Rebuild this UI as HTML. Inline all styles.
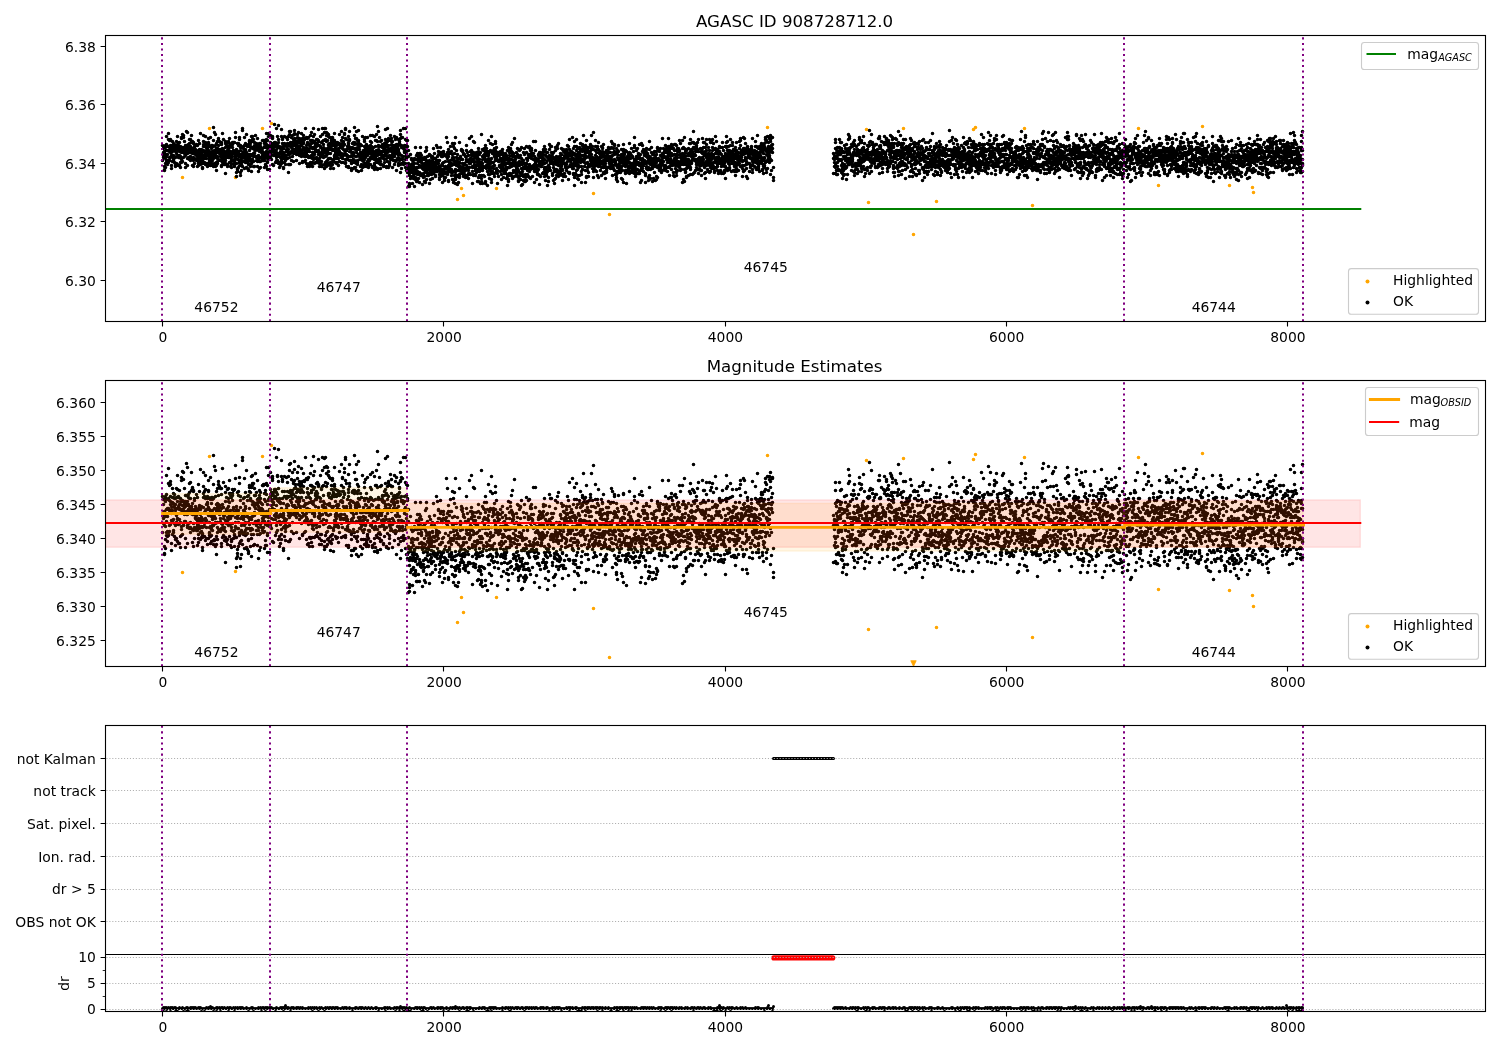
<!DOCTYPE html>
<html><head><meta charset="utf-8"><title>AGASC ID 908728712.0</title>
<style>html,body{margin:0;padding:0;background:#fff}svg{display:block;will-change:transform}text{font-family:"DejaVu Sans","Liberation Sans",sans-serif;font-size:13.89px;fill:#000}</style></head>
<body>
<svg width="1500" height="1050" viewBox="0 0 1500 1050">
<defs>
<clipPath id="c0"><rect x="105.5" y="35.5" width="1380.0" height="286.0"/></clipPath>
<clipPath id="c1"><rect x="105.5" y="380.5" width="1380.0" height="286.0"/></clipPath>
<clipPath id="c2"><rect x="105.5" y="725.5" width="1380.0" height="286.0"/></clipPath>
</defs>
<rect width="1500" height="1050" fill="#fff"/>
<g clip-path="url(#c0)">
<path d="M182.5 177.5h0M209.5 128.5h0M235.5 177.5h0M262.5 128.5h0M271.5 123.5h0M457.5 199.5h0M461.5 188.5h0M463.5 195.5h0M496.5 188.5h0M593.5 193.5h0M609.5 214.5h0M767.5 127.5h0M866.5 129.5h0M868.5 202.5h0M903.5 128.5h0M936.5 201.5h0M973.5 129.5h0M975.5 127.5h0M1024.5 128.5h0M1032.5 205.5h0M1138.5 128.5h0M1158.5 185.5h0M1202.5 126.5h0M1229.5 185.5h0M1252.5 187.5h0M1253.5 192.5h0M913.5 234.5h0" stroke="#ffa500" fill="none" stroke-linecap="round" stroke-width="3.6"/>
<path d="M162.5 145.5h0M162.5 160.5h0M163.5 148.5h0M163.5 146.5h0M163.5 157.5h0M163.5 154.5h0M163.5 153.5h0M163.5 152.5h0M163.5 155.5h0M164.5 153.5h0M164.5 170.5h0M164.5 169.5h0M164.5 151.5h0M164.5 157.5h0M164.5 153.5h0M164.5 166.5h0M165.5 158.5h0M165.5 163.5h0M165.5 167.5h0M165.5 154.5h0M165.5 146.5h0M165.5 145.5h0M165.5 147.5h0M166.5 160.5h0M166.5 144.5h0M166.5 136.5h0M166.5 162.5h0M166.5 156.5h0M166.5 150.5h0M166.5 146.5h0M167.5 154.5h0M167.5 162.5h0M167.5 164.5h0M167.5 162.5h0M167.5 150.5h0M167.5 161.5h0M167.5 160.5h0M168.5 146.5h0M168.5 139.5h0M168.5 162.5h0M168.5 133.5h0M168.5 160.5h0M168.5 150.5h0M168.5 161.5h0M169.5 160.5h0M169.5 140.5h0M169.5 147.5h0M169.5 140.5h0M169.5 151.5h0M169.5 157.5h0M169.5 160.5h0M170.5 157.5h0M170.5 139.5h0M170.5 152.5h0M170.5 148.5h0M170.5 145.5h0M170.5 140.5h0M170.5 147.5h0M171.5 165.5h0M171.5 151.5h0M171.5 148.5h0M171.5 155.5h0M171.5 168.5h0M171.5 152.5h0M171.5 149.5h0M172.5 145.5h0M172.5 151.5h0M172.5 161.5h0M172.5 141.5h0M172.5 145.5h0M172.5 156.5h0M172.5 147.5h0M173.5 148.5h0M173.5 160.5h0M173.5 143.5h0M173.5 145.5h0M173.5 149.5h0M173.5 155.5h0M173.5 159.5h0M174.5 162.5h0M174.5 149.5h0M174.5 150.5h0M174.5 156.5h0M174.5 146.5h0M174.5 144.5h0M175.5 157.5h0M175.5 150.5h0M175.5 146.5h0M175.5 166.5h0M175.5 148.5h0M175.5 151.5h0M175.5 164.5h0M176.5 163.5h0M176.5 156.5h0M176.5 145.5h0M176.5 153.5h0M176.5 141.5h0M176.5 156.5h0M176.5 145.5h0M177.5 142.5h0M177.5 147.5h0M177.5 155.5h0M177.5 136.5h0M177.5 150.5h0M177.5 164.5h0M177.5 155.5h0M178.5 149.5h0M178.5 157.5h0M178.5 145.5h0M178.5 157.5h0M178.5 157.5h0M178.5 165.5h0M178.5 145.5h0M179.5 142.5h0M179.5 151.5h0M179.5 148.5h0M179.5 165.5h0M179.5 155.5h0M179.5 150.5h0M179.5 157.5h0M180.5 156.5h0M180.5 148.5h0M180.5 147.5h0M180.5 146.5h0M180.5 162.5h0M180.5 167.5h0M180.5 156.5h0M181.5 137.5h0M181.5 162.5h0M181.5 138.5h0M181.5 158.5h0M181.5 159.5h0M181.5 152.5h0M181.5 150.5h0M182.5 161.5h0M182.5 150.5h0M182.5 147.5h0M182.5 134.5h0M182.5 147.5h0M182.5 151.5h0M182.5 149.5h0M183.5 157.5h0M183.5 152.5h0M183.5 135.5h0M183.5 157.5h0M183.5 151.5h0M183.5 151.5h0M183.5 137.5h0M184.5 149.5h0M184.5 156.5h0M184.5 147.5h0M184.5 141.5h0M184.5 153.5h0M184.5 148.5h0M184.5 150.5h0M185.5 148.5h0M185.5 145.5h0M185.5 155.5h0M185.5 147.5h0M185.5 167.5h0M185.5 149.5h0M185.5 163.5h0M186.5 149.5h0M186.5 151.5h0M186.5 145.5h0M186.5 148.5h0M186.5 131.5h0M186.5 153.5h0M186.5 152.5h0M187.5 153.5h0M187.5 165.5h0M187.5 132.5h0M187.5 152.5h0M187.5 158.5h0M187.5 158.5h0M187.5 147.5h0M188.5 157.5h0M188.5 150.5h0M188.5 152.5h0M188.5 149.5h0M188.5 150.5h0M188.5 145.5h0M188.5 144.5h0M189.5 158.5h0M189.5 139.5h0M189.5 149.5h0M189.5 146.5h0M189.5 152.5h0M189.5 159.5h0M189.5 143.5h0M190.5 156.5h0M190.5 146.5h0M190.5 152.5h0M190.5 150.5h0M190.5 139.5h0M190.5 160.5h0M190.5 158.5h0M191.5 151.5h0M191.5 150.5h0M191.5 152.5h0M191.5 135.5h0M191.5 149.5h0M191.5 142.5h0M192.5 141.5h0M192.5 159.5h0M192.5 142.5h0M192.5 165.5h0M192.5 153.5h0M192.5 148.5h0M192.5 153.5h0M193.5 143.5h0M193.5 157.5h0M193.5 160.5h0M193.5 153.5h0M193.5 142.5h0M193.5 166.5h0M193.5 151.5h0M194.5 163.5h0M194.5 158.5h0M194.5 151.5h0M194.5 146.5h0M194.5 147.5h0M194.5 151.5h0M194.5 152.5h0M195.5 152.5h0M195.5 154.5h0M195.5 149.5h0M195.5 149.5h0M195.5 152.5h0M195.5 154.5h0M195.5 159.5h0M196.5 155.5h0M196.5 153.5h0M196.5 144.5h0M196.5 158.5h0M196.5 152.5h0M196.5 150.5h0M196.5 160.5h0M197.5 157.5h0M197.5 158.5h0M197.5 160.5h0M197.5 145.5h0M197.5 156.5h0M197.5 151.5h0M197.5 166.5h0M198.5 163.5h0M198.5 140.5h0M198.5 157.5h0M198.5 154.5h0M198.5 165.5h0M198.5 161.5h0M198.5 152.5h0M199.5 155.5h0M199.5 143.5h0M199.5 150.5h0M199.5 159.5h0M199.5 149.5h0M199.5 152.5h0M199.5 149.5h0M200.5 133.5h0M200.5 156.5h0M200.5 160.5h0M200.5 150.5h0M200.5 164.5h0M200.5 156.5h0M200.5 153.5h0M201.5 154.5h0M201.5 149.5h0M201.5 155.5h0M201.5 152.5h0M201.5 162.5h0M201.5 160.5h0M201.5 158.5h0M202.5 158.5h0M202.5 167.5h0M202.5 162.5h0M202.5 168.5h0M202.5 155.5h0M202.5 161.5h0M202.5 163.5h0M203.5 144.5h0M203.5 141.5h0M203.5 150.5h0M203.5 146.5h0M203.5 155.5h0M203.5 135.5h0M203.5 158.5h0M204.5 155.5h0M204.5 156.5h0M204.5 158.5h0M204.5 152.5h0M204.5 145.5h0M204.5 143.5h0M204.5 162.5h0M205.5 155.5h0M205.5 142.5h0M205.5 154.5h0M205.5 164.5h0M205.5 151.5h0M205.5 136.5h0M205.5 146.5h0M206.5 151.5h0M206.5 158.5h0M206.5 155.5h0M206.5 148.5h0M206.5 163.5h0M206.5 145.5h0M206.5 145.5h0M207.5 146.5h0M207.5 166.5h0M207.5 147.5h0M207.5 148.5h0M207.5 145.5h0M207.5 151.5h0M208.5 153.5h0M208.5 142.5h0M208.5 150.5h0M208.5 145.5h0M208.5 138.5h0M208.5 163.5h0M208.5 143.5h0M209.5 156.5h0M209.5 151.5h0M209.5 162.5h0M209.5 153.5h0M209.5 161.5h0M209.5 160.5h0M209.5 158.5h0M210.5 146.5h0M210.5 152.5h0M210.5 158.5h0M210.5 162.5h0M210.5 152.5h0M210.5 165.5h0M210.5 137.5h0M211.5 148.5h0M211.5 154.5h0M211.5 162.5h0M211.5 145.5h0M211.5 158.5h0M211.5 164.5h0M211.5 159.5h0M212.5 160.5h0M212.5 145.5h0M212.5 155.5h0M212.5 157.5h0M212.5 151.5h0M212.5 154.5h0M212.5 146.5h0M213.5 166.5h0M213.5 127.5h0M213.5 153.5h0M213.5 140.5h0M213.5 158.5h0M213.5 146.5h0M213.5 164.5h0M214.5 132.5h0M214.5 153.5h0M214.5 150.5h0M214.5 163.5h0M214.5 155.5h0M214.5 154.5h0M214.5 164.5h0M215.5 156.5h0M215.5 166.5h0M215.5 154.5h0M215.5 134.5h0M215.5 157.5h0M215.5 154.5h0M215.5 145.5h0M216.5 152.5h0M216.5 151.5h0M216.5 162.5h0M216.5 165.5h0M216.5 170.5h0M216.5 143.5h0M216.5 148.5h0M217.5 161.5h0M217.5 158.5h0M217.5 150.5h0M217.5 148.5h0M217.5 163.5h0M217.5 141.5h0M217.5 156.5h0M218.5 140.5h0M218.5 150.5h0M218.5 159.5h0M218.5 138.5h0M218.5 145.5h0M218.5 151.5h0M218.5 149.5h0M219.5 141.5h0M219.5 152.5h0M219.5 149.5h0M219.5 153.5h0M219.5 149.5h0M219.5 149.5h0M219.5 152.5h0M220.5 142.5h0M220.5 156.5h0M220.5 149.5h0M220.5 152.5h0M220.5 160.5h0M220.5 154.5h0M220.5 151.5h0M221.5 159.5h0M221.5 144.5h0M221.5 142.5h0M221.5 156.5h0M221.5 166.5h0M221.5 150.5h0M221.5 165.5h0M222.5 159.5h0M222.5 159.5h0M222.5 158.5h0M222.5 162.5h0M222.5 148.5h0M222.5 157.5h0M222.5 133.5h0M223.5 152.5h0M223.5 139.5h0M223.5 162.5h0M223.5 150.5h0M223.5 155.5h0M223.5 153.5h0M224.5 152.5h0M224.5 160.5h0M224.5 152.5h0M224.5 164.5h0M224.5 158.5h0M224.5 164.5h0M224.5 153.5h0M225.5 147.5h0M225.5 143.5h0M225.5 160.5h0M225.5 141.5h0M225.5 163.5h0M225.5 155.5h0M225.5 173.5h0M226.5 151.5h0M226.5 152.5h0M226.5 152.5h0M226.5 157.5h0M226.5 145.5h0M226.5 151.5h0M226.5 164.5h0M227.5 142.5h0M227.5 154.5h0M227.5 166.5h0M227.5 164.5h0M227.5 150.5h0M227.5 154.5h0M227.5 156.5h0M228.5 146.5h0M228.5 152.5h0M228.5 141.5h0M228.5 149.5h0M228.5 155.5h0M228.5 157.5h0M228.5 147.5h0M229.5 157.5h0M229.5 143.5h0M229.5 162.5h0M229.5 147.5h0M229.5 157.5h0M229.5 153.5h0M229.5 138.5h0M230.5 166.5h0M230.5 154.5h0M230.5 144.5h0M230.5 145.5h0M230.5 154.5h0M230.5 151.5h0M230.5 157.5h0M231.5 145.5h0M231.5 153.5h0M231.5 167.5h0M231.5 164.5h0M231.5 160.5h0M231.5 158.5h0M231.5 163.5h0M232.5 144.5h0M232.5 147.5h0M232.5 142.5h0M232.5 153.5h0M232.5 144.5h0M232.5 156.5h0M232.5 144.5h0M233.5 152.5h0M233.5 160.5h0M233.5 152.5h0M233.5 163.5h0M233.5 151.5h0M233.5 150.5h0M233.5 142.5h0M234.5 152.5h0M234.5 152.5h0M234.5 161.5h0M234.5 159.5h0M234.5 162.5h0M234.5 142.5h0M234.5 166.5h0M235.5 163.5h0M235.5 158.5h0M235.5 158.5h0M235.5 156.5h0M235.5 154.5h0M235.5 132.5h0M235.5 137.5h0M236.5 150.5h0M236.5 151.5h0M236.5 151.5h0M236.5 172.5h0M236.5 176.5h0M236.5 149.5h0M236.5 163.5h0M237.5 171.5h0M237.5 159.5h0M237.5 168.5h0M237.5 154.5h0M237.5 169.5h0M237.5 154.5h0M237.5 143.5h0M238.5 153.5h0M238.5 159.5h0M238.5 151.5h0M238.5 145.5h0M238.5 167.5h0M238.5 143.5h0M238.5 156.5h0M239.5 162.5h0M239.5 137.5h0M239.5 165.5h0M239.5 160.5h0M239.5 161.5h0M239.5 139.5h0M240.5 147.5h0M240.5 172.5h0M240.5 175.5h0M240.5 164.5h0M240.5 145.5h0M240.5 154.5h0M240.5 150.5h0M241.5 170.5h0M241.5 154.5h0M241.5 159.5h0M241.5 160.5h0M241.5 157.5h0M241.5 164.5h0M241.5 161.5h0M242.5 166.5h0M242.5 157.5h0M242.5 153.5h0M242.5 161.5h0M242.5 130.5h0M242.5 157.5h0M242.5 128.5h0M243.5 153.5h0M243.5 148.5h0M243.5 151.5h0M243.5 154.5h0M243.5 155.5h0M243.5 146.5h0M243.5 161.5h0M244.5 145.5h0M244.5 151.5h0M244.5 152.5h0M244.5 157.5h0M244.5 137.5h0M244.5 168.5h0M244.5 160.5h0M245.5 157.5h0M245.5 162.5h0M245.5 156.5h0M245.5 150.5h0M245.5 143.5h0M245.5 149.5h0M245.5 159.5h0M246.5 161.5h0M246.5 134.5h0M246.5 161.5h0M246.5 159.5h0M246.5 152.5h0M246.5 167.5h0M246.5 154.5h0M247.5 161.5h0M247.5 146.5h0M247.5 154.5h0M247.5 159.5h0M247.5 168.5h0M247.5 145.5h0M247.5 161.5h0M248.5 154.5h0M248.5 164.5h0M248.5 169.5h0M248.5 170.5h0M248.5 144.5h0M248.5 163.5h0M248.5 156.5h0M249.5 159.5h0M249.5 155.5h0M249.5 143.5h0M249.5 140.5h0M249.5 150.5h0M249.5 141.5h0M249.5 157.5h0M250.5 147.5h0M250.5 143.5h0M250.5 146.5h0M250.5 160.5h0M250.5 166.5h0M250.5 154.5h0M250.5 146.5h0M251.5 155.5h0M251.5 163.5h0M251.5 141.5h0M251.5 159.5h0M251.5 171.5h0M251.5 136.5h0M251.5 161.5h0M252.5 136.5h0M252.5 159.5h0M252.5 147.5h0M252.5 140.5h0M252.5 154.5h0M252.5 139.5h0M252.5 148.5h0M253.5 156.5h0M253.5 153.5h0M253.5 139.5h0M253.5 147.5h0M253.5 148.5h0M253.5 166.5h0M253.5 161.5h0M254.5 153.5h0M254.5 149.5h0M254.5 142.5h0M254.5 152.5h0M254.5 149.5h0M254.5 145.5h0M254.5 166.5h0M255.5 144.5h0M255.5 148.5h0M255.5 135.5h0M255.5 148.5h0M255.5 150.5h0M255.5 156.5h0M255.5 144.5h0M256.5 160.5h0M256.5 157.5h0M256.5 148.5h0M256.5 143.5h0M256.5 157.5h0M256.5 156.5h0M257.5 166.5h0M257.5 146.5h0M257.5 138.5h0M257.5 148.5h0M257.5 147.5h0M257.5 156.5h0M257.5 161.5h0M258.5 155.5h0M258.5 149.5h0M258.5 150.5h0M258.5 146.5h0M258.5 158.5h0M258.5 171.5h0M258.5 160.5h0M259.5 143.5h0M259.5 168.5h0M259.5 147.5h0M259.5 161.5h0M259.5 146.5h0M259.5 151.5h0M259.5 144.5h0M260.5 146.5h0M260.5 161.5h0M260.5 148.5h0M260.5 143.5h0M260.5 167.5h0M260.5 150.5h0M260.5 157.5h0M261.5 152.5h0M261.5 158.5h0M261.5 152.5h0M261.5 152.5h0M261.5 148.5h0M261.5 150.5h0M261.5 148.5h0M262.5 156.5h0M262.5 151.5h0M262.5 160.5h0M262.5 154.5h0M262.5 148.5h0M262.5 156.5h0M262.5 140.5h0M263.5 160.5h0M263.5 140.5h0M263.5 158.5h0M263.5 152.5h0M263.5 140.5h0M263.5 154.5h0M263.5 154.5h0M264.5 167.5h0M264.5 140.5h0M264.5 153.5h0M264.5 146.5h0M264.5 160.5h0M264.5 143.5h0M264.5 156.5h0M265.5 157.5h0M265.5 153.5h0M265.5 142.5h0M265.5 147.5h0M265.5 144.5h0M265.5 164.5h0M265.5 166.5h0M266.5 133.5h0M266.5 151.5h0M266.5 166.5h0M266.5 144.5h0M266.5 139.5h0M266.5 154.5h0M266.5 153.5h0M267.5 140.5h0M267.5 161.5h0M267.5 158.5h0M267.5 169.5h0M267.5 162.5h0M267.5 148.5h0M267.5 157.5h0M268.5 136.5h0M268.5 154.5h0M268.5 146.5h0M268.5 147.5h0M268.5 156.5h0M268.5 133.5h0M268.5 153.5h0M269.5 151.5h0M269.5 156.5h0M269.5 158.5h0M269.5 151.5h0M269.5 152.5h0M269.5 169.5h0M269.5 145.5h0M270.5 142.5h0M270.5 152.5h0M270.5 158.5h0M270.5 135.5h0M270.5 157.5h0M270.5 145.5h0M270.5 146.5h0M271.5 154.5h0M271.5 143.5h0M271.5 159.5h0M271.5 149.5h0M271.5 146.5h0M271.5 147.5h0M271.5 144.5h0M272.5 136.5h0M272.5 137.5h0M272.5 150.5h0M272.5 164.5h0M272.5 138.5h0M272.5 147.5h0M273.5 165.5h0M273.5 148.5h0M273.5 155.5h0M273.5 147.5h0M273.5 151.5h0M273.5 144.5h0M273.5 143.5h0M274.5 142.5h0M274.5 153.5h0M274.5 124.5h0M274.5 143.5h0M274.5 151.5h0M274.5 151.5h0M274.5 146.5h0M275.5 155.5h0M275.5 142.5h0M275.5 145.5h0M275.5 153.5h0M275.5 153.5h0M275.5 142.5h0M275.5 162.5h0M276.5 160.5h0M276.5 149.5h0M276.5 128.5h0M276.5 152.5h0M276.5 146.5h0M276.5 143.5h0M276.5 157.5h0M277.5 136.5h0M277.5 144.5h0M277.5 153.5h0M277.5 147.5h0M277.5 156.5h0M277.5 160.5h0M277.5 136.5h0M278.5 147.5h0M278.5 139.5h0M278.5 125.5h0M278.5 147.5h0M278.5 142.5h0M278.5 154.5h0M278.5 163.5h0M279.5 147.5h0M279.5 153.5h0M279.5 146.5h0M279.5 167.5h0M279.5 162.5h0M279.5 146.5h0M279.5 156.5h0M280.5 151.5h0M280.5 153.5h0M280.5 157.5h0M280.5 165.5h0M280.5 153.5h0M280.5 148.5h0M280.5 148.5h0M281.5 159.5h0M281.5 129.5h0M281.5 163.5h0M281.5 161.5h0M281.5 136.5h0M281.5 153.5h0M281.5 150.5h0M282.5 138.5h0M282.5 156.5h0M282.5 139.5h0M282.5 146.5h0M282.5 146.5h0M282.5 153.5h0M282.5 143.5h0M283.5 148.5h0M283.5 168.5h0M283.5 154.5h0M283.5 167.5h0M283.5 153.5h0M283.5 158.5h0M283.5 152.5h0M284.5 162.5h0M284.5 154.5h0M284.5 145.5h0M284.5 158.5h0M284.5 155.5h0M284.5 136.5h0M284.5 143.5h0M285.5 160.5h0M285.5 159.5h0M285.5 157.5h0M285.5 155.5h0M285.5 164.5h0M285.5 155.5h0M285.5 160.5h0M286.5 145.5h0M286.5 137.5h0M286.5 155.5h0M286.5 151.5h0M286.5 149.5h0M286.5 150.5h0M286.5 146.5h0M287.5 143.5h0M287.5 148.5h0M287.5 158.5h0M287.5 139.5h0M287.5 145.5h0M287.5 149.5h0M287.5 145.5h0M288.5 136.5h0M288.5 153.5h0M288.5 164.5h0M288.5 172.5h0M288.5 149.5h0M288.5 152.5h0M289.5 154.5h0M289.5 145.5h0M289.5 134.5h0M289.5 143.5h0M289.5 164.5h0M289.5 131.5h0M289.5 157.5h0M290.5 131.5h0M290.5 146.5h0M290.5 153.5h0M290.5 164.5h0M290.5 142.5h0M290.5 152.5h0M290.5 152.5h0M291.5 137.5h0M291.5 144.5h0M291.5 147.5h0M291.5 143.5h0M291.5 160.5h0M291.5 144.5h0M291.5 151.5h0M292.5 143.5h0M292.5 149.5h0M292.5 149.5h0M292.5 142.5h0M292.5 135.5h0M292.5 156.5h0M292.5 146.5h0M293.5 153.5h0M293.5 161.5h0M293.5 152.5h0M293.5 144.5h0M293.5 149.5h0M293.5 139.5h0M293.5 139.5h0M294.5 138.5h0M294.5 141.5h0M294.5 134.5h0M294.5 133.5h0M294.5 152.5h0M294.5 149.5h0M294.5 130.5h0M295.5 153.5h0M295.5 145.5h0M295.5 150.5h0M295.5 152.5h0M295.5 141.5h0M295.5 140.5h0M295.5 151.5h0M296.5 143.5h0M296.5 147.5h0M296.5 143.5h0M296.5 160.5h0M296.5 150.5h0M296.5 154.5h0M296.5 150.5h0M297.5 152.5h0M297.5 146.5h0M297.5 134.5h0M297.5 137.5h0M297.5 142.5h0M297.5 151.5h0M297.5 143.5h0M298.5 142.5h0M298.5 142.5h0M298.5 140.5h0M298.5 132.5h0M298.5 147.5h0M298.5 148.5h0M298.5 146.5h0M299.5 146.5h0M299.5 138.5h0M299.5 163.5h0M299.5 147.5h0M299.5 153.5h0M299.5 155.5h0M299.5 149.5h0M300.5 149.5h0M300.5 140.5h0M300.5 142.5h0M300.5 139.5h0M300.5 141.5h0M300.5 143.5h0M300.5 150.5h0M301.5 142.5h0M301.5 145.5h0M301.5 156.5h0M301.5 154.5h0M301.5 133.5h0M301.5 140.5h0M301.5 139.5h0M302.5 143.5h0M302.5 138.5h0M302.5 152.5h0M302.5 162.5h0M302.5 161.5h0M302.5 154.5h0M302.5 143.5h0M303.5 153.5h0M303.5 149.5h0M303.5 141.5h0M303.5 147.5h0M303.5 153.5h0M303.5 135.5h0M303.5 143.5h0M304.5 138.5h0M304.5 156.5h0M304.5 149.5h0M304.5 161.5h0M304.5 149.5h0M304.5 139.5h0M305.5 156.5h0M305.5 148.5h0M305.5 160.5h0M305.5 128.5h0M305.5 155.5h0M305.5 148.5h0M305.5 152.5h0M306.5 163.5h0M306.5 151.5h0M306.5 155.5h0M306.5 154.5h0M306.5 152.5h0M306.5 137.5h0M306.5 145.5h0M307.5 143.5h0M307.5 148.5h0M307.5 150.5h0M307.5 142.5h0M307.5 138.5h0M307.5 166.5h0M307.5 155.5h0M308.5 157.5h0M308.5 157.5h0M308.5 144.5h0M308.5 156.5h0M308.5 165.5h0M308.5 137.5h0M308.5 143.5h0M309.5 163.5h0M309.5 151.5h0M309.5 145.5h0M309.5 166.5h0M309.5 151.5h0M309.5 156.5h0M309.5 148.5h0M310.5 146.5h0M310.5 157.5h0M310.5 135.5h0M310.5 163.5h0M310.5 162.5h0M310.5 140.5h0M310.5 156.5h0M311.5 155.5h0M311.5 147.5h0M311.5 165.5h0M311.5 142.5h0M311.5 132.5h0M311.5 140.5h0M311.5 143.5h0M312.5 158.5h0M312.5 166.5h0M312.5 152.5h0M312.5 140.5h0M312.5 162.5h0M312.5 148.5h0M312.5 157.5h0M313.5 157.5h0M313.5 159.5h0M313.5 148.5h0M313.5 128.5h0M313.5 136.5h0M313.5 147.5h0M313.5 142.5h0M314.5 152.5h0M314.5 153.5h0M314.5 141.5h0M314.5 141.5h0M314.5 134.5h0M314.5 163.5h0M314.5 154.5h0M315.5 149.5h0M315.5 149.5h0M315.5 146.5h0M315.5 145.5h0M315.5 144.5h0M315.5 151.5h0M315.5 162.5h0M316.5 146.5h0M316.5 146.5h0M316.5 139.5h0M316.5 143.5h0M316.5 162.5h0M316.5 158.5h0M316.5 157.5h0M317.5 145.5h0M317.5 160.5h0M317.5 162.5h0M317.5 139.5h0M317.5 144.5h0M317.5 151.5h0M317.5 145.5h0M318.5 129.5h0M318.5 140.5h0M318.5 141.5h0M318.5 154.5h0M318.5 154.5h0M318.5 150.5h0M318.5 140.5h0M319.5 154.5h0M319.5 145.5h0M319.5 152.5h0M319.5 166.5h0M319.5 163.5h0M319.5 154.5h0M319.5 158.5h0M320.5 136.5h0M320.5 147.5h0M320.5 153.5h0M320.5 156.5h0M320.5 146.5h0M320.5 161.5h0M321.5 142.5h0M321.5 156.5h0M321.5 142.5h0M321.5 164.5h0M321.5 165.5h0M321.5 161.5h0M321.5 166.5h0M322.5 134.5h0M322.5 151.5h0M322.5 141.5h0M322.5 153.5h0M322.5 149.5h0M322.5 128.5h0M322.5 149.5h0M323.5 155.5h0M323.5 157.5h0M323.5 144.5h0M323.5 157.5h0M323.5 149.5h0M323.5 147.5h0M323.5 140.5h0M324.5 167.5h0M324.5 128.5h0M324.5 132.5h0M324.5 148.5h0M324.5 164.5h0M324.5 150.5h0M324.5 168.5h0M325.5 150.5h0M325.5 150.5h0M325.5 152.5h0M325.5 156.5h0M325.5 128.5h0M325.5 162.5h0M325.5 139.5h0M326.5 132.5h0M326.5 141.5h0M326.5 135.5h0M326.5 153.5h0M326.5 155.5h0M326.5 161.5h0M326.5 166.5h0M327.5 164.5h0M327.5 140.5h0M327.5 133.5h0M327.5 148.5h0M327.5 151.5h0M327.5 160.5h0M327.5 165.5h0M328.5 144.5h0M328.5 153.5h0M328.5 145.5h0M328.5 163.5h0M328.5 136.5h0M328.5 134.5h0M328.5 158.5h0M329.5 158.5h0M329.5 164.5h0M329.5 145.5h0M329.5 137.5h0M329.5 148.5h0M329.5 149.5h0M329.5 143.5h0M330.5 164.5h0M330.5 153.5h0M330.5 158.5h0M330.5 165.5h0M330.5 168.5h0M330.5 137.5h0M330.5 162.5h0M331.5 142.5h0M331.5 165.5h0M331.5 145.5h0M331.5 149.5h0M331.5 162.5h0M331.5 140.5h0M331.5 146.5h0M332.5 164.5h0M332.5 145.5h0M332.5 142.5h0M332.5 138.5h0M332.5 137.5h0M332.5 150.5h0M332.5 161.5h0M333.5 160.5h0M333.5 149.5h0M333.5 168.5h0M333.5 159.5h0M333.5 144.5h0M333.5 143.5h0M333.5 149.5h0M334.5 156.5h0M334.5 145.5h0M334.5 140.5h0M334.5 155.5h0M334.5 133.5h0M334.5 158.5h0M334.5 140.5h0M335.5 153.5h0M335.5 156.5h0M335.5 151.5h0M335.5 142.5h0M335.5 147.5h0M335.5 162.5h0M335.5 153.5h0M336.5 145.5h0M336.5 163.5h0M336.5 144.5h0M336.5 155.5h0M336.5 158.5h0M336.5 149.5h0M336.5 152.5h0M337.5 150.5h0M337.5 157.5h0M337.5 149.5h0M337.5 150.5h0M337.5 162.5h0M337.5 142.5h0M338.5 148.5h0M338.5 158.5h0M338.5 149.5h0M338.5 165.5h0M338.5 153.5h0M338.5 158.5h0M338.5 144.5h0M339.5 154.5h0M339.5 161.5h0M339.5 143.5h0M339.5 144.5h0M339.5 134.5h0M339.5 153.5h0M339.5 151.5h0M340.5 144.5h0M340.5 153.5h0M340.5 147.5h0M340.5 155.5h0M340.5 154.5h0M340.5 154.5h0M340.5 153.5h0M341.5 157.5h0M341.5 131.5h0M341.5 153.5h0M341.5 140.5h0M341.5 147.5h0M341.5 162.5h0M341.5 162.5h0M342.5 155.5h0M342.5 137.5h0M342.5 147.5h0M342.5 158.5h0M342.5 148.5h0M342.5 143.5h0M342.5 137.5h0M343.5 149.5h0M343.5 143.5h0M343.5 143.5h0M343.5 162.5h0M343.5 141.5h0M343.5 155.5h0M343.5 145.5h0M344.5 134.5h0M344.5 154.5h0M344.5 153.5h0M344.5 144.5h0M344.5 133.5h0M344.5 144.5h0M344.5 150.5h0M345.5 129.5h0M345.5 163.5h0M345.5 162.5h0M345.5 159.5h0M345.5 128.5h0M345.5 151.5h0M345.5 138.5h0M346.5 155.5h0M346.5 139.5h0M346.5 149.5h0M346.5 155.5h0M346.5 154.5h0M346.5 150.5h0M346.5 166.5h0M347.5 159.5h0M347.5 146.5h0M347.5 158.5h0M347.5 155.5h0M347.5 159.5h0M347.5 146.5h0M347.5 155.5h0M348.5 167.5h0M348.5 143.5h0M348.5 136.5h0M348.5 166.5h0M348.5 156.5h0M348.5 142.5h0M348.5 145.5h0M349.5 160.5h0M349.5 140.5h0M349.5 131.5h0M349.5 160.5h0M349.5 148.5h0M349.5 151.5h0M349.5 139.5h0M350.5 160.5h0M350.5 149.5h0M350.5 147.5h0M350.5 150.5h0M350.5 149.5h0M350.5 156.5h0M350.5 150.5h0M351.5 155.5h0M351.5 168.5h0M351.5 156.5h0M351.5 163.5h0M351.5 161.5h0M351.5 152.5h0M351.5 170.5h0M352.5 156.5h0M352.5 155.5h0M352.5 143.5h0M352.5 152.5h0M352.5 160.5h0M352.5 147.5h0M352.5 143.5h0M353.5 152.5h0M353.5 159.5h0M353.5 148.5h0M353.5 142.5h0M353.5 154.5h0M353.5 168.5h0M354.5 160.5h0M354.5 144.5h0M354.5 162.5h0M354.5 167.5h0M354.5 127.5h0M354.5 142.5h0M354.5 135.5h0M355.5 138.5h0M355.5 167.5h0M355.5 148.5h0M355.5 156.5h0M355.5 149.5h0M355.5 149.5h0M355.5 143.5h0M356.5 150.5h0M356.5 156.5h0M356.5 131.5h0M356.5 152.5h0M356.5 138.5h0M356.5 163.5h0M356.5 170.5h0M357.5 144.5h0M357.5 149.5h0M357.5 147.5h0M357.5 140.5h0M357.5 160.5h0M357.5 162.5h0M357.5 164.5h0M358.5 148.5h0M358.5 171.5h0M358.5 142.5h0M358.5 140.5h0M358.5 154.5h0M358.5 130.5h0M358.5 146.5h0M359.5 155.5h0M359.5 154.5h0M359.5 156.5h0M359.5 146.5h0M359.5 149.5h0M359.5 155.5h0M359.5 159.5h0M360.5 156.5h0M360.5 166.5h0M360.5 152.5h0M360.5 144.5h0M360.5 159.5h0M360.5 152.5h0M360.5 154.5h0M361.5 164.5h0M361.5 158.5h0M361.5 156.5h0M361.5 170.5h0M361.5 152.5h0M361.5 157.5h0M361.5 145.5h0M362.5 136.5h0M362.5 160.5h0M362.5 152.5h0M362.5 155.5h0M362.5 152.5h0M362.5 156.5h0M362.5 167.5h0M363.5 157.5h0M363.5 153.5h0M363.5 164.5h0M363.5 155.5h0M363.5 150.5h0M363.5 155.5h0M363.5 161.5h0M364.5 166.5h0M364.5 139.5h0M364.5 146.5h0M364.5 159.5h0M364.5 155.5h0M364.5 146.5h0M364.5 141.5h0M365.5 157.5h0M365.5 137.5h0M365.5 148.5h0M365.5 157.5h0M365.5 154.5h0M365.5 152.5h0M365.5 163.5h0M366.5 165.5h0M366.5 152.5h0M366.5 149.5h0M366.5 146.5h0M366.5 166.5h0M366.5 144.5h0M366.5 165.5h0M367.5 161.5h0M367.5 152.5h0M367.5 163.5h0M367.5 155.5h0M367.5 162.5h0M367.5 137.5h0M367.5 151.5h0M368.5 147.5h0M368.5 163.5h0M368.5 150.5h0M368.5 167.5h0M368.5 159.5h0M368.5 146.5h0M368.5 166.5h0M369.5 153.5h0M369.5 160.5h0M369.5 150.5h0M369.5 160.5h0M369.5 151.5h0M369.5 152.5h0M370.5 157.5h0M370.5 164.5h0M370.5 151.5h0M370.5 145.5h0M370.5 141.5h0M370.5 135.5h0M370.5 146.5h0M371.5 154.5h0M371.5 146.5h0M371.5 157.5h0M371.5 152.5h0M371.5 158.5h0M371.5 148.5h0M371.5 142.5h0M372.5 149.5h0M372.5 166.5h0M372.5 152.5h0M372.5 151.5h0M372.5 167.5h0M372.5 158.5h0M372.5 135.5h0M373.5 152.5h0M373.5 151.5h0M373.5 156.5h0M373.5 147.5h0M373.5 153.5h0M373.5 153.5h0M373.5 152.5h0M374.5 136.5h0M374.5 165.5h0M374.5 169.5h0M374.5 159.5h0M374.5 159.5h0M374.5 153.5h0M374.5 163.5h0M375.5 167.5h0M375.5 156.5h0M375.5 158.5h0M375.5 158.5h0M375.5 140.5h0M375.5 146.5h0M375.5 153.5h0M376.5 153.5h0M376.5 151.5h0M376.5 152.5h0M376.5 140.5h0M376.5 134.5h0M376.5 150.5h0M376.5 161.5h0M377.5 169.5h0M377.5 162.5h0M377.5 155.5h0M377.5 159.5h0M377.5 168.5h0M377.5 141.5h0M377.5 126.5h0M378.5 150.5h0M378.5 154.5h0M378.5 145.5h0M378.5 149.5h0M378.5 146.5h0M378.5 161.5h0M378.5 131.5h0M379.5 163.5h0M379.5 158.5h0M379.5 160.5h0M379.5 152.5h0M379.5 153.5h0M379.5 137.5h0M379.5 153.5h0M380.5 161.5h0M380.5 158.5h0M380.5 151.5h0M380.5 141.5h0M380.5 164.5h0M380.5 146.5h0M380.5 168.5h0M381.5 153.5h0M381.5 164.5h0M381.5 140.5h0M381.5 152.5h0M381.5 155.5h0M381.5 153.5h0M381.5 146.5h0M382.5 145.5h0M382.5 157.5h0M382.5 144.5h0M382.5 151.5h0M382.5 146.5h0M382.5 147.5h0M382.5 156.5h0M383.5 157.5h0M383.5 158.5h0M383.5 166.5h0M383.5 165.5h0M383.5 155.5h0M383.5 155.5h0M383.5 148.5h0M384.5 143.5h0M384.5 159.5h0M384.5 155.5h0M384.5 147.5h0M384.5 145.5h0M384.5 151.5h0M384.5 162.5h0M385.5 139.5h0M385.5 129.5h0M385.5 142.5h0M385.5 153.5h0M385.5 149.5h0M385.5 149.5h0M386.5 144.5h0M386.5 166.5h0M386.5 167.5h0M386.5 155.5h0M386.5 158.5h0M386.5 155.5h0M386.5 150.5h0M387.5 146.5h0M387.5 161.5h0M387.5 145.5h0M387.5 151.5h0M387.5 141.5h0M387.5 128.5h0M387.5 152.5h0M388.5 156.5h0M388.5 138.5h0M388.5 148.5h0M388.5 139.5h0M388.5 151.5h0M388.5 145.5h0M388.5 167.5h0M389.5 155.5h0M389.5 155.5h0M389.5 162.5h0M389.5 165.5h0M389.5 157.5h0M389.5 163.5h0M389.5 150.5h0M390.5 140.5h0M390.5 156.5h0M390.5 158.5h0M390.5 135.5h0M390.5 149.5h0M390.5 159.5h0M390.5 149.5h0M391.5 141.5h0M391.5 138.5h0M391.5 144.5h0M391.5 151.5h0M391.5 138.5h0M391.5 159.5h0M391.5 147.5h0M392.5 157.5h0M392.5 146.5h0M392.5 147.5h0M392.5 141.5h0M392.5 167.5h0M392.5 154.5h0M392.5 155.5h0M393.5 145.5h0M393.5 151.5h0M393.5 150.5h0M393.5 160.5h0M393.5 147.5h0M393.5 148.5h0M393.5 155.5h0M394.5 148.5h0M394.5 145.5h0M394.5 156.5h0M394.5 147.5h0M394.5 149.5h0M394.5 164.5h0M394.5 136.5h0M395.5 161.5h0M395.5 153.5h0M395.5 146.5h0M395.5 138.5h0M395.5 151.5h0M395.5 139.5h0M395.5 160.5h0M396.5 144.5h0M396.5 150.5h0M396.5 137.5h0M396.5 153.5h0M396.5 145.5h0M396.5 160.5h0M396.5 170.5h0M397.5 145.5h0M397.5 151.5h0M397.5 144.5h0M397.5 147.5h0M397.5 158.5h0M397.5 153.5h0M397.5 148.5h0M398.5 149.5h0M398.5 151.5h0M398.5 165.5h0M398.5 139.5h0M398.5 155.5h0M398.5 163.5h0M398.5 144.5h0M399.5 160.5h0M399.5 158.5h0M399.5 141.5h0M399.5 141.5h0M399.5 153.5h0M399.5 159.5h0M399.5 143.5h0M400.5 138.5h0M400.5 164.5h0M400.5 134.5h0M400.5 172.5h0M400.5 145.5h0M400.5 130.5h0M400.5 138.5h0M401.5 137.5h0M401.5 155.5h0M401.5 168.5h0M401.5 163.5h0M401.5 147.5h0M401.5 147.5h0M401.5 145.5h0M402.5 137.5h0M402.5 158.5h0M402.5 156.5h0M402.5 159.5h0M402.5 147.5h0M402.5 158.5h0M403.5 162.5h0M403.5 148.5h0M403.5 148.5h0M403.5 128.5h0M403.5 156.5h0M403.5 164.5h0M403.5 156.5h0M404.5 147.5h0M404.5 152.5h0M404.5 163.5h0M404.5 152.5h0M404.5 145.5h0M404.5 150.5h0M404.5 151.5h0M405.5 167.5h0M405.5 139.5h0M405.5 151.5h0M405.5 150.5h0M405.5 159.5h0M405.5 128.5h0M405.5 163.5h0M406.5 156.5h0M406.5 145.5h0M406.5 170.5h0M406.5 140.5h0M406.5 155.5h0M406.5 158.5h0M406.5 153.5h0M407.5 140.5h0M407.5 146.5h0M407.5 156.5h0M407.5 172.5h0M407.5 146.5h0M407.5 170.5h0M407.5 156.5h0M408.5 163.5h0M408.5 150.5h0M408.5 156.5h0M408.5 166.5h0M408.5 169.5h0M408.5 167.5h0M408.5 186.5h0M409.5 183.5h0M409.5 186.5h0M409.5 184.5h0M409.5 172.5h0M409.5 173.5h0M409.5 172.5h0M409.5 175.5h0M410.5 168.5h0M410.5 171.5h0M410.5 171.5h0M410.5 178.5h0M410.5 154.5h0M410.5 169.5h0M410.5 172.5h0M411.5 158.5h0M411.5 164.5h0M411.5 159.5h0M411.5 176.5h0M411.5 165.5h0M411.5 167.5h0M411.5 177.5h0M412.5 165.5h0M412.5 163.5h0M412.5 183.5h0M412.5 160.5h0M412.5 176.5h0M412.5 172.5h0M412.5 170.5h0M413.5 160.5h0M413.5 172.5h0M413.5 171.5h0M413.5 166.5h0M413.5 178.5h0M413.5 169.5h0M413.5 175.5h0M414.5 170.5h0M414.5 170.5h0M414.5 168.5h0M414.5 163.5h0M414.5 168.5h0M414.5 186.5h0M414.5 158.5h0M415.5 179.5h0M415.5 159.5h0M415.5 171.5h0M415.5 177.5h0M415.5 147.5h0M415.5 178.5h0M415.5 173.5h0M416.5 167.5h0M416.5 170.5h0M416.5 155.5h0M416.5 172.5h0M416.5 159.5h0M416.5 181.5h0M416.5 167.5h0M417.5 171.5h0M417.5 153.5h0M417.5 159.5h0M417.5 174.5h0M417.5 163.5h0M417.5 181.5h0M417.5 163.5h0M418.5 161.5h0M418.5 156.5h0M418.5 178.5h0M418.5 157.5h0M418.5 167.5h0M418.5 159.5h0M419.5 153.5h0M419.5 165.5h0M419.5 157.5h0M419.5 182.5h0M419.5 173.5h0M419.5 154.5h0M419.5 172.5h0M420.5 157.5h0M420.5 147.5h0M420.5 174.5h0M420.5 175.5h0M420.5 173.5h0M420.5 153.5h0M420.5 159.5h0M421.5 160.5h0M421.5 162.5h0M421.5 175.5h0M421.5 155.5h0M421.5 167.5h0M421.5 165.5h0M421.5 161.5h0M422.5 184.5h0M422.5 168.5h0M422.5 158.5h0M422.5 167.5h0M422.5 159.5h0M422.5 174.5h0M422.5 166.5h0M423.5 173.5h0M423.5 177.5h0M423.5 177.5h0M423.5 165.5h0M423.5 169.5h0M423.5 174.5h0M423.5 174.5h0M424.5 176.5h0M424.5 163.5h0M424.5 167.5h0M424.5 159.5h0M424.5 157.5h0M424.5 181.5h0M424.5 158.5h0M425.5 182.5h0M425.5 166.5h0M425.5 151.5h0M425.5 169.5h0M425.5 159.5h0M425.5 171.5h0M425.5 157.5h0M426.5 172.5h0M426.5 162.5h0M426.5 179.5h0M426.5 147.5h0M426.5 167.5h0M426.5 160.5h0M426.5 150.5h0M427.5 156.5h0M427.5 164.5h0M427.5 175.5h0M427.5 161.5h0M427.5 156.5h0M427.5 169.5h0M427.5 170.5h0M428.5 168.5h0M428.5 167.5h0M428.5 163.5h0M428.5 165.5h0M428.5 173.5h0M428.5 175.5h0M428.5 173.5h0M429.5 164.5h0M429.5 154.5h0M429.5 161.5h0M429.5 162.5h0M429.5 183.5h0M429.5 166.5h0M429.5 160.5h0M430.5 170.5h0M430.5 167.5h0M430.5 179.5h0M430.5 163.5h0M430.5 172.5h0M430.5 172.5h0M430.5 155.5h0M431.5 173.5h0M431.5 168.5h0M431.5 174.5h0M431.5 163.5h0M431.5 171.5h0M431.5 165.5h0M431.5 157.5h0M432.5 161.5h0M432.5 164.5h0M432.5 156.5h0M432.5 173.5h0M432.5 178.5h0M432.5 167.5h0M432.5 160.5h0M433.5 169.5h0M433.5 169.5h0M433.5 162.5h0M433.5 173.5h0M433.5 148.5h0M433.5 168.5h0M433.5 170.5h0M434.5 164.5h0M434.5 163.5h0M434.5 166.5h0M434.5 171.5h0M434.5 158.5h0M434.5 153.5h0M435.5 162.5h0M435.5 162.5h0M435.5 169.5h0M435.5 171.5h0M435.5 175.5h0M435.5 176.5h0M435.5 158.5h0M436.5 162.5h0M436.5 160.5h0M436.5 145.5h0M436.5 160.5h0M436.5 171.5h0M436.5 164.5h0M436.5 161.5h0M437.5 156.5h0M437.5 162.5h0M437.5 147.5h0M437.5 167.5h0M437.5 170.5h0M437.5 161.5h0M437.5 171.5h0M438.5 151.5h0M438.5 160.5h0M438.5 163.5h0M438.5 169.5h0M438.5 168.5h0M438.5 154.5h0M438.5 151.5h0M439.5 179.5h0M439.5 160.5h0M439.5 174.5h0M439.5 177.5h0M439.5 169.5h0M439.5 154.5h0M439.5 166.5h0M440.5 147.5h0M440.5 173.5h0M440.5 152.5h0M440.5 166.5h0M440.5 171.5h0M440.5 171.5h0M440.5 176.5h0M441.5 165.5h0M441.5 155.5h0M441.5 170.5h0M441.5 171.5h0M441.5 169.5h0M441.5 152.5h0M441.5 156.5h0M442.5 163.5h0M442.5 175.5h0M442.5 165.5h0M442.5 173.5h0M442.5 156.5h0M442.5 182.5h0M442.5 169.5h0M443.5 151.5h0M443.5 169.5h0M443.5 162.5h0M443.5 169.5h0M443.5 154.5h0M443.5 153.5h0M443.5 173.5h0M444.5 180.5h0M444.5 178.5h0M444.5 168.5h0M444.5 171.5h0M444.5 173.5h0M444.5 177.5h0M444.5 155.5h0M445.5 161.5h0M445.5 173.5h0M445.5 177.5h0M445.5 173.5h0M445.5 166.5h0M445.5 172.5h0M445.5 155.5h0M446.5 156.5h0M446.5 172.5h0M446.5 154.5h0M446.5 173.5h0M446.5 156.5h0M446.5 156.5h0M446.5 137.5h0M447.5 142.5h0M447.5 173.5h0M447.5 174.5h0M447.5 168.5h0M447.5 158.5h0M447.5 152.5h0M447.5 169.5h0M448.5 149.5h0M448.5 152.5h0M448.5 180.5h0M448.5 181.5h0M448.5 156.5h0M448.5 161.5h0M448.5 165.5h0M449.5 168.5h0M449.5 168.5h0M449.5 171.5h0M449.5 167.5h0M449.5 153.5h0M449.5 170.5h0M449.5 164.5h0M450.5 164.5h0M450.5 163.5h0M450.5 146.5h0M450.5 160.5h0M450.5 152.5h0M450.5 164.5h0M451.5 169.5h0M451.5 151.5h0M451.5 172.5h0M451.5 175.5h0M451.5 163.5h0M451.5 165.5h0M451.5 170.5h0M452.5 172.5h0M452.5 158.5h0M452.5 157.5h0M452.5 143.5h0M452.5 179.5h0M452.5 154.5h0M452.5 171.5h0M453.5 157.5h0M453.5 159.5h0M453.5 146.5h0M453.5 160.5h0M453.5 163.5h0M453.5 164.5h0M453.5 182.5h0M454.5 143.5h0M454.5 153.5h0M454.5 162.5h0M454.5 179.5h0M454.5 148.5h0M454.5 175.5h0M454.5 171.5h0M455.5 169.5h0M455.5 137.5h0M455.5 177.5h0M455.5 172.5h0M455.5 179.5h0M455.5 183.5h0M455.5 176.5h0M456.5 163.5h0M456.5 160.5h0M456.5 175.5h0M456.5 150.5h0M456.5 170.5h0M456.5 157.5h0M456.5 165.5h0M457.5 161.5h0M457.5 161.5h0M457.5 175.5h0M457.5 163.5h0M457.5 154.5h0M457.5 176.5h0M457.5 184.5h0M458.5 158.5h0M458.5 163.5h0M458.5 182.5h0M458.5 170.5h0M458.5 166.5h0M458.5 158.5h0M458.5 176.5h0M459.5 174.5h0M459.5 177.5h0M459.5 142.5h0M459.5 162.5h0M459.5 176.5h0M459.5 168.5h0M459.5 163.5h0M460.5 156.5h0M460.5 170.5h0M460.5 166.5h0M460.5 159.5h0M460.5 168.5h0M460.5 173.5h0M460.5 157.5h0M461.5 168.5h0M461.5 170.5h0M461.5 173.5h0M461.5 167.5h0M461.5 150.5h0M461.5 149.5h0M461.5 172.5h0M462.5 173.5h0M462.5 150.5h0M462.5 171.5h0M462.5 163.5h0M462.5 151.5h0M462.5 159.5h0M462.5 166.5h0M463.5 176.5h0M463.5 169.5h0M463.5 154.5h0M463.5 153.5h0M463.5 165.5h0M463.5 165.5h0M463.5 173.5h0M464.5 174.5h0M464.5 168.5h0M464.5 163.5h0M464.5 171.5h0M464.5 163.5h0M464.5 169.5h0M464.5 154.5h0M465.5 170.5h0M465.5 177.5h0M465.5 168.5h0M465.5 156.5h0M465.5 170.5h0M465.5 175.5h0M465.5 176.5h0M466.5 161.5h0M466.5 156.5h0M466.5 145.5h0M466.5 160.5h0M466.5 150.5h0M466.5 159.5h0M466.5 165.5h0M467.5 169.5h0M467.5 161.5h0M467.5 175.5h0M467.5 161.5h0M467.5 152.5h0M467.5 161.5h0M468.5 178.5h0M468.5 174.5h0M468.5 167.5h0M468.5 173.5h0M468.5 155.5h0M468.5 170.5h0M468.5 155.5h0M469.5 163.5h0M469.5 159.5h0M469.5 167.5h0M469.5 163.5h0M469.5 161.5h0M469.5 173.5h0M469.5 138.5h0M470.5 163.5h0M470.5 158.5h0M470.5 151.5h0M470.5 162.5h0M470.5 162.5h0M470.5 159.5h0M470.5 174.5h0M471.5 154.5h0M471.5 136.5h0M471.5 158.5h0M471.5 155.5h0M471.5 159.5h0M471.5 150.5h0M471.5 151.5h0M472.5 160.5h0M472.5 171.5h0M472.5 183.5h0M472.5 166.5h0M472.5 153.5h0M472.5 167.5h0M472.5 166.5h0M473.5 160.5h0M473.5 155.5h0M473.5 152.5h0M473.5 174.5h0M473.5 141.5h0M473.5 175.5h0M473.5 161.5h0M474.5 157.5h0M474.5 161.5h0M474.5 174.5h0M474.5 164.5h0M474.5 154.5h0M474.5 166.5h0M474.5 142.5h0M475.5 166.5h0M475.5 155.5h0M475.5 170.5h0M475.5 174.5h0M475.5 168.5h0M475.5 167.5h0M475.5 175.5h0M476.5 158.5h0M476.5 161.5h0M476.5 157.5h0M476.5 152.5h0M476.5 169.5h0M476.5 172.5h0M476.5 164.5h0M477.5 165.5h0M477.5 157.5h0M477.5 164.5h0M477.5 181.5h0M477.5 157.5h0M477.5 161.5h0M477.5 171.5h0M478.5 154.5h0M478.5 181.5h0M478.5 165.5h0M478.5 177.5h0M478.5 151.5h0M478.5 169.5h0M478.5 148.5h0M479.5 175.5h0M479.5 154.5h0M479.5 167.5h0M479.5 159.5h0M479.5 175.5h0M479.5 162.5h0M479.5 171.5h0M480.5 169.5h0M480.5 183.5h0M480.5 177.5h0M480.5 177.5h0M480.5 163.5h0M480.5 165.5h0M480.5 152.5h0M481.5 178.5h0M481.5 182.5h0M481.5 165.5h0M481.5 162.5h0M481.5 175.5h0M481.5 134.5h0M481.5 181.5h0M482.5 163.5h0M482.5 159.5h0M482.5 156.5h0M482.5 183.5h0M482.5 170.5h0M482.5 149.5h0M482.5 168.5h0M483.5 166.5h0M483.5 155.5h0M483.5 167.5h0M483.5 155.5h0M483.5 150.5h0M483.5 175.5h0M484.5 148.5h0M484.5 157.5h0M484.5 158.5h0M484.5 154.5h0M484.5 176.5h0M484.5 150.5h0M484.5 154.5h0M485.5 152.5h0M485.5 161.5h0M485.5 183.5h0M485.5 145.5h0M485.5 181.5h0M485.5 159.5h0M485.5 159.5h0M486.5 168.5h0M486.5 165.5h0M486.5 161.5h0M486.5 148.5h0M486.5 166.5h0M486.5 161.5h0M486.5 155.5h0M487.5 151.5h0M487.5 154.5h0M487.5 162.5h0M487.5 166.5h0M487.5 161.5h0M487.5 185.5h0M487.5 171.5h0M488.5 174.5h0M488.5 153.5h0M488.5 155.5h0M488.5 171.5h0M488.5 159.5h0M488.5 158.5h0M488.5 140.5h0M489.5 166.5h0M489.5 174.5h0M489.5 164.5h0M489.5 151.5h0M489.5 170.5h0M489.5 178.5h0M489.5 168.5h0M490.5 161.5h0M490.5 170.5h0M490.5 151.5h0M490.5 163.5h0M490.5 150.5h0M490.5 143.5h0M490.5 161.5h0M491.5 173.5h0M491.5 136.5h0M491.5 179.5h0M491.5 167.5h0M491.5 158.5h0M491.5 182.5h0M491.5 162.5h0M492.5 153.5h0M492.5 167.5h0M492.5 171.5h0M492.5 166.5h0M492.5 144.5h0M492.5 171.5h0M492.5 162.5h0M493.5 152.5h0M493.5 173.5h0M493.5 152.5h0M493.5 150.5h0M493.5 162.5h0M493.5 151.5h0M493.5 168.5h0M494.5 173.5h0M494.5 153.5h0M494.5 155.5h0M494.5 148.5h0M494.5 156.5h0M494.5 165.5h0M494.5 176.5h0M495.5 158.5h0M495.5 160.5h0M495.5 143.5h0M495.5 141.5h0M495.5 156.5h0M495.5 150.5h0M495.5 159.5h0M496.5 168.5h0M496.5 158.5h0M496.5 169.5h0M496.5 171.5h0M496.5 156.5h0M496.5 169.5h0M496.5 147.5h0M497.5 160.5h0M497.5 170.5h0M497.5 152.5h0M497.5 183.5h0M497.5 173.5h0M497.5 154.5h0M497.5 153.5h0M498.5 155.5h0M498.5 155.5h0M498.5 152.5h0M498.5 176.5h0M498.5 153.5h0M498.5 161.5h0M498.5 160.5h0M499.5 161.5h0M499.5 161.5h0M499.5 165.5h0M499.5 155.5h0M499.5 160.5h0M499.5 166.5h0M500.5 171.5h0M500.5 158.5h0M500.5 167.5h0M500.5 158.5h0M500.5 151.5h0M500.5 153.5h0M500.5 159.5h0M501.5 166.5h0M501.5 174.5h0M501.5 170.5h0M501.5 170.5h0M501.5 164.5h0M501.5 179.5h0M501.5 164.5h0M502.5 158.5h0M502.5 154.5h0M502.5 149.5h0M502.5 158.5h0M502.5 163.5h0M502.5 161.5h0M502.5 152.5h0M503.5 168.5h0M503.5 162.5h0M503.5 161.5h0M503.5 177.5h0M503.5 156.5h0M503.5 165.5h0M503.5 171.5h0M504.5 170.5h0M504.5 162.5h0M504.5 156.5h0M504.5 173.5h0M504.5 169.5h0M504.5 158.5h0M504.5 159.5h0M505.5 172.5h0M505.5 159.5h0M505.5 153.5h0M505.5 157.5h0M505.5 164.5h0M505.5 170.5h0M505.5 156.5h0M506.5 157.5h0M506.5 169.5h0M506.5 167.5h0M506.5 169.5h0M506.5 155.5h0M506.5 178.5h0M506.5 167.5h0M507.5 159.5h0M507.5 176.5h0M507.5 150.5h0M507.5 174.5h0M507.5 185.5h0M507.5 158.5h0M507.5 162.5h0M508.5 147.5h0M508.5 158.5h0M508.5 167.5h0M508.5 179.5h0M508.5 181.5h0M508.5 162.5h0M508.5 163.5h0M509.5 152.5h0M509.5 162.5h0M509.5 158.5h0M509.5 159.5h0M509.5 167.5h0M509.5 155.5h0M509.5 173.5h0M510.5 175.5h0M510.5 148.5h0M510.5 164.5h0M510.5 166.5h0M510.5 164.5h0M510.5 173.5h0M510.5 149.5h0M511.5 163.5h0M511.5 166.5h0M511.5 175.5h0M511.5 151.5h0M511.5 144.5h0M511.5 151.5h0M511.5 159.5h0M512.5 155.5h0M512.5 156.5h0M512.5 153.5h0M512.5 178.5h0M512.5 156.5h0M512.5 142.5h0M512.5 152.5h0M513.5 155.5h0M513.5 172.5h0M513.5 170.5h0M513.5 165.5h0M513.5 153.5h0M513.5 154.5h0M513.5 161.5h0M514.5 163.5h0M514.5 138.5h0M514.5 156.5h0M514.5 159.5h0M514.5 165.5h0M514.5 176.5h0M514.5 171.5h0M515.5 164.5h0M515.5 171.5h0M515.5 171.5h0M515.5 162.5h0M515.5 159.5h0M515.5 159.5h0M516.5 172.5h0M516.5 156.5h0M516.5 169.5h0M516.5 175.5h0M516.5 174.5h0M516.5 167.5h0M516.5 152.5h0M517.5 165.5h0M517.5 154.5h0M517.5 168.5h0M517.5 175.5h0M517.5 164.5h0M517.5 148.5h0M517.5 176.5h0M518.5 181.5h0M518.5 162.5h0M518.5 170.5h0M518.5 180.5h0M518.5 149.5h0M518.5 157.5h0M518.5 177.5h0M519.5 165.5h0M519.5 161.5h0M519.5 150.5h0M519.5 157.5h0M519.5 157.5h0M519.5 176.5h0M519.5 172.5h0M520.5 175.5h0M520.5 149.5h0M520.5 149.5h0M520.5 179.5h0M520.5 155.5h0M520.5 173.5h0M520.5 162.5h0M521.5 185.5h0M521.5 173.5h0M521.5 168.5h0M521.5 161.5h0M521.5 158.5h0M521.5 147.5h0M521.5 162.5h0M522.5 164.5h0M522.5 163.5h0M522.5 174.5h0M522.5 163.5h0M522.5 168.5h0M522.5 184.5h0M522.5 171.5h0M523.5 175.5h0M523.5 152.5h0M523.5 176.5h0M523.5 180.5h0M523.5 167.5h0M523.5 160.5h0M523.5 163.5h0M524.5 168.5h0M524.5 148.5h0M524.5 163.5h0M524.5 168.5h0M524.5 180.5h0M524.5 181.5h0M524.5 154.5h0M525.5 179.5h0M525.5 181.5h0M525.5 176.5h0M525.5 166.5h0M525.5 167.5h0M525.5 174.5h0M525.5 163.5h0M526.5 152.5h0M526.5 180.5h0M526.5 158.5h0M526.5 166.5h0M526.5 146.5h0M526.5 167.5h0M526.5 163.5h0M527.5 176.5h0M527.5 169.5h0M527.5 170.5h0M527.5 174.5h0M527.5 159.5h0M527.5 158.5h0M527.5 160.5h0M528.5 155.5h0M528.5 154.5h0M528.5 154.5h0M528.5 169.5h0M528.5 176.5h0M528.5 147.5h0M528.5 170.5h0M529.5 164.5h0M529.5 169.5h0M529.5 171.5h0M529.5 154.5h0M529.5 177.5h0M529.5 166.5h0M529.5 146.5h0M530.5 166.5h0M530.5 169.5h0M530.5 178.5h0M530.5 157.5h0M530.5 150.5h0M530.5 149.5h0M530.5 150.5h0M531.5 154.5h0M531.5 166.5h0M531.5 150.5h0M531.5 153.5h0M531.5 158.5h0M531.5 168.5h0M531.5 148.5h0M532.5 168.5h0M532.5 166.5h0M532.5 155.5h0M532.5 176.5h0M532.5 155.5h0M532.5 168.5h0M533.5 168.5h0M533.5 153.5h0M533.5 168.5h0M533.5 165.5h0M533.5 141.5h0M533.5 166.5h0M533.5 159.5h0M534.5 156.5h0M534.5 164.5h0M534.5 182.5h0M534.5 169.5h0M534.5 171.5h0M534.5 165.5h0M534.5 166.5h0M535.5 161.5h0M535.5 171.5h0M535.5 158.5h0M535.5 150.5h0M535.5 163.5h0M535.5 168.5h0M535.5 141.5h0M536.5 171.5h0M536.5 160.5h0M536.5 179.5h0M536.5 168.5h0M536.5 158.5h0M536.5 171.5h0M536.5 169.5h0M537.5 160.5h0M537.5 171.5h0M537.5 174.5h0M537.5 165.5h0M537.5 159.5h0M537.5 159.5h0M537.5 166.5h0M538.5 160.5h0M538.5 169.5h0M538.5 155.5h0M538.5 174.5h0M538.5 161.5h0M538.5 154.5h0M538.5 169.5h0M539.5 184.5h0M539.5 157.5h0M539.5 175.5h0M539.5 153.5h0M539.5 163.5h0M539.5 152.5h0M539.5 162.5h0M540.5 176.5h0M540.5 161.5h0M540.5 163.5h0M540.5 166.5h0M540.5 152.5h0M540.5 163.5h0M540.5 154.5h0M541.5 165.5h0M541.5 165.5h0M541.5 157.5h0M541.5 162.5h0M541.5 163.5h0M541.5 166.5h0M541.5 157.5h0M542.5 153.5h0M542.5 164.5h0M542.5 173.5h0M542.5 154.5h0M542.5 160.5h0M542.5 157.5h0M542.5 153.5h0M543.5 172.5h0M543.5 158.5h0M543.5 149.5h0M543.5 151.5h0M543.5 149.5h0M543.5 161.5h0M543.5 154.5h0M544.5 176.5h0M544.5 173.5h0M544.5 163.5h0M544.5 159.5h0M544.5 146.5h0M544.5 167.5h0M544.5 169.5h0M545.5 155.5h0M545.5 175.5h0M545.5 149.5h0M545.5 170.5h0M545.5 180.5h0M545.5 170.5h0M545.5 175.5h0M546.5 152.5h0M546.5 175.5h0M546.5 162.5h0M546.5 156.5h0M546.5 173.5h0M546.5 167.5h0M546.5 171.5h0M547.5 171.5h0M547.5 168.5h0M547.5 168.5h0M547.5 152.5h0M547.5 160.5h0M547.5 185.5h0M547.5 157.5h0M548.5 158.5h0M548.5 181.5h0M548.5 177.5h0M548.5 168.5h0M548.5 157.5h0M548.5 165.5h0M549.5 144.5h0M549.5 149.5h0M549.5 155.5h0M549.5 155.5h0M549.5 159.5h0M549.5 169.5h0M549.5 167.5h0M550.5 162.5h0M550.5 158.5h0M550.5 146.5h0M550.5 163.5h0M550.5 170.5h0M550.5 156.5h0M550.5 156.5h0M551.5 152.5h0M551.5 157.5h0M551.5 157.5h0M551.5 158.5h0M551.5 146.5h0M551.5 161.5h0M551.5 155.5h0M552.5 154.5h0M552.5 163.5h0M552.5 158.5h0M552.5 173.5h0M552.5 161.5h0M552.5 175.5h0M552.5 162.5h0M553.5 180.5h0M553.5 167.5h0M553.5 164.5h0M553.5 163.5h0M553.5 162.5h0M553.5 152.5h0M553.5 157.5h0M554.5 183.5h0M554.5 171.5h0M554.5 171.5h0M554.5 170.5h0M554.5 162.5h0M554.5 179.5h0M554.5 169.5h0M555.5 178.5h0M555.5 160.5h0M555.5 171.5h0M555.5 159.5h0M555.5 161.5h0M555.5 147.5h0M555.5 150.5h0M556.5 164.5h0M556.5 161.5h0M556.5 163.5h0M556.5 156.5h0M556.5 175.5h0M556.5 162.5h0M556.5 169.5h0M557.5 170.5h0M557.5 162.5h0M557.5 172.5h0M557.5 148.5h0M557.5 172.5h0M557.5 161.5h0M557.5 145.5h0M558.5 143.5h0M558.5 158.5h0M558.5 176.5h0M558.5 165.5h0M558.5 164.5h0M558.5 159.5h0M558.5 164.5h0M559.5 157.5h0M559.5 171.5h0M559.5 173.5h0M559.5 156.5h0M559.5 160.5h0M559.5 175.5h0M559.5 161.5h0M560.5 153.5h0M560.5 168.5h0M560.5 157.5h0M560.5 172.5h0M560.5 159.5h0M560.5 153.5h0M560.5 171.5h0M561.5 162.5h0M561.5 174.5h0M561.5 166.5h0M561.5 148.5h0M561.5 164.5h0M561.5 161.5h0M561.5 154.5h0M562.5 175.5h0M562.5 169.5h0M562.5 158.5h0M562.5 170.5h0M562.5 149.5h0M562.5 180.5h0M562.5 162.5h0M563.5 159.5h0M563.5 151.5h0M563.5 160.5h0M563.5 176.5h0M563.5 174.5h0M563.5 163.5h0M563.5 149.5h0M564.5 157.5h0M564.5 158.5h0M564.5 155.5h0M564.5 155.5h0M564.5 152.5h0M564.5 173.5h0M565.5 167.5h0M565.5 156.5h0M565.5 163.5h0M565.5 154.5h0M565.5 176.5h0M565.5 154.5h0M565.5 165.5h0M566.5 151.5h0M566.5 153.5h0M566.5 170.5h0M566.5 149.5h0M566.5 154.5h0M566.5 163.5h0M566.5 164.5h0M567.5 145.5h0M567.5 153.5h0M567.5 167.5h0M567.5 152.5h0M567.5 158.5h0M567.5 161.5h0M567.5 156.5h0M568.5 158.5h0M568.5 179.5h0M568.5 160.5h0M568.5 159.5h0M568.5 172.5h0M568.5 146.5h0M568.5 159.5h0M569.5 166.5h0M569.5 154.5h0M569.5 160.5h0M569.5 173.5h0M569.5 172.5h0M569.5 149.5h0M569.5 139.5h0M570.5 152.5h0M570.5 160.5h0M570.5 159.5h0M570.5 161.5h0M570.5 155.5h0M570.5 164.5h0M570.5 154.5h0M571.5 159.5h0M571.5 151.5h0M571.5 156.5h0M571.5 166.5h0M571.5 163.5h0M571.5 159.5h0M571.5 156.5h0M572.5 137.5h0M572.5 158.5h0M572.5 167.5h0M572.5 153.5h0M572.5 152.5h0M572.5 159.5h0M572.5 168.5h0M573.5 173.5h0M573.5 165.5h0M573.5 148.5h0M573.5 158.5h0M573.5 168.5h0M573.5 154.5h0M573.5 174.5h0M574.5 153.5h0M574.5 163.5h0M574.5 141.5h0M574.5 177.5h0M574.5 185.5h0M574.5 146.5h0M574.5 161.5h0M575.5 174.5h0M575.5 155.5h0M575.5 165.5h0M575.5 154.5h0M575.5 173.5h0M575.5 154.5h0M575.5 158.5h0M576.5 161.5h0M576.5 150.5h0M576.5 170.5h0M576.5 139.5h0M576.5 146.5h0M576.5 159.5h0M576.5 154.5h0M577.5 169.5h0M577.5 148.5h0M577.5 178.5h0M577.5 175.5h0M577.5 157.5h0M577.5 164.5h0M577.5 166.5h0M578.5 152.5h0M578.5 161.5h0M578.5 167.5h0M578.5 179.5h0M578.5 153.5h0M578.5 165.5h0M578.5 152.5h0M579.5 147.5h0M579.5 155.5h0M579.5 175.5h0M579.5 153.5h0M579.5 157.5h0M579.5 148.5h0M579.5 158.5h0M580.5 155.5h0M580.5 162.5h0M580.5 143.5h0M580.5 157.5h0M580.5 150.5h0M580.5 160.5h0M581.5 149.5h0M581.5 155.5h0M581.5 182.5h0M581.5 174.5h0M581.5 171.5h0M581.5 159.5h0M581.5 166.5h0M582.5 144.5h0M582.5 148.5h0M582.5 151.5h0M582.5 149.5h0M582.5 161.5h0M582.5 145.5h0M582.5 169.5h0M583.5 159.5h0M583.5 158.5h0M583.5 148.5h0M583.5 161.5h0M583.5 135.5h0M583.5 159.5h0M583.5 155.5h0M584.5 148.5h0M584.5 158.5h0M584.5 162.5h0M584.5 146.5h0M584.5 159.5h0M584.5 166.5h0M584.5 155.5h0M585.5 153.5h0M585.5 145.5h0M585.5 151.5h0M585.5 170.5h0M585.5 163.5h0M585.5 182.5h0M585.5 163.5h0M586.5 148.5h0M586.5 157.5h0M586.5 177.5h0M586.5 140.5h0M586.5 156.5h0M586.5 152.5h0M586.5 176.5h0M587.5 167.5h0M587.5 147.5h0M587.5 149.5h0M587.5 147.5h0M587.5 162.5h0M587.5 167.5h0M587.5 170.5h0M588.5 152.5h0M588.5 151.5h0M588.5 152.5h0M588.5 176.5h0M588.5 165.5h0M588.5 151.5h0M588.5 172.5h0M589.5 147.5h0M589.5 157.5h0M589.5 164.5h0M589.5 164.5h0M589.5 166.5h0M589.5 156.5h0M589.5 154.5h0M590.5 159.5h0M590.5 159.5h0M590.5 145.5h0M590.5 151.5h0M590.5 144.5h0M590.5 160.5h0M590.5 159.5h0M591.5 157.5h0M591.5 162.5h0M591.5 159.5h0M591.5 135.5h0M591.5 163.5h0M591.5 149.5h0M591.5 154.5h0M592.5 168.5h0M592.5 165.5h0M592.5 168.5h0M592.5 157.5h0M592.5 146.5h0M592.5 161.5h0M592.5 163.5h0M593.5 166.5h0M593.5 162.5h0M593.5 132.5h0M593.5 149.5h0M593.5 171.5h0M593.5 158.5h0M593.5 177.5h0M594.5 165.5h0M594.5 160.5h0M594.5 169.5h0M594.5 166.5h0M594.5 162.5h0M594.5 158.5h0M594.5 165.5h0M595.5 140.5h0M595.5 164.5h0M595.5 146.5h0M595.5 150.5h0M595.5 170.5h0M595.5 155.5h0M595.5 140.5h0M596.5 156.5h0M596.5 165.5h0M596.5 163.5h0M596.5 152.5h0M596.5 171.5h0M596.5 156.5h0M596.5 161.5h0M597.5 146.5h0M597.5 148.5h0M597.5 159.5h0M597.5 165.5h0M597.5 175.5h0M597.5 159.5h0M598.5 149.5h0M598.5 161.5h0M598.5 152.5h0M598.5 177.5h0M598.5 142.5h0M598.5 162.5h0M598.5 166.5h0M599.5 162.5h0M599.5 161.5h0M599.5 164.5h0M599.5 159.5h0M599.5 153.5h0M599.5 158.5h0M599.5 157.5h0M600.5 153.5h0M600.5 151.5h0M600.5 170.5h0M600.5 152.5h0M600.5 151.5h0M600.5 155.5h0M600.5 166.5h0M601.5 161.5h0M601.5 153.5h0M601.5 167.5h0M601.5 175.5h0M601.5 157.5h0M601.5 153.5h0M601.5 146.5h0M602.5 151.5h0M602.5 155.5h0M602.5 162.5h0M602.5 147.5h0M602.5 163.5h0M602.5 153.5h0M602.5 148.5h0M603.5 162.5h0M603.5 166.5h0M603.5 173.5h0M603.5 160.5h0M603.5 167.5h0M603.5 172.5h0M603.5 144.5h0M604.5 161.5h0M604.5 165.5h0M604.5 173.5h0M604.5 155.5h0M604.5 152.5h0M604.5 166.5h0M604.5 157.5h0M605.5 163.5h0M605.5 171.5h0M605.5 158.5h0M605.5 160.5h0M605.5 166.5h0M605.5 167.5h0M605.5 178.5h0M606.5 170.5h0M606.5 150.5h0M606.5 157.5h0M606.5 157.5h0M606.5 158.5h0M606.5 156.5h0M606.5 172.5h0M607.5 152.5h0M607.5 167.5h0M607.5 154.5h0M607.5 152.5h0M607.5 153.5h0M607.5 152.5h0M607.5 160.5h0M608.5 152.5h0M608.5 160.5h0M608.5 167.5h0M608.5 167.5h0M608.5 147.5h0M608.5 149.5h0M608.5 167.5h0M609.5 156.5h0M609.5 159.5h0M609.5 166.5h0M609.5 163.5h0M609.5 161.5h0M609.5 167.5h0M609.5 157.5h0M610.5 160.5h0M610.5 152.5h0M610.5 158.5h0M610.5 148.5h0M610.5 168.5h0M610.5 156.5h0M610.5 158.5h0M611.5 156.5h0M611.5 147.5h0M611.5 165.5h0M611.5 163.5h0M611.5 141.5h0M611.5 157.5h0M611.5 163.5h0M612.5 168.5h0M612.5 161.5h0M612.5 160.5h0M612.5 175.5h0M612.5 165.5h0M612.5 143.5h0M612.5 155.5h0M613.5 161.5h0M613.5 152.5h0M613.5 148.5h0M613.5 168.5h0M613.5 160.5h0M613.5 165.5h0M614.5 151.5h0M614.5 154.5h0M614.5 170.5h0M614.5 144.5h0M614.5 145.5h0M614.5 159.5h0M614.5 154.5h0M615.5 160.5h0M615.5 153.5h0M615.5 174.5h0M615.5 162.5h0M615.5 153.5h0M615.5 152.5h0M615.5 164.5h0M616.5 174.5h0M616.5 165.5h0M616.5 153.5h0M616.5 179.5h0M616.5 148.5h0M616.5 177.5h0M616.5 171.5h0M617.5 154.5h0M617.5 167.5h0M617.5 157.5h0M617.5 157.5h0M617.5 157.5h0M617.5 181.5h0M617.5 150.5h0M618.5 145.5h0M618.5 158.5h0M618.5 172.5h0M618.5 151.5h0M618.5 159.5h0M618.5 164.5h0M618.5 171.5h0M619.5 164.5h0M619.5 164.5h0M619.5 161.5h0M619.5 160.5h0M619.5 158.5h0M619.5 169.5h0M619.5 168.5h0M620.5 155.5h0M620.5 158.5h0M620.5 166.5h0M620.5 172.5h0M620.5 162.5h0M620.5 172.5h0M620.5 155.5h0M621.5 149.5h0M621.5 154.5h0M621.5 156.5h0M621.5 160.5h0M621.5 167.5h0M621.5 166.5h0M621.5 178.5h0M622.5 165.5h0M622.5 161.5h0M622.5 158.5h0M622.5 162.5h0M622.5 154.5h0M622.5 179.5h0M622.5 170.5h0M623.5 154.5h0M623.5 144.5h0M623.5 149.5h0M623.5 149.5h0M623.5 144.5h0M623.5 151.5h0M623.5 182.5h0M624.5 154.5h0M624.5 160.5h0M624.5 152.5h0M624.5 164.5h0M624.5 163.5h0M624.5 154.5h0M624.5 157.5h0M625.5 172.5h0M625.5 170.5h0M625.5 150.5h0M625.5 158.5h0M625.5 166.5h0M625.5 173.5h0M625.5 165.5h0M626.5 151.5h0M626.5 162.5h0M626.5 183.5h0M626.5 171.5h0M626.5 170.5h0M626.5 162.5h0M626.5 151.5h0M627.5 158.5h0M627.5 160.5h0M627.5 162.5h0M627.5 165.5h0M627.5 156.5h0M627.5 172.5h0M627.5 171.5h0M628.5 155.5h0M628.5 166.5h0M628.5 153.5h0M628.5 159.5h0M628.5 168.5h0M628.5 159.5h0M628.5 170.5h0M629.5 143.5h0M629.5 167.5h0M629.5 152.5h0M629.5 165.5h0M629.5 162.5h0M629.5 173.5h0M630.5 156.5h0M630.5 153.5h0M630.5 167.5h0M630.5 155.5h0M630.5 154.5h0M630.5 171.5h0M630.5 158.5h0M631.5 168.5h0M631.5 163.5h0M631.5 155.5h0M631.5 166.5h0M631.5 165.5h0M631.5 148.5h0M631.5 164.5h0M632.5 156.5h0M632.5 164.5h0M632.5 157.5h0M632.5 156.5h0M632.5 163.5h0M632.5 171.5h0M632.5 172.5h0M633.5 172.5h0M633.5 151.5h0M633.5 164.5h0M633.5 164.5h0M633.5 151.5h0M633.5 169.5h0M633.5 163.5h0M634.5 161.5h0M634.5 137.5h0M634.5 173.5h0M634.5 159.5h0M634.5 167.5h0M634.5 147.5h0M634.5 145.5h0M635.5 161.5h0M635.5 163.5h0M635.5 159.5h0M635.5 168.5h0M635.5 176.5h0M635.5 171.5h0M635.5 165.5h0M636.5 159.5h0M636.5 157.5h0M636.5 150.5h0M636.5 164.5h0M636.5 156.5h0M636.5 158.5h0M636.5 173.5h0M637.5 162.5h0M637.5 158.5h0M637.5 158.5h0M637.5 169.5h0M637.5 173.5h0M637.5 148.5h0M637.5 163.5h0M638.5 162.5h0M638.5 163.5h0M638.5 153.5h0M638.5 153.5h0M638.5 173.5h0M638.5 162.5h0M638.5 155.5h0M639.5 165.5h0M639.5 163.5h0M639.5 144.5h0M639.5 171.5h0M639.5 157.5h0M639.5 157.5h0M639.5 173.5h0M640.5 164.5h0M640.5 182.5h0M640.5 159.5h0M640.5 163.5h0M640.5 165.5h0M640.5 170.5h0M640.5 154.5h0M641.5 180.5h0M641.5 143.5h0M641.5 166.5h0M641.5 163.5h0M641.5 168.5h0M641.5 159.5h0M641.5 169.5h0M642.5 168.5h0M642.5 158.5h0M642.5 145.5h0M642.5 164.5h0M642.5 151.5h0M642.5 164.5h0M642.5 161.5h0M643.5 152.5h0M643.5 149.5h0M643.5 151.5h0M643.5 171.5h0M643.5 160.5h0M643.5 165.5h0M643.5 171.5h0M644.5 163.5h0M644.5 160.5h0M644.5 152.5h0M644.5 155.5h0M644.5 151.5h0M644.5 151.5h0M644.5 154.5h0M645.5 173.5h0M645.5 162.5h0M645.5 175.5h0M645.5 175.5h0M645.5 154.5h0M645.5 182.5h0M646.5 156.5h0M646.5 168.5h0M646.5 166.5h0M646.5 149.5h0M646.5 163.5h0M646.5 148.5h0M646.5 152.5h0M647.5 154.5h0M647.5 157.5h0M647.5 161.5h0M647.5 154.5h0M647.5 169.5h0M647.5 161.5h0M647.5 153.5h0M648.5 167.5h0M648.5 177.5h0M648.5 156.5h0M648.5 167.5h0M648.5 169.5h0M648.5 180.5h0M648.5 159.5h0M649.5 149.5h0M649.5 157.5h0M649.5 141.5h0M649.5 175.5h0M649.5 156.5h0M649.5 179.5h0M649.5 163.5h0M650.5 163.5h0M650.5 164.5h0M650.5 157.5h0M650.5 178.5h0M650.5 169.5h0M650.5 160.5h0M650.5 158.5h0M651.5 159.5h0M651.5 161.5h0M651.5 168.5h0M651.5 158.5h0M651.5 152.5h0M651.5 163.5h0M651.5 147.5h0M652.5 166.5h0M652.5 154.5h0M652.5 166.5h0M652.5 164.5h0M652.5 181.5h0M652.5 168.5h0M652.5 164.5h0M653.5 159.5h0M653.5 160.5h0M653.5 153.5h0M653.5 165.5h0M653.5 162.5h0M653.5 178.5h0M653.5 166.5h0M654.5 151.5h0M654.5 154.5h0M654.5 162.5h0M654.5 164.5h0M654.5 164.5h0M654.5 157.5h0M654.5 172.5h0M655.5 158.5h0M655.5 180.5h0M655.5 157.5h0M655.5 155.5h0M655.5 166.5h0M655.5 158.5h0M655.5 164.5h0M656.5 154.5h0M656.5 151.5h0M656.5 176.5h0M656.5 179.5h0M656.5 162.5h0M656.5 166.5h0M656.5 160.5h0M657.5 177.5h0M657.5 177.5h0M657.5 147.5h0M657.5 167.5h0M657.5 147.5h0M657.5 160.5h0M657.5 148.5h0M658.5 159.5h0M658.5 149.5h0M658.5 165.5h0M658.5 158.5h0M658.5 159.5h0M658.5 149.5h0M658.5 167.5h0M659.5 160.5h0M659.5 169.5h0M659.5 170.5h0M659.5 149.5h0M659.5 149.5h0M659.5 150.5h0M659.5 151.5h0M660.5 163.5h0M660.5 148.5h0M660.5 165.5h0M660.5 165.5h0M660.5 168.5h0M660.5 167.5h0M660.5 155.5h0M661.5 159.5h0M661.5 162.5h0M661.5 162.5h0M661.5 156.5h0M661.5 172.5h0M661.5 162.5h0M662.5 157.5h0M662.5 138.5h0M662.5 158.5h0M662.5 153.5h0M662.5 170.5h0M662.5 162.5h0M662.5 164.5h0M663.5 165.5h0M663.5 155.5h0M663.5 157.5h0M663.5 161.5h0M663.5 148.5h0M663.5 155.5h0M663.5 157.5h0M664.5 152.5h0M664.5 156.5h0M664.5 165.5h0M664.5 169.5h0M664.5 169.5h0M664.5 151.5h0M664.5 167.5h0M665.5 150.5h0M665.5 150.5h0M665.5 150.5h0M665.5 170.5h0M665.5 165.5h0M665.5 157.5h0M665.5 145.5h0M666.5 167.5h0M666.5 148.5h0M666.5 152.5h0M666.5 150.5h0M666.5 150.5h0M666.5 159.5h0M666.5 158.5h0M667.5 159.5h0M667.5 158.5h0M667.5 171.5h0M667.5 162.5h0M667.5 156.5h0M667.5 157.5h0M667.5 167.5h0M668.5 158.5h0M668.5 154.5h0M668.5 158.5h0M668.5 146.5h0M668.5 138.5h0M668.5 150.5h0M668.5 160.5h0M669.5 149.5h0M669.5 175.5h0M669.5 167.5h0M669.5 151.5h0M669.5 160.5h0M669.5 166.5h0M669.5 162.5h0M670.5 153.5h0M670.5 160.5h0M670.5 163.5h0M670.5 158.5h0M670.5 161.5h0M670.5 146.5h0M670.5 155.5h0M671.5 144.5h0M671.5 164.5h0M671.5 169.5h0M671.5 153.5h0M671.5 145.5h0M671.5 164.5h0M671.5 161.5h0M672.5 165.5h0M672.5 161.5h0M672.5 147.5h0M672.5 148.5h0M672.5 155.5h0M672.5 164.5h0M672.5 161.5h0M673.5 148.5h0M673.5 172.5h0M673.5 164.5h0M673.5 175.5h0M673.5 160.5h0M673.5 163.5h0M673.5 172.5h0M674.5 150.5h0M674.5 176.5h0M674.5 154.5h0M674.5 159.5h0M674.5 144.5h0M674.5 158.5h0M674.5 150.5h0M675.5 158.5h0M675.5 158.5h0M675.5 155.5h0M675.5 165.5h0M675.5 168.5h0M675.5 163.5h0M675.5 144.5h0M676.5 160.5h0M676.5 145.5h0M676.5 161.5h0M676.5 171.5h0M676.5 154.5h0M676.5 172.5h0M676.5 175.5h0M677.5 170.5h0M677.5 149.5h0M677.5 161.5h0M677.5 157.5h0M677.5 148.5h0M677.5 151.5h0M677.5 154.5h0M678.5 166.5h0M678.5 161.5h0M678.5 148.5h0M678.5 150.5h0M678.5 162.5h0M678.5 164.5h0M679.5 167.5h0M679.5 140.5h0M679.5 151.5h0M679.5 165.5h0M679.5 165.5h0M679.5 150.5h0M679.5 154.5h0M680.5 155.5h0M680.5 157.5h0M680.5 157.5h0M680.5 164.5h0M680.5 162.5h0M680.5 143.5h0M680.5 170.5h0M681.5 154.5h0M681.5 169.5h0M681.5 161.5h0M681.5 157.5h0M681.5 155.5h0M681.5 159.5h0M681.5 164.5h0M682.5 157.5h0M682.5 140.5h0M682.5 156.5h0M682.5 153.5h0M682.5 148.5h0M682.5 182.5h0M682.5 158.5h0M683.5 179.5h0M683.5 158.5h0M683.5 147.5h0M683.5 160.5h0M683.5 156.5h0M683.5 164.5h0M683.5 162.5h0M684.5 154.5h0M684.5 157.5h0M684.5 162.5h0M684.5 137.5h0M684.5 169.5h0M684.5 148.5h0M684.5 181.5h0M685.5 156.5h0M685.5 172.5h0M685.5 152.5h0M685.5 150.5h0M685.5 171.5h0M685.5 164.5h0M685.5 149.5h0M686.5 177.5h0M686.5 176.5h0M686.5 160.5h0M686.5 149.5h0M686.5 168.5h0M686.5 150.5h0M686.5 159.5h0M687.5 165.5h0M687.5 159.5h0M687.5 166.5h0M687.5 159.5h0M687.5 162.5h0M687.5 155.5h0M687.5 161.5h0M688.5 163.5h0M688.5 155.5h0M688.5 148.5h0M688.5 159.5h0M688.5 153.5h0M688.5 159.5h0M688.5 175.5h0M689.5 155.5h0M689.5 163.5h0M689.5 167.5h0M689.5 143.5h0M689.5 165.5h0M689.5 162.5h0M689.5 154.5h0M690.5 167.5h0M690.5 161.5h0M690.5 139.5h0M690.5 143.5h0M690.5 151.5h0M690.5 169.5h0M690.5 174.5h0M691.5 163.5h0M691.5 152.5h0M691.5 162.5h0M691.5 149.5h0M691.5 151.5h0M691.5 154.5h0M691.5 156.5h0M692.5 151.5h0M692.5 158.5h0M692.5 174.5h0M692.5 142.5h0M692.5 153.5h0M692.5 157.5h0M692.5 159.5h0M693.5 154.5h0M693.5 156.5h0M693.5 173.5h0M693.5 131.5h0M693.5 147.5h0M693.5 142.5h0M693.5 159.5h0M694.5 159.5h0M694.5 154.5h0M694.5 172.5h0M694.5 148.5h0M694.5 143.5h0M694.5 160.5h0M695.5 147.5h0M695.5 155.5h0M695.5 151.5h0M695.5 159.5h0M695.5 160.5h0M695.5 160.5h0M695.5 170.5h0M696.5 164.5h0M696.5 167.5h0M696.5 161.5h0M696.5 145.5h0M696.5 147.5h0M696.5 151.5h0M696.5 162.5h0M697.5 159.5h0M697.5 149.5h0M697.5 169.5h0M697.5 159.5h0M697.5 142.5h0M697.5 163.5h0M697.5 149.5h0M698.5 159.5h0M698.5 151.5h0M698.5 158.5h0M698.5 139.5h0M698.5 161.5h0M698.5 169.5h0M698.5 173.5h0M699.5 163.5h0M699.5 157.5h0M699.5 157.5h0M699.5 165.5h0M699.5 168.5h0M699.5 162.5h0M699.5 158.5h0M700.5 170.5h0M700.5 158.5h0M700.5 151.5h0M700.5 160.5h0M700.5 158.5h0M700.5 151.5h0M700.5 148.5h0M701.5 152.5h0M701.5 170.5h0M701.5 175.5h0M701.5 159.5h0M701.5 151.5h0M701.5 165.5h0M701.5 162.5h0M702.5 153.5h0M702.5 157.5h0M702.5 138.5h0M702.5 161.5h0M702.5 152.5h0M702.5 151.5h0M702.5 148.5h0M703.5 162.5h0M703.5 142.5h0M703.5 147.5h0M703.5 147.5h0M703.5 163.5h0M703.5 159.5h0M703.5 162.5h0M704.5 155.5h0M704.5 167.5h0M704.5 173.5h0M704.5 142.5h0M704.5 165.5h0M704.5 163.5h0M704.5 153.5h0M705.5 172.5h0M705.5 147.5h0M705.5 151.5h0M705.5 154.5h0M705.5 178.5h0M705.5 152.5h0M705.5 164.5h0M706.5 139.5h0M706.5 161.5h0M706.5 164.5h0M706.5 157.5h0M706.5 165.5h0M706.5 144.5h0M706.5 150.5h0M707.5 162.5h0M707.5 169.5h0M707.5 159.5h0M707.5 160.5h0M707.5 158.5h0M707.5 157.5h0M707.5 157.5h0M708.5 171.5h0M708.5 160.5h0M708.5 163.5h0M708.5 153.5h0M708.5 155.5h0M708.5 147.5h0M708.5 161.5h0M709.5 165.5h0M709.5 159.5h0M709.5 172.5h0M709.5 150.5h0M709.5 157.5h0M709.5 139.5h0M709.5 162.5h0M710.5 160.5h0M710.5 161.5h0M710.5 163.5h0M710.5 142.5h0M710.5 167.5h0M710.5 171.5h0M711.5 159.5h0M711.5 156.5h0M711.5 141.5h0M711.5 155.5h0M711.5 168.5h0M711.5 153.5h0M711.5 168.5h0M712.5 164.5h0M712.5 139.5h0M712.5 166.5h0M712.5 157.5h0M712.5 150.5h0M712.5 158.5h0M712.5 147.5h0M713.5 156.5h0M713.5 166.5h0M713.5 143.5h0M713.5 168.5h0M713.5 154.5h0M713.5 168.5h0M713.5 162.5h0M714.5 172.5h0M714.5 167.5h0M714.5 149.5h0M714.5 167.5h0M714.5 149.5h0M714.5 162.5h0M714.5 170.5h0M715.5 153.5h0M715.5 160.5h0M715.5 158.5h0M715.5 162.5h0M715.5 136.5h0M715.5 148.5h0M715.5 160.5h0M716.5 167.5h0M716.5 161.5h0M716.5 157.5h0M716.5 153.5h0M716.5 141.5h0M716.5 150.5h0M716.5 152.5h0M717.5 166.5h0M717.5 160.5h0M717.5 170.5h0M717.5 163.5h0M717.5 159.5h0M717.5 164.5h0M717.5 149.5h0M718.5 163.5h0M718.5 152.5h0M718.5 173.5h0M718.5 153.5h0M718.5 156.5h0M718.5 160.5h0M718.5 159.5h0M719.5 172.5h0M719.5 162.5h0M719.5 151.5h0M719.5 158.5h0M719.5 147.5h0M719.5 146.5h0M719.5 146.5h0M720.5 163.5h0M720.5 163.5h0M720.5 147.5h0M720.5 162.5h0M720.5 160.5h0M720.5 170.5h0M720.5 153.5h0M721.5 154.5h0M721.5 172.5h0M721.5 160.5h0M721.5 166.5h0M721.5 160.5h0M721.5 173.5h0M721.5 159.5h0M722.5 162.5h0M722.5 147.5h0M722.5 165.5h0M722.5 142.5h0M722.5 157.5h0M722.5 156.5h0M722.5 161.5h0M723.5 158.5h0M723.5 164.5h0M723.5 161.5h0M723.5 150.5h0M723.5 157.5h0M723.5 173.5h0M723.5 165.5h0M724.5 156.5h0M724.5 166.5h0M724.5 163.5h0M724.5 170.5h0M724.5 166.5h0M724.5 172.5h0M724.5 161.5h0M725.5 178.5h0M725.5 157.5h0M725.5 155.5h0M725.5 153.5h0M725.5 155.5h0M725.5 146.5h0M725.5 166.5h0M726.5 168.5h0M726.5 142.5h0M726.5 159.5h0M726.5 146.5h0M726.5 136.5h0M726.5 147.5h0M727.5 169.5h0M727.5 155.5h0M727.5 170.5h0M727.5 150.5h0M727.5 160.5h0M727.5 141.5h0M727.5 161.5h0M728.5 168.5h0M728.5 152.5h0M728.5 146.5h0M728.5 150.5h0M728.5 163.5h0M728.5 158.5h0M728.5 158.5h0M729.5 164.5h0M729.5 167.5h0M729.5 163.5h0M729.5 150.5h0M729.5 169.5h0M729.5 156.5h0M729.5 168.5h0M730.5 154.5h0M730.5 152.5h0M730.5 145.5h0M730.5 139.5h0M730.5 159.5h0M730.5 160.5h0M730.5 158.5h0M731.5 151.5h0M731.5 155.5h0M731.5 158.5h0M731.5 171.5h0M731.5 156.5h0M731.5 156.5h0M731.5 154.5h0M732.5 153.5h0M732.5 161.5h0M732.5 152.5h0M732.5 157.5h0M732.5 163.5h0M732.5 145.5h0M732.5 142.5h0M733.5 161.5h0M733.5 170.5h0M733.5 149.5h0M733.5 159.5h0M733.5 154.5h0M733.5 159.5h0M733.5 151.5h0M734.5 171.5h0M734.5 164.5h0M734.5 158.5h0M734.5 154.5h0M734.5 166.5h0M734.5 163.5h0M734.5 170.5h0M735.5 162.5h0M735.5 150.5h0M735.5 147.5h0M735.5 164.5h0M735.5 156.5h0M735.5 150.5h0M735.5 175.5h0M736.5 153.5h0M736.5 171.5h0M736.5 142.5h0M736.5 150.5h0M736.5 168.5h0M736.5 153.5h0M736.5 165.5h0M737.5 157.5h0M737.5 163.5h0M737.5 159.5h0M737.5 154.5h0M737.5 162.5h0M737.5 154.5h0M737.5 164.5h0M738.5 170.5h0M738.5 155.5h0M738.5 157.5h0M738.5 164.5h0M738.5 160.5h0M738.5 164.5h0M738.5 152.5h0M739.5 141.5h0M739.5 159.5h0M739.5 148.5h0M739.5 159.5h0M739.5 163.5h0M739.5 160.5h0M739.5 160.5h0M740.5 157.5h0M740.5 156.5h0M740.5 166.5h0M740.5 138.5h0M740.5 157.5h0M740.5 145.5h0M740.5 140.5h0M741.5 153.5h0M741.5 152.5h0M741.5 154.5h0M741.5 155.5h0M741.5 150.5h0M741.5 153.5h0M741.5 157.5h0M742.5 168.5h0M742.5 161.5h0M742.5 154.5h0M742.5 176.5h0M742.5 160.5h0M742.5 160.5h0M742.5 165.5h0M743.5 148.5h0M743.5 170.5h0M743.5 171.5h0M743.5 151.5h0M743.5 154.5h0M743.5 137.5h0M744.5 165.5h0M744.5 150.5h0M744.5 138.5h0M744.5 153.5h0M744.5 170.5h0M744.5 150.5h0M744.5 148.5h0M745.5 160.5h0M745.5 157.5h0M745.5 153.5h0M745.5 143.5h0M745.5 159.5h0M745.5 152.5h0M745.5 157.5h0M746.5 164.5h0M746.5 161.5h0M746.5 158.5h0M746.5 168.5h0M746.5 151.5h0M746.5 176.5h0M746.5 162.5h0M747.5 146.5h0M747.5 163.5h0M747.5 147.5h0M747.5 163.5h0M747.5 149.5h0M747.5 151.5h0M747.5 178.5h0M748.5 157.5h0M748.5 163.5h0M748.5 163.5h0M748.5 149.5h0M748.5 153.5h0M748.5 157.5h0M748.5 155.5h0M749.5 150.5h0M749.5 156.5h0M749.5 171.5h0M749.5 153.5h0M749.5 151.5h0M749.5 163.5h0M749.5 156.5h0M750.5 153.5h0M750.5 157.5h0M750.5 151.5h0M750.5 151.5h0M750.5 165.5h0M750.5 167.5h0M750.5 158.5h0M751.5 150.5h0M751.5 153.5h0M751.5 146.5h0M751.5 158.5h0M751.5 151.5h0M751.5 165.5h0M751.5 148.5h0M752.5 154.5h0M752.5 161.5h0M752.5 138.5h0M752.5 169.5h0M752.5 172.5h0M752.5 164.5h0M752.5 160.5h0M753.5 157.5h0M753.5 157.5h0M753.5 156.5h0M753.5 161.5h0M753.5 156.5h0M753.5 158.5h0M753.5 153.5h0M754.5 155.5h0M754.5 156.5h0M754.5 150.5h0M754.5 166.5h0M754.5 159.5h0M754.5 153.5h0M754.5 154.5h0M755.5 153.5h0M755.5 141.5h0M755.5 146.5h0M755.5 157.5h0M755.5 160.5h0M755.5 162.5h0M755.5 167.5h0M756.5 151.5h0M756.5 146.5h0M756.5 169.5h0M756.5 161.5h0M756.5 159.5h0M756.5 156.5h0M756.5 154.5h0M757.5 163.5h0M757.5 160.5h0M757.5 147.5h0M757.5 158.5h0M757.5 135.5h0M757.5 154.5h0M757.5 163.5h0M758.5 163.5h0M758.5 165.5h0M758.5 166.5h0M758.5 156.5h0M758.5 148.5h0M758.5 168.5h0M758.5 169.5h0M759.5 162.5h0M759.5 146.5h0M759.5 154.5h0M759.5 147.5h0M759.5 152.5h0M759.5 171.5h0M760.5 161.5h0M760.5 157.5h0M760.5 155.5h0M760.5 149.5h0M760.5 146.5h0M760.5 146.5h0M760.5 160.5h0M761.5 144.5h0M761.5 163.5h0M761.5 150.5h0M761.5 143.5h0M761.5 157.5h0M761.5 146.5h0M761.5 146.5h0M762.5 170.5h0M762.5 152.5h0M762.5 150.5h0M762.5 169.5h0M762.5 144.5h0M762.5 149.5h0M762.5 160.5h0M763.5 173.5h0M763.5 149.5h0M763.5 148.5h0M763.5 147.5h0M763.5 166.5h0M763.5 153.5h0M763.5 164.5h0M764.5 158.5h0M764.5 146.5h0M764.5 167.5h0M764.5 165.5h0M764.5 146.5h0M764.5 157.5h0M764.5 143.5h0M765.5 142.5h0M765.5 148.5h0M765.5 162.5h0M765.5 161.5h0M765.5 137.5h0M765.5 139.5h0M765.5 150.5h0M766.5 151.5h0M766.5 154.5h0M766.5 161.5h0M766.5 172.5h0M766.5 140.5h0M766.5 169.5h0M766.5 154.5h0M767.5 151.5h0M767.5 155.5h0M767.5 160.5h0M767.5 136.5h0M767.5 154.5h0M767.5 151.5h0M767.5 168.5h0M768.5 157.5h0M768.5 146.5h0M768.5 158.5h0M768.5 142.5h0M768.5 148.5h0M768.5 150.5h0M768.5 152.5h0M769.5 136.5h0M769.5 148.5h0M769.5 157.5h0M769.5 138.5h0M769.5 162.5h0M769.5 152.5h0M769.5 155.5h0M770.5 135.5h0M770.5 174.5h0M770.5 148.5h0M770.5 159.5h0M770.5 138.5h0M770.5 141.5h0M770.5 139.5h0M771.5 149.5h0M771.5 150.5h0M771.5 145.5h0M771.5 146.5h0M771.5 150.5h0M771.5 170.5h0M771.5 160.5h0M772.5 137.5h0M772.5 148.5h0M772.5 144.5h0M772.5 152.5h0M772.5 137.5h0M772.5 148.5h0M772.5 137.5h0M773.5 180.5h0M773.5 167.5h0M773.5 177.5h0M833.5 153.5h0M833.5 173.5h0M833.5 158.5h0M834.5 159.5h0M834.5 162.5h0M834.5 157.5h0M834.5 155.5h0M834.5 166.5h0M834.5 158.5h0M834.5 155.5h0M835.5 167.5h0M835.5 165.5h0M835.5 139.5h0M835.5 163.5h0M835.5 148.5h0M835.5 173.5h0M835.5 142.5h0M836.5 157.5h0M836.5 152.5h0M836.5 174.5h0M836.5 149.5h0M836.5 170.5h0M836.5 148.5h0M836.5 156.5h0M837.5 153.5h0M837.5 162.5h0M837.5 147.5h0M837.5 155.5h0M837.5 158.5h0M837.5 174.5h0M837.5 166.5h0M838.5 151.5h0M838.5 154.5h0M838.5 169.5h0M838.5 160.5h0M838.5 170.5h0M838.5 160.5h0M838.5 160.5h0M839.5 150.5h0M839.5 151.5h0M839.5 160.5h0M839.5 154.5h0M839.5 159.5h0M839.5 147.5h0M839.5 139.5h0M840.5 170.5h0M840.5 154.5h0M840.5 142.5h0M840.5 153.5h0M840.5 148.5h0M840.5 151.5h0M841.5 142.5h0M841.5 165.5h0M841.5 150.5h0M841.5 148.5h0M841.5 159.5h0M841.5 172.5h0M841.5 160.5h0M842.5 163.5h0M842.5 167.5h0M842.5 173.5h0M842.5 168.5h0M842.5 178.5h0M842.5 152.5h0M842.5 163.5h0M843.5 151.5h0M843.5 167.5h0M843.5 151.5h0M843.5 170.5h0M843.5 175.5h0M843.5 165.5h0M843.5 156.5h0M844.5 164.5h0M844.5 156.5h0M844.5 145.5h0M844.5 158.5h0M844.5 174.5h0M844.5 152.5h0M844.5 158.5h0M845.5 159.5h0M845.5 160.5h0M845.5 168.5h0M845.5 159.5h0M845.5 156.5h0M845.5 158.5h0M845.5 148.5h0M846.5 151.5h0M846.5 179.5h0M846.5 151.5h0M846.5 144.5h0M846.5 167.5h0M846.5 166.5h0M846.5 158.5h0M847.5 152.5h0M847.5 162.5h0M847.5 174.5h0M847.5 149.5h0M847.5 151.5h0M847.5 151.5h0M847.5 154.5h0M848.5 134.5h0M848.5 149.5h0M848.5 158.5h0M848.5 160.5h0M848.5 164.5h0M848.5 148.5h0M848.5 139.5h0M849.5 164.5h0M849.5 138.5h0M849.5 152.5h0M849.5 158.5h0M849.5 149.5h0M849.5 136.5h0M849.5 158.5h0M850.5 163.5h0M850.5 154.5h0M850.5 162.5h0M850.5 154.5h0M850.5 163.5h0M850.5 161.5h0M850.5 147.5h0M851.5 158.5h0M851.5 170.5h0M851.5 156.5h0M851.5 144.5h0M851.5 157.5h0M851.5 162.5h0M851.5 158.5h0M852.5 161.5h0M852.5 156.5h0M852.5 164.5h0M852.5 166.5h0M852.5 157.5h0M852.5 159.5h0M852.5 146.5h0M853.5 155.5h0M853.5 171.5h0M853.5 145.5h0M853.5 145.5h0M853.5 154.5h0M853.5 152.5h0M853.5 142.5h0M854.5 165.5h0M854.5 149.5h0M854.5 175.5h0M854.5 172.5h0M854.5 152.5h0M854.5 140.5h0M854.5 144.5h0M855.5 164.5h0M855.5 169.5h0M855.5 154.5h0M855.5 163.5h0M855.5 164.5h0M855.5 166.5h0M855.5 165.5h0M856.5 163.5h0M856.5 164.5h0M856.5 155.5h0M856.5 146.5h0M856.5 166.5h0M856.5 164.5h0M857.5 152.5h0M857.5 151.5h0M857.5 173.5h0M857.5 163.5h0M857.5 149.5h0M857.5 149.5h0M857.5 169.5h0M858.5 171.5h0M858.5 150.5h0M858.5 155.5h0M858.5 144.5h0M858.5 165.5h0M858.5 160.5h0M858.5 154.5h0M859.5 162.5h0M859.5 137.5h0M859.5 156.5h0M859.5 153.5h0M859.5 139.5h0M859.5 152.5h0M859.5 165.5h0M860.5 142.5h0M860.5 165.5h0M860.5 164.5h0M860.5 158.5h0M860.5 151.5h0M860.5 161.5h0M860.5 150.5h0M861.5 150.5h0M861.5 142.5h0M861.5 140.5h0M861.5 162.5h0M861.5 153.5h0M861.5 171.5h0M861.5 168.5h0M862.5 157.5h0M862.5 154.5h0M862.5 151.5h0M862.5 148.5h0M862.5 160.5h0M862.5 149.5h0M862.5 150.5h0M863.5 166.5h0M863.5 161.5h0M863.5 149.5h0M863.5 158.5h0M863.5 157.5h0M863.5 147.5h0M863.5 136.5h0M864.5 156.5h0M864.5 169.5h0M864.5 159.5h0M864.5 155.5h0M864.5 143.5h0M864.5 160.5h0M864.5 176.5h0M865.5 150.5h0M865.5 173.5h0M865.5 152.5h0M865.5 156.5h0M865.5 155.5h0M865.5 159.5h0M865.5 155.5h0M866.5 153.5h0M866.5 156.5h0M866.5 154.5h0M866.5 154.5h0M866.5 157.5h0M866.5 168.5h0M866.5 150.5h0M867.5 155.5h0M867.5 156.5h0M867.5 145.5h0M867.5 149.5h0M867.5 170.5h0M867.5 167.5h0M867.5 145.5h0M868.5 157.5h0M868.5 157.5h0M868.5 159.5h0M868.5 158.5h0M868.5 146.5h0M868.5 145.5h0M868.5 152.5h0M869.5 142.5h0M869.5 154.5h0M869.5 173.5h0M869.5 145.5h0M869.5 142.5h0M869.5 145.5h0M869.5 130.5h0M870.5 141.5h0M870.5 159.5h0M870.5 152.5h0M870.5 158.5h0M870.5 166.5h0M870.5 161.5h0M870.5 167.5h0M871.5 165.5h0M871.5 171.5h0M871.5 155.5h0M871.5 158.5h0M871.5 134.5h0M871.5 155.5h0M871.5 162.5h0M872.5 144.5h0M872.5 142.5h0M872.5 161.5h0M872.5 142.5h0M872.5 153.5h0M872.5 151.5h0M872.5 153.5h0M873.5 149.5h0M873.5 160.5h0M873.5 147.5h0M873.5 154.5h0M873.5 151.5h0M873.5 149.5h0M874.5 158.5h0M874.5 162.5h0M874.5 152.5h0M874.5 145.5h0M874.5 163.5h0M874.5 150.5h0M874.5 159.5h0M875.5 151.5h0M875.5 156.5h0M875.5 144.5h0M875.5 160.5h0M875.5 156.5h0M875.5 167.5h0M875.5 166.5h0M876.5 157.5h0M876.5 159.5h0M876.5 153.5h0M876.5 158.5h0M876.5 153.5h0M876.5 150.5h0M876.5 144.5h0M877.5 160.5h0M877.5 149.5h0M877.5 152.5h0M877.5 155.5h0M877.5 167.5h0M877.5 154.5h0M877.5 149.5h0M878.5 164.5h0M878.5 153.5h0M878.5 166.5h0M878.5 138.5h0M878.5 160.5h0M878.5 160.5h0M878.5 153.5h0M879.5 155.5h0M879.5 173.5h0M879.5 146.5h0M879.5 136.5h0M879.5 138.5h0M879.5 157.5h0M879.5 152.5h0M880.5 158.5h0M880.5 163.5h0M880.5 146.5h0M880.5 162.5h0M880.5 165.5h0M880.5 145.5h0M880.5 148.5h0M881.5 163.5h0M881.5 163.5h0M881.5 154.5h0M881.5 156.5h0M881.5 141.5h0M881.5 154.5h0M881.5 158.5h0M882.5 160.5h0M882.5 164.5h0M882.5 172.5h0M882.5 168.5h0M882.5 152.5h0M882.5 162.5h0M882.5 150.5h0M883.5 157.5h0M883.5 161.5h0M883.5 153.5h0M883.5 160.5h0M883.5 152.5h0M883.5 142.5h0M883.5 151.5h0M884.5 152.5h0M884.5 136.5h0M884.5 142.5h0M884.5 153.5h0M884.5 152.5h0M884.5 158.5h0M884.5 144.5h0M885.5 162.5h0M885.5 164.5h0M885.5 156.5h0M885.5 153.5h0M885.5 152.5h0M885.5 142.5h0M885.5 154.5h0M886.5 144.5h0M886.5 161.5h0M886.5 139.5h0M886.5 138.5h0M886.5 163.5h0M886.5 158.5h0M886.5 157.5h0M887.5 168.5h0M887.5 141.5h0M887.5 171.5h0M887.5 162.5h0M887.5 160.5h0M887.5 150.5h0M887.5 144.5h0M888.5 167.5h0M888.5 162.5h0M888.5 149.5h0M888.5 140.5h0M888.5 142.5h0M888.5 165.5h0M888.5 146.5h0M889.5 154.5h0M889.5 149.5h0M889.5 145.5h0M889.5 161.5h0M889.5 151.5h0M889.5 166.5h0M890.5 157.5h0M890.5 160.5h0M890.5 149.5h0M890.5 135.5h0M890.5 149.5h0M890.5 155.5h0M890.5 163.5h0M891.5 136.5h0M891.5 150.5h0M891.5 152.5h0M891.5 136.5h0M891.5 145.5h0M891.5 143.5h0M891.5 147.5h0M892.5 157.5h0M892.5 145.5h0M892.5 143.5h0M892.5 137.5h0M892.5 139.5h0M892.5 161.5h0M892.5 152.5h0M893.5 158.5h0M893.5 168.5h0M893.5 146.5h0M893.5 147.5h0M893.5 165.5h0M893.5 167.5h0M893.5 172.5h0M894.5 176.5h0M894.5 151.5h0M894.5 143.5h0M894.5 158.5h0M894.5 153.5h0M894.5 172.5h0M894.5 155.5h0M895.5 155.5h0M895.5 138.5h0M895.5 154.5h0M895.5 156.5h0M895.5 162.5h0M895.5 152.5h0M895.5 156.5h0M896.5 167.5h0M896.5 156.5h0M896.5 155.5h0M896.5 139.5h0M896.5 153.5h0M896.5 153.5h0M896.5 150.5h0M897.5 159.5h0M897.5 143.5h0M897.5 165.5h0M897.5 152.5h0M897.5 150.5h0M897.5 145.5h0M897.5 168.5h0M898.5 142.5h0M898.5 154.5h0M898.5 175.5h0M898.5 171.5h0M898.5 142.5h0M898.5 142.5h0M898.5 131.5h0M899.5 151.5h0M899.5 163.5h0M899.5 166.5h0M899.5 163.5h0M899.5 155.5h0M899.5 171.5h0M899.5 150.5h0M900.5 157.5h0M900.5 165.5h0M900.5 155.5h0M900.5 158.5h0M900.5 162.5h0M900.5 144.5h0M900.5 135.5h0M901.5 143.5h0M901.5 154.5h0M901.5 152.5h0M901.5 174.5h0M901.5 147.5h0M901.5 161.5h0M901.5 165.5h0M902.5 155.5h0M902.5 149.5h0M902.5 145.5h0M902.5 156.5h0M902.5 161.5h0M902.5 153.5h0M902.5 170.5h0M903.5 155.5h0M903.5 150.5h0M903.5 148.5h0M903.5 143.5h0M903.5 163.5h0M903.5 139.5h0M903.5 157.5h0M904.5 158.5h0M904.5 164.5h0M904.5 165.5h0M904.5 153.5h0M904.5 155.5h0M904.5 163.5h0M904.5 165.5h0M905.5 178.5h0M905.5 169.5h0M905.5 164.5h0M905.5 147.5h0M905.5 149.5h0M905.5 139.5h0M906.5 153.5h0M906.5 148.5h0M906.5 165.5h0M906.5 159.5h0M906.5 165.5h0M906.5 146.5h0M906.5 147.5h0M907.5 157.5h0M907.5 148.5h0M907.5 151.5h0M907.5 153.5h0M907.5 167.5h0M907.5 147.5h0M907.5 159.5h0M908.5 156.5h0M908.5 147.5h0M908.5 162.5h0M908.5 155.5h0M908.5 155.5h0M908.5 150.5h0M908.5 151.5h0M909.5 145.5h0M909.5 176.5h0M909.5 147.5h0M909.5 162.5h0M909.5 145.5h0M909.5 151.5h0M909.5 151.5h0M910.5 138.5h0M910.5 171.5h0M910.5 154.5h0M910.5 152.5h0M910.5 156.5h0M910.5 144.5h0M910.5 150.5h0M911.5 164.5h0M911.5 170.5h0M911.5 166.5h0M911.5 166.5h0M911.5 157.5h0M911.5 140.5h0M911.5 160.5h0M912.5 155.5h0M912.5 176.5h0M912.5 157.5h0M912.5 158.5h0M912.5 148.5h0M912.5 169.5h0M912.5 150.5h0M913.5 172.5h0M913.5 143.5h0M913.5 154.5h0M913.5 172.5h0M913.5 159.5h0M913.5 155.5h0M913.5 157.5h0M914.5 163.5h0M914.5 153.5h0M914.5 146.5h0M914.5 142.5h0M914.5 164.5h0M914.5 151.5h0M914.5 164.5h0M915.5 161.5h0M915.5 164.5h0M915.5 143.5h0M915.5 146.5h0M915.5 174.5h0M915.5 168.5h0M915.5 159.5h0M916.5 160.5h0M916.5 175.5h0M916.5 174.5h0M916.5 175.5h0M916.5 162.5h0M916.5 156.5h0M916.5 163.5h0M917.5 156.5h0M917.5 147.5h0M917.5 161.5h0M917.5 153.5h0M917.5 155.5h0M917.5 149.5h0M917.5 143.5h0M918.5 152.5h0M918.5 156.5h0M918.5 162.5h0M918.5 155.5h0M918.5 170.5h0M918.5 147.5h0M918.5 144.5h0M919.5 156.5h0M919.5 141.5h0M919.5 173.5h0M919.5 158.5h0M919.5 157.5h0M919.5 170.5h0M919.5 155.5h0M920.5 159.5h0M920.5 152.5h0M920.5 154.5h0M920.5 149.5h0M920.5 160.5h0M920.5 164.5h0M920.5 158.5h0M921.5 154.5h0M921.5 146.5h0M921.5 159.5h0M921.5 154.5h0M921.5 159.5h0M921.5 158.5h0M922.5 180.5h0M922.5 148.5h0M922.5 168.5h0M922.5 159.5h0M922.5 140.5h0M922.5 154.5h0M922.5 167.5h0M923.5 152.5h0M923.5 167.5h0M923.5 157.5h0M923.5 169.5h0M923.5 151.5h0M923.5 155.5h0M923.5 139.5h0M924.5 155.5h0M924.5 171.5h0M924.5 172.5h0M924.5 177.5h0M924.5 161.5h0M924.5 158.5h0M924.5 151.5h0M925.5 166.5h0M925.5 156.5h0M925.5 161.5h0M925.5 142.5h0M925.5 161.5h0M925.5 150.5h0M925.5 165.5h0M926.5 149.5h0M926.5 162.5h0M926.5 149.5h0M926.5 147.5h0M926.5 171.5h0M926.5 156.5h0M926.5 167.5h0M927.5 174.5h0M927.5 162.5h0M927.5 158.5h0M927.5 157.5h0M927.5 149.5h0M927.5 165.5h0M927.5 163.5h0M928.5 164.5h0M928.5 162.5h0M928.5 153.5h0M928.5 142.5h0M928.5 165.5h0M928.5 167.5h0M928.5 171.5h0M929.5 154.5h0M929.5 149.5h0M929.5 166.5h0M929.5 165.5h0M929.5 155.5h0M929.5 154.5h0M929.5 153.5h0M930.5 140.5h0M930.5 146.5h0M930.5 159.5h0M930.5 161.5h0M930.5 159.5h0M930.5 162.5h0M930.5 161.5h0M931.5 156.5h0M931.5 166.5h0M931.5 160.5h0M931.5 161.5h0M931.5 165.5h0M931.5 169.5h0M931.5 159.5h0M932.5 133.5h0M932.5 164.5h0M932.5 150.5h0M932.5 152.5h0M932.5 155.5h0M932.5 152.5h0M932.5 161.5h0M933.5 158.5h0M933.5 164.5h0M933.5 166.5h0M933.5 164.5h0M933.5 151.5h0M933.5 153.5h0M933.5 174.5h0M934.5 175.5h0M934.5 154.5h0M934.5 146.5h0M934.5 161.5h0M934.5 164.5h0M934.5 147.5h0M934.5 149.5h0M935.5 157.5h0M935.5 162.5h0M935.5 162.5h0M935.5 167.5h0M935.5 159.5h0M935.5 171.5h0M935.5 160.5h0M936.5 147.5h0M936.5 143.5h0M936.5 165.5h0M936.5 156.5h0M936.5 146.5h0M936.5 154.5h0M936.5 153.5h0M937.5 165.5h0M937.5 152.5h0M937.5 174.5h0M937.5 156.5h0M937.5 172.5h0M937.5 153.5h0M938.5 157.5h0M938.5 150.5h0M938.5 167.5h0M938.5 160.5h0M938.5 162.5h0M938.5 155.5h0M938.5 161.5h0M939.5 155.5h0M939.5 166.5h0M939.5 153.5h0M939.5 145.5h0M939.5 141.5h0M939.5 147.5h0M939.5 158.5h0M940.5 144.5h0M940.5 150.5h0M940.5 150.5h0M940.5 162.5h0M940.5 164.5h0M940.5 169.5h0M940.5 175.5h0M941.5 160.5h0M941.5 162.5h0M941.5 152.5h0M941.5 172.5h0M941.5 165.5h0M941.5 164.5h0M941.5 171.5h0M942.5 162.5h0M942.5 159.5h0M942.5 152.5h0M942.5 152.5h0M942.5 161.5h0M942.5 147.5h0M942.5 155.5h0M943.5 149.5h0M943.5 166.5h0M943.5 161.5h0M943.5 154.5h0M943.5 161.5h0M943.5 148.5h0M943.5 153.5h0M944.5 154.5h0M944.5 150.5h0M944.5 154.5h0M944.5 151.5h0M944.5 161.5h0M944.5 164.5h0M944.5 167.5h0M945.5 153.5h0M945.5 156.5h0M945.5 163.5h0M945.5 148.5h0M945.5 149.5h0M945.5 170.5h0M945.5 166.5h0M946.5 153.5h0M946.5 162.5h0M946.5 166.5h0M946.5 162.5h0M946.5 170.5h0M946.5 163.5h0M946.5 145.5h0M947.5 166.5h0M947.5 172.5h0M947.5 164.5h0M947.5 155.5h0M947.5 160.5h0M947.5 165.5h0M947.5 168.5h0M948.5 162.5h0M948.5 159.5h0M948.5 149.5h0M948.5 166.5h0M948.5 169.5h0M948.5 162.5h0M948.5 150.5h0M949.5 163.5h0M949.5 162.5h0M949.5 161.5h0M949.5 168.5h0M949.5 130.5h0M949.5 155.5h0M949.5 141.5h0M950.5 163.5h0M950.5 160.5h0M950.5 173.5h0M950.5 149.5h0M950.5 163.5h0M950.5 160.5h0M950.5 164.5h0M951.5 177.5h0M951.5 155.5h0M951.5 155.5h0M951.5 151.5h0M951.5 154.5h0M951.5 159.5h0M951.5 140.5h0M952.5 159.5h0M952.5 153.5h0M952.5 156.5h0M952.5 150.5h0M952.5 137.5h0M952.5 155.5h0M952.5 157.5h0M953.5 158.5h0M953.5 149.5h0M953.5 164.5h0M953.5 165.5h0M953.5 152.5h0M953.5 158.5h0M953.5 143.5h0M954.5 150.5h0M954.5 148.5h0M954.5 156.5h0M954.5 174.5h0M954.5 155.5h0M954.5 147.5h0M955.5 153.5h0M955.5 169.5h0M955.5 164.5h0M955.5 156.5h0M955.5 167.5h0M955.5 150.5h0M955.5 139.5h0M956.5 160.5h0M956.5 150.5h0M956.5 154.5h0M956.5 153.5h0M956.5 140.5h0M956.5 148.5h0M956.5 171.5h0M957.5 154.5h0M957.5 174.5h0M957.5 161.5h0M957.5 151.5h0M957.5 144.5h0M957.5 157.5h0M957.5 153.5h0M958.5 168.5h0M958.5 157.5h0M958.5 163.5h0M958.5 150.5h0M958.5 147.5h0M958.5 154.5h0M958.5 177.5h0M959.5 164.5h0M959.5 154.5h0M959.5 166.5h0M959.5 148.5h0M959.5 158.5h0M959.5 148.5h0M959.5 158.5h0M960.5 161.5h0M960.5 155.5h0M960.5 152.5h0M960.5 162.5h0M960.5 164.5h0M960.5 152.5h0M960.5 157.5h0M961.5 159.5h0M961.5 161.5h0M961.5 156.5h0M961.5 160.5h0M961.5 145.5h0M961.5 154.5h0M961.5 167.5h0M962.5 160.5h0M962.5 151.5h0M962.5 156.5h0M962.5 157.5h0M962.5 166.5h0M962.5 164.5h0M962.5 171.5h0M963.5 160.5h0M963.5 137.5h0M963.5 177.5h0M963.5 147.5h0M963.5 154.5h0M963.5 151.5h0M963.5 166.5h0M964.5 151.5h0M964.5 154.5h0M964.5 150.5h0M964.5 157.5h0M964.5 165.5h0M964.5 149.5h0M964.5 143.5h0M965.5 157.5h0M965.5 164.5h0M965.5 168.5h0M965.5 156.5h0M965.5 165.5h0M965.5 154.5h0M965.5 142.5h0M966.5 156.5h0M966.5 143.5h0M966.5 159.5h0M966.5 144.5h0M966.5 163.5h0M966.5 162.5h0M966.5 172.5h0M967.5 169.5h0M967.5 141.5h0M967.5 153.5h0M967.5 162.5h0M967.5 156.5h0M967.5 143.5h0M967.5 169.5h0M968.5 158.5h0M968.5 147.5h0M968.5 161.5h0M968.5 152.5h0M968.5 154.5h0M968.5 158.5h0M968.5 153.5h0M969.5 172.5h0M969.5 159.5h0M969.5 164.5h0M969.5 171.5h0M969.5 167.5h0M969.5 151.5h0M969.5 138.5h0M970.5 171.5h0M970.5 169.5h0M970.5 163.5h0M970.5 156.5h0M970.5 140.5h0M970.5 160.5h0M971.5 166.5h0M971.5 147.5h0M971.5 165.5h0M971.5 144.5h0M971.5 154.5h0M971.5 169.5h0M971.5 170.5h0M972.5 158.5h0M972.5 163.5h0M972.5 152.5h0M972.5 165.5h0M972.5 177.5h0M972.5 156.5h0M972.5 164.5h0M973.5 147.5h0M973.5 147.5h0M973.5 142.5h0M973.5 157.5h0M973.5 161.5h0M973.5 162.5h0M973.5 141.5h0M974.5 149.5h0M974.5 158.5h0M974.5 145.5h0M974.5 165.5h0M974.5 157.5h0M974.5 150.5h0M974.5 147.5h0M975.5 160.5h0M975.5 150.5h0M975.5 154.5h0M975.5 144.5h0M975.5 148.5h0M975.5 171.5h0M975.5 154.5h0M976.5 167.5h0M976.5 149.5h0M976.5 156.5h0M976.5 146.5h0M976.5 155.5h0M976.5 156.5h0M976.5 163.5h0M977.5 166.5h0M977.5 162.5h0M977.5 149.5h0M977.5 170.5h0M977.5 145.5h0M977.5 163.5h0M977.5 163.5h0M978.5 157.5h0M978.5 154.5h0M978.5 168.5h0M978.5 154.5h0M978.5 173.5h0M978.5 164.5h0M978.5 167.5h0M979.5 160.5h0M979.5 155.5h0M979.5 164.5h0M979.5 163.5h0M979.5 163.5h0M979.5 145.5h0M979.5 143.5h0M980.5 164.5h0M980.5 170.5h0M980.5 167.5h0M980.5 163.5h0M980.5 152.5h0M980.5 152.5h0M980.5 148.5h0M981.5 134.5h0M981.5 154.5h0M981.5 150.5h0M981.5 153.5h0M981.5 153.5h0M981.5 164.5h0M981.5 151.5h0M982.5 144.5h0M982.5 151.5h0M982.5 156.5h0M982.5 147.5h0M982.5 170.5h0M982.5 161.5h0M982.5 164.5h0M983.5 158.5h0M983.5 152.5h0M983.5 137.5h0M983.5 148.5h0M983.5 158.5h0M983.5 145.5h0M983.5 153.5h0M984.5 157.5h0M984.5 144.5h0M984.5 148.5h0M984.5 151.5h0M984.5 167.5h0M984.5 164.5h0M984.5 149.5h0M985.5 162.5h0M985.5 155.5h0M985.5 159.5h0M985.5 150.5h0M985.5 149.5h0M985.5 170.5h0M985.5 171.5h0M986.5 151.5h0M986.5 150.5h0M986.5 161.5h0M986.5 165.5h0M986.5 167.5h0M986.5 159.5h0M987.5 173.5h0M987.5 164.5h0M987.5 163.5h0M987.5 149.5h0M987.5 162.5h0M987.5 163.5h0M987.5 143.5h0M988.5 168.5h0M988.5 150.5h0M988.5 132.5h0M988.5 163.5h0M988.5 165.5h0M988.5 158.5h0M988.5 144.5h0M989.5 144.5h0M989.5 148.5h0M989.5 155.5h0M989.5 162.5h0M989.5 148.5h0M989.5 140.5h0M989.5 154.5h0M990.5 159.5h0M990.5 144.5h0M990.5 156.5h0M990.5 153.5h0M990.5 135.5h0M990.5 151.5h0M990.5 147.5h0M991.5 173.5h0M991.5 157.5h0M991.5 144.5h0M991.5 153.5h0M991.5 155.5h0M991.5 165.5h0M991.5 165.5h0M992.5 147.5h0M992.5 162.5h0M992.5 165.5h0M992.5 155.5h0M992.5 161.5h0M992.5 150.5h0M992.5 162.5h0M993.5 154.5h0M993.5 163.5h0M993.5 152.5h0M993.5 152.5h0M993.5 167.5h0M993.5 154.5h0M993.5 143.5h0M994.5 140.5h0M994.5 138.5h0M994.5 140.5h0M994.5 155.5h0M994.5 165.5h0M994.5 157.5h0M994.5 153.5h0M995.5 157.5h0M995.5 170.5h0M995.5 148.5h0M995.5 159.5h0M995.5 174.5h0M995.5 149.5h0M995.5 162.5h0M996.5 135.5h0M996.5 150.5h0M996.5 160.5h0M996.5 139.5h0M996.5 165.5h0M996.5 165.5h0M996.5 166.5h0M997.5 159.5h0M997.5 162.5h0M997.5 144.5h0M997.5 165.5h0M997.5 159.5h0M997.5 145.5h0M997.5 161.5h0M998.5 147.5h0M998.5 152.5h0M998.5 147.5h0M998.5 163.5h0M998.5 149.5h0M998.5 166.5h0M998.5 160.5h0M999.5 162.5h0M999.5 150.5h0M999.5 154.5h0M999.5 144.5h0M999.5 158.5h0M999.5 151.5h0M999.5 149.5h0M1000.5 170.5h0M1000.5 153.5h0M1000.5 157.5h0M1000.5 172.5h0M1000.5 169.5h0M1000.5 167.5h0M1000.5 169.5h0M1001.5 161.5h0M1001.5 154.5h0M1001.5 170.5h0M1001.5 155.5h0M1001.5 169.5h0M1001.5 144.5h0M1001.5 168.5h0M1002.5 150.5h0M1002.5 161.5h0M1002.5 136.5h0M1002.5 156.5h0M1002.5 148.5h0M1002.5 166.5h0M1003.5 167.5h0M1003.5 148.5h0M1003.5 161.5h0M1003.5 149.5h0M1003.5 154.5h0M1003.5 156.5h0M1003.5 135.5h0M1004.5 166.5h0M1004.5 166.5h0M1004.5 148.5h0M1004.5 142.5h0M1004.5 164.5h0M1004.5 163.5h0M1004.5 143.5h0M1005.5 150.5h0M1005.5 164.5h0M1005.5 146.5h0M1005.5 154.5h0M1005.5 159.5h0M1005.5 158.5h0M1005.5 165.5h0M1006.5 158.5h0M1006.5 154.5h0M1006.5 144.5h0M1006.5 169.5h0M1006.5 169.5h0M1006.5 168.5h0M1006.5 142.5h0M1007.5 147.5h0M1007.5 161.5h0M1007.5 164.5h0M1007.5 174.5h0M1007.5 160.5h0M1007.5 161.5h0M1007.5 162.5h0M1008.5 160.5h0M1008.5 158.5h0M1008.5 145.5h0M1008.5 148.5h0M1008.5 169.5h0M1008.5 166.5h0M1008.5 146.5h0M1009.5 155.5h0M1009.5 146.5h0M1009.5 143.5h0M1009.5 149.5h0M1009.5 139.5h0M1009.5 171.5h0M1009.5 165.5h0M1010.5 163.5h0M1010.5 170.5h0M1010.5 152.5h0M1010.5 151.5h0M1010.5 144.5h0M1010.5 157.5h0M1010.5 164.5h0M1011.5 169.5h0M1011.5 140.5h0M1011.5 148.5h0M1011.5 151.5h0M1011.5 164.5h0M1011.5 169.5h0M1011.5 143.5h0M1012.5 140.5h0M1012.5 162.5h0M1012.5 158.5h0M1012.5 161.5h0M1012.5 168.5h0M1012.5 156.5h0M1012.5 160.5h0M1013.5 153.5h0M1013.5 171.5h0M1013.5 152.5h0M1013.5 170.5h0M1013.5 160.5h0M1013.5 152.5h0M1013.5 161.5h0M1014.5 165.5h0M1014.5 157.5h0M1014.5 155.5h0M1014.5 152.5h0M1014.5 154.5h0M1014.5 158.5h0M1014.5 152.5h0M1015.5 154.5h0M1015.5 153.5h0M1015.5 161.5h0M1015.5 151.5h0M1015.5 158.5h0M1015.5 169.5h0M1015.5 147.5h0M1016.5 148.5h0M1016.5 155.5h0M1016.5 164.5h0M1016.5 155.5h0M1016.5 146.5h0M1016.5 158.5h0M1016.5 167.5h0M1017.5 162.5h0M1017.5 161.5h0M1017.5 177.5h0M1017.5 149.5h0M1017.5 156.5h0M1017.5 149.5h0M1017.5 156.5h0M1018.5 163.5h0M1018.5 149.5h0M1018.5 150.5h0M1018.5 147.5h0M1018.5 177.5h0M1018.5 156.5h0M1018.5 157.5h0M1019.5 174.5h0M1019.5 165.5h0M1019.5 158.5h0M1019.5 156.5h0M1019.5 158.5h0M1019.5 154.5h0M1020.5 157.5h0M1020.5 155.5h0M1020.5 168.5h0M1020.5 159.5h0M1020.5 139.5h0M1020.5 162.5h0M1020.5 160.5h0M1021.5 149.5h0M1021.5 147.5h0M1021.5 166.5h0M1021.5 131.5h0M1021.5 163.5h0M1021.5 160.5h0M1021.5 164.5h0M1022.5 146.5h0M1022.5 160.5h0M1022.5 160.5h0M1022.5 171.5h0M1022.5 153.5h0M1022.5 166.5h0M1022.5 158.5h0M1023.5 167.5h0M1023.5 161.5h0M1023.5 151.5h0M1023.5 148.5h0M1023.5 164.5h0M1023.5 157.5h0M1023.5 152.5h0M1024.5 169.5h0M1024.5 167.5h0M1024.5 162.5h0M1024.5 141.5h0M1024.5 163.5h0M1024.5 175.5h0M1024.5 151.5h0M1025.5 163.5h0M1025.5 161.5h0M1025.5 160.5h0M1025.5 135.5h0M1025.5 170.5h0M1025.5 159.5h0M1025.5 137.5h0M1026.5 175.5h0M1026.5 164.5h0M1026.5 166.5h0M1026.5 145.5h0M1026.5 169.5h0M1026.5 161.5h0M1026.5 151.5h0M1027.5 148.5h0M1027.5 164.5h0M1027.5 157.5h0M1027.5 164.5h0M1027.5 154.5h0M1027.5 151.5h0M1027.5 177.5h0M1028.5 148.5h0M1028.5 161.5h0M1028.5 153.5h0M1028.5 167.5h0M1028.5 144.5h0M1028.5 161.5h0M1028.5 153.5h0M1029.5 148.5h0M1029.5 160.5h0M1029.5 163.5h0M1029.5 155.5h0M1029.5 158.5h0M1029.5 160.5h0M1029.5 165.5h0M1030.5 144.5h0M1030.5 156.5h0M1030.5 158.5h0M1030.5 162.5h0M1030.5 150.5h0M1030.5 163.5h0M1030.5 147.5h0M1031.5 146.5h0M1031.5 164.5h0M1031.5 160.5h0M1031.5 164.5h0M1031.5 168.5h0M1031.5 159.5h0M1031.5 160.5h0M1032.5 167.5h0M1032.5 166.5h0M1032.5 161.5h0M1032.5 163.5h0M1032.5 163.5h0M1032.5 147.5h0M1032.5 170.5h0M1033.5 152.5h0M1033.5 141.5h0M1033.5 148.5h0M1033.5 153.5h0M1033.5 161.5h0M1033.5 143.5h0M1033.5 160.5h0M1034.5 169.5h0M1034.5 163.5h0M1034.5 157.5h0M1034.5 169.5h0M1034.5 144.5h0M1034.5 159.5h0M1034.5 160.5h0M1035.5 166.5h0M1035.5 153.5h0M1035.5 167.5h0M1035.5 163.5h0M1035.5 169.5h0M1035.5 152.5h0M1036.5 154.5h0M1036.5 168.5h0M1036.5 157.5h0M1036.5 149.5h0M1036.5 158.5h0M1036.5 170.5h0M1036.5 157.5h0M1037.5 154.5h0M1037.5 154.5h0M1037.5 170.5h0M1037.5 179.5h0M1037.5 167.5h0M1037.5 141.5h0M1037.5 166.5h0M1038.5 166.5h0M1038.5 149.5h0M1038.5 170.5h0M1038.5 147.5h0M1038.5 164.5h0M1038.5 167.5h0M1038.5 151.5h0M1039.5 155.5h0M1039.5 165.5h0M1039.5 158.5h0M1039.5 147.5h0M1039.5 170.5h0M1039.5 147.5h0M1039.5 154.5h0M1040.5 154.5h0M1040.5 144.5h0M1040.5 172.5h0M1040.5 170.5h0M1040.5 156.5h0M1040.5 149.5h0M1040.5 145.5h0M1041.5 153.5h0M1041.5 145.5h0M1041.5 144.5h0M1041.5 145.5h0M1041.5 166.5h0M1041.5 165.5h0M1041.5 164.5h0M1042.5 156.5h0M1042.5 150.5h0M1042.5 139.5h0M1042.5 150.5h0M1042.5 165.5h0M1042.5 144.5h0M1042.5 133.5h0M1043.5 162.5h0M1043.5 131.5h0M1043.5 157.5h0M1043.5 165.5h0M1043.5 163.5h0M1043.5 168.5h0M1043.5 162.5h0M1044.5 164.5h0M1044.5 147.5h0M1044.5 162.5h0M1044.5 169.5h0M1044.5 146.5h0M1044.5 156.5h0M1044.5 173.5h0M1045.5 158.5h0M1045.5 154.5h0M1045.5 163.5h0M1045.5 162.5h0M1045.5 164.5h0M1045.5 164.5h0M1045.5 138.5h0M1046.5 151.5h0M1046.5 162.5h0M1046.5 162.5h0M1046.5 164.5h0M1046.5 162.5h0M1046.5 173.5h0M1046.5 151.5h0M1047.5 141.5h0M1047.5 162.5h0M1047.5 165.5h0M1047.5 154.5h0M1047.5 160.5h0M1047.5 149.5h0M1047.5 169.5h0M1048.5 152.5h0M1048.5 158.5h0M1048.5 154.5h0M1048.5 155.5h0M1048.5 132.5h0M1048.5 153.5h0M1048.5 153.5h0M1049.5 149.5h0M1049.5 167.5h0M1049.5 155.5h0M1049.5 159.5h0M1049.5 149.5h0M1049.5 170.5h0M1049.5 172.5h0M1050.5 149.5h0M1050.5 140.5h0M1050.5 163.5h0M1050.5 155.5h0M1050.5 156.5h0M1050.5 161.5h0M1050.5 149.5h0M1051.5 155.5h0M1051.5 169.5h0M1051.5 168.5h0M1051.5 150.5h0M1051.5 156.5h0M1051.5 166.5h0M1052.5 150.5h0M1052.5 162.5h0M1052.5 164.5h0M1052.5 135.5h0M1052.5 156.5h0M1052.5 165.5h0M1052.5 158.5h0M1053.5 141.5h0M1053.5 162.5h0M1053.5 152.5h0M1053.5 145.5h0M1053.5 160.5h0M1053.5 157.5h0M1053.5 134.5h0M1054.5 157.5h0M1054.5 158.5h0M1054.5 154.5h0M1054.5 168.5h0M1054.5 163.5h0M1054.5 173.5h0M1054.5 148.5h0M1055.5 159.5h0M1055.5 132.5h0M1055.5 170.5h0M1055.5 161.5h0M1055.5 171.5h0M1055.5 164.5h0M1055.5 158.5h0M1056.5 146.5h0M1056.5 154.5h0M1056.5 166.5h0M1056.5 158.5h0M1056.5 140.5h0M1056.5 151.5h0M1056.5 152.5h0M1057.5 142.5h0M1057.5 165.5h0M1057.5 152.5h0M1057.5 157.5h0M1057.5 170.5h0M1057.5 162.5h0M1057.5 164.5h0M1058.5 156.5h0M1058.5 159.5h0M1058.5 149.5h0M1058.5 148.5h0M1058.5 160.5h0M1058.5 168.5h0M1058.5 147.5h0M1059.5 169.5h0M1059.5 159.5h0M1059.5 177.5h0M1059.5 159.5h0M1059.5 150.5h0M1059.5 155.5h0M1059.5 156.5h0M1060.5 163.5h0M1060.5 144.5h0M1060.5 152.5h0M1060.5 150.5h0M1060.5 161.5h0M1060.5 155.5h0M1060.5 154.5h0M1061.5 159.5h0M1061.5 146.5h0M1061.5 157.5h0M1061.5 165.5h0M1061.5 146.5h0M1061.5 157.5h0M1061.5 155.5h0M1062.5 165.5h0M1062.5 151.5h0M1062.5 167.5h0M1062.5 159.5h0M1062.5 152.5h0M1062.5 151.5h0M1062.5 157.5h0M1063.5 165.5h0M1063.5 145.5h0M1063.5 157.5h0M1063.5 155.5h0M1063.5 158.5h0M1063.5 152.5h0M1063.5 166.5h0M1064.5 163.5h0M1064.5 162.5h0M1064.5 157.5h0M1064.5 152.5h0M1064.5 157.5h0M1064.5 147.5h0M1064.5 168.5h0M1065.5 158.5h0M1065.5 163.5h0M1065.5 149.5h0M1065.5 137.5h0M1065.5 168.5h0M1065.5 159.5h0M1065.5 167.5h0M1066.5 168.5h0M1066.5 155.5h0M1066.5 166.5h0M1066.5 166.5h0M1066.5 169.5h0M1066.5 146.5h0M1066.5 159.5h0M1067.5 132.5h0M1067.5 159.5h0M1067.5 139.5h0M1067.5 136.5h0M1067.5 150.5h0M1067.5 158.5h0M1068.5 158.5h0M1068.5 170.5h0M1068.5 161.5h0M1068.5 136.5h0M1068.5 136.5h0M1068.5 139.5h0M1068.5 154.5h0M1069.5 154.5h0M1069.5 148.5h0M1069.5 149.5h0M1069.5 154.5h0M1069.5 164.5h0M1069.5 167.5h0M1069.5 145.5h0M1070.5 153.5h0M1070.5 159.5h0M1070.5 161.5h0M1070.5 152.5h0M1070.5 170.5h0M1070.5 149.5h0M1070.5 154.5h0M1071.5 150.5h0M1071.5 165.5h0M1071.5 158.5h0M1071.5 175.5h0M1071.5 155.5h0M1071.5 162.5h0M1071.5 164.5h0M1072.5 154.5h0M1072.5 149.5h0M1072.5 154.5h0M1072.5 165.5h0M1072.5 149.5h0M1072.5 154.5h0M1072.5 154.5h0M1073.5 143.5h0M1073.5 146.5h0M1073.5 154.5h0M1073.5 148.5h0M1073.5 151.5h0M1073.5 158.5h0M1073.5 154.5h0M1074.5 154.5h0M1074.5 154.5h0M1074.5 147.5h0M1074.5 150.5h0M1074.5 169.5h0M1074.5 159.5h0M1074.5 145.5h0M1075.5 146.5h0M1075.5 161.5h0M1075.5 161.5h0M1075.5 168.5h0M1075.5 157.5h0M1075.5 145.5h0M1075.5 162.5h0M1076.5 134.5h0M1076.5 151.5h0M1076.5 156.5h0M1076.5 149.5h0M1076.5 156.5h0M1076.5 152.5h0M1076.5 135.5h0M1077.5 165.5h0M1077.5 164.5h0M1077.5 156.5h0M1077.5 158.5h0M1077.5 166.5h0M1077.5 146.5h0M1077.5 171.5h0M1078.5 145.5h0M1078.5 153.5h0M1078.5 149.5h0M1078.5 145.5h0M1078.5 172.5h0M1078.5 163.5h0M1078.5 158.5h0M1079.5 149.5h0M1079.5 147.5h0M1079.5 138.5h0M1079.5 167.5h0M1079.5 149.5h0M1079.5 155.5h0M1079.5 151.5h0M1080.5 153.5h0M1080.5 158.5h0M1080.5 178.5h0M1080.5 162.5h0M1080.5 172.5h0M1080.5 164.5h0M1080.5 140.5h0M1081.5 135.5h0M1081.5 154.5h0M1081.5 152.5h0M1081.5 156.5h0M1081.5 158.5h0M1081.5 169.5h0M1081.5 154.5h0M1082.5 167.5h0M1082.5 147.5h0M1082.5 155.5h0M1082.5 175.5h0M1082.5 156.5h0M1082.5 172.5h0M1082.5 139.5h0M1083.5 152.5h0M1083.5 158.5h0M1083.5 141.5h0M1083.5 166.5h0M1083.5 173.5h0M1083.5 167.5h0M1083.5 172.5h0M1084.5 153.5h0M1084.5 145.5h0M1084.5 165.5h0M1084.5 154.5h0M1084.5 161.5h0M1084.5 162.5h0M1085.5 145.5h0M1085.5 134.5h0M1085.5 144.5h0M1085.5 156.5h0M1085.5 168.5h0M1085.5 146.5h0M1085.5 155.5h0M1086.5 169.5h0M1086.5 155.5h0M1086.5 148.5h0M1086.5 152.5h0M1086.5 164.5h0M1086.5 168.5h0M1086.5 155.5h0M1087.5 178.5h0M1087.5 154.5h0M1087.5 147.5h0M1087.5 147.5h0M1087.5 146.5h0M1087.5 163.5h0M1087.5 156.5h0M1088.5 170.5h0M1088.5 162.5h0M1088.5 175.5h0M1088.5 170.5h0M1088.5 163.5h0M1088.5 157.5h0M1088.5 150.5h0M1089.5 156.5h0M1089.5 155.5h0M1089.5 173.5h0M1089.5 155.5h0M1089.5 145.5h0M1089.5 152.5h0M1089.5 165.5h0M1090.5 153.5h0M1090.5 140.5h0M1090.5 156.5h0M1090.5 167.5h0M1090.5 140.5h0M1090.5 170.5h0M1090.5 157.5h0M1091.5 165.5h0M1091.5 142.5h0M1091.5 167.5h0M1091.5 152.5h0M1091.5 162.5h0M1091.5 171.5h0M1091.5 156.5h0M1092.5 148.5h0M1092.5 172.5h0M1092.5 165.5h0M1092.5 164.5h0M1092.5 162.5h0M1092.5 155.5h0M1092.5 162.5h0M1093.5 162.5h0M1093.5 144.5h0M1093.5 163.5h0M1093.5 147.5h0M1093.5 159.5h0M1093.5 163.5h0M1093.5 150.5h0M1094.5 157.5h0M1094.5 156.5h0M1094.5 162.5h0M1094.5 159.5h0M1094.5 159.5h0M1094.5 152.5h0M1094.5 134.5h0M1095.5 155.5h0M1095.5 158.5h0M1095.5 148.5h0M1095.5 152.5h0M1095.5 177.5h0M1095.5 175.5h0M1095.5 159.5h0M1096.5 149.5h0M1096.5 160.5h0M1096.5 162.5h0M1096.5 164.5h0M1096.5 145.5h0M1096.5 171.5h0M1096.5 169.5h0M1097.5 150.5h0M1097.5 168.5h0M1097.5 170.5h0M1097.5 158.5h0M1097.5 161.5h0M1097.5 148.5h0M1097.5 161.5h0M1098.5 144.5h0M1098.5 170.5h0M1098.5 157.5h0M1098.5 146.5h0M1098.5 158.5h0M1098.5 159.5h0M1098.5 153.5h0M1099.5 161.5h0M1099.5 167.5h0M1099.5 164.5h0M1099.5 150.5h0M1099.5 147.5h0M1099.5 154.5h0M1099.5 153.5h0M1100.5 146.5h0M1100.5 150.5h0M1100.5 161.5h0M1100.5 152.5h0M1100.5 155.5h0M1100.5 142.5h0M1101.5 156.5h0M1101.5 169.5h0M1101.5 145.5h0M1101.5 133.5h0M1101.5 143.5h0M1101.5 156.5h0M1101.5 169.5h0M1102.5 180.5h0M1102.5 157.5h0M1102.5 151.5h0M1102.5 155.5h0M1102.5 164.5h0M1102.5 142.5h0M1102.5 154.5h0M1103.5 144.5h0M1103.5 162.5h0M1103.5 159.5h0M1103.5 156.5h0M1103.5 153.5h0M1103.5 149.5h0M1103.5 153.5h0M1104.5 151.5h0M1104.5 148.5h0M1104.5 162.5h0M1104.5 177.5h0M1104.5 166.5h0M1104.5 157.5h0M1104.5 164.5h0M1105.5 145.5h0M1105.5 152.5h0M1105.5 141.5h0M1105.5 161.5h0M1105.5 157.5h0M1105.5 157.5h0M1105.5 146.5h0M1106.5 160.5h0M1106.5 157.5h0M1106.5 153.5h0M1106.5 168.5h0M1106.5 153.5h0M1106.5 175.5h0M1106.5 137.5h0M1107.5 139.5h0M1107.5 147.5h0M1107.5 152.5h0M1107.5 167.5h0M1107.5 158.5h0M1107.5 156.5h0M1107.5 156.5h0M1108.5 168.5h0M1108.5 166.5h0M1108.5 142.5h0M1108.5 149.5h0M1108.5 139.5h0M1108.5 163.5h0M1108.5 165.5h0M1109.5 158.5h0M1109.5 153.5h0M1109.5 171.5h0M1109.5 158.5h0M1109.5 142.5h0M1109.5 166.5h0M1109.5 155.5h0M1110.5 163.5h0M1110.5 159.5h0M1110.5 175.5h0M1110.5 161.5h0M1110.5 154.5h0M1110.5 164.5h0M1110.5 149.5h0M1111.5 163.5h0M1111.5 153.5h0M1111.5 171.5h0M1111.5 168.5h0M1111.5 169.5h0M1111.5 142.5h0M1111.5 138.5h0M1112.5 149.5h0M1112.5 153.5h0M1112.5 160.5h0M1112.5 168.5h0M1112.5 149.5h0M1112.5 151.5h0M1112.5 163.5h0M1113.5 162.5h0M1113.5 158.5h0M1113.5 171.5h0M1113.5 155.5h0M1113.5 143.5h0M1113.5 172.5h0M1113.5 177.5h0M1114.5 166.5h0M1114.5 159.5h0M1114.5 150.5h0M1114.5 159.5h0M1114.5 141.5h0M1114.5 162.5h0M1114.5 158.5h0M1115.5 149.5h0M1115.5 167.5h0M1115.5 173.5h0M1115.5 162.5h0M1115.5 158.5h0M1115.5 160.5h0M1115.5 137.5h0M1116.5 156.5h0M1116.5 161.5h0M1116.5 165.5h0M1116.5 140.5h0M1116.5 167.5h0M1116.5 150.5h0M1117.5 146.5h0M1117.5 174.5h0M1117.5 168.5h0M1117.5 163.5h0M1117.5 160.5h0M1117.5 169.5h0M1117.5 147.5h0M1118.5 152.5h0M1118.5 156.5h0M1118.5 147.5h0M1118.5 158.5h0M1118.5 152.5h0M1118.5 155.5h0M1118.5 168.5h0M1119.5 154.5h0M1119.5 157.5h0M1119.5 133.5h0M1119.5 174.5h0M1119.5 148.5h0M1119.5 169.5h0M1119.5 144.5h0M1120.5 164.5h0M1120.5 151.5h0M1120.5 151.5h0M1120.5 156.5h0M1120.5 167.5h0M1120.5 162.5h0M1120.5 172.5h0M1121.5 165.5h0M1121.5 156.5h0M1121.5 165.5h0M1121.5 166.5h0M1121.5 165.5h0M1121.5 154.5h0M1121.5 173.5h0M1122.5 175.5h0M1122.5 158.5h0M1122.5 178.5h0M1122.5 151.5h0M1122.5 163.5h0M1122.5 150.5h0M1122.5 143.5h0M1123.5 163.5h0M1123.5 173.5h0M1123.5 159.5h0M1123.5 173.5h0M1123.5 153.5h0M1123.5 169.5h0M1123.5 152.5h0M1124.5 155.5h0M1124.5 144.5h0M1124.5 152.5h0M1124.5 153.5h0M1124.5 162.5h0M1124.5 148.5h0M1124.5 164.5h0M1125.5 139.5h0M1125.5 156.5h0M1125.5 156.5h0M1125.5 148.5h0M1125.5 150.5h0M1125.5 146.5h0M1125.5 165.5h0M1126.5 153.5h0M1126.5 154.5h0M1126.5 148.5h0M1126.5 166.5h0M1126.5 162.5h0M1126.5 152.5h0M1126.5 170.5h0M1127.5 149.5h0M1127.5 177.5h0M1127.5 159.5h0M1127.5 160.5h0M1127.5 152.5h0M1127.5 149.5h0M1127.5 154.5h0M1128.5 146.5h0M1128.5 159.5h0M1128.5 167.5h0M1128.5 159.5h0M1128.5 156.5h0M1128.5 151.5h0M1128.5 174.5h0M1129.5 158.5h0M1129.5 157.5h0M1129.5 168.5h0M1129.5 150.5h0M1129.5 156.5h0M1129.5 156.5h0M1129.5 166.5h0M1130.5 156.5h0M1130.5 147.5h0M1130.5 181.5h0M1130.5 160.5h0M1130.5 169.5h0M1130.5 144.5h0M1130.5 163.5h0M1131.5 156.5h0M1131.5 157.5h0M1131.5 157.5h0M1131.5 180.5h0M1131.5 149.5h0M1131.5 160.5h0M1131.5 159.5h0M1132.5 154.5h0M1132.5 152.5h0M1132.5 149.5h0M1132.5 159.5h0M1132.5 163.5h0M1132.5 151.5h0M1133.5 146.5h0M1133.5 168.5h0M1133.5 151.5h0M1133.5 149.5h0M1133.5 148.5h0M1133.5 147.5h0M1133.5 163.5h0M1134.5 153.5h0M1134.5 143.5h0M1134.5 147.5h0M1134.5 170.5h0M1134.5 142.5h0M1134.5 167.5h0M1134.5 168.5h0M1135.5 138.5h0M1135.5 157.5h0M1135.5 177.5h0M1135.5 143.5h0M1135.5 154.5h0M1135.5 147.5h0M1135.5 156.5h0M1136.5 154.5h0M1136.5 153.5h0M1136.5 173.5h0M1136.5 162.5h0M1136.5 154.5h0M1136.5 153.5h0M1136.5 159.5h0M1137.5 148.5h0M1137.5 135.5h0M1137.5 158.5h0M1137.5 148.5h0M1137.5 164.5h0M1137.5 162.5h0M1137.5 153.5h0M1138.5 146.5h0M1138.5 156.5h0M1138.5 161.5h0M1138.5 163.5h0M1138.5 162.5h0M1138.5 154.5h0M1138.5 150.5h0M1139.5 151.5h0M1139.5 161.5h0M1139.5 157.5h0M1139.5 146.5h0M1139.5 168.5h0M1139.5 172.5h0M1139.5 160.5h0M1140.5 168.5h0M1140.5 158.5h0M1140.5 169.5h0M1140.5 166.5h0M1140.5 152.5h0M1140.5 155.5h0M1140.5 161.5h0M1141.5 175.5h0M1141.5 156.5h0M1141.5 157.5h0M1141.5 162.5h0M1141.5 155.5h0M1141.5 160.5h0M1141.5 165.5h0M1142.5 162.5h0M1142.5 172.5h0M1142.5 162.5h0M1142.5 150.5h0M1142.5 154.5h0M1142.5 165.5h0M1142.5 154.5h0M1143.5 156.5h0M1143.5 165.5h0M1143.5 164.5h0M1143.5 150.5h0M1143.5 142.5h0M1143.5 156.5h0M1143.5 164.5h0M1144.5 160.5h0M1144.5 135.5h0M1144.5 164.5h0M1144.5 155.5h0M1144.5 148.5h0M1144.5 149.5h0M1144.5 161.5h0M1145.5 160.5h0M1145.5 148.5h0M1145.5 131.5h0M1145.5 166.5h0M1145.5 158.5h0M1145.5 162.5h0M1145.5 152.5h0M1146.5 151.5h0M1146.5 161.5h0M1146.5 158.5h0M1146.5 161.5h0M1146.5 161.5h0M1146.5 166.5h0M1146.5 140.5h0M1147.5 149.5h0M1147.5 148.5h0M1147.5 151.5h0M1147.5 160.5h0M1147.5 156.5h0M1147.5 166.5h0M1147.5 152.5h0M1148.5 138.5h0M1148.5 137.5h0M1148.5 173.5h0M1148.5 153.5h0M1148.5 163.5h0M1148.5 164.5h0M1148.5 159.5h0M1149.5 146.5h0M1149.5 146.5h0M1149.5 152.5h0M1149.5 156.5h0M1149.5 147.5h0M1149.5 153.5h0M1150.5 159.5h0M1150.5 170.5h0M1150.5 158.5h0M1150.5 164.5h0M1150.5 175.5h0M1150.5 152.5h0M1150.5 166.5h0M1151.5 160.5h0M1151.5 168.5h0M1151.5 156.5h0M1151.5 161.5h0M1151.5 163.5h0M1151.5 150.5h0M1151.5 140.5h0M1152.5 149.5h0M1152.5 165.5h0M1152.5 155.5h0M1152.5 156.5h0M1152.5 156.5h0M1152.5 157.5h0M1152.5 151.5h0M1153.5 145.5h0M1153.5 156.5h0M1153.5 152.5h0M1153.5 152.5h0M1153.5 154.5h0M1153.5 162.5h0M1153.5 144.5h0M1154.5 163.5h0M1154.5 174.5h0M1154.5 172.5h0M1154.5 149.5h0M1154.5 163.5h0M1154.5 152.5h0M1154.5 147.5h0M1155.5 155.5h0M1155.5 160.5h0M1155.5 159.5h0M1155.5 150.5h0M1155.5 174.5h0M1155.5 150.5h0M1155.5 151.5h0M1156.5 147.5h0M1156.5 167.5h0M1156.5 155.5h0M1156.5 166.5h0M1156.5 152.5h0M1156.5 155.5h0M1156.5 147.5h0M1157.5 151.5h0M1157.5 161.5h0M1157.5 145.5h0M1157.5 174.5h0M1157.5 172.5h0M1157.5 154.5h0M1157.5 159.5h0M1158.5 160.5h0M1158.5 159.5h0M1158.5 154.5h0M1158.5 171.5h0M1158.5 150.5h0M1158.5 152.5h0M1158.5 145.5h0M1159.5 154.5h0M1159.5 175.5h0M1159.5 156.5h0M1159.5 138.5h0M1159.5 158.5h0M1159.5 143.5h0M1159.5 160.5h0M1160.5 145.5h0M1160.5 161.5h0M1160.5 150.5h0M1160.5 156.5h0M1160.5 161.5h0M1160.5 153.5h0M1160.5 152.5h0M1161.5 154.5h0M1161.5 164.5h0M1161.5 152.5h0M1161.5 150.5h0M1161.5 143.5h0M1161.5 160.5h0M1161.5 153.5h0M1162.5 166.5h0M1162.5 159.5h0M1162.5 156.5h0M1162.5 157.5h0M1162.5 162.5h0M1162.5 151.5h0M1162.5 151.5h0M1163.5 169.5h0M1163.5 157.5h0M1163.5 165.5h0M1163.5 150.5h0M1163.5 147.5h0M1163.5 149.5h0M1163.5 162.5h0M1164.5 169.5h0M1164.5 154.5h0M1164.5 173.5h0M1164.5 160.5h0M1164.5 171.5h0M1164.5 149.5h0M1164.5 161.5h0M1165.5 148.5h0M1165.5 155.5h0M1165.5 159.5h0M1165.5 159.5h0M1165.5 152.5h0M1165.5 157.5h0M1166.5 139.5h0M1166.5 139.5h0M1166.5 162.5h0M1166.5 150.5h0M1166.5 149.5h0M1166.5 136.5h0M1166.5 158.5h0M1167.5 143.5h0M1167.5 155.5h0M1167.5 165.5h0M1167.5 174.5h0M1167.5 148.5h0M1167.5 175.5h0M1167.5 156.5h0M1168.5 137.5h0M1168.5 157.5h0M1168.5 160.5h0M1168.5 152.5h0M1168.5 155.5h0M1168.5 150.5h0M1168.5 159.5h0M1169.5 158.5h0M1169.5 150.5h0M1169.5 139.5h0M1169.5 152.5h0M1169.5 148.5h0M1169.5 172.5h0M1169.5 170.5h0M1170.5 155.5h0M1170.5 150.5h0M1170.5 151.5h0M1170.5 157.5h0M1170.5 147.5h0M1170.5 169.5h0M1170.5 164.5h0M1171.5 169.5h0M1171.5 146.5h0M1171.5 147.5h0M1171.5 166.5h0M1171.5 153.5h0M1171.5 164.5h0M1171.5 160.5h0M1172.5 154.5h0M1172.5 158.5h0M1172.5 142.5h0M1172.5 138.5h0M1172.5 156.5h0M1172.5 161.5h0M1172.5 143.5h0M1173.5 151.5h0M1173.5 149.5h0M1173.5 157.5h0M1173.5 156.5h0M1173.5 156.5h0M1173.5 160.5h0M1173.5 148.5h0M1174.5 153.5h0M1174.5 150.5h0M1174.5 162.5h0M1174.5 164.5h0M1174.5 153.5h0M1174.5 155.5h0M1174.5 168.5h0M1175.5 162.5h0M1175.5 151.5h0M1175.5 157.5h0M1175.5 134.5h0M1175.5 155.5h0M1175.5 164.5h0M1175.5 169.5h0M1176.5 165.5h0M1176.5 171.5h0M1176.5 139.5h0M1176.5 151.5h0M1176.5 167.5h0M1176.5 164.5h0M1176.5 159.5h0M1177.5 153.5h0M1177.5 160.5h0M1177.5 148.5h0M1177.5 164.5h0M1177.5 150.5h0M1177.5 154.5h0M1177.5 159.5h0M1178.5 176.5h0M1178.5 147.5h0M1178.5 146.5h0M1178.5 171.5h0M1178.5 146.5h0M1178.5 169.5h0M1178.5 155.5h0M1179.5 149.5h0M1179.5 158.5h0M1179.5 158.5h0M1179.5 166.5h0M1179.5 159.5h0M1179.5 156.5h0M1179.5 156.5h0M1180.5 158.5h0M1180.5 146.5h0M1180.5 141.5h0M1180.5 152.5h0M1180.5 143.5h0M1180.5 158.5h0M1180.5 156.5h0M1181.5 168.5h0M1181.5 166.5h0M1181.5 137.5h0M1181.5 169.5h0M1181.5 155.5h0M1181.5 171.5h0M1182.5 142.5h0M1182.5 149.5h0M1182.5 156.5h0M1182.5 165.5h0M1182.5 158.5h0M1182.5 147.5h0M1182.5 153.5h0M1183.5 173.5h0M1183.5 162.5h0M1183.5 147.5h0M1183.5 133.5h0M1183.5 164.5h0M1183.5 167.5h0M1183.5 142.5h0M1184.5 155.5h0M1184.5 170.5h0M1184.5 146.5h0M1184.5 152.5h0M1184.5 152.5h0M1184.5 162.5h0M1184.5 133.5h0M1185.5 155.5h0M1185.5 148.5h0M1185.5 169.5h0M1185.5 172.5h0M1185.5 168.5h0M1185.5 168.5h0M1185.5 155.5h0M1186.5 158.5h0M1186.5 155.5h0M1186.5 163.5h0M1186.5 165.5h0M1186.5 159.5h0M1186.5 152.5h0M1186.5 166.5h0M1187.5 160.5h0M1187.5 170.5h0M1187.5 174.5h0M1187.5 176.5h0M1187.5 153.5h0M1187.5 153.5h0M1187.5 139.5h0M1188.5 169.5h0M1188.5 142.5h0M1188.5 154.5h0M1188.5 151.5h0M1188.5 160.5h0M1188.5 145.5h0M1188.5 160.5h0M1189.5 148.5h0M1189.5 142.5h0M1189.5 149.5h0M1189.5 142.5h0M1189.5 161.5h0M1189.5 148.5h0M1189.5 148.5h0M1190.5 159.5h0M1190.5 171.5h0M1190.5 151.5h0M1190.5 161.5h0M1190.5 165.5h0M1190.5 152.5h0M1190.5 162.5h0M1191.5 142.5h0M1191.5 147.5h0M1191.5 153.5h0M1191.5 146.5h0M1191.5 169.5h0M1191.5 170.5h0M1191.5 149.5h0M1192.5 158.5h0M1192.5 154.5h0M1192.5 157.5h0M1192.5 150.5h0M1192.5 159.5h0M1192.5 156.5h0M1192.5 165.5h0M1193.5 163.5h0M1193.5 157.5h0M1193.5 137.5h0M1193.5 158.5h0M1193.5 165.5h0M1193.5 159.5h0M1193.5 156.5h0M1194.5 157.5h0M1194.5 166.5h0M1194.5 172.5h0M1194.5 149.5h0M1194.5 170.5h0M1194.5 160.5h0M1194.5 149.5h0M1195.5 165.5h0M1195.5 155.5h0M1195.5 165.5h0M1195.5 169.5h0M1195.5 136.5h0M1195.5 157.5h0M1195.5 141.5h0M1196.5 152.5h0M1196.5 160.5h0M1196.5 147.5h0M1196.5 173.5h0M1196.5 133.5h0M1196.5 166.5h0M1196.5 164.5h0M1197.5 143.5h0M1197.5 173.5h0M1197.5 150.5h0M1197.5 162.5h0M1197.5 161.5h0M1197.5 161.5h0M1198.5 152.5h0M1198.5 147.5h0M1198.5 163.5h0M1198.5 173.5h0M1198.5 158.5h0M1198.5 172.5h0M1198.5 174.5h0M1199.5 168.5h0M1199.5 150.5h0M1199.5 161.5h0M1199.5 169.5h0M1199.5 148.5h0M1199.5 169.5h0M1199.5 157.5h0M1200.5 163.5h0M1200.5 164.5h0M1200.5 144.5h0M1200.5 172.5h0M1200.5 153.5h0M1200.5 162.5h0M1200.5 151.5h0M1201.5 165.5h0M1201.5 149.5h0M1201.5 158.5h0M1201.5 145.5h0M1201.5 158.5h0M1201.5 143.5h0M1201.5 171.5h0M1202.5 145.5h0M1202.5 152.5h0M1202.5 160.5h0M1202.5 142.5h0M1202.5 155.5h0M1202.5 162.5h0M1202.5 160.5h0M1203.5 151.5h0M1203.5 157.5h0M1203.5 153.5h0M1203.5 149.5h0M1203.5 150.5h0M1203.5 137.5h0M1203.5 149.5h0M1204.5 157.5h0M1204.5 153.5h0M1204.5 161.5h0M1204.5 154.5h0M1204.5 160.5h0M1204.5 153.5h0M1204.5 148.5h0M1205.5 154.5h0M1205.5 156.5h0M1205.5 152.5h0M1205.5 154.5h0M1205.5 164.5h0M1205.5 173.5h0M1205.5 152.5h0M1206.5 153.5h0M1206.5 176.5h0M1206.5 160.5h0M1206.5 148.5h0M1206.5 141.5h0M1206.5 150.5h0M1206.5 175.5h0M1207.5 167.5h0M1207.5 157.5h0M1207.5 152.5h0M1207.5 162.5h0M1207.5 170.5h0M1207.5 172.5h0M1207.5 156.5h0M1208.5 159.5h0M1208.5 157.5h0M1208.5 177.5h0M1208.5 145.5h0M1208.5 146.5h0M1208.5 157.5h0M1208.5 160.5h0M1209.5 164.5h0M1209.5 162.5h0M1209.5 164.5h0M1209.5 163.5h0M1209.5 162.5h0M1209.5 168.5h0M1209.5 163.5h0M1210.5 154.5h0M1210.5 157.5h0M1210.5 156.5h0M1210.5 164.5h0M1210.5 160.5h0M1210.5 177.5h0M1210.5 157.5h0M1211.5 155.5h0M1211.5 169.5h0M1211.5 153.5h0M1211.5 173.5h0M1211.5 150.5h0M1211.5 164.5h0M1211.5 158.5h0M1212.5 148.5h0M1212.5 164.5h0M1212.5 143.5h0M1212.5 158.5h0M1212.5 155.5h0M1212.5 161.5h0M1212.5 136.5h0M1213.5 150.5h0M1213.5 168.5h0M1213.5 157.5h0M1213.5 166.5h0M1213.5 181.5h0M1213.5 146.5h0M1214.5 153.5h0M1214.5 156.5h0M1214.5 169.5h0M1214.5 172.5h0M1214.5 146.5h0M1214.5 156.5h0M1214.5 146.5h0M1215.5 154.5h0M1215.5 161.5h0M1215.5 145.5h0M1215.5 173.5h0M1215.5 164.5h0M1215.5 159.5h0M1215.5 153.5h0M1216.5 164.5h0M1216.5 154.5h0M1216.5 158.5h0M1216.5 149.5h0M1216.5 145.5h0M1216.5 154.5h0M1216.5 159.5h0M1217.5 155.5h0M1217.5 147.5h0M1217.5 168.5h0M1217.5 160.5h0M1217.5 168.5h0M1217.5 161.5h0M1217.5 171.5h0M1218.5 148.5h0M1218.5 158.5h0M1218.5 166.5h0M1218.5 140.5h0M1218.5 151.5h0M1218.5 153.5h0M1218.5 156.5h0M1219.5 177.5h0M1219.5 159.5h0M1219.5 151.5h0M1219.5 161.5h0M1219.5 140.5h0M1219.5 157.5h0M1219.5 152.5h0M1220.5 167.5h0M1220.5 172.5h0M1220.5 136.5h0M1220.5 140.5h0M1220.5 169.5h0M1220.5 155.5h0M1220.5 150.5h0M1221.5 161.5h0M1221.5 161.5h0M1221.5 138.5h0M1221.5 171.5h0M1221.5 173.5h0M1221.5 155.5h0M1221.5 141.5h0M1222.5 145.5h0M1222.5 148.5h0M1222.5 166.5h0M1222.5 161.5h0M1222.5 141.5h0M1222.5 163.5h0M1222.5 164.5h0M1223.5 157.5h0M1223.5 147.5h0M1223.5 150.5h0M1223.5 166.5h0M1223.5 141.5h0M1223.5 158.5h0M1223.5 153.5h0M1224.5 162.5h0M1224.5 157.5h0M1224.5 175.5h0M1224.5 166.5h0M1224.5 161.5h0M1224.5 161.5h0M1224.5 157.5h0M1225.5 162.5h0M1225.5 169.5h0M1225.5 164.5h0M1225.5 148.5h0M1225.5 177.5h0M1225.5 175.5h0M1225.5 176.5h0M1226.5 151.5h0M1226.5 167.5h0M1226.5 146.5h0M1226.5 168.5h0M1226.5 158.5h0M1226.5 156.5h0M1226.5 163.5h0M1227.5 162.5h0M1227.5 149.5h0M1227.5 157.5h0M1227.5 160.5h0M1227.5 149.5h0M1227.5 173.5h0M1227.5 166.5h0M1228.5 162.5h0M1228.5 155.5h0M1228.5 141.5h0M1228.5 162.5h0M1228.5 156.5h0M1228.5 154.5h0M1228.5 160.5h0M1229.5 171.5h0M1229.5 157.5h0M1229.5 174.5h0M1229.5 168.5h0M1229.5 164.5h0M1229.5 167.5h0M1229.5 156.5h0M1230.5 166.5h0M1230.5 177.5h0M1230.5 160.5h0M1230.5 165.5h0M1230.5 155.5h0M1230.5 164.5h0M1231.5 156.5h0M1231.5 171.5h0M1231.5 151.5h0M1231.5 140.5h0M1231.5 168.5h0M1231.5 166.5h0M1231.5 154.5h0M1232.5 168.5h0M1232.5 172.5h0M1232.5 170.5h0M1232.5 162.5h0M1232.5 155.5h0M1232.5 148.5h0M1232.5 155.5h0M1233.5 162.5h0M1233.5 156.5h0M1233.5 159.5h0M1233.5 167.5h0M1233.5 158.5h0M1233.5 157.5h0M1233.5 174.5h0M1234.5 176.5h0M1234.5 154.5h0M1234.5 173.5h0M1234.5 159.5h0M1234.5 151.5h0M1234.5 172.5h0M1234.5 176.5h0M1235.5 157.5h0M1235.5 174.5h0M1235.5 168.5h0M1235.5 147.5h0M1235.5 156.5h0M1235.5 156.5h0M1235.5 168.5h0M1236.5 179.5h0M1236.5 156.5h0M1236.5 168.5h0M1236.5 163.5h0M1236.5 161.5h0M1236.5 172.5h0M1236.5 144.5h0M1237.5 170.5h0M1237.5 154.5h0M1237.5 151.5h0M1237.5 155.5h0M1237.5 161.5h0M1237.5 157.5h0M1237.5 168.5h0M1238.5 180.5h0M1238.5 162.5h0M1238.5 174.5h0M1238.5 160.5h0M1238.5 154.5h0M1238.5 138.5h0M1238.5 170.5h0M1239.5 163.5h0M1239.5 145.5h0M1239.5 165.5h0M1239.5 150.5h0M1239.5 165.5h0M1239.5 150.5h0M1239.5 150.5h0M1240.5 160.5h0M1240.5 172.5h0M1240.5 156.5h0M1240.5 158.5h0M1240.5 173.5h0M1240.5 142.5h0M1240.5 159.5h0M1241.5 162.5h0M1241.5 156.5h0M1241.5 145.5h0M1241.5 148.5h0M1241.5 163.5h0M1241.5 176.5h0M1241.5 172.5h0M1242.5 164.5h0M1242.5 156.5h0M1242.5 161.5h0M1242.5 166.5h0M1242.5 156.5h0M1242.5 165.5h0M1242.5 151.5h0M1243.5 166.5h0M1243.5 163.5h0M1243.5 161.5h0M1243.5 153.5h0M1243.5 145.5h0M1243.5 160.5h0M1243.5 157.5h0M1244.5 159.5h0M1244.5 162.5h0M1244.5 150.5h0M1244.5 165.5h0M1244.5 157.5h0M1244.5 157.5h0M1244.5 165.5h0M1245.5 160.5h0M1245.5 154.5h0M1245.5 158.5h0M1245.5 174.5h0M1245.5 158.5h0M1245.5 154.5h0M1245.5 155.5h0M1246.5 149.5h0M1246.5 172.5h0M1246.5 144.5h0M1246.5 159.5h0M1246.5 155.5h0M1246.5 155.5h0M1247.5 154.5h0M1247.5 170.5h0M1247.5 147.5h0M1247.5 151.5h0M1247.5 178.5h0M1247.5 164.5h0M1247.5 168.5h0M1248.5 143.5h0M1248.5 161.5h0M1248.5 157.5h0M1248.5 161.5h0M1248.5 151.5h0M1248.5 156.5h0M1248.5 159.5h0M1249.5 162.5h0M1249.5 138.5h0M1249.5 161.5h0M1249.5 167.5h0M1249.5 164.5h0M1249.5 177.5h0M1249.5 158.5h0M1250.5 148.5h0M1250.5 170.5h0M1250.5 152.5h0M1250.5 165.5h0M1250.5 154.5h0M1250.5 163.5h0M1250.5 156.5h0M1251.5 144.5h0M1251.5 152.5h0M1251.5 159.5h0M1251.5 144.5h0M1251.5 162.5h0M1251.5 159.5h0M1251.5 151.5h0M1252.5 150.5h0M1252.5 171.5h0M1252.5 169.5h0M1252.5 156.5h0M1252.5 172.5h0M1252.5 160.5h0M1252.5 145.5h0M1253.5 144.5h0M1253.5 154.5h0M1253.5 159.5h0M1253.5 161.5h0M1253.5 160.5h0M1253.5 168.5h0M1253.5 160.5h0M1254.5 151.5h0M1254.5 161.5h0M1254.5 154.5h0M1254.5 141.5h0M1254.5 171.5h0M1254.5 157.5h0M1254.5 163.5h0M1255.5 153.5h0M1255.5 149.5h0M1255.5 156.5h0M1255.5 154.5h0M1255.5 170.5h0M1255.5 144.5h0M1255.5 152.5h0M1256.5 156.5h0M1256.5 151.5h0M1256.5 158.5h0M1256.5 165.5h0M1256.5 160.5h0M1256.5 160.5h0M1256.5 144.5h0M1257.5 135.5h0M1257.5 161.5h0M1257.5 160.5h0M1257.5 153.5h0M1257.5 139.5h0M1257.5 149.5h0M1257.5 144.5h0M1258.5 149.5h0M1258.5 158.5h0M1258.5 160.5h0M1258.5 173.5h0M1258.5 153.5h0M1258.5 172.5h0M1258.5 146.5h0M1259.5 150.5h0M1259.5 149.5h0M1259.5 167.5h0M1259.5 149.5h0M1259.5 145.5h0M1259.5 167.5h0M1259.5 159.5h0M1260.5 168.5h0M1260.5 151.5h0M1260.5 157.5h0M1260.5 139.5h0M1260.5 153.5h0M1260.5 163.5h0M1260.5 173.5h0M1261.5 158.5h0M1261.5 158.5h0M1261.5 156.5h0M1261.5 167.5h0M1261.5 147.5h0M1261.5 159.5h0M1261.5 163.5h0M1262.5 174.5h0M1262.5 150.5h0M1262.5 150.5h0M1262.5 158.5h0M1262.5 167.5h0M1262.5 170.5h0M1263.5 144.5h0M1263.5 167.5h0M1263.5 160.5h0M1263.5 151.5h0M1263.5 167.5h0M1263.5 153.5h0M1263.5 153.5h0M1264.5 156.5h0M1264.5 154.5h0M1264.5 162.5h0M1264.5 156.5h0M1264.5 142.5h0M1264.5 161.5h0M1264.5 167.5h0M1265.5 157.5h0M1265.5 151.5h0M1265.5 164.5h0M1265.5 168.5h0M1265.5 161.5h0M1265.5 147.5h0M1265.5 162.5h0M1266.5 147.5h0M1266.5 148.5h0M1266.5 158.5h0M1266.5 147.5h0M1266.5 171.5h0M1266.5 157.5h0M1266.5 174.5h0M1267.5 169.5h0M1267.5 157.5h0M1267.5 146.5h0M1267.5 140.5h0M1267.5 151.5h0M1267.5 176.5h0M1267.5 162.5h0M1268.5 155.5h0M1268.5 141.5h0M1268.5 155.5h0M1268.5 164.5h0M1268.5 173.5h0M1268.5 149.5h0M1268.5 177.5h0M1269.5 153.5h0M1269.5 141.5h0M1269.5 162.5h0M1269.5 138.5h0M1269.5 156.5h0M1269.5 148.5h0M1269.5 151.5h0M1270.5 143.5h0M1270.5 152.5h0M1270.5 162.5h0M1270.5 145.5h0M1270.5 138.5h0M1270.5 160.5h0M1270.5 172.5h0M1271.5 151.5h0M1271.5 164.5h0M1271.5 165.5h0M1271.5 147.5h0M1271.5 156.5h0M1271.5 157.5h0M1271.5 161.5h0M1272.5 159.5h0M1272.5 145.5h0M1272.5 148.5h0M1272.5 163.5h0M1272.5 162.5h0M1272.5 141.5h0M1272.5 160.5h0M1273.5 151.5h0M1273.5 160.5h0M1273.5 153.5h0M1273.5 138.5h0M1273.5 161.5h0M1273.5 172.5h0M1273.5 143.5h0M1274.5 142.5h0M1274.5 156.5h0M1274.5 158.5h0M1274.5 165.5h0M1274.5 143.5h0M1274.5 155.5h0M1274.5 156.5h0M1275.5 167.5h0M1275.5 162.5h0M1275.5 158.5h0M1275.5 153.5h0M1275.5 166.5h0M1275.5 166.5h0M1275.5 136.5h0M1276.5 149.5h0M1276.5 147.5h0M1276.5 150.5h0M1276.5 144.5h0M1276.5 141.5h0M1276.5 151.5h0M1276.5 156.5h0M1277.5 150.5h0M1277.5 161.5h0M1277.5 154.5h0M1277.5 153.5h0M1277.5 167.5h0M1277.5 152.5h0M1277.5 147.5h0M1278.5 164.5h0M1278.5 161.5h0M1278.5 154.5h0M1278.5 163.5h0M1278.5 162.5h0M1278.5 164.5h0M1279.5 157.5h0M1279.5 149.5h0M1279.5 140.5h0M1279.5 160.5h0M1279.5 161.5h0M1279.5 151.5h0M1279.5 166.5h0M1280.5 166.5h0M1280.5 140.5h0M1280.5 150.5h0M1280.5 148.5h0M1280.5 149.5h0M1280.5 156.5h0M1280.5 143.5h0M1281.5 160.5h0M1281.5 152.5h0M1281.5 162.5h0M1281.5 157.5h0M1281.5 156.5h0M1281.5 151.5h0M1281.5 166.5h0M1282.5 165.5h0M1282.5 169.5h0M1282.5 146.5h0M1282.5 170.5h0M1282.5 158.5h0M1282.5 158.5h0M1282.5 151.5h0M1283.5 163.5h0M1283.5 140.5h0M1283.5 153.5h0M1283.5 163.5h0M1283.5 152.5h0M1283.5 144.5h0M1283.5 156.5h0M1284.5 168.5h0M1284.5 153.5h0M1284.5 145.5h0M1284.5 160.5h0M1284.5 151.5h0M1284.5 149.5h0M1284.5 160.5h0M1285.5 158.5h0M1285.5 155.5h0M1285.5 152.5h0M1285.5 162.5h0M1285.5 144.5h0M1285.5 147.5h0M1285.5 151.5h0M1286.5 161.5h0M1286.5 153.5h0M1286.5 159.5h0M1286.5 158.5h0M1286.5 167.5h0M1286.5 170.5h0M1286.5 150.5h0M1287.5 142.5h0M1287.5 161.5h0M1287.5 145.5h0M1287.5 169.5h0M1287.5 150.5h0M1287.5 163.5h0M1287.5 153.5h0M1288.5 152.5h0M1288.5 148.5h0M1288.5 156.5h0M1288.5 162.5h0M1288.5 152.5h0M1288.5 143.5h0M1288.5 166.5h0M1289.5 174.5h0M1289.5 168.5h0M1289.5 147.5h0M1289.5 146.5h0M1289.5 163.5h0M1289.5 160.5h0M1289.5 166.5h0M1290.5 160.5h0M1290.5 168.5h0M1290.5 153.5h0M1290.5 150.5h0M1290.5 133.5h0M1290.5 149.5h0M1290.5 154.5h0M1291.5 143.5h0M1291.5 156.5h0M1291.5 151.5h0M1291.5 157.5h0M1291.5 147.5h0M1291.5 155.5h0M1291.5 156.5h0M1292.5 162.5h0M1292.5 174.5h0M1292.5 145.5h0M1292.5 153.5h0M1292.5 159.5h0M1292.5 160.5h0M1292.5 154.5h0M1293.5 151.5h0M1293.5 147.5h0M1293.5 143.5h0M1293.5 161.5h0M1293.5 132.5h0M1293.5 167.5h0M1293.5 144.5h0M1294.5 154.5h0M1294.5 164.5h0M1294.5 135.5h0M1294.5 151.5h0M1294.5 165.5h0M1294.5 140.5h0M1294.5 161.5h0M1295.5 163.5h0M1295.5 151.5h0M1295.5 142.5h0M1295.5 142.5h0M1295.5 158.5h0M1295.5 153.5h0M1296.5 160.5h0M1296.5 172.5h0M1296.5 168.5h0M1296.5 148.5h0M1296.5 159.5h0M1296.5 151.5h0M1296.5 144.5h0M1297.5 170.5h0M1297.5 160.5h0M1297.5 161.5h0M1297.5 156.5h0M1297.5 154.5h0M1297.5 150.5h0M1297.5 151.5h0M1298.5 152.5h0M1298.5 164.5h0M1298.5 156.5h0M1298.5 147.5h0M1298.5 154.5h0M1298.5 147.5h0M1298.5 157.5h0M1299.5 167.5h0M1299.5 162.5h0M1299.5 159.5h0M1299.5 163.5h0M1299.5 155.5h0M1299.5 160.5h0M1299.5 147.5h0M1300.5 172.5h0M1300.5 167.5h0M1300.5 171.5h0M1300.5 155.5h0M1300.5 158.5h0M1300.5 162.5h0M1300.5 170.5h0M1301.5 147.5h0M1301.5 150.5h0M1301.5 135.5h0M1301.5 167.5h0M1301.5 148.5h0M1301.5 172.5h0M1301.5 141.5h0M1302.5 150.5h0M1302.5 171.5h0M1302.5 164.5h0M1302.5 159.5h0M1302.5 131.5h0M1302.5 163.5h0M1302.5 165.5h0" stroke="#000" fill="none" stroke-linecap="round" stroke-width="3.6"/>
<path d="M162 321.28V35.5M270 321.28V35.5M407 321.28V35.5M1124 321.28V35.5M1303 321.28V35.5" fill="none" stroke="#800080" stroke-width="2" stroke-dasharray="2.08 3.446"/>
<path d="M105.5 209H1360.3" stroke="#008000" stroke-width="2" stroke-linecap="square" fill="none"/>
</g>
<rect x="105.5" y="35.5" width="1380.0" height="286.0" fill="none" stroke="#000" stroke-width="1.11"/>
<path d="M162.5 321.5v4.9M443.5 321.5v4.9M725.5 321.5v4.9M1006.5 321.5v4.9M1287.5 321.5v4.9" stroke="#000" stroke-width="1.11" fill="none"/><text x="163" y="341.6" text-anchor="middle">0</text><text x="444.2" y="341.6" text-anchor="middle">2000</text><text x="725.4" y="341.6" text-anchor="middle">4000</text><text x="1006.7" y="341.6" text-anchor="middle">6000</text><text x="1287.9" y="341.6" text-anchor="middle">8000</text>
<path d="M105.5 280.5h-4.9M105.5 221.5h-4.9M105.5 163.5h-4.9M105.5 104.5h-4.9M105.5 46.5h-4.9" stroke="#000" stroke-width="1.11" fill="none"/><text x="95.8" y="286" text-anchor="end">6.30</text><text x="95.8" y="227" text-anchor="end">6.32</text><text x="95.8" y="169" text-anchor="end">6.34</text><text x="95.8" y="110" text-anchor="end">6.36</text><text x="95.8" y="52" text-anchor="end">6.38</text>
<text x="216.4" y="312.1" text-anchor="middle">46752</text><text x="338.7" y="292.1" text-anchor="middle">46747</text><text x="765.8" y="272.1" text-anchor="middle">46745</text><text x="1213.7" y="312.1" text-anchor="middle">46744</text>
<text x="794.6" y="26.6" text-anchor="middle" style="font-size:16.67px">AGASC ID 908728712.0</text>
<rect x="1361.5" y="42.5" width="117" height="27" rx="2.8" fill="#fff" fill-opacity="0.8" stroke="#ccc" stroke-width="1.11"/>
<path d="M1367.5 54H1395" stroke="#008000" stroke-width="2" stroke-linecap="square"/>
<text x="1407.3" y="58.6">mag<tspan style="font-size:9.72px" font-style="italic" dy="2.4">AGASC</tspan></text>
<rect x="1348.5" y="268.6" width="130" height="45.6" rx="2.8" fill="#fff" fill-opacity="0.8" stroke="#ccc" stroke-width="1.11"/><circle cx="1367.5" cy="281.4" r="2" fill="#ffa500"/><circle cx="1367.5" cy="302.4" r="2" fill="#000"/><text x="1393" y="284.8">Highlighted</text><text x="1393" y="306">OK</text>
<g clip-path="url(#c1)">
<path d="M182.5 572.5h0M209.5 456.5h0M235.5 571.5h0M262.5 456.5h0M271.5 445.5h0M457.5 622.5h0M461.5 597.5h0M463.5 612.5h0M496.5 597.5h0M593.5 608.5h0M609.5 657.5h0M767.5 455.5h0M866.5 460.5h0M868.5 629.5h0M903.5 458.5h0M936.5 627.5h0M973.5 459.5h0M975.5 454.5h0M1024.5 457.5h0M1032.5 637.5h0M1138.5 457.5h0M1158.5 589.5h0M1202.5 453.5h0M1229.5 590.5h0M1252.5 595.5h0M1253.5 606.5h0" stroke="#ffa500" fill="none" stroke-linecap="round" stroke-width="3.6"/>
<path d="M913.5 666.4l-2.7 -5.7h5.4z" fill="#ffa500" stroke="#ffa500" stroke-width="0.8"/>
<path d="M162.5 496.5h0M162.5 532.5h0M163.5 504.5h0M163.5 499.5h0M163.5 523.5h0M163.5 517.5h0M163.5 515.5h0M163.5 512.5h0M163.5 518.5h0M164.5 516.5h0M164.5 554.5h0M164.5 553.5h0M164.5 511.5h0M164.5 525.5h0M164.5 514.5h0M164.5 546.5h0M165.5 526.5h0M165.5 539.5h0M165.5 548.5h0M165.5 516.5h0M165.5 498.5h0M165.5 496.5h0M165.5 501.5h0M166.5 532.5h0M166.5 494.5h0M166.5 475.5h0M166.5 535.5h0M166.5 521.5h0M166.5 509.5h0M166.5 499.5h0M167.5 516.5h0M167.5 536.5h0M167.5 541.5h0M167.5 535.5h0M167.5 508.5h0M167.5 533.5h0M167.5 531.5h0M168.5 498.5h0M168.5 483.5h0M168.5 535.5h0M168.5 468.5h0M168.5 532.5h0M168.5 508.5h0M168.5 534.5h0M169.5 531.5h0M169.5 485.5h0M169.5 500.5h0M169.5 484.5h0M169.5 510.5h0M169.5 525.5h0M169.5 531.5h0M170.5 524.5h0M170.5 481.5h0M170.5 512.5h0M170.5 504.5h0M170.5 496.5h0M170.5 484.5h0M170.5 501.5h0M171.5 543.5h0M171.5 509.5h0M171.5 503.5h0M171.5 520.5h0M171.5 550.5h0M171.5 513.5h0M171.5 506.5h0M172.5 497.5h0M172.5 510.5h0M172.5 534.5h0M172.5 488.5h0M172.5 497.5h0M172.5 521.5h0M172.5 502.5h0M173.5 503.5h0M173.5 532.5h0M173.5 493.5h0M173.5 497.5h0M173.5 506.5h0M173.5 519.5h0M173.5 530.5h0M174.5 536.5h0M174.5 505.5h0M174.5 507.5h0M174.5 523.5h0M174.5 498.5h0M174.5 494.5h0M175.5 525.5h0M175.5 508.5h0M175.5 498.5h0M175.5 545.5h0M175.5 504.5h0M175.5 510.5h0M175.5 539.5h0M176.5 538.5h0M176.5 522.5h0M176.5 497.5h0M176.5 515.5h0M176.5 488.5h0M176.5 522.5h0M176.5 497.5h0M177.5 489.5h0M177.5 501.5h0M177.5 519.5h0M177.5 475.5h0M177.5 508.5h0M177.5 541.5h0M177.5 518.5h0M178.5 506.5h0M178.5 523.5h0M178.5 497.5h0M178.5 524.5h0M178.5 524.5h0M178.5 543.5h0M178.5 496.5h0M179.5 490.5h0M179.5 509.5h0M179.5 504.5h0M179.5 543.5h0M179.5 519.5h0M179.5 508.5h0M179.5 523.5h0M180.5 522.5h0M180.5 504.5h0M180.5 501.5h0M180.5 498.5h0M180.5 536.5h0M180.5 547.5h0M180.5 522.5h0M181.5 477.5h0M181.5 535.5h0M181.5 480.5h0M181.5 526.5h0M181.5 529.5h0M181.5 512.5h0M181.5 509.5h0M182.5 534.5h0M182.5 509.5h0M182.5 500.5h0M182.5 471.5h0M182.5 501.5h0M182.5 510.5h0M182.5 505.5h0M183.5 523.5h0M183.5 512.5h0M183.5 472.5h0M183.5 525.5h0M183.5 511.5h0M183.5 510.5h0M183.5 479.5h0M184.5 504.5h0M184.5 521.5h0M184.5 501.5h0M184.5 488.5h0M184.5 514.5h0M184.5 502.5h0M184.5 507.5h0M185.5 504.5h0M185.5 495.5h0M185.5 521.5h0M185.5 501.5h0M185.5 547.5h0M185.5 506.5h0M185.5 538.5h0M186.5 505.5h0M186.5 511.5h0M186.5 495.5h0M186.5 504.5h0M186.5 463.5h0M186.5 514.5h0M186.5 514.5h0M187.5 514.5h0M187.5 543.5h0M187.5 467.5h0M187.5 513.5h0M187.5 525.5h0M187.5 527.5h0M187.5 501.5h0M188.5 523.5h0M188.5 509.5h0M188.5 511.5h0M188.5 504.5h0M188.5 509.5h0M188.5 497.5h0M188.5 494.5h0M189.5 527.5h0M189.5 483.5h0M189.5 506.5h0M189.5 498.5h0M189.5 512.5h0M189.5 528.5h0M189.5 492.5h0M190.5 522.5h0M190.5 498.5h0M190.5 513.5h0M190.5 509.5h0M190.5 482.5h0M190.5 532.5h0M190.5 527.5h0M191.5 510.5h0M191.5 508.5h0M191.5 512.5h0M191.5 472.5h0M191.5 506.5h0M191.5 490.5h0M192.5 487.5h0M192.5 529.5h0M192.5 488.5h0M192.5 542.5h0M192.5 514.5h0M192.5 503.5h0M192.5 514.5h0M193.5 491.5h0M193.5 523.5h0M193.5 530.5h0M193.5 514.5h0M193.5 490.5h0M193.5 546.5h0M193.5 510.5h0M194.5 538.5h0M194.5 527.5h0M194.5 509.5h0M194.5 498.5h0M194.5 500.5h0M194.5 509.5h0M194.5 512.5h0M195.5 513.5h0M195.5 518.5h0M195.5 506.5h0M195.5 506.5h0M195.5 513.5h0M195.5 517.5h0M195.5 528.5h0M196.5 519.5h0M196.5 515.5h0M196.5 494.5h0M196.5 528.5h0M196.5 512.5h0M196.5 508.5h0M196.5 530.5h0M197.5 524.5h0M197.5 526.5h0M197.5 530.5h0M197.5 497.5h0M197.5 522.5h0M197.5 510.5h0M197.5 545.5h0M198.5 538.5h0M198.5 484.5h0M198.5 525.5h0M198.5 518.5h0M198.5 542.5h0M198.5 534.5h0M198.5 513.5h0M199.5 520.5h0M199.5 491.5h0M199.5 508.5h0M199.5 528.5h0M199.5 505.5h0M199.5 513.5h0M199.5 506.5h0M200.5 469.5h0M200.5 522.5h0M200.5 532.5h0M200.5 509.5h0M200.5 539.5h0M200.5 521.5h0M200.5 514.5h0M201.5 517.5h0M201.5 506.5h0M201.5 519.5h0M201.5 513.5h0M201.5 537.5h0M201.5 531.5h0M201.5 526.5h0M202.5 527.5h0M202.5 547.5h0M202.5 535.5h0M202.5 550.5h0M202.5 520.5h0M202.5 533.5h0M202.5 537.5h0M203.5 493.5h0M203.5 486.5h0M203.5 507.5h0M203.5 497.5h0M203.5 519.5h0M203.5 472.5h0M203.5 526.5h0M204.5 519.5h0M204.5 523.5h0M204.5 526.5h0M204.5 512.5h0M204.5 496.5h0M204.5 491.5h0M204.5 536.5h0M205.5 520.5h0M205.5 489.5h0M205.5 518.5h0M205.5 540.5h0M205.5 510.5h0M205.5 475.5h0M205.5 498.5h0M206.5 509.5h0M206.5 527.5h0M206.5 520.5h0M206.5 504.5h0M206.5 538.5h0M206.5 497.5h0M206.5 497.5h0M207.5 498.5h0M207.5 544.5h0M207.5 502.5h0M207.5 504.5h0M207.5 496.5h0M207.5 509.5h0M208.5 515.5h0M208.5 490.5h0M208.5 507.5h0M208.5 497.5h0M208.5 480.5h0M208.5 538.5h0M208.5 491.5h0M209.5 522.5h0M209.5 509.5h0M209.5 535.5h0M209.5 515.5h0M209.5 533.5h0M209.5 532.5h0M209.5 527.5h0M210.5 499.5h0M210.5 514.5h0M210.5 526.5h0M210.5 536.5h0M210.5 511.5h0M210.5 543.5h0M210.5 477.5h0M211.5 503.5h0M211.5 516.5h0M211.5 535.5h0M211.5 497.5h0M211.5 527.5h0M211.5 541.5h0M211.5 529.5h0M212.5 530.5h0M212.5 497.5h0M212.5 519.5h0M212.5 525.5h0M212.5 510.5h0M212.5 517.5h0M212.5 499.5h0M213.5 544.5h0M213.5 455.5h0M213.5 514.5h0M213.5 484.5h0M213.5 525.5h0M213.5 498.5h0M213.5 540.5h0M214.5 466.5h0M214.5 516.5h0M214.5 508.5h0M214.5 539.5h0M214.5 518.5h0M214.5 517.5h0M214.5 540.5h0M215.5 522.5h0M215.5 546.5h0M215.5 518.5h0M215.5 470.5h0M215.5 523.5h0M215.5 518.5h0M215.5 496.5h0M216.5 512.5h0M216.5 510.5h0M216.5 536.5h0M216.5 544.5h0M216.5 554.5h0M216.5 491.5h0M216.5 504.5h0M217.5 532.5h0M217.5 527.5h0M217.5 507.5h0M217.5 503.5h0M217.5 539.5h0M217.5 488.5h0M217.5 522.5h0M218.5 484.5h0M218.5 508.5h0M218.5 529.5h0M218.5 481.5h0M218.5 495.5h0M218.5 510.5h0M218.5 504.5h0M219.5 486.5h0M219.5 513.5h0M219.5 506.5h0M219.5 514.5h0M219.5 505.5h0M219.5 506.5h0M219.5 512.5h0M220.5 488.5h0M220.5 521.5h0M220.5 505.5h0M220.5 512.5h0M220.5 531.5h0M220.5 518.5h0M220.5 511.5h0M221.5 528.5h0M221.5 494.5h0M221.5 488.5h0M221.5 523.5h0M221.5 546.5h0M221.5 508.5h0M221.5 543.5h0M222.5 529.5h0M222.5 529.5h0M222.5 527.5h0M222.5 537.5h0M222.5 504.5h0M222.5 524.5h0M222.5 468.5h0M223.5 513.5h0M223.5 482.5h0M223.5 535.5h0M223.5 507.5h0M223.5 518.5h0M223.5 515.5h0M224.5 513.5h0M224.5 530.5h0M224.5 512.5h0M224.5 540.5h0M224.5 527.5h0M224.5 540.5h0M224.5 515.5h0M225.5 501.5h0M225.5 492.5h0M225.5 531.5h0M225.5 486.5h0M225.5 537.5h0M225.5 520.5h0M225.5 562.5h0M226.5 511.5h0M226.5 512.5h0M226.5 512.5h0M226.5 523.5h0M226.5 497.5h0M226.5 509.5h0M226.5 541.5h0M227.5 489.5h0M227.5 517.5h0M227.5 544.5h0M227.5 539.5h0M227.5 508.5h0M227.5 517.5h0M227.5 522.5h0M228.5 498.5h0M228.5 511.5h0M228.5 488.5h0M228.5 506.5h0M228.5 519.5h0M228.5 525.5h0M228.5 501.5h0M229.5 523.5h0M229.5 493.5h0M229.5 536.5h0M229.5 502.5h0M229.5 524.5h0M229.5 515.5h0M229.5 480.5h0M230.5 545.5h0M230.5 517.5h0M230.5 493.5h0M230.5 495.5h0M230.5 518.5h0M230.5 510.5h0M230.5 524.5h0M231.5 497.5h0M231.5 515.5h0M231.5 547.5h0M231.5 541.5h0M231.5 530.5h0M231.5 527.5h0M231.5 539.5h0M232.5 493.5h0M232.5 500.5h0M232.5 489.5h0M232.5 515.5h0M232.5 495.5h0M232.5 523.5h0M232.5 493.5h0M233.5 512.5h0M233.5 531.5h0M233.5 513.5h0M233.5 538.5h0M233.5 509.5h0M233.5 507.5h0M233.5 490.5h0M234.5 513.5h0M234.5 512.5h0M234.5 534.5h0M234.5 530.5h0M234.5 535.5h0M234.5 489.5h0M234.5 546.5h0M235.5 537.5h0M235.5 526.5h0M235.5 527.5h0M235.5 522.5h0M235.5 517.5h0M235.5 465.5h0M235.5 478.5h0M236.5 509.5h0M236.5 511.5h0M236.5 509.5h0M236.5 558.5h0M236.5 567.5h0M236.5 506.5h0M236.5 537.5h0M237.5 556.5h0M237.5 528.5h0M237.5 549.5h0M237.5 518.5h0M237.5 553.5h0M237.5 516.5h0M237.5 492.5h0M238.5 514.5h0M238.5 528.5h0M238.5 510.5h0M238.5 495.5h0M238.5 546.5h0M238.5 491.5h0M238.5 522.5h0M239.5 535.5h0M239.5 477.5h0M239.5 543.5h0M239.5 532.5h0M239.5 533.5h0M239.5 483.5h0M240.5 500.5h0M240.5 558.5h0M240.5 566.5h0M240.5 541.5h0M240.5 496.5h0M240.5 518.5h0M240.5 507.5h0M241.5 554.5h0M241.5 517.5h0M241.5 530.5h0M241.5 531.5h0M241.5 525.5h0M241.5 540.5h0M241.5 532.5h0M242.5 544.5h0M242.5 524.5h0M242.5 515.5h0M242.5 533.5h0M242.5 460.5h0M242.5 524.5h0M242.5 457.5h0M243.5 515.5h0M243.5 503.5h0M243.5 510.5h0M243.5 517.5h0M243.5 519.5h0M243.5 498.5h0M243.5 534.5h0M244.5 497.5h0M244.5 511.5h0M244.5 512.5h0M244.5 525.5h0M244.5 478.5h0M244.5 548.5h0M244.5 532.5h0M245.5 523.5h0M245.5 535.5h0M245.5 522.5h0M245.5 508.5h0M245.5 492.5h0M245.5 506.5h0M245.5 530.5h0M246.5 534.5h0M246.5 470.5h0M246.5 534.5h0M246.5 528.5h0M246.5 513.5h0M246.5 547.5h0M246.5 516.5h0M247.5 533.5h0M247.5 500.5h0M247.5 516.5h0M247.5 528.5h0M247.5 549.5h0M247.5 496.5h0M247.5 533.5h0M248.5 517.5h0M248.5 540.5h0M248.5 551.5h0M248.5 553.5h0M248.5 495.5h0M248.5 539.5h0M248.5 522.5h0M249.5 528.5h0M249.5 519.5h0M249.5 491.5h0M249.5 485.5h0M249.5 508.5h0M249.5 487.5h0M249.5 524.5h0M250.5 500.5h0M250.5 492.5h0M250.5 498.5h0M250.5 530.5h0M250.5 546.5h0M250.5 517.5h0M250.5 499.5h0M251.5 519.5h0M251.5 538.5h0M251.5 487.5h0M251.5 528.5h0M251.5 556.5h0M251.5 476.5h0M251.5 534.5h0M252.5 475.5h0M252.5 529.5h0M252.5 501.5h0M252.5 485.5h0M252.5 516.5h0M252.5 483.5h0M252.5 504.5h0M253.5 523.5h0M253.5 515.5h0M253.5 483.5h0M253.5 502.5h0M253.5 502.5h0M253.5 545.5h0M253.5 534.5h0M254.5 515.5h0M254.5 506.5h0M254.5 488.5h0M254.5 512.5h0M254.5 506.5h0M254.5 495.5h0M254.5 544.5h0M255.5 495.5h0M255.5 503.5h0M255.5 473.5h0M255.5 503.5h0M255.5 508.5h0M255.5 521.5h0M255.5 495.5h0M256.5 530.5h0M256.5 525.5h0M256.5 504.5h0M256.5 492.5h0M256.5 523.5h0M256.5 521.5h0M257.5 545.5h0M257.5 499.5h0M257.5 480.5h0M257.5 504.5h0M257.5 502.5h0M257.5 523.5h0M257.5 534.5h0M258.5 520.5h0M258.5 506.5h0M258.5 509.5h0M258.5 498.5h0M258.5 527.5h0M258.5 558.5h0M258.5 530.5h0M259.5 490.5h0M259.5 550.5h0M259.5 501.5h0M259.5 534.5h0M259.5 500.5h0M259.5 510.5h0M259.5 495.5h0M260.5 498.5h0M260.5 533.5h0M260.5 502.5h0M260.5 492.5h0M260.5 547.5h0M260.5 508.5h0M260.5 524.5h0M261.5 514.5h0M261.5 527.5h0M261.5 512.5h0M261.5 512.5h0M261.5 503.5h0M261.5 508.5h0M261.5 503.5h0M262.5 522.5h0M262.5 509.5h0M262.5 530.5h0M262.5 518.5h0M262.5 504.5h0M262.5 521.5h0M262.5 485.5h0M263.5 532.5h0M263.5 485.5h0M263.5 527.5h0M263.5 511.5h0M263.5 484.5h0M263.5 517.5h0M263.5 518.5h0M264.5 548.5h0M264.5 484.5h0M264.5 515.5h0M264.5 499.5h0M264.5 531.5h0M264.5 493.5h0M264.5 521.5h0M265.5 524.5h0M265.5 515.5h0M265.5 490.5h0M265.5 501.5h0M265.5 493.5h0M265.5 540.5h0M265.5 545.5h0M266.5 467.5h0M266.5 511.5h0M266.5 545.5h0M266.5 494.5h0M266.5 483.5h0M266.5 516.5h0M266.5 514.5h0M267.5 485.5h0M267.5 533.5h0M267.5 525.5h0M267.5 552.5h0M267.5 535.5h0M267.5 504.5h0M267.5 523.5h0M268.5 475.5h0M268.5 517.5h0M268.5 499.5h0M268.5 500.5h0M268.5 521.5h0M268.5 467.5h0M268.5 516.5h0M269.5 511.5h0M269.5 523.5h0M269.5 526.5h0M269.5 509.5h0M269.5 512.5h0M269.5 552.5h0M269.5 497.5h0M270.5 489.5h0M270.5 513.5h0M270.5 526.5h0M270.5 472.5h0M270.5 524.5h0M270.5 496.5h0M270.5 497.5h0M271.5 518.5h0M271.5 492.5h0M271.5 528.5h0M271.5 505.5h0M271.5 499.5h0M271.5 500.5h0M271.5 493.5h0M272.5 476.5h0M272.5 478.5h0M272.5 508.5h0M272.5 541.5h0M272.5 480.5h0M272.5 501.5h0M273.5 542.5h0M273.5 504.5h0M273.5 519.5h0M273.5 502.5h0M273.5 509.5h0M273.5 495.5h0M273.5 492.5h0M274.5 489.5h0M274.5 515.5h0M274.5 448.5h0M274.5 491.5h0M274.5 509.5h0M274.5 510.5h0M274.5 498.5h0M275.5 519.5h0M275.5 490.5h0M275.5 496.5h0M275.5 516.5h0M275.5 514.5h0M275.5 489.5h0M275.5 535.5h0M276.5 532.5h0M276.5 505.5h0M276.5 457.5h0M276.5 513.5h0M276.5 498.5h0M276.5 492.5h0M276.5 525.5h0M277.5 475.5h0M277.5 494.5h0M277.5 516.5h0M277.5 500.5h0M277.5 522.5h0M277.5 530.5h0M277.5 476.5h0M278.5 501.5h0M278.5 481.5h0M278.5 449.5h0M278.5 500.5h0M278.5 488.5h0M278.5 517.5h0M278.5 539.5h0M279.5 502.5h0M279.5 515.5h0M279.5 499.5h0M279.5 546.5h0M279.5 536.5h0M279.5 498.5h0M279.5 521.5h0M280.5 510.5h0M280.5 514.5h0M280.5 524.5h0M280.5 543.5h0M280.5 514.5h0M280.5 503.5h0M280.5 502.5h0M281.5 529.5h0M281.5 460.5h0M281.5 539.5h0M281.5 534.5h0M281.5 476.5h0M281.5 516.5h0M281.5 508.5h0M282.5 479.5h0M282.5 522.5h0M282.5 481.5h0M282.5 498.5h0M282.5 498.5h0M282.5 516.5h0M282.5 491.5h0M283.5 503.5h0M283.5 550.5h0M283.5 517.5h0M283.5 548.5h0M283.5 515.5h0M283.5 527.5h0M283.5 513.5h0M284.5 536.5h0M284.5 518.5h0M284.5 496.5h0M284.5 526.5h0M284.5 520.5h0M284.5 476.5h0M284.5 491.5h0M285.5 531.5h0M285.5 528.5h0M285.5 525.5h0M285.5 519.5h0M285.5 540.5h0M285.5 521.5h0M285.5 531.5h0M286.5 496.5h0M286.5 477.5h0M286.5 519.5h0M286.5 510.5h0M286.5 505.5h0M286.5 508.5h0M286.5 498.5h0M287.5 491.5h0M287.5 504.5h0M287.5 526.5h0M287.5 482.5h0M287.5 497.5h0M287.5 505.5h0M287.5 496.5h0M288.5 476.5h0M288.5 515.5h0M288.5 541.5h0M288.5 558.5h0M288.5 505.5h0M288.5 512.5h0M289.5 517.5h0M289.5 496.5h0M289.5 470.5h0M289.5 492.5h0M289.5 541.5h0M289.5 464.5h0M289.5 525.5h0M290.5 463.5h0M290.5 500.5h0M290.5 515.5h0M290.5 539.5h0M290.5 490.5h0M290.5 513.5h0M290.5 511.5h0M291.5 479.5h0M291.5 493.5h0M291.5 502.5h0M291.5 492.5h0M291.5 531.5h0M291.5 495.5h0M291.5 510.5h0M292.5 493.5h0M292.5 505.5h0M292.5 505.5h0M292.5 490.5h0M292.5 472.5h0M292.5 522.5h0M292.5 498.5h0M293.5 514.5h0M293.5 533.5h0M293.5 513.5h0M293.5 494.5h0M293.5 506.5h0M293.5 483.5h0M293.5 481.5h0M294.5 480.5h0M294.5 488.5h0M294.5 469.5h0M294.5 469.5h0M294.5 511.5h0M294.5 505.5h0M294.5 461.5h0M295.5 515.5h0M295.5 496.5h0M295.5 507.5h0M295.5 512.5h0M295.5 487.5h0M295.5 484.5h0M295.5 509.5h0M296.5 492.5h0M296.5 501.5h0M296.5 492.5h0M296.5 532.5h0M296.5 507.5h0M296.5 517.5h0M296.5 507.5h0M297.5 513.5h0M297.5 498.5h0M297.5 472.5h0M297.5 478.5h0M297.5 489.5h0M297.5 510.5h0M297.5 491.5h0M298.5 489.5h0M298.5 490.5h0M298.5 484.5h0M298.5 466.5h0M298.5 502.5h0M298.5 504.5h0M298.5 497.5h0M299.5 499.5h0M299.5 481.5h0M299.5 538.5h0M299.5 501.5h0M299.5 515.5h0M299.5 519.5h0M299.5 506.5h0M300.5 506.5h0M300.5 484.5h0M300.5 490.5h0M300.5 483.5h0M300.5 486.5h0M300.5 492.5h0M300.5 509.5h0M301.5 489.5h0M301.5 497.5h0M301.5 523.5h0M301.5 517.5h0M301.5 468.5h0M301.5 484.5h0M301.5 482.5h0M302.5 491.5h0M302.5 481.5h0M302.5 512.5h0M302.5 535.5h0M302.5 534.5h0M302.5 516.5h0M302.5 491.5h0M303.5 514.5h0M303.5 506.5h0M303.5 486.5h0M303.5 500.5h0M303.5 515.5h0M303.5 473.5h0M303.5 492.5h0M304.5 480.5h0M304.5 521.5h0M304.5 506.5h0M304.5 532.5h0M304.5 505.5h0M304.5 481.5h0M305.5 522.5h0M305.5 504.5h0M305.5 531.5h0M305.5 457.5h0M305.5 520.5h0M305.5 503.5h0M305.5 514.5h0M306.5 539.5h0M306.5 509.5h0M306.5 519.5h0M306.5 517.5h0M306.5 513.5h0M306.5 478.5h0M306.5 497.5h0M307.5 492.5h0M307.5 503.5h0M307.5 508.5h0M307.5 488.5h0M307.5 479.5h0M307.5 544.5h0M307.5 519.5h0M308.5 524.5h0M308.5 524.5h0M308.5 494.5h0M308.5 522.5h0M308.5 543.5h0M308.5 477.5h0M308.5 493.5h0M309.5 537.5h0M309.5 511.5h0M309.5 497.5h0M309.5 546.5h0M309.5 509.5h0M309.5 523.5h0M309.5 502.5h0M310.5 498.5h0M310.5 523.5h0M310.5 473.5h0M310.5 538.5h0M310.5 537.5h0M310.5 485.5h0M310.5 521.5h0M311.5 520.5h0M311.5 501.5h0M311.5 542.5h0M311.5 490.5h0M311.5 465.5h0M311.5 485.5h0M311.5 492.5h0M312.5 528.5h0M312.5 546.5h0M312.5 513.5h0M312.5 486.5h0M312.5 537.5h0M312.5 503.5h0M312.5 525.5h0M313.5 525.5h0M313.5 529.5h0M313.5 504.5h0M313.5 456.5h0M313.5 475.5h0M313.5 501.5h0M313.5 489.5h0M314.5 513.5h0M314.5 514.5h0M314.5 487.5h0M314.5 487.5h0M314.5 471.5h0M314.5 537.5h0M314.5 516.5h0M315.5 506.5h0M315.5 506.5h0M315.5 499.5h0M315.5 495.5h0M315.5 493.5h0M315.5 510.5h0M315.5 536.5h0M316.5 497.5h0M316.5 499.5h0M316.5 483.5h0M316.5 491.5h0M316.5 535.5h0M316.5 527.5h0M316.5 524.5h0M317.5 496.5h0M317.5 532.5h0M317.5 536.5h0M317.5 482.5h0M317.5 493.5h0M317.5 510.5h0M317.5 496.5h0M318.5 459.5h0M318.5 485.5h0M318.5 486.5h0M318.5 517.5h0M318.5 516.5h0M318.5 507.5h0M318.5 484.5h0M319.5 517.5h0M319.5 497.5h0M319.5 513.5h0M319.5 544.5h0M319.5 538.5h0M319.5 518.5h0M319.5 526.5h0M320.5 475.5h0M320.5 501.5h0M320.5 515.5h0M320.5 522.5h0M320.5 498.5h0M320.5 534.5h0M321.5 488.5h0M321.5 521.5h0M321.5 489.5h0M321.5 540.5h0M321.5 544.5h0M321.5 534.5h0M321.5 544.5h0M322.5 470.5h0M322.5 510.5h0M322.5 486.5h0M322.5 514.5h0M322.5 506.5h0M322.5 457.5h0M322.5 505.5h0M323.5 519.5h0M323.5 524.5h0M323.5 495.5h0M323.5 524.5h0M323.5 505.5h0M323.5 501.5h0M323.5 485.5h0M324.5 546.5h0M324.5 458.5h0M324.5 467.5h0M324.5 503.5h0M324.5 541.5h0M324.5 508.5h0M324.5 549.5h0M325.5 507.5h0M325.5 508.5h0M325.5 512.5h0M325.5 523.5h0M325.5 457.5h0M325.5 535.5h0M325.5 482.5h0M326.5 466.5h0M326.5 486.5h0M326.5 473.5h0M326.5 514.5h0M326.5 520.5h0M326.5 532.5h0M326.5 546.5h0M327.5 539.5h0M327.5 483.5h0M327.5 467.5h0M327.5 504.5h0M327.5 510.5h0M327.5 531.5h0M327.5 544.5h0M328.5 493.5h0M328.5 515.5h0M328.5 495.5h0M328.5 538.5h0M328.5 475.5h0M328.5 471.5h0M328.5 527.5h0M329.5 526.5h0M329.5 541.5h0M329.5 497.5h0M329.5 477.5h0M329.5 503.5h0M329.5 505.5h0M329.5 493.5h0M330.5 541.5h0M330.5 514.5h0M330.5 527.5h0M330.5 542.5h0M330.5 550.5h0M330.5 478.5h0M330.5 536.5h0M331.5 489.5h0M331.5 543.5h0M331.5 497.5h0M331.5 506.5h0M331.5 535.5h0M331.5 485.5h0M331.5 498.5h0M332.5 539.5h0M332.5 495.5h0M332.5 489.5h0M332.5 480.5h0M332.5 478.5h0M332.5 508.5h0M332.5 534.5h0M333.5 530.5h0M333.5 506.5h0M333.5 551.5h0M333.5 528.5h0M333.5 493.5h0M333.5 492.5h0M333.5 506.5h0M334.5 523.5h0M334.5 496.5h0M334.5 484.5h0M334.5 520.5h0M334.5 467.5h0M334.5 526.5h0M334.5 486.5h0M335.5 514.5h0M335.5 521.5h0M335.5 510.5h0M335.5 489.5h0M335.5 501.5h0M335.5 536.5h0M335.5 516.5h0M336.5 496.5h0M336.5 538.5h0M336.5 494.5h0M336.5 518.5h0M336.5 526.5h0M336.5 505.5h0M336.5 513.5h0M337.5 508.5h0M337.5 524.5h0M337.5 504.5h0M337.5 509.5h0M337.5 537.5h0M337.5 490.5h0M338.5 504.5h0M338.5 527.5h0M338.5 505.5h0M338.5 542.5h0M338.5 515.5h0M338.5 526.5h0M338.5 493.5h0M339.5 516.5h0M339.5 532.5h0M339.5 491.5h0M339.5 495.5h0M339.5 471.5h0M339.5 516.5h0M339.5 509.5h0M340.5 494.5h0M340.5 514.5h0M340.5 501.5h0M340.5 519.5h0M340.5 517.5h0M340.5 518.5h0M340.5 514.5h0M341.5 523.5h0M341.5 464.5h0M341.5 514.5h0M341.5 485.5h0M341.5 500.5h0M341.5 537.5h0M341.5 537.5h0M342.5 518.5h0M342.5 478.5h0M342.5 501.5h0M342.5 527.5h0M342.5 502.5h0M342.5 491.5h0M342.5 477.5h0M343.5 506.5h0M343.5 491.5h0M343.5 491.5h0M343.5 536.5h0M343.5 487.5h0M343.5 519.5h0M343.5 497.5h0M344.5 472.5h0M344.5 518.5h0M344.5 514.5h0M344.5 493.5h0M344.5 468.5h0M344.5 494.5h0M344.5 508.5h0M345.5 459.5h0M345.5 537.5h0M345.5 535.5h0M345.5 529.5h0M345.5 457.5h0M345.5 509.5h0M345.5 480.5h0M346.5 518.5h0M346.5 483.5h0M346.5 506.5h0M346.5 520.5h0M346.5 516.5h0M346.5 508.5h0M346.5 545.5h0M347.5 528.5h0M347.5 499.5h0M347.5 526.5h0M347.5 521.5h0M347.5 530.5h0M347.5 499.5h0M347.5 519.5h0M348.5 547.5h0M348.5 492.5h0M348.5 474.5h0M348.5 545.5h0M348.5 523.5h0M348.5 489.5h0M348.5 496.5h0M349.5 530.5h0M349.5 486.5h0M349.5 464.5h0M349.5 531.5h0M349.5 503.5h0M349.5 510.5h0M349.5 483.5h0M350.5 531.5h0M350.5 505.5h0M350.5 500.5h0M350.5 508.5h0M350.5 506.5h0M350.5 522.5h0M350.5 508.5h0M351.5 519.5h0M351.5 550.5h0M351.5 521.5h0M351.5 539.5h0M351.5 534.5h0M351.5 512.5h0M351.5 555.5h0M352.5 521.5h0M352.5 518.5h0M352.5 491.5h0M352.5 512.5h0M352.5 532.5h0M352.5 501.5h0M352.5 492.5h0M353.5 514.5h0M353.5 529.5h0M353.5 502.5h0M353.5 490.5h0M353.5 517.5h0M353.5 550.5h0M354.5 532.5h0M354.5 493.5h0M354.5 536.5h0M354.5 548.5h0M354.5 455.5h0M354.5 490.5h0M354.5 472.5h0M355.5 479.5h0M355.5 548.5h0M355.5 503.5h0M355.5 522.5h0M355.5 507.5h0M355.5 505.5h0M355.5 491.5h0M356.5 508.5h0M356.5 521.5h0M356.5 464.5h0M356.5 513.5h0M356.5 479.5h0M356.5 538.5h0M356.5 554.5h0M357.5 493.5h0M357.5 506.5h0M357.5 502.5h0M357.5 484.5h0M357.5 531.5h0M357.5 536.5h0M357.5 541.5h0M358.5 504.5h0M358.5 556.5h0M358.5 490.5h0M358.5 486.5h0M358.5 517.5h0M358.5 461.5h0M358.5 498.5h0M359.5 520.5h0M359.5 517.5h0M359.5 521.5h0M359.5 499.5h0M359.5 506.5h0M359.5 519.5h0M359.5 528.5h0M360.5 523.5h0M360.5 546.5h0M360.5 512.5h0M360.5 493.5h0M360.5 528.5h0M360.5 512.5h0M360.5 517.5h0M361.5 539.5h0M361.5 526.5h0M361.5 523.5h0M361.5 554.5h0M361.5 512.5h0M361.5 524.5h0M361.5 497.5h0M362.5 475.5h0M362.5 530.5h0M362.5 512.5h0M362.5 520.5h0M362.5 512.5h0M362.5 521.5h0M362.5 548.5h0M363.5 524.5h0M363.5 516.5h0M363.5 539.5h0M363.5 520.5h0M363.5 507.5h0M363.5 519.5h0M363.5 532.5h0M364.5 544.5h0M364.5 482.5h0M364.5 500.5h0M364.5 529.5h0M364.5 519.5h0M364.5 498.5h0M364.5 487.5h0M365.5 524.5h0M365.5 479.5h0M365.5 504.5h0M365.5 525.5h0M365.5 517.5h0M365.5 512.5h0M365.5 539.5h0M366.5 542.5h0M366.5 512.5h0M366.5 505.5h0M366.5 498.5h0M366.5 546.5h0M366.5 493.5h0M366.5 543.5h0M367.5 534.5h0M367.5 512.5h0M367.5 539.5h0M367.5 520.5h0M367.5 536.5h0M367.5 477.5h0M367.5 509.5h0M368.5 501.5h0M368.5 538.5h0M368.5 508.5h0M368.5 546.5h0M368.5 530.5h0M368.5 499.5h0M368.5 545.5h0M369.5 515.5h0M369.5 531.5h0M369.5 507.5h0M369.5 530.5h0M369.5 510.5h0M369.5 512.5h0M370.5 525.5h0M370.5 541.5h0M370.5 510.5h0M370.5 497.5h0M370.5 487.5h0M370.5 474.5h0M370.5 499.5h0M371.5 517.5h0M371.5 498.5h0M371.5 523.5h0M371.5 513.5h0M371.5 525.5h0M371.5 504.5h0M371.5 489.5h0M372.5 505.5h0M372.5 545.5h0M372.5 512.5h0M372.5 511.5h0M372.5 547.5h0M372.5 527.5h0M372.5 472.5h0M373.5 513.5h0M373.5 510.5h0M373.5 521.5h0M373.5 500.5h0M373.5 514.5h0M373.5 515.5h0M373.5 513.5h0M374.5 476.5h0M374.5 543.5h0M374.5 551.5h0M374.5 528.5h0M374.5 529.5h0M374.5 514.5h0M374.5 538.5h0M375.5 547.5h0M375.5 522.5h0M375.5 527.5h0M375.5 526.5h0M375.5 485.5h0M375.5 499.5h0M375.5 514.5h0M376.5 516.5h0M376.5 511.5h0M376.5 511.5h0M376.5 485.5h0M376.5 470.5h0M376.5 507.5h0M376.5 535.5h0M377.5 552.5h0M377.5 537.5h0M377.5 519.5h0M377.5 529.5h0M377.5 550.5h0M377.5 487.5h0M377.5 451.5h0M378.5 508.5h0M378.5 518.5h0M378.5 497.5h0M378.5 505.5h0M378.5 499.5h0M378.5 533.5h0M378.5 464.5h0M379.5 538.5h0M379.5 526.5h0M379.5 532.5h0M379.5 513.5h0M379.5 515.5h0M379.5 477.5h0M379.5 514.5h0M380.5 534.5h0M380.5 526.5h0M380.5 510.5h0M380.5 486.5h0M380.5 541.5h0M380.5 499.5h0M380.5 549.5h0M381.5 514.5h0M381.5 540.5h0M381.5 485.5h0M381.5 513.5h0M381.5 520.5h0M381.5 515.5h0M381.5 499.5h0M382.5 496.5h0M382.5 524.5h0M382.5 495.5h0M382.5 511.5h0M382.5 499.5h0M382.5 501.5h0M382.5 523.5h0M383.5 525.5h0M383.5 526.5h0M383.5 544.5h0M383.5 543.5h0M383.5 520.5h0M383.5 519.5h0M383.5 502.5h0M384.5 491.5h0M384.5 529.5h0M384.5 520.5h0M384.5 501.5h0M384.5 495.5h0M384.5 509.5h0M384.5 536.5h0M385.5 483.5h0M385.5 458.5h0M385.5 489.5h0M385.5 516.5h0M385.5 504.5h0M385.5 506.5h0M386.5 493.5h0M386.5 546.5h0M386.5 547.5h0M386.5 519.5h0M386.5 527.5h0M386.5 519.5h0M386.5 508.5h0M387.5 499.5h0M387.5 533.5h0M387.5 495.5h0M387.5 510.5h0M387.5 486.5h0M387.5 456.5h0M387.5 513.5h0M388.5 522.5h0M388.5 481.5h0M388.5 504.5h0M388.5 483.5h0M388.5 509.5h0M388.5 496.5h0M388.5 548.5h0M389.5 519.5h0M389.5 519.5h0M389.5 535.5h0M389.5 543.5h0M389.5 525.5h0M389.5 538.5h0M389.5 508.5h0M390.5 485.5h0M390.5 522.5h0M390.5 527.5h0M390.5 474.5h0M390.5 505.5h0M390.5 530.5h0M390.5 505.5h0M391.5 486.5h0M391.5 479.5h0M391.5 493.5h0M391.5 511.5h0M391.5 479.5h0M391.5 529.5h0M391.5 501.5h0M392.5 524.5h0M392.5 499.5h0M392.5 500.5h0M392.5 486.5h0M392.5 547.5h0M392.5 518.5h0M392.5 518.5h0M393.5 496.5h0M393.5 510.5h0M393.5 508.5h0M393.5 531.5h0M393.5 500.5h0M393.5 503.5h0M393.5 520.5h0M394.5 503.5h0M394.5 495.5h0M394.5 522.5h0M394.5 502.5h0M394.5 505.5h0M394.5 540.5h0M394.5 475.5h0M395.5 533.5h0M395.5 515.5h0M395.5 498.5h0M395.5 481.5h0M395.5 509.5h0M395.5 481.5h0M395.5 530.5h0M396.5 495.5h0M396.5 508.5h0M396.5 477.5h0M396.5 516.5h0M396.5 497.5h0M396.5 531.5h0M396.5 554.5h0M397.5 497.5h0M397.5 511.5h0M397.5 494.5h0M397.5 501.5h0M397.5 526.5h0M397.5 514.5h0M397.5 502.5h0M398.5 506.5h0M398.5 510.5h0M398.5 544.5h0M398.5 483.5h0M398.5 520.5h0M398.5 538.5h0M398.5 494.5h0M399.5 530.5h0M399.5 526.5h0M399.5 488.5h0M399.5 487.5h0M399.5 516.5h0M399.5 528.5h0M399.5 492.5h0M400.5 480.5h0M400.5 541.5h0M400.5 472.5h0M400.5 558.5h0M400.5 497.5h0M400.5 462.5h0M400.5 481.5h0M401.5 477.5h0M401.5 520.5h0M401.5 550.5h0M401.5 537.5h0M401.5 501.5h0M401.5 500.5h0M401.5 496.5h0M402.5 478.5h0M402.5 526.5h0M402.5 521.5h0M402.5 530.5h0M402.5 500.5h0M402.5 527.5h0M403.5 535.5h0M403.5 502.5h0M403.5 503.5h0M403.5 457.5h0M403.5 521.5h0M403.5 540.5h0M403.5 521.5h0M404.5 501.5h0M404.5 513.5h0M404.5 538.5h0M404.5 513.5h0M404.5 496.5h0M404.5 509.5h0M404.5 509.5h0M405.5 548.5h0M405.5 482.5h0M405.5 509.5h0M405.5 507.5h0M405.5 529.5h0M405.5 457.5h0M405.5 538.5h0M406.5 523.5h0M406.5 495.5h0M406.5 554.5h0M406.5 484.5h0M406.5 518.5h0M406.5 526.5h0M406.5 514.5h0M407.5 485.5h0M407.5 498.5h0M407.5 521.5h0M407.5 558.5h0M407.5 500.5h0M407.5 554.5h0M407.5 522.5h0M408.5 537.5h0M408.5 509.5h0M408.5 521.5h0M408.5 546.5h0M408.5 552.5h0M408.5 548.5h0M408.5 592.5h0M409.5 584.5h0M409.5 591.5h0M409.5 587.5h0M409.5 559.5h0M409.5 560.5h0M409.5 559.5h0M409.5 565.5h0M410.5 550.5h0M410.5 558.5h0M410.5 557.5h0M410.5 572.5h0M410.5 516.5h0M410.5 551.5h0M410.5 559.5h0M411.5 527.5h0M411.5 539.5h0M411.5 529.5h0M411.5 569.5h0M411.5 542.5h0M411.5 547.5h0M411.5 570.5h0M412.5 542.5h0M412.5 538.5h0M412.5 585.5h0M412.5 531.5h0M412.5 569.5h0M412.5 560.5h0M412.5 554.5h0M413.5 530.5h0M413.5 559.5h0M413.5 557.5h0M413.5 545.5h0M413.5 574.5h0M413.5 552.5h0M413.5 567.5h0M414.5 554.5h0M414.5 553.5h0M414.5 550.5h0M414.5 539.5h0M414.5 549.5h0M414.5 592.5h0M414.5 526.5h0M415.5 575.5h0M415.5 528.5h0M415.5 558.5h0M415.5 570.5h0M415.5 502.5h0M415.5 572.5h0M415.5 561.5h0M416.5 547.5h0M416.5 554.5h0M416.5 520.5h0M416.5 558.5h0M416.5 529.5h0M416.5 581.5h0M416.5 547.5h0M417.5 556.5h0M417.5 514.5h0M417.5 529.5h0M417.5 564.5h0M417.5 538.5h0M417.5 581.5h0M417.5 539.5h0M418.5 533.5h0M418.5 521.5h0M418.5 574.5h0M418.5 524.5h0M418.5 547.5h0M418.5 528.5h0M419.5 514.5h0M419.5 543.5h0M419.5 524.5h0M419.5 581.5h0M419.5 562.5h0M419.5 518.5h0M419.5 559.5h0M420.5 523.5h0M420.5 502.5h0M420.5 564.5h0M420.5 566.5h0M420.5 562.5h0M420.5 516.5h0M420.5 529.5h0M421.5 532.5h0M421.5 535.5h0M421.5 567.5h0M421.5 519.5h0M421.5 547.5h0M421.5 542.5h0M421.5 534.5h0M422.5 586.5h0M422.5 549.5h0M422.5 526.5h0M422.5 547.5h0M422.5 528.5h0M422.5 564.5h0M422.5 544.5h0M423.5 560.5h0M423.5 570.5h0M423.5 571.5h0M423.5 543.5h0M423.5 552.5h0M423.5 564.5h0M423.5 564.5h0M424.5 567.5h0M424.5 538.5h0M424.5 547.5h0M424.5 528.5h0M424.5 524.5h0M424.5 580.5h0M424.5 526.5h0M425.5 582.5h0M425.5 544.5h0M425.5 510.5h0M425.5 551.5h0M425.5 530.5h0M425.5 558.5h0M425.5 523.5h0M426.5 559.5h0M426.5 535.5h0M426.5 574.5h0M426.5 502.5h0M426.5 548.5h0M426.5 532.5h0M426.5 508.5h0M427.5 521.5h0M427.5 541.5h0M427.5 566.5h0M427.5 533.5h0M427.5 521.5h0M427.5 552.5h0M427.5 555.5h0M428.5 549.5h0M428.5 547.5h0M428.5 538.5h0M428.5 542.5h0M428.5 561.5h0M428.5 566.5h0M428.5 561.5h0M429.5 541.5h0M429.5 516.5h0M429.5 534.5h0M429.5 535.5h0M429.5 583.5h0M429.5 545.5h0M429.5 532.5h0M430.5 554.5h0M430.5 546.5h0M430.5 574.5h0M430.5 537.5h0M430.5 559.5h0M430.5 559.5h0M430.5 519.5h0M431.5 561.5h0M431.5 550.5h0M431.5 563.5h0M431.5 539.5h0M431.5 557.5h0M431.5 543.5h0M431.5 525.5h0M432.5 532.5h0M432.5 541.5h0M432.5 522.5h0M432.5 561.5h0M432.5 572.5h0M432.5 546.5h0M432.5 531.5h0M433.5 552.5h0M433.5 552.5h0M433.5 536.5h0M433.5 561.5h0M433.5 503.5h0M433.5 551.5h0M433.5 554.5h0M434.5 541.5h0M434.5 537.5h0M434.5 546.5h0M434.5 555.5h0M434.5 525.5h0M434.5 515.5h0M435.5 536.5h0M435.5 536.5h0M435.5 553.5h0M435.5 556.5h0M435.5 565.5h0M435.5 569.5h0M435.5 527.5h0M436.5 535.5h0M436.5 530.5h0M436.5 496.5h0M436.5 532.5h0M436.5 556.5h0M436.5 540.5h0M436.5 534.5h0M437.5 522.5h0M437.5 535.5h0M437.5 501.5h0M437.5 548.5h0M437.5 554.5h0M437.5 534.5h0M437.5 558.5h0M438.5 510.5h0M438.5 531.5h0M438.5 538.5h0M438.5 552.5h0M438.5 551.5h0M438.5 518.5h0M438.5 509.5h0M439.5 576.5h0M439.5 532.5h0M439.5 564.5h0M439.5 572.5h0M439.5 551.5h0M439.5 518.5h0M439.5 544.5h0M440.5 500.5h0M440.5 561.5h0M440.5 513.5h0M440.5 544.5h0M440.5 556.5h0M440.5 558.5h0M440.5 569.5h0M441.5 542.5h0M441.5 519.5h0M441.5 554.5h0M441.5 556.5h0M441.5 552.5h0M441.5 511.5h0M441.5 521.5h0M442.5 538.5h0M442.5 567.5h0M442.5 542.5h0M442.5 562.5h0M442.5 522.5h0M442.5 582.5h0M442.5 552.5h0M443.5 511.5h0M443.5 551.5h0M443.5 537.5h0M443.5 552.5h0M443.5 518.5h0M443.5 514.5h0M443.5 561.5h0M444.5 578.5h0M444.5 572.5h0M444.5 549.5h0M444.5 557.5h0M444.5 561.5h0M444.5 572.5h0M444.5 519.5h0M445.5 533.5h0M445.5 562.5h0M445.5 570.5h0M445.5 560.5h0M445.5 546.5h0M445.5 558.5h0M445.5 519.5h0M446.5 523.5h0M446.5 560.5h0M446.5 517.5h0M446.5 561.5h0M446.5 523.5h0M446.5 521.5h0M446.5 478.5h0M447.5 488.5h0M447.5 560.5h0M447.5 563.5h0M447.5 550.5h0M447.5 525.5h0M447.5 513.5h0M447.5 551.5h0M448.5 505.5h0M448.5 511.5h0M448.5 577.5h0M448.5 579.5h0M448.5 521.5h0M448.5 535.5h0M448.5 542.5h0M449.5 549.5h0M449.5 549.5h0M449.5 556.5h0M449.5 547.5h0M449.5 515.5h0M449.5 554.5h0M449.5 541.5h0M450.5 540.5h0M450.5 538.5h0M450.5 499.5h0M450.5 532.5h0M450.5 511.5h0M450.5 541.5h0M451.5 552.5h0M451.5 511.5h0M451.5 559.5h0M451.5 566.5h0M451.5 538.5h0M451.5 544.5h0M451.5 554.5h0M452.5 559.5h0M452.5 527.5h0M452.5 524.5h0M452.5 491.5h0M452.5 574.5h0M452.5 517.5h0M452.5 557.5h0M453.5 524.5h0M453.5 528.5h0M453.5 498.5h0M453.5 531.5h0M453.5 538.5h0M453.5 540.5h0M453.5 582.5h0M454.5 492.5h0M454.5 516.5h0M454.5 535.5h0M454.5 576.5h0M454.5 503.5h0M454.5 567.5h0M454.5 556.5h0M455.5 551.5h0M455.5 478.5h0M455.5 570.5h0M455.5 560.5h0M455.5 575.5h0M455.5 585.5h0M455.5 568.5h0M456.5 538.5h0M456.5 530.5h0M456.5 566.5h0M456.5 507.5h0M456.5 555.5h0M456.5 523.5h0M456.5 542.5h0M457.5 534.5h0M457.5 533.5h0M457.5 565.5h0M457.5 538.5h0M457.5 517.5h0M457.5 567.5h0M457.5 586.5h0M458.5 527.5h0M458.5 537.5h0M458.5 582.5h0M458.5 554.5h0M458.5 544.5h0M458.5 527.5h0M458.5 568.5h0M459.5 565.5h0M459.5 571.5h0M459.5 488.5h0M459.5 536.5h0M459.5 569.5h0M459.5 551.5h0M459.5 538.5h0M460.5 521.5h0M460.5 555.5h0M460.5 546.5h0M460.5 530.5h0M460.5 549.5h0M460.5 562.5h0M460.5 524.5h0M461.5 549.5h0M461.5 554.5h0M461.5 562.5h0M461.5 546.5h0M461.5 509.5h0M461.5 506.5h0M461.5 559.5h0M462.5 561.5h0M462.5 508.5h0M462.5 556.5h0M462.5 538.5h0M462.5 511.5h0M462.5 529.5h0M462.5 545.5h0M463.5 568.5h0M463.5 553.5h0M463.5 516.5h0M463.5 514.5h0M463.5 542.5h0M463.5 544.5h0M463.5 562.5h0M464.5 565.5h0M464.5 549.5h0M464.5 538.5h0M464.5 556.5h0M464.5 537.5h0M464.5 553.5h0M464.5 517.5h0M465.5 554.5h0M465.5 570.5h0M465.5 550.5h0M465.5 521.5h0M465.5 554.5h0M465.5 565.5h0M465.5 567.5h0M466.5 533.5h0M466.5 522.5h0M466.5 496.5h0M466.5 530.5h0M466.5 508.5h0M466.5 529.5h0M466.5 542.5h0M467.5 551.5h0M467.5 533.5h0M467.5 565.5h0M467.5 534.5h0M467.5 513.5h0M467.5 533.5h0M468.5 572.5h0M468.5 563.5h0M468.5 547.5h0M468.5 562.5h0M468.5 519.5h0M468.5 554.5h0M468.5 520.5h0M469.5 538.5h0M469.5 529.5h0M469.5 548.5h0M469.5 539.5h0M469.5 533.5h0M469.5 562.5h0M469.5 480.5h0M470.5 537.5h0M470.5 525.5h0M470.5 511.5h0M470.5 535.5h0M470.5 536.5h0M470.5 530.5h0M470.5 563.5h0M471.5 517.5h0M471.5 475.5h0M471.5 526.5h0M471.5 518.5h0M471.5 529.5h0M471.5 507.5h0M471.5 511.5h0M472.5 530.5h0M472.5 556.5h0M472.5 584.5h0M472.5 546.5h0M472.5 514.5h0M472.5 547.5h0M472.5 544.5h0M473.5 531.5h0M473.5 520.5h0M473.5 512.5h0M473.5 563.5h0M473.5 487.5h0M473.5 566.5h0M473.5 534.5h0M474.5 523.5h0M474.5 533.5h0M474.5 564.5h0M474.5 541.5h0M474.5 516.5h0M474.5 545.5h0M474.5 488.5h0M475.5 545.5h0M475.5 520.5h0M475.5 554.5h0M475.5 564.5h0M475.5 549.5h0M475.5 546.5h0M475.5 567.5h0M476.5 526.5h0M476.5 533.5h0M476.5 525.5h0M476.5 512.5h0M476.5 552.5h0M476.5 558.5h0M476.5 541.5h0M477.5 543.5h0M477.5 525.5h0M477.5 540.5h0M477.5 580.5h0M477.5 524.5h0M477.5 532.5h0M477.5 556.5h0M478.5 517.5h0M478.5 579.5h0M478.5 542.5h0M478.5 570.5h0M478.5 511.5h0M478.5 553.5h0M478.5 504.5h0M479.5 566.5h0M479.5 517.5h0M479.5 548.5h0M479.5 530.5h0M479.5 567.5h0M479.5 536.5h0M479.5 556.5h0M480.5 552.5h0M480.5 584.5h0M480.5 571.5h0M480.5 570.5h0M480.5 538.5h0M480.5 542.5h0M480.5 513.5h0M481.5 574.5h0M481.5 582.5h0M481.5 542.5h0M481.5 536.5h0M481.5 566.5h0M481.5 470.5h0M481.5 580.5h0M482.5 538.5h0M482.5 528.5h0M482.5 522.5h0M482.5 586.5h0M482.5 555.5h0M482.5 506.5h0M482.5 551.5h0M483.5 545.5h0M483.5 519.5h0M483.5 548.5h0M483.5 519.5h0M483.5 508.5h0M483.5 567.5h0M484.5 502.5h0M484.5 524.5h0M484.5 526.5h0M484.5 517.5h0M484.5 568.5h0M484.5 509.5h0M484.5 517.5h0M485.5 512.5h0M485.5 533.5h0M485.5 585.5h0M485.5 496.5h0M485.5 580.5h0M485.5 528.5h0M485.5 528.5h0M486.5 550.5h0M486.5 542.5h0M486.5 533.5h0M486.5 502.5h0M486.5 546.5h0M486.5 533.5h0M486.5 519.5h0M487.5 509.5h0M487.5 518.5h0M487.5 535.5h0M487.5 544.5h0M487.5 534.5h0M487.5 590.5h0M487.5 556.5h0M488.5 564.5h0M488.5 515.5h0M488.5 520.5h0M488.5 556.5h0M488.5 528.5h0M488.5 526.5h0M488.5 484.5h0M489.5 545.5h0M489.5 564.5h0M489.5 540.5h0M489.5 511.5h0M489.5 555.5h0M489.5 573.5h0M489.5 549.5h0M490.5 532.5h0M490.5 554.5h0M490.5 509.5h0M490.5 537.5h0M490.5 508.5h0M490.5 491.5h0M490.5 533.5h0M491.5 560.5h0M491.5 476.5h0M491.5 575.5h0M491.5 548.5h0M491.5 527.5h0M491.5 583.5h0M491.5 536.5h0M492.5 516.5h0M492.5 546.5h0M492.5 556.5h0M492.5 545.5h0M492.5 493.5h0M492.5 557.5h0M492.5 536.5h0M493.5 512.5h0M493.5 562.5h0M493.5 513.5h0M493.5 508.5h0M493.5 535.5h0M493.5 510.5h0M493.5 549.5h0M494.5 561.5h0M494.5 514.5h0M494.5 520.5h0M494.5 503.5h0M494.5 522.5h0M494.5 543.5h0M494.5 567.5h0M495.5 525.5h0M495.5 532.5h0M495.5 492.5h0M495.5 486.5h0M495.5 522.5h0M495.5 509.5h0M495.5 529.5h0M496.5 549.5h0M496.5 527.5h0M496.5 553.5h0M496.5 556.5h0M496.5 522.5h0M496.5 552.5h0M496.5 500.5h0M497.5 532.5h0M497.5 554.5h0M497.5 512.5h0M497.5 585.5h0M497.5 562.5h0M497.5 517.5h0M497.5 514.5h0M498.5 519.5h0M498.5 520.5h0M498.5 513.5h0M498.5 568.5h0M498.5 514.5h0M498.5 534.5h0M498.5 530.5h0M499.5 533.5h0M499.5 533.5h0M499.5 543.5h0M499.5 519.5h0M499.5 532.5h0M499.5 544.5h0M500.5 556.5h0M500.5 527.5h0M500.5 548.5h0M500.5 526.5h0M500.5 509.5h0M500.5 514.5h0M500.5 530.5h0M501.5 545.5h0M501.5 563.5h0M501.5 554.5h0M501.5 555.5h0M501.5 541.5h0M501.5 576.5h0M501.5 541.5h0M502.5 526.5h0M502.5 517.5h0M502.5 506.5h0M502.5 526.5h0M502.5 537.5h0M502.5 534.5h0M502.5 512.5h0M503.5 549.5h0M503.5 535.5h0M503.5 534.5h0M503.5 571.5h0M503.5 522.5h0M503.5 543.5h0M503.5 557.5h0M504.5 554.5h0M504.5 536.5h0M504.5 521.5h0M504.5 562.5h0M504.5 552.5h0M504.5 526.5h0M504.5 528.5h0M505.5 558.5h0M505.5 530.5h0M505.5 515.5h0M505.5 523.5h0M505.5 541.5h0M505.5 555.5h0M505.5 523.5h0M506.5 525.5h0M506.5 551.5h0M506.5 547.5h0M506.5 552.5h0M506.5 518.5h0M506.5 573.5h0M506.5 548.5h0M507.5 529.5h0M507.5 569.5h0M507.5 508.5h0M507.5 563.5h0M507.5 589.5h0M507.5 526.5h0M507.5 537.5h0M508.5 501.5h0M508.5 527.5h0M508.5 547.5h0M508.5 574.5h0M508.5 580.5h0M508.5 536.5h0M508.5 538.5h0M509.5 512.5h0M509.5 536.5h0M509.5 527.5h0M509.5 529.5h0M509.5 547.5h0M509.5 518.5h0M509.5 562.5h0M510.5 567.5h0M510.5 502.5h0M510.5 541.5h0M510.5 544.5h0M510.5 539.5h0M510.5 561.5h0M510.5 506.5h0M511.5 538.5h0M511.5 545.5h0M511.5 566.5h0M511.5 510.5h0M511.5 495.5h0M511.5 510.5h0M511.5 528.5h0M512.5 519.5h0M512.5 522.5h0M512.5 514.5h0M512.5 573.5h0M512.5 521.5h0M512.5 490.5h0M512.5 512.5h0M513.5 519.5h0M513.5 558.5h0M513.5 554.5h0M513.5 542.5h0M513.5 514.5h0M513.5 516.5h0M513.5 533.5h0M514.5 538.5h0M514.5 479.5h0M514.5 523.5h0M514.5 528.5h0M514.5 543.5h0M514.5 569.5h0M514.5 556.5h0M515.5 539.5h0M515.5 556.5h0M515.5 557.5h0M515.5 535.5h0M515.5 530.5h0M515.5 528.5h0M516.5 560.5h0M516.5 522.5h0M516.5 552.5h0M516.5 567.5h0M516.5 564.5h0M516.5 547.5h0M516.5 513.5h0M517.5 544.5h0M517.5 517.5h0M517.5 551.5h0M517.5 565.5h0M517.5 540.5h0M517.5 504.5h0M517.5 568.5h0M518.5 580.5h0M518.5 536.5h0M518.5 555.5h0M518.5 577.5h0M518.5 505.5h0M518.5 524.5h0M518.5 570.5h0M519.5 544.5h0M519.5 532.5h0M519.5 509.5h0M519.5 524.5h0M519.5 523.5h0M519.5 568.5h0M519.5 558.5h0M520.5 566.5h0M520.5 506.5h0M520.5 507.5h0M520.5 575.5h0M520.5 518.5h0M520.5 561.5h0M520.5 537.5h0M521.5 589.5h0M521.5 561.5h0M521.5 550.5h0M521.5 533.5h0M521.5 526.5h0M521.5 500.5h0M521.5 535.5h0M522.5 540.5h0M522.5 537.5h0M522.5 564.5h0M522.5 538.5h0M522.5 550.5h0M522.5 588.5h0M522.5 558.5h0M523.5 566.5h0M523.5 512.5h0M523.5 569.5h0M523.5 577.5h0M523.5 548.5h0M523.5 530.5h0M523.5 538.5h0M524.5 549.5h0M524.5 504.5h0M524.5 539.5h0M524.5 550.5h0M524.5 578.5h0M524.5 581.5h0M524.5 517.5h0M525.5 575.5h0M525.5 579.5h0M525.5 569.5h0M525.5 544.5h0M525.5 548.5h0M525.5 563.5h0M525.5 538.5h0M526.5 513.5h0M526.5 577.5h0M526.5 526.5h0M526.5 545.5h0M526.5 497.5h0M526.5 548.5h0M526.5 538.5h0M527.5 569.5h0M527.5 552.5h0M527.5 553.5h0M527.5 563.5h0M527.5 528.5h0M527.5 527.5h0M527.5 530.5h0M528.5 519.5h0M528.5 518.5h0M528.5 516.5h0M528.5 552.5h0M528.5 568.5h0M528.5 500.5h0M528.5 555.5h0M529.5 541.5h0M529.5 551.5h0M529.5 557.5h0M529.5 517.5h0M529.5 570.5h0M529.5 545.5h0M529.5 499.5h0M530.5 544.5h0M530.5 551.5h0M530.5 574.5h0M530.5 523.5h0M530.5 508.5h0M530.5 506.5h0M530.5 508.5h0M531.5 518.5h0M531.5 545.5h0M531.5 508.5h0M531.5 514.5h0M531.5 526.5h0M531.5 549.5h0M531.5 504.5h0M532.5 549.5h0M532.5 545.5h0M532.5 519.5h0M532.5 567.5h0M532.5 520.5h0M532.5 549.5h0M533.5 551.5h0M533.5 514.5h0M533.5 550.5h0M533.5 542.5h0M533.5 487.5h0M533.5 546.5h0M533.5 528.5h0M534.5 523.5h0M534.5 539.5h0M534.5 582.5h0M534.5 552.5h0M534.5 556.5h0M534.5 543.5h0M534.5 544.5h0M535.5 532.5h0M535.5 558.5h0M535.5 527.5h0M535.5 507.5h0M535.5 538.5h0M535.5 550.5h0M535.5 487.5h0M536.5 557.5h0M536.5 531.5h0M536.5 575.5h0M536.5 549.5h0M536.5 526.5h0M536.5 556.5h0M536.5 551.5h0M537.5 532.5h0M537.5 557.5h0M537.5 563.5h0M537.5 542.5h0M537.5 530.5h0M537.5 530.5h0M537.5 544.5h0M538.5 532.5h0M538.5 553.5h0M538.5 519.5h0M538.5 563.5h0M538.5 533.5h0M538.5 517.5h0M538.5 553.5h0M539.5 587.5h0M539.5 525.5h0M539.5 565.5h0M539.5 515.5h0M539.5 538.5h0M539.5 511.5h0M539.5 535.5h0M540.5 569.5h0M540.5 533.5h0M540.5 538.5h0M540.5 545.5h0M540.5 512.5h0M540.5 538.5h0M540.5 518.5h0M541.5 542.5h0M541.5 543.5h0M541.5 524.5h0M541.5 536.5h0M541.5 539.5h0M541.5 545.5h0M541.5 523.5h0M542.5 515.5h0M542.5 539.5h0M542.5 562.5h0M542.5 517.5h0M542.5 532.5h0M542.5 525.5h0M542.5 514.5h0M543.5 559.5h0M543.5 525.5h0M543.5 504.5h0M543.5 511.5h0M543.5 506.5h0M543.5 534.5h0M543.5 516.5h0M544.5 568.5h0M544.5 562.5h0M544.5 537.5h0M544.5 528.5h0M544.5 498.5h0M544.5 546.5h0M544.5 552.5h0M545.5 519.5h0M545.5 567.5h0M545.5 505.5h0M545.5 555.5h0M545.5 578.5h0M545.5 554.5h0M545.5 565.5h0M546.5 514.5h0M546.5 567.5h0M546.5 535.5h0M546.5 521.5h0M546.5 562.5h0M546.5 548.5h0M546.5 556.5h0M547.5 557.5h0M547.5 551.5h0M547.5 549.5h0M547.5 513.5h0M547.5 532.5h0M547.5 589.5h0M547.5 524.5h0M548.5 527.5h0M548.5 580.5h0M548.5 571.5h0M548.5 549.5h0M548.5 523.5h0M548.5 544.5h0M549.5 494.5h0M549.5 506.5h0M549.5 520.5h0M549.5 519.5h0M549.5 528.5h0M549.5 552.5h0M549.5 546.5h0M550.5 536.5h0M550.5 527.5h0M550.5 498.5h0M550.5 539.5h0M550.5 555.5h0M550.5 522.5h0M550.5 522.5h0M551.5 513.5h0M551.5 525.5h0M551.5 523.5h0M551.5 526.5h0M551.5 498.5h0M551.5 534.5h0M551.5 518.5h0M552.5 517.5h0M552.5 539.5h0M552.5 527.5h0M552.5 562.5h0M552.5 534.5h0M552.5 565.5h0M552.5 537.5h0M553.5 577.5h0M553.5 548.5h0M553.5 541.5h0M553.5 538.5h0M553.5 536.5h0M553.5 513.5h0M553.5 524.5h0M554.5 585.5h0M554.5 556.5h0M554.5 558.5h0M554.5 553.5h0M554.5 535.5h0M554.5 576.5h0M554.5 553.5h0M555.5 574.5h0M555.5 531.5h0M555.5 558.5h0M555.5 528.5h0M555.5 533.5h0M555.5 500.5h0M555.5 508.5h0M556.5 541.5h0M556.5 532.5h0M556.5 539.5h0M556.5 522.5h0M556.5 566.5h0M556.5 536.5h0M556.5 551.5h0M557.5 554.5h0M557.5 536.5h0M557.5 559.5h0M557.5 502.5h0M557.5 560.5h0M557.5 534.5h0M557.5 496.5h0M558.5 492.5h0M558.5 526.5h0M558.5 569.5h0M558.5 543.5h0M558.5 541.5h0M558.5 528.5h0M558.5 540.5h0M559.5 524.5h0M559.5 556.5h0M559.5 561.5h0M559.5 522.5h0M559.5 532.5h0M559.5 566.5h0M559.5 533.5h0M560.5 514.5h0M560.5 549.5h0M560.5 524.5h0M560.5 559.5h0M560.5 530.5h0M560.5 515.5h0M560.5 558.5h0M561.5 535.5h0M561.5 565.5h0M561.5 546.5h0M561.5 503.5h0M561.5 540.5h0M561.5 534.5h0M561.5 518.5h0M562.5 565.5h0M562.5 552.5h0M562.5 527.5h0M562.5 553.5h0M562.5 506.5h0M562.5 578.5h0M562.5 537.5h0M563.5 528.5h0M563.5 511.5h0M563.5 531.5h0M563.5 568.5h0M563.5 565.5h0M563.5 537.5h0M563.5 505.5h0M564.5 524.5h0M564.5 525.5h0M564.5 518.5h0M564.5 520.5h0M564.5 512.5h0M564.5 560.5h0M565.5 547.5h0M565.5 522.5h0M565.5 538.5h0M565.5 517.5h0M565.5 568.5h0M565.5 517.5h0M565.5 543.5h0M566.5 509.5h0M566.5 514.5h0M566.5 555.5h0M566.5 506.5h0M566.5 518.5h0M566.5 539.5h0M566.5 541.5h0M567.5 496.5h0M567.5 514.5h0M567.5 546.5h0M567.5 513.5h0M567.5 526.5h0M567.5 534.5h0M567.5 521.5h0M568.5 527.5h0M568.5 575.5h0M568.5 531.5h0M568.5 529.5h0M568.5 559.5h0M568.5 500.5h0M568.5 529.5h0M569.5 545.5h0M569.5 517.5h0M569.5 531.5h0M569.5 560.5h0M569.5 559.5h0M569.5 506.5h0M569.5 482.5h0M570.5 512.5h0M570.5 532.5h0M570.5 530.5h0M570.5 533.5h0M570.5 520.5h0M570.5 540.5h0M570.5 517.5h0M571.5 528.5h0M571.5 509.5h0M571.5 521.5h0M571.5 545.5h0M571.5 538.5h0M571.5 529.5h0M571.5 521.5h0M572.5 478.5h0M572.5 526.5h0M572.5 548.5h0M572.5 516.5h0M572.5 512.5h0M572.5 530.5h0M572.5 549.5h0M573.5 560.5h0M573.5 542.5h0M573.5 504.5h0M573.5 527.5h0M573.5 550.5h0M573.5 517.5h0M573.5 563.5h0M574.5 515.5h0M574.5 538.5h0M574.5 487.5h0M574.5 571.5h0M574.5 589.5h0M574.5 499.5h0M574.5 534.5h0M575.5 564.5h0M575.5 520.5h0M575.5 542.5h0M575.5 517.5h0M575.5 560.5h0M575.5 518.5h0M575.5 526.5h0M576.5 534.5h0M576.5 507.5h0M576.5 555.5h0M576.5 483.5h0M576.5 499.5h0M576.5 529.5h0M576.5 517.5h0M577.5 552.5h0M577.5 504.5h0M577.5 573.5h0M577.5 567.5h0M577.5 524.5h0M577.5 540.5h0M577.5 545.5h0M578.5 513.5h0M578.5 533.5h0M578.5 548.5h0M578.5 575.5h0M578.5 514.5h0M578.5 542.5h0M578.5 513.5h0M579.5 500.5h0M579.5 520.5h0M579.5 567.5h0M579.5 515.5h0M579.5 524.5h0M579.5 503.5h0M579.5 525.5h0M580.5 519.5h0M580.5 535.5h0M580.5 491.5h0M580.5 525.5h0M580.5 507.5h0M580.5 531.5h0M581.5 506.5h0M581.5 520.5h0M581.5 582.5h0M581.5 562.5h0M581.5 556.5h0M581.5 530.5h0M581.5 545.5h0M582.5 495.5h0M582.5 503.5h0M582.5 511.5h0M582.5 505.5h0M582.5 534.5h0M582.5 497.5h0M582.5 551.5h0M583.5 528.5h0M583.5 527.5h0M583.5 502.5h0M583.5 532.5h0M583.5 473.5h0M583.5 530.5h0M583.5 520.5h0M584.5 502.5h0M584.5 527.5h0M584.5 536.5h0M584.5 499.5h0M584.5 528.5h0M584.5 544.5h0M584.5 520.5h0M585.5 515.5h0M585.5 497.5h0M585.5 510.5h0M585.5 554.5h0M585.5 538.5h0M585.5 582.5h0M585.5 539.5h0M586.5 503.5h0M586.5 523.5h0M586.5 570.5h0M586.5 485.5h0M586.5 521.5h0M586.5 511.5h0M586.5 569.5h0M587.5 547.5h0M587.5 502.5h0M587.5 507.5h0M587.5 501.5h0M587.5 535.5h0M587.5 548.5h0M587.5 554.5h0M588.5 512.5h0M588.5 510.5h0M588.5 511.5h0M588.5 569.5h0M588.5 544.5h0M588.5 510.5h0M588.5 559.5h0M589.5 500.5h0M589.5 525.5h0M589.5 541.5h0M589.5 540.5h0M589.5 546.5h0M589.5 521.5h0M589.5 516.5h0M590.5 529.5h0M590.5 529.5h0M590.5 497.5h0M590.5 511.5h0M590.5 494.5h0M590.5 530.5h0M590.5 529.5h0M591.5 525.5h0M591.5 535.5h0M591.5 528.5h0M591.5 473.5h0M591.5 538.5h0M591.5 506.5h0M591.5 516.5h0M592.5 549.5h0M592.5 544.5h0M592.5 549.5h0M592.5 525.5h0M592.5 500.5h0M592.5 533.5h0M592.5 538.5h0M593.5 546.5h0M593.5 536.5h0M593.5 465.5h0M593.5 506.5h0M593.5 557.5h0M593.5 526.5h0M593.5 571.5h0M594.5 542.5h0M594.5 532.5h0M594.5 552.5h0M594.5 545.5h0M594.5 536.5h0M594.5 525.5h0M594.5 542.5h0M595.5 484.5h0M595.5 540.5h0M595.5 499.5h0M595.5 507.5h0M595.5 555.5h0M595.5 520.5h0M595.5 484.5h0M596.5 521.5h0M596.5 543.5h0M596.5 537.5h0M596.5 512.5h0M596.5 556.5h0M596.5 522.5h0M596.5 533.5h0M597.5 499.5h0M597.5 503.5h0M597.5 528.5h0M597.5 543.5h0M597.5 565.5h0M597.5 528.5h0M598.5 505.5h0M598.5 533.5h0M598.5 512.5h0M598.5 572.5h0M598.5 489.5h0M598.5 536.5h0M598.5 545.5h0M599.5 537.5h0M599.5 534.5h0M599.5 541.5h0M599.5 529.5h0M599.5 514.5h0M599.5 528.5h0M599.5 524.5h0M600.5 514.5h0M600.5 510.5h0M600.5 554.5h0M600.5 513.5h0M600.5 509.5h0M600.5 518.5h0M600.5 544.5h0M601.5 533.5h0M601.5 516.5h0M601.5 548.5h0M601.5 565.5h0M601.5 524.5h0M601.5 514.5h0M601.5 499.5h0M602.5 509.5h0M602.5 519.5h0M602.5 535.5h0M602.5 502.5h0M602.5 537.5h0M602.5 514.5h0M602.5 503.5h0M603.5 536.5h0M603.5 545.5h0M603.5 561.5h0M603.5 531.5h0M603.5 547.5h0M603.5 559.5h0M603.5 494.5h0M604.5 534.5h0M604.5 542.5h0M604.5 561.5h0M604.5 519.5h0M604.5 513.5h0M604.5 544.5h0M604.5 524.5h0M605.5 539.5h0M605.5 556.5h0M605.5 526.5h0M605.5 531.5h0M605.5 544.5h0M605.5 546.5h0M605.5 574.5h0M606.5 554.5h0M606.5 507.5h0M606.5 525.5h0M606.5 525.5h0M606.5 526.5h0M606.5 521.5h0M606.5 559.5h0M607.5 514.5h0M607.5 548.5h0M607.5 518.5h0M607.5 513.5h0M607.5 515.5h0M607.5 512.5h0M607.5 532.5h0M608.5 512.5h0M608.5 531.5h0M608.5 547.5h0M608.5 548.5h0M608.5 501.5h0M608.5 507.5h0M608.5 548.5h0M609.5 522.5h0M609.5 528.5h0M609.5 546.5h0M609.5 539.5h0M609.5 534.5h0M609.5 547.5h0M609.5 525.5h0M610.5 530.5h0M610.5 512.5h0M610.5 526.5h0M610.5 503.5h0M610.5 549.5h0M610.5 522.5h0M610.5 527.5h0M611.5 522.5h0M611.5 502.5h0M611.5 542.5h0M611.5 538.5h0M611.5 488.5h0M611.5 524.5h0M611.5 538.5h0M612.5 550.5h0M612.5 534.5h0M612.5 531.5h0M612.5 567.5h0M612.5 543.5h0M612.5 491.5h0M612.5 520.5h0M613.5 534.5h0M613.5 513.5h0M613.5 502.5h0M613.5 549.5h0M613.5 531.5h0M613.5 543.5h0M614.5 511.5h0M614.5 517.5h0M614.5 555.5h0M614.5 494.5h0M614.5 496.5h0M614.5 529.5h0M614.5 517.5h0M615.5 531.5h0M615.5 514.5h0M615.5 563.5h0M615.5 536.5h0M615.5 515.5h0M615.5 512.5h0M615.5 539.5h0M616.5 564.5h0M616.5 544.5h0M616.5 515.5h0M616.5 574.5h0M616.5 503.5h0M616.5 572.5h0M616.5 558.5h0M617.5 517.5h0M617.5 547.5h0M617.5 525.5h0M617.5 524.5h0M617.5 525.5h0M617.5 579.5h0M617.5 508.5h0M618.5 495.5h0M618.5 527.5h0M618.5 560.5h0M618.5 511.5h0M618.5 529.5h0M618.5 541.5h0M618.5 556.5h0M619.5 541.5h0M619.5 539.5h0M619.5 534.5h0M619.5 530.5h0M619.5 526.5h0M619.5 552.5h0M619.5 549.5h0M620.5 519.5h0M620.5 526.5h0M620.5 545.5h0M620.5 560.5h0M620.5 535.5h0M620.5 560.5h0M620.5 521.5h0M621.5 506.5h0M621.5 518.5h0M621.5 521.5h0M621.5 531.5h0M621.5 548.5h0M621.5 544.5h0M621.5 573.5h0M622.5 542.5h0M622.5 534.5h0M622.5 525.5h0M622.5 535.5h0M622.5 517.5h0M622.5 576.5h0M622.5 555.5h0M623.5 517.5h0M623.5 493.5h0M623.5 506.5h0M623.5 506.5h0M623.5 494.5h0M623.5 510.5h0M623.5 582.5h0M624.5 518.5h0M624.5 530.5h0M624.5 513.5h0M624.5 540.5h0M624.5 538.5h0M624.5 518.5h0M624.5 525.5h0M625.5 559.5h0M625.5 555.5h0M625.5 507.5h0M625.5 525.5h0M625.5 545.5h0M625.5 561.5h0M625.5 543.5h0M626.5 509.5h0M626.5 536.5h0M626.5 585.5h0M626.5 556.5h0M626.5 554.5h0M626.5 537.5h0M626.5 509.5h0M627.5 527.5h0M627.5 530.5h0M627.5 537.5h0M627.5 543.5h0M627.5 522.5h0M627.5 559.5h0M627.5 555.5h0M628.5 520.5h0M628.5 546.5h0M628.5 514.5h0M628.5 529.5h0M628.5 549.5h0M628.5 528.5h0M628.5 553.5h0M629.5 491.5h0M629.5 548.5h0M629.5 512.5h0M629.5 543.5h0M629.5 537.5h0M629.5 562.5h0M630.5 523.5h0M630.5 516.5h0M630.5 548.5h0M630.5 520.5h0M630.5 517.5h0M630.5 556.5h0M630.5 525.5h0M631.5 549.5h0M631.5 539.5h0M631.5 519.5h0M631.5 545.5h0M631.5 543.5h0M631.5 503.5h0M631.5 541.5h0M632.5 521.5h0M632.5 541.5h0M632.5 524.5h0M632.5 523.5h0M632.5 539.5h0M632.5 557.5h0M632.5 558.5h0M633.5 558.5h0M633.5 511.5h0M633.5 540.5h0M633.5 540.5h0M633.5 511.5h0M633.5 552.5h0M633.5 538.5h0M634.5 534.5h0M634.5 478.5h0M634.5 562.5h0M634.5 528.5h0M634.5 547.5h0M634.5 500.5h0M634.5 496.5h0M635.5 533.5h0M635.5 537.5h0M635.5 529.5h0M635.5 549.5h0M635.5 567.5h0M635.5 556.5h0M635.5 543.5h0M636.5 529.5h0M636.5 525.5h0M636.5 508.5h0M636.5 540.5h0M636.5 521.5h0M636.5 526.5h0M636.5 561.5h0M637.5 537.5h0M637.5 526.5h0M637.5 527.5h0M637.5 551.5h0M637.5 561.5h0M637.5 502.5h0M637.5 538.5h0M638.5 536.5h0M638.5 538.5h0M638.5 515.5h0M638.5 514.5h0M638.5 562.5h0M638.5 536.5h0M638.5 520.5h0M639.5 542.5h0M639.5 539.5h0M639.5 494.5h0M639.5 557.5h0M639.5 525.5h0M639.5 525.5h0M639.5 561.5h0M640.5 541.5h0M640.5 582.5h0M640.5 529.5h0M640.5 539.5h0M640.5 543.5h0M640.5 555.5h0M640.5 516.5h0M641.5 577.5h0M641.5 491.5h0M641.5 546.5h0M641.5 538.5h0M641.5 549.5h0M641.5 530.5h0M641.5 552.5h0M642.5 549.5h0M642.5 526.5h0M642.5 495.5h0M642.5 541.5h0M642.5 510.5h0M642.5 539.5h0M642.5 534.5h0M643.5 513.5h0M643.5 506.5h0M643.5 511.5h0M643.5 557.5h0M643.5 532.5h0M643.5 543.5h0M643.5 556.5h0M644.5 538.5h0M644.5 530.5h0M644.5 512.5h0M644.5 519.5h0M644.5 510.5h0M644.5 510.5h0M644.5 518.5h0M645.5 560.5h0M645.5 535.5h0M645.5 566.5h0M645.5 565.5h0M645.5 518.5h0M645.5 583.5h0M646.5 522.5h0M646.5 549.5h0M646.5 544.5h0M646.5 505.5h0M646.5 539.5h0M646.5 503.5h0M646.5 513.5h0M647.5 517.5h0M647.5 524.5h0M647.5 534.5h0M647.5 518.5h0M647.5 552.5h0M647.5 534.5h0M647.5 514.5h0M648.5 547.5h0M648.5 571.5h0M648.5 523.5h0M648.5 547.5h0M648.5 552.5h0M648.5 578.5h0M648.5 528.5h0M649.5 506.5h0M649.5 524.5h0M649.5 487.5h0M649.5 566.5h0M649.5 522.5h0M649.5 576.5h0M649.5 537.5h0M650.5 538.5h0M650.5 540.5h0M650.5 523.5h0M650.5 572.5h0M650.5 552.5h0M650.5 532.5h0M650.5 526.5h0M651.5 528.5h0M651.5 533.5h0M651.5 549.5h0M651.5 527.5h0M651.5 513.5h0M651.5 539.5h0M651.5 500.5h0M652.5 545.5h0M652.5 518.5h0M652.5 544.5h0M652.5 540.5h0M652.5 579.5h0M652.5 550.5h0M652.5 541.5h0M653.5 529.5h0M653.5 532.5h0M653.5 514.5h0M653.5 544.5h0M653.5 537.5h0M653.5 572.5h0M653.5 544.5h0M654.5 511.5h0M654.5 517.5h0M654.5 536.5h0M654.5 539.5h0M654.5 541.5h0M654.5 525.5h0M654.5 558.5h0M655.5 527.5h0M655.5 578.5h0M655.5 525.5h0M655.5 520.5h0M655.5 545.5h0M655.5 526.5h0M655.5 541.5h0M656.5 517.5h0M656.5 510.5h0M656.5 568.5h0M656.5 574.5h0M656.5 537.5h0M656.5 545.5h0M656.5 532.5h0M657.5 570.5h0M657.5 571.5h0M657.5 501.5h0M657.5 548.5h0M657.5 501.5h0M657.5 532.5h0M657.5 503.5h0M658.5 529.5h0M658.5 505.5h0M658.5 543.5h0M658.5 526.5h0M658.5 529.5h0M658.5 506.5h0M658.5 548.5h0M659.5 531.5h0M659.5 553.5h0M659.5 555.5h0M659.5 505.5h0M659.5 506.5h0M659.5 508.5h0M659.5 510.5h0M660.5 537.5h0M660.5 503.5h0M660.5 542.5h0M660.5 542.5h0M660.5 549.5h0M660.5 547.5h0M660.5 520.5h0M661.5 530.5h0M661.5 535.5h0M661.5 535.5h0M661.5 522.5h0M661.5 560.5h0M661.5 537.5h0M662.5 525.5h0M662.5 480.5h0M662.5 526.5h0M662.5 514.5h0M662.5 555.5h0M662.5 537.5h0M662.5 540.5h0M663.5 543.5h0M663.5 518.5h0M663.5 524.5h0M663.5 534.5h0M663.5 504.5h0M663.5 520.5h0M663.5 524.5h0M664.5 513.5h0M664.5 522.5h0M664.5 542.5h0M664.5 551.5h0M664.5 552.5h0M664.5 511.5h0M664.5 548.5h0M665.5 508.5h0M665.5 507.5h0M665.5 508.5h0M665.5 555.5h0M665.5 544.5h0M665.5 523.5h0M665.5 496.5h0M666.5 547.5h0M666.5 504.5h0M666.5 513.5h0M666.5 507.5h0M666.5 507.5h0M666.5 529.5h0M666.5 526.5h0M667.5 528.5h0M667.5 527.5h0M667.5 556.5h0M667.5 535.5h0M667.5 521.5h0M667.5 524.5h0M667.5 547.5h0M668.5 527.5h0M668.5 518.5h0M668.5 526.5h0M668.5 498.5h0M668.5 480.5h0M668.5 509.5h0M668.5 531.5h0M669.5 506.5h0M669.5 566.5h0M669.5 546.5h0M669.5 510.5h0M669.5 532.5h0M669.5 544.5h0M669.5 536.5h0M670.5 515.5h0M670.5 532.5h0M670.5 537.5h0M670.5 527.5h0M670.5 534.5h0M670.5 497.5h0M670.5 520.5h0M671.5 493.5h0M671.5 540.5h0M671.5 552.5h0M671.5 514.5h0M671.5 497.5h0M671.5 541.5h0M671.5 534.5h0M672.5 543.5h0M672.5 534.5h0M672.5 500.5h0M672.5 504.5h0M672.5 520.5h0M672.5 539.5h0M672.5 534.5h0M673.5 504.5h0M673.5 559.5h0M673.5 541.5h0M673.5 566.5h0M673.5 532.5h0M673.5 537.5h0M673.5 559.5h0M674.5 508.5h0M674.5 567.5h0M674.5 517.5h0M674.5 528.5h0M674.5 495.5h0M674.5 526.5h0M674.5 507.5h0M675.5 527.5h0M675.5 527.5h0M675.5 520.5h0M675.5 542.5h0M675.5 549.5h0M675.5 539.5h0M675.5 494.5h0M676.5 531.5h0M676.5 497.5h0M676.5 534.5h0M676.5 557.5h0M676.5 518.5h0M676.5 558.5h0M676.5 566.5h0M677.5 555.5h0M677.5 505.5h0M677.5 533.5h0M677.5 524.5h0M677.5 503.5h0M677.5 510.5h0M677.5 517.5h0M678.5 545.5h0M678.5 533.5h0M678.5 502.5h0M678.5 508.5h0M678.5 536.5h0M678.5 541.5h0M679.5 546.5h0M679.5 485.5h0M679.5 511.5h0M679.5 542.5h0M679.5 542.5h0M679.5 507.5h0M679.5 518.5h0M680.5 519.5h0M680.5 525.5h0M680.5 525.5h0M680.5 540.5h0M680.5 535.5h0M680.5 491.5h0M680.5 554.5h0M681.5 517.5h0M681.5 552.5h0M681.5 533.5h0M681.5 525.5h0M681.5 519.5h0M681.5 530.5h0M681.5 540.5h0M682.5 525.5h0M682.5 485.5h0M682.5 521.5h0M682.5 514.5h0M682.5 504.5h0M682.5 583.5h0M682.5 526.5h0M683.5 575.5h0M683.5 526.5h0M683.5 501.5h0M683.5 531.5h0M683.5 523.5h0M683.5 541.5h0M683.5 536.5h0M684.5 517.5h0M684.5 524.5h0M684.5 536.5h0M684.5 478.5h0M684.5 551.5h0M684.5 504.5h0M684.5 581.5h0M685.5 523.5h0M685.5 558.5h0M685.5 513.5h0M685.5 508.5h0M685.5 557.5h0M685.5 540.5h0M685.5 505.5h0M686.5 571.5h0M686.5 568.5h0M686.5 530.5h0M686.5 506.5h0M686.5 549.5h0M686.5 507.5h0M686.5 528.5h0M687.5 542.5h0M687.5 530.5h0M687.5 546.5h0M687.5 530.5h0M687.5 537.5h0M687.5 521.5h0M687.5 534.5h0M688.5 538.5h0M688.5 519.5h0M688.5 503.5h0M688.5 529.5h0M688.5 515.5h0M688.5 528.5h0M688.5 566.5h0M689.5 520.5h0M689.5 538.5h0M689.5 548.5h0M689.5 491.5h0M689.5 543.5h0M689.5 537.5h0M689.5 517.5h0M690.5 548.5h0M690.5 533.5h0M690.5 483.5h0M690.5 493.5h0M690.5 511.5h0M690.5 553.5h0M690.5 564.5h0M691.5 539.5h0M691.5 512.5h0M691.5 535.5h0M691.5 505.5h0M691.5 510.5h0M691.5 517.5h0M691.5 522.5h0M692.5 511.5h0M692.5 527.5h0M692.5 565.5h0M692.5 489.5h0M692.5 516.5h0M692.5 524.5h0M692.5 528.5h0M693.5 518.5h0M693.5 521.5h0M693.5 560.5h0M693.5 464.5h0M693.5 501.5h0M693.5 490.5h0M693.5 528.5h0M694.5 530.5h0M694.5 517.5h0M694.5 560.5h0M694.5 503.5h0M694.5 492.5h0M694.5 531.5h0M695.5 500.5h0M695.5 518.5h0M695.5 511.5h0M695.5 529.5h0M695.5 532.5h0M695.5 532.5h0M695.5 554.5h0M696.5 541.5h0M696.5 547.5h0M696.5 533.5h0M696.5 496.5h0M696.5 500.5h0M696.5 510.5h0M696.5 536.5h0M697.5 530.5h0M697.5 506.5h0M697.5 551.5h0M697.5 529.5h0M697.5 488.5h0M697.5 538.5h0M697.5 506.5h0M698.5 530.5h0M698.5 509.5h0M698.5 527.5h0M698.5 482.5h0M698.5 533.5h0M698.5 553.5h0M698.5 560.5h0M699.5 538.5h0M699.5 523.5h0M699.5 524.5h0M699.5 543.5h0M699.5 549.5h0M699.5 535.5h0M699.5 527.5h0M700.5 555.5h0M700.5 526.5h0M700.5 510.5h0M700.5 531.5h0M700.5 526.5h0M700.5 511.5h0M700.5 503.5h0M701.5 513.5h0M701.5 554.5h0M701.5 566.5h0M701.5 529.5h0M701.5 511.5h0M701.5 543.5h0M701.5 536.5h0M702.5 514.5h0M702.5 524.5h0M702.5 480.5h0M702.5 533.5h0M702.5 512.5h0M702.5 510.5h0M702.5 502.5h0M703.5 536.5h0M703.5 490.5h0M703.5 500.5h0M703.5 500.5h0M703.5 539.5h0M703.5 529.5h0M703.5 536.5h0M704.5 518.5h0M704.5 547.5h0M704.5 562.5h0M704.5 490.5h0M704.5 544.5h0M704.5 538.5h0M704.5 515.5h0M705.5 560.5h0M705.5 502.5h0M705.5 511.5h0M705.5 517.5h0M705.5 574.5h0M705.5 513.5h0M705.5 541.5h0M706.5 482.5h0M706.5 534.5h0M706.5 539.5h0M706.5 525.5h0M706.5 542.5h0M706.5 494.5h0M706.5 509.5h0M707.5 535.5h0M707.5 553.5h0M707.5 529.5h0M707.5 530.5h0M707.5 526.5h0M707.5 524.5h0M707.5 523.5h0M708.5 556.5h0M708.5 530.5h0M708.5 538.5h0M708.5 515.5h0M708.5 520.5h0M708.5 500.5h0M708.5 533.5h0M709.5 543.5h0M709.5 529.5h0M709.5 560.5h0M709.5 509.5h0M709.5 525.5h0M709.5 482.5h0M709.5 536.5h0M710.5 531.5h0M710.5 532.5h0M710.5 538.5h0M710.5 490.5h0M710.5 547.5h0M710.5 557.5h0M711.5 528.5h0M711.5 522.5h0M711.5 487.5h0M711.5 519.5h0M711.5 549.5h0M711.5 516.5h0M711.5 550.5h0M712.5 540.5h0M712.5 483.5h0M712.5 545.5h0M712.5 525.5h0M712.5 507.5h0M712.5 527.5h0M712.5 501.5h0M713.5 523.5h0M713.5 544.5h0M713.5 492.5h0M713.5 550.5h0M713.5 518.5h0M713.5 550.5h0M713.5 535.5h0M714.5 559.5h0M714.5 546.5h0M714.5 506.5h0M714.5 548.5h0M714.5 506.5h0M714.5 535.5h0M714.5 554.5h0M715.5 515.5h0M715.5 532.5h0M715.5 526.5h0M715.5 535.5h0M715.5 476.5h0M715.5 504.5h0M715.5 531.5h0M716.5 548.5h0M716.5 532.5h0M716.5 524.5h0M716.5 514.5h0M716.5 488.5h0M716.5 507.5h0M716.5 511.5h0M717.5 545.5h0M717.5 530.5h0M717.5 554.5h0M717.5 537.5h0M717.5 528.5h0M717.5 541.5h0M717.5 505.5h0M718.5 539.5h0M718.5 513.5h0M718.5 561.5h0M718.5 515.5h0M718.5 523.5h0M718.5 531.5h0M718.5 529.5h0M719.5 560.5h0M719.5 536.5h0M719.5 511.5h0M719.5 526.5h0M719.5 500.5h0M719.5 499.5h0M719.5 498.5h0M720.5 539.5h0M720.5 538.5h0M720.5 502.5h0M720.5 535.5h0M720.5 530.5h0M720.5 555.5h0M720.5 515.5h0M721.5 517.5h0M721.5 559.5h0M721.5 531.5h0M721.5 544.5h0M721.5 532.5h0M721.5 561.5h0M721.5 528.5h0M722.5 535.5h0M722.5 500.5h0M722.5 544.5h0M722.5 490.5h0M722.5 524.5h0M722.5 523.5h0M722.5 533.5h0M723.5 526.5h0M723.5 540.5h0M723.5 532.5h0M723.5 509.5h0M723.5 524.5h0M723.5 562.5h0M723.5 542.5h0M724.5 522.5h0M724.5 544.5h0M724.5 537.5h0M724.5 554.5h0M724.5 546.5h0M724.5 559.5h0M724.5 533.5h0M725.5 574.5h0M725.5 525.5h0M725.5 520.5h0M725.5 515.5h0M725.5 519.5h0M725.5 499.5h0M725.5 546.5h0M726.5 550.5h0M726.5 488.5h0M726.5 529.5h0M726.5 498.5h0M726.5 475.5h0M726.5 501.5h0M727.5 551.5h0M727.5 519.5h0M727.5 553.5h0M727.5 508.5h0M727.5 532.5h0M727.5 486.5h0M727.5 533.5h0M728.5 551.5h0M728.5 513.5h0M728.5 498.5h0M728.5 508.5h0M728.5 539.5h0M728.5 526.5h0M728.5 526.5h0M729.5 541.5h0M729.5 548.5h0M729.5 538.5h0M729.5 509.5h0M729.5 552.5h0M729.5 523.5h0M729.5 549.5h0M730.5 517.5h0M730.5 511.5h0M730.5 497.5h0M730.5 483.5h0M730.5 530.5h0M730.5 532.5h0M730.5 526.5h0M731.5 511.5h0M731.5 519.5h0M731.5 525.5h0M731.5 556.5h0M731.5 521.5h0M731.5 523.5h0M731.5 517.5h0M732.5 516.5h0M732.5 533.5h0M732.5 512.5h0M732.5 524.5h0M732.5 539.5h0M732.5 496.5h0M732.5 489.5h0M733.5 533.5h0M733.5 555.5h0M733.5 506.5h0M733.5 529.5h0M733.5 517.5h0M733.5 528.5h0M733.5 510.5h0M734.5 557.5h0M734.5 541.5h0M734.5 526.5h0M734.5 517.5h0M734.5 545.5h0M734.5 539.5h0M734.5 555.5h0M735.5 535.5h0M735.5 507.5h0M735.5 502.5h0M735.5 540.5h0M735.5 521.5h0M735.5 508.5h0M735.5 565.5h0M736.5 515.5h0M736.5 557.5h0M736.5 489.5h0M736.5 507.5h0M736.5 549.5h0M736.5 514.5h0M736.5 543.5h0M737.5 525.5h0M737.5 538.5h0M737.5 530.5h0M737.5 517.5h0M737.5 535.5h0M737.5 518.5h0M737.5 540.5h0M738.5 554.5h0M738.5 519.5h0M738.5 525.5h0M738.5 540.5h0M738.5 531.5h0M738.5 539.5h0M738.5 513.5h0M739.5 488.5h0M739.5 528.5h0M739.5 502.5h0M739.5 529.5h0M739.5 538.5h0M739.5 530.5h0M739.5 532.5h0M740.5 524.5h0M740.5 521.5h0M740.5 546.5h0M740.5 480.5h0M740.5 524.5h0M740.5 495.5h0M740.5 484.5h0M741.5 515.5h0M741.5 513.5h0M741.5 517.5h0M741.5 519.5h0M741.5 508.5h0M741.5 515.5h0M741.5 525.5h0M742.5 549.5h0M742.5 533.5h0M742.5 518.5h0M742.5 569.5h0M742.5 532.5h0M742.5 532.5h0M742.5 542.5h0M743.5 504.5h0M743.5 554.5h0M743.5 556.5h0M743.5 509.5h0M743.5 516.5h0M743.5 478.5h0M744.5 543.5h0M744.5 508.5h0M744.5 480.5h0M744.5 515.5h0M744.5 554.5h0M744.5 507.5h0M744.5 503.5h0M745.5 530.5h0M745.5 524.5h0M745.5 515.5h0M745.5 492.5h0M745.5 529.5h0M745.5 513.5h0M745.5 525.5h0M746.5 541.5h0M746.5 534.5h0M746.5 527.5h0M746.5 549.5h0M746.5 511.5h0M746.5 569.5h0M746.5 536.5h0M747.5 497.5h0M747.5 537.5h0M747.5 500.5h0M747.5 539.5h0M747.5 506.5h0M747.5 510.5h0M747.5 573.5h0M748.5 525.5h0M748.5 539.5h0M748.5 538.5h0M748.5 506.5h0M748.5 515.5h0M748.5 525.5h0M748.5 519.5h0M749.5 508.5h0M749.5 521.5h0M749.5 557.5h0M749.5 516.5h0M749.5 511.5h0M749.5 537.5h0M749.5 521.5h0M750.5 515.5h0M750.5 525.5h0M750.5 510.5h0M750.5 510.5h0M750.5 543.5h0M750.5 547.5h0M750.5 526.5h0M751.5 507.5h0M751.5 514.5h0M751.5 499.5h0M751.5 526.5h0M751.5 510.5h0M751.5 543.5h0M751.5 503.5h0M752.5 516.5h0M752.5 532.5h0M752.5 481.5h0M752.5 552.5h0M752.5 558.5h0M752.5 540.5h0M752.5 531.5h0M753.5 525.5h0M753.5 524.5h0M753.5 521.5h0M753.5 534.5h0M753.5 522.5h0M753.5 527.5h0M753.5 515.5h0M754.5 519.5h0M754.5 522.5h0M754.5 508.5h0M754.5 545.5h0M754.5 530.5h0M754.5 514.5h0M754.5 517.5h0M755.5 515.5h0M755.5 486.5h0M755.5 498.5h0M755.5 524.5h0M755.5 532.5h0M755.5 537.5h0M755.5 546.5h0M756.5 509.5h0M756.5 499.5h0M756.5 552.5h0M756.5 532.5h0M756.5 529.5h0M756.5 521.5h0M756.5 517.5h0M757.5 538.5h0M757.5 532.5h0M757.5 502.5h0M757.5 526.5h0M757.5 473.5h0M757.5 517.5h0M757.5 538.5h0M758.5 538.5h0M758.5 543.5h0M758.5 545.5h0M758.5 522.5h0M758.5 503.5h0M758.5 549.5h0M758.5 552.5h0M759.5 536.5h0M759.5 499.5h0M759.5 518.5h0M759.5 501.5h0M759.5 514.5h0M759.5 557.5h0M760.5 532.5h0M760.5 523.5h0M760.5 519.5h0M760.5 505.5h0M760.5 498.5h0M760.5 499.5h0M760.5 531.5h0M761.5 494.5h0M761.5 537.5h0M761.5 508.5h0M761.5 492.5h0M761.5 524.5h0M761.5 500.5h0M761.5 498.5h0M762.5 555.5h0M762.5 513.5h0M762.5 508.5h0M762.5 552.5h0M762.5 494.5h0M762.5 506.5h0M762.5 531.5h0M763.5 561.5h0M763.5 506.5h0M763.5 504.5h0M763.5 501.5h0M763.5 544.5h0M763.5 515.5h0M763.5 541.5h0M764.5 527.5h0M764.5 499.5h0M764.5 547.5h0M764.5 542.5h0M764.5 499.5h0M764.5 525.5h0M764.5 491.5h0M765.5 489.5h0M765.5 504.5h0M765.5 536.5h0M765.5 532.5h0M765.5 478.5h0M765.5 482.5h0M765.5 509.5h0M766.5 510.5h0M766.5 518.5h0M766.5 533.5h0M766.5 558.5h0M766.5 484.5h0M766.5 552.5h0M766.5 517.5h0M767.5 511.5h0M767.5 520.5h0M767.5 532.5h0M767.5 476.5h0M767.5 518.5h0M767.5 510.5h0M767.5 549.5h0M768.5 524.5h0M768.5 499.5h0M768.5 526.5h0M768.5 490.5h0M768.5 503.5h0M768.5 508.5h0M768.5 512.5h0M769.5 476.5h0M769.5 503.5h0M769.5 523.5h0M769.5 479.5h0M769.5 535.5h0M769.5 514.5h0M769.5 519.5h0M770.5 472.5h0M770.5 564.5h0M770.5 503.5h0M770.5 528.5h0M770.5 481.5h0M770.5 487.5h0M770.5 481.5h0M771.5 504.5h0M771.5 509.5h0M771.5 497.5h0M771.5 497.5h0M771.5 508.5h0M771.5 555.5h0M771.5 532.5h0M772.5 477.5h0M772.5 502.5h0M772.5 493.5h0M772.5 512.5h0M772.5 478.5h0M772.5 502.5h0M772.5 478.5h0M773.5 577.5h0M773.5 548.5h0M773.5 572.5h0M833.5 515.5h0M833.5 562.5h0M833.5 525.5h0M834.5 529.5h0M834.5 536.5h0M834.5 524.5h0M834.5 520.5h0M834.5 545.5h0M834.5 527.5h0M834.5 519.5h0M835.5 547.5h0M835.5 542.5h0M835.5 482.5h0M835.5 538.5h0M835.5 503.5h0M835.5 561.5h0M835.5 490.5h0M836.5 525.5h0M836.5 513.5h0M836.5 563.5h0M836.5 506.5h0M836.5 554.5h0M836.5 502.5h0M836.5 522.5h0M837.5 516.5h0M837.5 536.5h0M837.5 500.5h0M837.5 519.5h0M837.5 525.5h0M837.5 563.5h0M837.5 546.5h0M838.5 511.5h0M838.5 517.5h0M838.5 552.5h0M838.5 530.5h0M838.5 554.5h0M838.5 532.5h0M838.5 531.5h0M839.5 508.5h0M839.5 511.5h0M839.5 531.5h0M839.5 518.5h0M839.5 529.5h0M839.5 501.5h0M839.5 482.5h0M840.5 555.5h0M840.5 518.5h0M840.5 490.5h0M840.5 515.5h0M840.5 504.5h0M840.5 509.5h0M841.5 489.5h0M841.5 543.5h0M841.5 508.5h0M841.5 502.5h0M841.5 529.5h0M841.5 559.5h0M841.5 531.5h0M842.5 538.5h0M842.5 548.5h0M842.5 560.5h0M842.5 550.5h0M842.5 572.5h0M842.5 513.5h0M842.5 538.5h0M843.5 509.5h0M843.5 546.5h0M843.5 509.5h0M843.5 555.5h0M843.5 567.5h0M843.5 543.5h0M843.5 521.5h0M844.5 540.5h0M844.5 521.5h0M844.5 496.5h0M844.5 527.5h0M844.5 564.5h0M844.5 512.5h0M844.5 526.5h0M845.5 529.5h0M845.5 530.5h0M845.5 549.5h0M845.5 529.5h0M845.5 523.5h0M845.5 527.5h0M845.5 502.5h0M846.5 509.5h0M846.5 574.5h0M846.5 510.5h0M846.5 495.5h0M846.5 546.5h0M846.5 546.5h0M846.5 526.5h0M847.5 514.5h0M847.5 536.5h0M847.5 564.5h0M847.5 506.5h0M847.5 510.5h0M847.5 510.5h0M847.5 517.5h0M848.5 469.5h0M848.5 505.5h0M848.5 526.5h0M848.5 531.5h0M848.5 540.5h0M848.5 504.5h0M848.5 483.5h0M849.5 541.5h0M849.5 481.5h0M849.5 513.5h0M849.5 527.5h0M849.5 505.5h0M849.5 475.5h0M849.5 526.5h0M850.5 538.5h0M850.5 517.5h0M850.5 535.5h0M850.5 518.5h0M850.5 537.5h0M850.5 534.5h0M850.5 501.5h0M851.5 527.5h0M851.5 553.5h0M851.5 522.5h0M851.5 494.5h0M851.5 524.5h0M851.5 536.5h0M851.5 527.5h0M852.5 534.5h0M852.5 522.5h0M852.5 539.5h0M852.5 545.5h0M852.5 524.5h0M852.5 529.5h0M852.5 499.5h0M853.5 519.5h0M853.5 557.5h0M853.5 495.5h0M853.5 495.5h0M853.5 517.5h0M853.5 512.5h0M853.5 490.5h0M854.5 544.5h0M854.5 506.5h0M854.5 567.5h0M854.5 560.5h0M854.5 513.5h0M854.5 484.5h0M854.5 494.5h0M855.5 540.5h0M855.5 551.5h0M855.5 517.5h0M855.5 538.5h0M855.5 540.5h0M855.5 545.5h0M855.5 543.5h0M856.5 539.5h0M856.5 541.5h0M856.5 520.5h0M856.5 498.5h0M856.5 545.5h0M856.5 540.5h0M857.5 512.5h0M857.5 510.5h0M857.5 562.5h0M857.5 539.5h0M857.5 506.5h0M857.5 505.5h0M857.5 551.5h0M858.5 558.5h0M858.5 507.5h0M858.5 518.5h0M858.5 494.5h0M858.5 542.5h0M858.5 531.5h0M858.5 518.5h0M859.5 535.5h0M859.5 477.5h0M859.5 521.5h0M859.5 515.5h0M859.5 483.5h0M859.5 511.5h0M859.5 542.5h0M860.5 489.5h0M860.5 542.5h0M860.5 541.5h0M860.5 527.5h0M860.5 511.5h0M860.5 532.5h0M860.5 509.5h0M861.5 509.5h0M861.5 488.5h0M861.5 484.5h0M861.5 535.5h0M861.5 515.5h0M861.5 557.5h0M861.5 549.5h0M862.5 525.5h0M862.5 518.5h0M862.5 509.5h0M862.5 503.5h0M862.5 530.5h0M862.5 505.5h0M862.5 507.5h0M863.5 544.5h0M863.5 534.5h0M863.5 506.5h0M863.5 525.5h0M863.5 523.5h0M863.5 501.5h0M863.5 474.5h0M864.5 523.5h0M864.5 552.5h0M864.5 530.5h0M864.5 519.5h0M864.5 491.5h0M864.5 531.5h0M864.5 568.5h0M865.5 508.5h0M865.5 561.5h0M865.5 513.5h0M865.5 521.5h0M865.5 518.5h0M865.5 530.5h0M865.5 519.5h0M866.5 515.5h0M866.5 523.5h0M866.5 517.5h0M866.5 517.5h0M866.5 525.5h0M866.5 549.5h0M866.5 507.5h0M867.5 520.5h0M867.5 521.5h0M867.5 497.5h0M867.5 506.5h0M867.5 554.5h0M867.5 548.5h0M867.5 497.5h0M868.5 524.5h0M868.5 524.5h0M868.5 528.5h0M868.5 527.5h0M868.5 498.5h0M868.5 496.5h0M868.5 512.5h0M869.5 490.5h0M869.5 518.5h0M869.5 562.5h0M869.5 496.5h0M869.5 490.5h0M869.5 497.5h0M869.5 462.5h0M870.5 488.5h0M870.5 528.5h0M870.5 512.5h0M870.5 526.5h0M870.5 546.5h0M870.5 534.5h0M870.5 547.5h0M871.5 544.5h0M871.5 557.5h0M871.5 520.5h0M871.5 527.5h0M871.5 470.5h0M871.5 518.5h0M871.5 535.5h0M872.5 493.5h0M872.5 489.5h0M872.5 533.5h0M872.5 489.5h0M872.5 514.5h0M872.5 511.5h0M872.5 515.5h0M873.5 506.5h0M873.5 531.5h0M873.5 500.5h0M873.5 516.5h0M873.5 510.5h0M873.5 506.5h0M874.5 526.5h0M874.5 537.5h0M874.5 511.5h0M874.5 497.5h0M874.5 537.5h0M874.5 507.5h0M874.5 529.5h0M875.5 511.5h0M875.5 522.5h0M875.5 494.5h0M875.5 531.5h0M875.5 522.5h0M875.5 546.5h0M875.5 544.5h0M876.5 524.5h0M876.5 528.5h0M876.5 515.5h0M876.5 526.5h0M876.5 514.5h0M876.5 509.5h0M876.5 494.5h0M877.5 531.5h0M877.5 506.5h0M877.5 513.5h0M877.5 519.5h0M877.5 548.5h0M877.5 516.5h0M877.5 506.5h0M878.5 541.5h0M878.5 515.5h0M878.5 545.5h0M878.5 480.5h0M878.5 531.5h0M878.5 531.5h0M878.5 516.5h0M879.5 519.5h0M879.5 562.5h0M879.5 498.5h0M879.5 475.5h0M879.5 480.5h0M879.5 525.5h0M879.5 513.5h0M880.5 525.5h0M880.5 538.5h0M880.5 498.5h0M880.5 536.5h0M880.5 544.5h0M880.5 497.5h0M880.5 504.5h0M881.5 539.5h0M881.5 537.5h0M881.5 518.5h0M881.5 522.5h0M881.5 487.5h0M881.5 517.5h0M881.5 527.5h0M882.5 532.5h0M882.5 541.5h0M882.5 558.5h0M882.5 549.5h0M882.5 512.5h0M882.5 536.5h0M882.5 507.5h0M883.5 523.5h0M883.5 533.5h0M883.5 515.5h0M883.5 531.5h0M883.5 513.5h0M883.5 489.5h0M883.5 510.5h0M884.5 512.5h0M884.5 476.5h0M884.5 490.5h0M884.5 514.5h0M884.5 513.5h0M884.5 527.5h0M884.5 493.5h0M885.5 536.5h0M885.5 541.5h0M885.5 521.5h0M885.5 514.5h0M885.5 512.5h0M885.5 490.5h0M885.5 516.5h0M886.5 495.5h0M886.5 534.5h0M886.5 481.5h0M886.5 479.5h0M886.5 539.5h0M886.5 525.5h0M886.5 524.5h0M887.5 549.5h0M887.5 488.5h0M887.5 556.5h0M887.5 536.5h0M887.5 532.5h0M887.5 508.5h0M887.5 494.5h0M888.5 547.5h0M888.5 536.5h0M888.5 505.5h0M888.5 485.5h0M888.5 489.5h0M888.5 544.5h0M888.5 499.5h0M889.5 518.5h0M889.5 504.5h0M889.5 495.5h0M889.5 534.5h0M889.5 511.5h0M889.5 544.5h0M890.5 524.5h0M890.5 531.5h0M890.5 506.5h0M890.5 473.5h0M890.5 505.5h0M890.5 520.5h0M890.5 537.5h0M891.5 475.5h0M891.5 507.5h0M891.5 512.5h0M891.5 476.5h0M891.5 495.5h0M891.5 492.5h0M891.5 500.5h0M892.5 524.5h0M892.5 496.5h0M892.5 492.5h0M892.5 478.5h0M892.5 482.5h0M892.5 533.5h0M892.5 512.5h0M893.5 526.5h0M893.5 549.5h0M893.5 499.5h0M893.5 502.5h0M893.5 543.5h0M893.5 547.5h0M893.5 559.5h0M894.5 569.5h0M894.5 510.5h0M894.5 492.5h0M894.5 526.5h0M894.5 516.5h0M894.5 558.5h0M894.5 519.5h0M895.5 520.5h0M895.5 480.5h0M895.5 518.5h0M895.5 523.5h0M895.5 536.5h0M895.5 512.5h0M895.5 521.5h0M896.5 548.5h0M896.5 522.5h0M896.5 520.5h0M896.5 483.5h0M896.5 515.5h0M896.5 516.5h0M896.5 509.5h0M897.5 528.5h0M897.5 492.5h0M897.5 543.5h0M897.5 513.5h0M897.5 509.5h0M897.5 495.5h0M897.5 549.5h0M898.5 489.5h0M898.5 517.5h0M898.5 565.5h0M898.5 557.5h0M898.5 489.5h0M898.5 489.5h0M898.5 464.5h0M899.5 509.5h0M899.5 538.5h0M899.5 544.5h0M899.5 538.5h0M899.5 519.5h0M899.5 556.5h0M899.5 508.5h0M900.5 523.5h0M900.5 542.5h0M900.5 519.5h0M900.5 528.5h0M900.5 536.5h0M900.5 494.5h0M900.5 473.5h0M901.5 492.5h0M901.5 518.5h0M901.5 513.5h0M901.5 564.5h0M901.5 502.5h0M901.5 532.5h0M901.5 543.5h0M902.5 521.5h0M902.5 505.5h0M902.5 497.5h0M902.5 522.5h0M902.5 532.5h0M902.5 515.5h0M902.5 554.5h0M903.5 519.5h0M903.5 508.5h0M903.5 503.5h0M903.5 491.5h0M903.5 539.5h0M903.5 481.5h0M903.5 523.5h0M904.5 527.5h0M904.5 539.5h0M904.5 542.5h0M904.5 515.5h0M904.5 520.5h0M904.5 538.5h0M904.5 542.5h0M905.5 572.5h0M905.5 551.5h0M905.5 540.5h0M905.5 502.5h0M905.5 504.5h0M905.5 481.5h0M906.5 515.5h0M906.5 504.5h0M906.5 543.5h0M906.5 528.5h0M906.5 543.5h0M906.5 498.5h0M906.5 501.5h0M907.5 525.5h0M907.5 503.5h0M907.5 511.5h0M907.5 514.5h0M907.5 547.5h0M907.5 500.5h0M907.5 529.5h0M908.5 521.5h0M908.5 501.5h0M908.5 536.5h0M908.5 520.5h0M908.5 520.5h0M908.5 507.5h0M908.5 510.5h0M909.5 497.5h0M909.5 568.5h0M909.5 500.5h0M909.5 535.5h0M909.5 497.5h0M909.5 511.5h0M909.5 511.5h0M910.5 479.5h0M910.5 557.5h0M910.5 516.5h0M910.5 511.5h0M910.5 522.5h0M910.5 495.5h0M910.5 508.5h0M911.5 541.5h0M911.5 554.5h0M911.5 544.5h0M911.5 544.5h0M911.5 524.5h0M911.5 485.5h0M911.5 532.5h0M912.5 520.5h0M912.5 567.5h0M912.5 524.5h0M912.5 526.5h0M912.5 504.5h0M912.5 551.5h0M912.5 507.5h0M913.5 559.5h0M913.5 491.5h0M913.5 517.5h0M913.5 559.5h0M913.5 529.5h0M913.5 520.5h0M913.5 525.5h0M914.5 538.5h0M914.5 515.5h0M914.5 498.5h0M914.5 490.5h0M914.5 541.5h0M914.5 511.5h0M914.5 540.5h0M915.5 534.5h0M915.5 540.5h0M915.5 491.5h0M915.5 498.5h0M915.5 564.5h0M915.5 550.5h0M915.5 529.5h0M916.5 531.5h0M916.5 565.5h0M916.5 563.5h0M916.5 567.5h0M916.5 536.5h0M916.5 522.5h0M916.5 538.5h0M917.5 522.5h0M917.5 500.5h0M917.5 532.5h0M917.5 516.5h0M917.5 520.5h0M917.5 505.5h0M917.5 491.5h0M918.5 513.5h0M918.5 523.5h0M918.5 535.5h0M918.5 520.5h0M918.5 555.5h0M918.5 500.5h0M918.5 495.5h0M919.5 522.5h0M919.5 486.5h0M919.5 562.5h0M919.5 526.5h0M919.5 525.5h0M919.5 553.5h0M919.5 519.5h0M920.5 528.5h0M920.5 512.5h0M920.5 516.5h0M920.5 505.5h0M920.5 531.5h0M920.5 541.5h0M920.5 527.5h0M921.5 517.5h0M921.5 499.5h0M921.5 529.5h0M921.5 518.5h0M921.5 528.5h0M921.5 526.5h0M922.5 577.5h0M922.5 502.5h0M922.5 550.5h0M922.5 528.5h0M922.5 485.5h0M922.5 518.5h0M922.5 547.5h0M923.5 512.5h0M923.5 548.5h0M923.5 523.5h0M923.5 551.5h0M923.5 511.5h0M923.5 519.5h0M923.5 482.5h0M924.5 520.5h0M924.5 556.5h0M924.5 560.5h0M924.5 569.5h0M924.5 534.5h0M924.5 525.5h0M924.5 510.5h0M925.5 545.5h0M925.5 521.5h0M925.5 533.5h0M925.5 490.5h0M925.5 534.5h0M925.5 507.5h0M925.5 543.5h0M926.5 505.5h0M926.5 535.5h0M926.5 505.5h0M926.5 501.5h0M926.5 556.5h0M926.5 522.5h0M926.5 548.5h0M927.5 563.5h0M927.5 535.5h0M927.5 527.5h0M927.5 523.5h0M927.5 506.5h0M927.5 542.5h0M927.5 539.5h0M928.5 539.5h0M928.5 535.5h0M928.5 514.5h0M928.5 490.5h0M928.5 543.5h0M928.5 548.5h0M928.5 557.5h0M929.5 516.5h0M929.5 505.5h0M929.5 544.5h0M929.5 542.5h0M929.5 520.5h0M929.5 518.5h0M929.5 514.5h0M930.5 485.5h0M930.5 499.5h0M930.5 528.5h0M930.5 533.5h0M930.5 530.5h0M930.5 536.5h0M930.5 534.5h0M931.5 521.5h0M931.5 545.5h0M931.5 532.5h0M931.5 534.5h0M931.5 543.5h0M931.5 552.5h0M931.5 529.5h0M932.5 469.5h0M932.5 541.5h0M932.5 508.5h0M932.5 512.5h0M932.5 519.5h0M932.5 512.5h0M932.5 534.5h0M933.5 525.5h0M933.5 540.5h0M933.5 545.5h0M933.5 541.5h0M933.5 510.5h0M933.5 515.5h0M933.5 563.5h0M934.5 566.5h0M934.5 516.5h0M934.5 497.5h0M934.5 533.5h0M934.5 541.5h0M934.5 501.5h0M934.5 506.5h0M935.5 524.5h0M935.5 535.5h0M935.5 535.5h0M935.5 547.5h0M935.5 529.5h0M935.5 557.5h0M935.5 531.5h0M936.5 502.5h0M936.5 493.5h0M936.5 542.5h0M936.5 521.5h0M936.5 497.5h0M936.5 517.5h0M936.5 514.5h0M937.5 542.5h0M937.5 512.5h0M937.5 564.5h0M937.5 522.5h0M937.5 560.5h0M937.5 515.5h0M938.5 523.5h0M938.5 508.5h0M938.5 547.5h0M938.5 532.5h0M938.5 536.5h0M938.5 520.5h0M938.5 533.5h0M939.5 521.5h0M939.5 544.5h0M939.5 514.5h0M939.5 497.5h0M939.5 487.5h0M939.5 502.5h0M939.5 525.5h0M940.5 494.5h0M940.5 508.5h0M940.5 507.5h0M940.5 535.5h0M940.5 541.5h0M940.5 551.5h0M940.5 566.5h0M941.5 531.5h0M941.5 536.5h0M941.5 513.5h0M941.5 559.5h0M941.5 542.5h0M941.5 539.5h0M941.5 557.5h0M942.5 536.5h0M942.5 528.5h0M942.5 513.5h0M942.5 512.5h0M942.5 533.5h0M942.5 501.5h0M942.5 519.5h0M943.5 506.5h0M943.5 545.5h0M943.5 534.5h0M943.5 517.5h0M943.5 534.5h0M943.5 503.5h0M943.5 515.5h0M944.5 518.5h0M944.5 509.5h0M944.5 518.5h0M944.5 510.5h0M944.5 534.5h0M944.5 540.5h0M944.5 548.5h0M945.5 514.5h0M945.5 522.5h0M945.5 539.5h0M945.5 504.5h0M945.5 505.5h0M945.5 555.5h0M945.5 545.5h0M946.5 515.5h0M946.5 536.5h0M946.5 546.5h0M946.5 535.5h0M946.5 553.5h0M946.5 539.5h0M946.5 496.5h0M947.5 544.5h0M947.5 560.5h0M947.5 541.5h0M947.5 520.5h0M947.5 532.5h0M947.5 543.5h0M947.5 549.5h0M948.5 536.5h0M948.5 529.5h0M948.5 504.5h0M948.5 544.5h0M948.5 553.5h0M948.5 535.5h0M948.5 508.5h0M949.5 538.5h0M949.5 536.5h0M949.5 533.5h0M949.5 550.5h0M949.5 462.5h0M949.5 520.5h0M949.5 486.5h0M950.5 537.5h0M950.5 532.5h0M950.5 562.5h0M950.5 505.5h0M950.5 538.5h0M950.5 530.5h0M950.5 541.5h0M951.5 569.5h0M951.5 519.5h0M951.5 519.5h0M951.5 510.5h0M951.5 517.5h0M951.5 528.5h0M951.5 484.5h0M952.5 529.5h0M952.5 516.5h0M952.5 522.5h0M952.5 509.5h0M952.5 477.5h0M952.5 519.5h0M952.5 523.5h0M953.5 527.5h0M953.5 505.5h0M953.5 541.5h0M953.5 543.5h0M953.5 512.5h0M953.5 526.5h0M953.5 492.5h0M954.5 507.5h0M954.5 503.5h0M954.5 522.5h0M954.5 563.5h0M954.5 519.5h0M954.5 500.5h0M955.5 515.5h0M955.5 552.5h0M955.5 540.5h0M955.5 522.5h0M955.5 547.5h0M955.5 508.5h0M955.5 481.5h0M956.5 531.5h0M956.5 508.5h0M956.5 517.5h0M956.5 514.5h0M956.5 485.5h0M956.5 503.5h0M956.5 558.5h0M957.5 517.5h0M957.5 565.5h0M957.5 533.5h0M957.5 510.5h0M957.5 493.5h0M957.5 523.5h0M957.5 515.5h0M958.5 549.5h0M958.5 525.5h0M958.5 538.5h0M958.5 509.5h0M958.5 501.5h0M958.5 518.5h0M958.5 570.5h0M959.5 541.5h0M959.5 518.5h0M959.5 544.5h0M959.5 504.5h0M959.5 527.5h0M959.5 504.5h0M959.5 527.5h0M960.5 532.5h0M960.5 519.5h0M960.5 513.5h0M960.5 536.5h0M960.5 540.5h0M960.5 512.5h0M960.5 524.5h0M961.5 529.5h0M961.5 533.5h0M961.5 521.5h0M961.5 532.5h0M961.5 497.5h0M961.5 516.5h0M961.5 547.5h0M962.5 531.5h0M962.5 510.5h0M962.5 521.5h0M962.5 523.5h0M962.5 545.5h0M962.5 541.5h0M962.5 557.5h0M963.5 530.5h0M963.5 477.5h0M963.5 571.5h0M963.5 501.5h0M963.5 518.5h0M963.5 511.5h0M963.5 545.5h0M964.5 511.5h0M964.5 517.5h0M964.5 508.5h0M964.5 524.5h0M964.5 543.5h0M964.5 506.5h0M964.5 491.5h0M965.5 524.5h0M965.5 540.5h0M965.5 551.5h0M965.5 523.5h0M965.5 542.5h0M965.5 518.5h0M965.5 490.5h0M966.5 521.5h0M966.5 491.5h0M966.5 529.5h0M966.5 493.5h0M966.5 539.5h0M966.5 535.5h0M966.5 560.5h0M967.5 552.5h0M967.5 487.5h0M967.5 516.5h0M967.5 536.5h0M967.5 521.5h0M967.5 492.5h0M967.5 553.5h0M968.5 526.5h0M968.5 502.5h0M968.5 534.5h0M968.5 513.5h0M968.5 518.5h0M968.5 527.5h0M968.5 515.5h0M969.5 558.5h0M969.5 528.5h0M969.5 540.5h0M969.5 556.5h0M969.5 548.5h0M969.5 511.5h0M969.5 480.5h0M970.5 556.5h0M970.5 552.5h0M970.5 539.5h0M970.5 521.5h0M970.5 485.5h0M970.5 530.5h0M971.5 546.5h0M971.5 500.5h0M971.5 543.5h0M971.5 493.5h0M971.5 516.5h0M971.5 552.5h0M971.5 554.5h0M972.5 526.5h0M972.5 537.5h0M972.5 512.5h0M972.5 543.5h0M972.5 571.5h0M972.5 522.5h0M972.5 540.5h0M973.5 502.5h0M973.5 500.5h0M973.5 489.5h0M973.5 524.5h0M973.5 534.5h0M973.5 536.5h0M973.5 488.5h0M974.5 506.5h0M974.5 526.5h0M974.5 497.5h0M974.5 542.5h0M974.5 523.5h0M974.5 509.5h0M974.5 500.5h0M975.5 531.5h0M975.5 509.5h0M975.5 518.5h0M975.5 495.5h0M975.5 503.5h0M975.5 557.5h0M975.5 516.5h0M976.5 548.5h0M976.5 505.5h0M976.5 521.5h0M976.5 499.5h0M976.5 519.5h0M976.5 522.5h0M976.5 537.5h0M977.5 544.5h0M977.5 536.5h0M977.5 506.5h0M977.5 554.5h0M977.5 496.5h0M977.5 537.5h0M977.5 537.5h0M978.5 523.5h0M978.5 518.5h0M978.5 550.5h0M978.5 518.5h0M978.5 562.5h0M978.5 540.5h0M978.5 548.5h0M979.5 532.5h0M979.5 519.5h0M979.5 540.5h0M979.5 539.5h0M979.5 539.5h0M979.5 497.5h0M979.5 492.5h0M980.5 540.5h0M980.5 554.5h0M980.5 547.5h0M980.5 538.5h0M980.5 512.5h0M980.5 513.5h0M980.5 503.5h0M981.5 472.5h0M981.5 517.5h0M981.5 507.5h0M981.5 515.5h0M981.5 514.5h0M981.5 540.5h0M981.5 511.5h0M982.5 495.5h0M982.5 511.5h0M982.5 522.5h0M982.5 500.5h0M982.5 553.5h0M982.5 533.5h0M982.5 540.5h0M983.5 526.5h0M983.5 513.5h0M983.5 478.5h0M983.5 503.5h0M983.5 526.5h0M983.5 497.5h0M983.5 514.5h0M984.5 524.5h0M984.5 494.5h0M984.5 503.5h0M984.5 511.5h0M984.5 547.5h0M984.5 541.5h0M984.5 506.5h0M985.5 537.5h0M985.5 519.5h0M985.5 528.5h0M985.5 507.5h0M985.5 505.5h0M985.5 555.5h0M985.5 556.5h0M986.5 511.5h0M986.5 507.5h0M986.5 534.5h0M986.5 543.5h0M986.5 548.5h0M986.5 529.5h0M987.5 561.5h0M987.5 541.5h0M987.5 538.5h0M987.5 506.5h0M987.5 537.5h0M987.5 539.5h0M987.5 492.5h0M988.5 551.5h0M988.5 509.5h0M988.5 466.5h0M988.5 538.5h0M988.5 544.5h0M988.5 527.5h0M988.5 494.5h0M989.5 494.5h0M989.5 504.5h0M989.5 519.5h0M989.5 535.5h0M989.5 504.5h0M989.5 484.5h0M989.5 518.5h0M990.5 529.5h0M990.5 494.5h0M990.5 522.5h0M990.5 514.5h0M990.5 472.5h0M990.5 510.5h0M990.5 502.5h0M991.5 562.5h0M991.5 524.5h0M991.5 494.5h0M991.5 514.5h0M991.5 519.5h0M991.5 543.5h0M991.5 543.5h0M992.5 501.5h0M992.5 535.5h0M992.5 543.5h0M992.5 519.5h0M992.5 534.5h0M992.5 508.5h0M992.5 536.5h0M993.5 517.5h0M993.5 538.5h0M993.5 511.5h0M993.5 512.5h0M993.5 548.5h0M993.5 518.5h0M993.5 491.5h0M994.5 485.5h0M994.5 480.5h0M994.5 484.5h0M994.5 520.5h0M994.5 543.5h0M994.5 524.5h0M994.5 516.5h0M995.5 524.5h0M995.5 555.5h0M995.5 504.5h0M995.5 528.5h0M995.5 563.5h0M995.5 504.5h0M995.5 537.5h0M996.5 473.5h0M996.5 508.5h0M996.5 531.5h0M996.5 482.5h0M996.5 543.5h0M996.5 544.5h0M996.5 544.5h0M997.5 529.5h0M997.5 536.5h0M997.5 494.5h0M997.5 542.5h0M997.5 530.5h0M997.5 497.5h0M997.5 534.5h0M998.5 500.5h0M998.5 513.5h0M998.5 501.5h0M998.5 538.5h0M998.5 504.5h0M998.5 545.5h0M998.5 531.5h0M999.5 536.5h0M999.5 509.5h0M999.5 517.5h0M999.5 493.5h0M999.5 525.5h0M999.5 511.5h0M999.5 506.5h0M1000.5 554.5h0M1000.5 515.5h0M1000.5 525.5h0M1000.5 559.5h0M1000.5 552.5h0M1000.5 546.5h0M1000.5 552.5h0M1001.5 533.5h0M1001.5 517.5h0M1001.5 555.5h0M1001.5 520.5h0M1001.5 552.5h0M1001.5 493.5h0M1001.5 549.5h0M1002.5 509.5h0M1002.5 532.5h0M1002.5 475.5h0M1002.5 521.5h0M1002.5 504.5h0M1002.5 546.5h0M1003.5 548.5h0M1003.5 504.5h0M1003.5 532.5h0M1003.5 504.5h0M1003.5 517.5h0M1003.5 521.5h0M1003.5 473.5h0M1004.5 545.5h0M1004.5 546.5h0M1004.5 503.5h0M1004.5 488.5h0M1004.5 541.5h0M1004.5 538.5h0M1004.5 492.5h0M1005.5 508.5h0M1005.5 540.5h0M1005.5 498.5h0M1005.5 517.5h0M1005.5 530.5h0M1005.5 527.5h0M1005.5 543.5h0M1006.5 526.5h0M1006.5 518.5h0M1006.5 495.5h0M1006.5 551.5h0M1006.5 553.5h0M1006.5 550.5h0M1006.5 490.5h0M1007.5 501.5h0M1007.5 533.5h0M1007.5 541.5h0M1007.5 564.5h0M1007.5 532.5h0M1007.5 534.5h0M1007.5 536.5h0M1008.5 532.5h0M1008.5 525.5h0M1008.5 496.5h0M1008.5 503.5h0M1008.5 552.5h0M1008.5 546.5h0M1008.5 499.5h0M1009.5 519.5h0M1009.5 499.5h0M1009.5 490.5h0M1009.5 506.5h0M1009.5 481.5h0M1009.5 556.5h0M1009.5 543.5h0M1010.5 537.5h0M1010.5 555.5h0M1010.5 513.5h0M1010.5 510.5h0M1010.5 493.5h0M1010.5 523.5h0M1010.5 541.5h0M1011.5 552.5h0M1011.5 484.5h0M1011.5 503.5h0M1011.5 510.5h0M1011.5 540.5h0M1011.5 553.5h0M1011.5 492.5h0M1012.5 484.5h0M1012.5 535.5h0M1012.5 528.5h0M1012.5 534.5h0M1012.5 550.5h0M1012.5 522.5h0M1012.5 532.5h0M1013.5 515.5h0M1013.5 556.5h0M1013.5 512.5h0M1013.5 555.5h0M1013.5 530.5h0M1013.5 512.5h0M1013.5 533.5h0M1014.5 543.5h0M1014.5 523.5h0M1014.5 519.5h0M1014.5 512.5h0M1014.5 518.5h0M1014.5 526.5h0M1014.5 513.5h0M1015.5 517.5h0M1015.5 514.5h0M1015.5 533.5h0M1015.5 511.5h0M1015.5 525.5h0M1015.5 551.5h0M1015.5 501.5h0M1016.5 503.5h0M1016.5 519.5h0M1016.5 540.5h0M1016.5 519.5h0M1016.5 498.5h0M1016.5 527.5h0M1016.5 548.5h0M1017.5 536.5h0M1017.5 533.5h0M1017.5 572.5h0M1017.5 506.5h0M1017.5 521.5h0M1017.5 506.5h0M1017.5 523.5h0M1018.5 538.5h0M1018.5 506.5h0M1018.5 507.5h0M1018.5 501.5h0M1018.5 571.5h0M1018.5 523.5h0M1018.5 523.5h0M1019.5 564.5h0M1019.5 542.5h0M1019.5 526.5h0M1019.5 521.5h0M1019.5 527.5h0M1019.5 518.5h0M1020.5 524.5h0M1020.5 520.5h0M1020.5 550.5h0M1020.5 529.5h0M1020.5 482.5h0M1020.5 535.5h0M1020.5 532.5h0M1021.5 505.5h0M1021.5 501.5h0M1021.5 544.5h0M1021.5 463.5h0M1021.5 538.5h0M1021.5 532.5h0M1021.5 540.5h0M1022.5 499.5h0M1022.5 530.5h0M1022.5 531.5h0M1022.5 558.5h0M1022.5 515.5h0M1022.5 544.5h0M1022.5 527.5h0M1023.5 548.5h0M1023.5 534.5h0M1023.5 510.5h0M1023.5 503.5h0M1023.5 541.5h0M1023.5 525.5h0M1023.5 512.5h0M1024.5 551.5h0M1024.5 547.5h0M1024.5 536.5h0M1024.5 487.5h0M1024.5 538.5h0M1024.5 565.5h0M1024.5 511.5h0M1025.5 538.5h0M1025.5 533.5h0M1025.5 532.5h0M1025.5 473.5h0M1025.5 554.5h0M1025.5 528.5h0M1025.5 478.5h0M1026.5 566.5h0M1026.5 541.5h0M1026.5 545.5h0M1026.5 497.5h0M1026.5 552.5h0M1026.5 533.5h0M1026.5 511.5h0M1027.5 504.5h0M1027.5 541.5h0M1027.5 524.5h0M1027.5 539.5h0M1027.5 518.5h0M1027.5 509.5h0M1027.5 570.5h0M1028.5 503.5h0M1028.5 534.5h0M1028.5 514.5h0M1028.5 548.5h0M1028.5 493.5h0M1028.5 533.5h0M1028.5 514.5h0M1029.5 503.5h0M1029.5 530.5h0M1029.5 538.5h0M1029.5 520.5h0M1029.5 526.5h0M1029.5 532.5h0M1029.5 542.5h0M1030.5 493.5h0M1030.5 521.5h0M1030.5 527.5h0M1030.5 535.5h0M1030.5 508.5h0M1030.5 538.5h0M1030.5 501.5h0M1031.5 498.5h0M1031.5 540.5h0M1031.5 531.5h0M1031.5 541.5h0M1031.5 551.5h0M1031.5 528.5h0M1031.5 532.5h0M1032.5 547.5h0M1032.5 545.5h0M1032.5 532.5h0M1032.5 537.5h0M1032.5 538.5h0M1032.5 501.5h0M1032.5 554.5h0M1033.5 513.5h0M1033.5 487.5h0M1033.5 503.5h0M1033.5 516.5h0M1033.5 533.5h0M1033.5 492.5h0M1033.5 530.5h0M1034.5 553.5h0M1034.5 539.5h0M1034.5 524.5h0M1034.5 552.5h0M1034.5 494.5h0M1034.5 528.5h0M1034.5 530.5h0M1035.5 545.5h0M1035.5 516.5h0M1035.5 546.5h0M1035.5 539.5h0M1035.5 552.5h0M1035.5 512.5h0M1036.5 516.5h0M1036.5 551.5h0M1036.5 523.5h0M1036.5 505.5h0M1036.5 526.5h0M1036.5 555.5h0M1036.5 524.5h0M1037.5 517.5h0M1037.5 517.5h0M1037.5 554.5h0M1037.5 576.5h0M1037.5 548.5h0M1037.5 487.5h0M1037.5 546.5h0M1038.5 546.5h0M1038.5 505.5h0M1038.5 555.5h0M1038.5 502.5h0M1038.5 541.5h0M1038.5 546.5h0M1038.5 510.5h0M1039.5 519.5h0M1039.5 543.5h0M1039.5 527.5h0M1039.5 500.5h0M1039.5 555.5h0M1039.5 501.5h0M1039.5 517.5h0M1040.5 517.5h0M1040.5 493.5h0M1040.5 559.5h0M1040.5 554.5h0M1040.5 523.5h0M1040.5 506.5h0M1040.5 495.5h0M1041.5 515.5h0M1041.5 496.5h0M1041.5 494.5h0M1041.5 497.5h0M1041.5 545.5h0M1041.5 543.5h0M1041.5 540.5h0M1042.5 522.5h0M1042.5 507.5h0M1042.5 481.5h0M1042.5 507.5h0M1042.5 542.5h0M1042.5 493.5h0M1042.5 468.5h0M1043.5 536.5h0M1043.5 463.5h0M1043.5 524.5h0M1043.5 542.5h0M1043.5 538.5h0M1043.5 549.5h0M1043.5 536.5h0M1044.5 541.5h0M1044.5 502.5h0M1044.5 535.5h0M1044.5 552.5h0M1044.5 499.5h0M1044.5 522.5h0M1044.5 562.5h0M1045.5 527.5h0M1045.5 517.5h0M1045.5 537.5h0M1045.5 537.5h0M1045.5 541.5h0M1045.5 540.5h0M1045.5 480.5h0M1046.5 511.5h0M1046.5 536.5h0M1046.5 535.5h0M1046.5 540.5h0M1046.5 535.5h0M1046.5 561.5h0M1046.5 509.5h0M1047.5 487.5h0M1047.5 536.5h0M1047.5 542.5h0M1047.5 518.5h0M1047.5 532.5h0M1047.5 505.5h0M1047.5 551.5h0M1048.5 512.5h0M1048.5 527.5h0M1048.5 518.5h0M1048.5 519.5h0M1048.5 466.5h0M1048.5 515.5h0M1048.5 515.5h0M1049.5 505.5h0M1049.5 547.5h0M1049.5 521.5h0M1049.5 529.5h0M1049.5 505.5h0M1049.5 555.5h0M1049.5 559.5h0M1050.5 506.5h0M1050.5 486.5h0M1050.5 538.5h0M1050.5 519.5h0M1050.5 522.5h0M1050.5 535.5h0M1050.5 506.5h0M1051.5 520.5h0M1051.5 551.5h0M1051.5 551.5h0M1051.5 508.5h0M1051.5 521.5h0M1051.5 545.5h0M1052.5 509.5h0M1052.5 536.5h0M1052.5 541.5h0M1052.5 473.5h0M1052.5 521.5h0M1052.5 544.5h0M1052.5 526.5h0M1053.5 486.5h0M1053.5 535.5h0M1053.5 512.5h0M1053.5 496.5h0M1053.5 530.5h0M1053.5 525.5h0M1053.5 471.5h0M1054.5 524.5h0M1054.5 525.5h0M1054.5 518.5h0M1054.5 550.5h0M1054.5 538.5h0M1054.5 561.5h0M1054.5 504.5h0M1055.5 528.5h0M1055.5 467.5h0M1055.5 553.5h0M1055.5 534.5h0M1055.5 556.5h0M1055.5 541.5h0M1055.5 527.5h0M1056.5 498.5h0M1056.5 517.5h0M1056.5 545.5h0M1056.5 526.5h0M1056.5 485.5h0M1056.5 509.5h0M1056.5 512.5h0M1057.5 490.5h0M1057.5 543.5h0M1057.5 512.5h0M1057.5 523.5h0M1057.5 555.5h0M1057.5 536.5h0M1057.5 540.5h0M1058.5 521.5h0M1058.5 528.5h0M1058.5 505.5h0M1058.5 503.5h0M1058.5 531.5h0M1058.5 550.5h0M1058.5 502.5h0M1059.5 551.5h0M1059.5 529.5h0M1059.5 570.5h0M1059.5 528.5h0M1059.5 509.5h0M1059.5 520.5h0M1059.5 523.5h0M1060.5 538.5h0M1060.5 494.5h0M1060.5 513.5h0M1060.5 509.5h0M1060.5 533.5h0M1060.5 520.5h0M1060.5 518.5h0M1061.5 530.5h0M1061.5 498.5h0M1061.5 523.5h0M1061.5 543.5h0M1061.5 498.5h0M1061.5 523.5h0M1061.5 520.5h0M1062.5 542.5h0M1062.5 509.5h0M1062.5 548.5h0M1062.5 529.5h0M1062.5 512.5h0M1062.5 510.5h0M1062.5 525.5h0M1063.5 543.5h0M1063.5 497.5h0M1063.5 523.5h0M1063.5 519.5h0M1063.5 527.5h0M1063.5 512.5h0M1063.5 545.5h0M1064.5 538.5h0M1064.5 535.5h0M1064.5 524.5h0M1064.5 513.5h0M1064.5 524.5h0M1064.5 500.5h0M1064.5 549.5h0M1065.5 527.5h0M1065.5 538.5h0M1065.5 506.5h0M1065.5 478.5h0M1065.5 550.5h0M1065.5 530.5h0M1065.5 547.5h0M1066.5 549.5h0M1066.5 520.5h0M1066.5 544.5h0M1066.5 544.5h0M1066.5 552.5h0M1066.5 499.5h0M1066.5 530.5h0M1067.5 467.5h0M1067.5 529.5h0M1067.5 482.5h0M1067.5 476.5h0M1067.5 507.5h0M1067.5 527.5h0M1068.5 527.5h0M1068.5 554.5h0M1068.5 534.5h0M1068.5 475.5h0M1068.5 476.5h0M1068.5 483.5h0M1068.5 516.5h0M1069.5 517.5h0M1069.5 504.5h0M1069.5 506.5h0M1069.5 516.5h0M1069.5 540.5h0M1069.5 548.5h0M1069.5 495.5h0M1070.5 515.5h0M1070.5 528.5h0M1070.5 534.5h0M1070.5 513.5h0M1070.5 554.5h0M1070.5 506.5h0M1070.5 517.5h0M1071.5 507.5h0M1071.5 543.5h0M1071.5 526.5h0M1071.5 566.5h0M1071.5 520.5h0M1071.5 536.5h0M1071.5 541.5h0M1072.5 518.5h0M1072.5 506.5h0M1072.5 516.5h0M1072.5 544.5h0M1072.5 506.5h0M1072.5 517.5h0M1072.5 518.5h0M1073.5 491.5h0M1073.5 498.5h0M1073.5 516.5h0M1073.5 503.5h0M1073.5 510.5h0M1073.5 526.5h0M1073.5 517.5h0M1074.5 516.5h0M1074.5 517.5h0M1074.5 500.5h0M1074.5 508.5h0M1074.5 553.5h0M1074.5 529.5h0M1074.5 496.5h0M1075.5 498.5h0M1075.5 532.5h0M1075.5 534.5h0M1075.5 550.5h0M1075.5 524.5h0M1075.5 496.5h0M1075.5 535.5h0M1076.5 469.5h0M1076.5 509.5h0M1076.5 523.5h0M1076.5 506.5h0M1076.5 521.5h0M1076.5 512.5h0M1076.5 474.5h0M1077.5 542.5h0M1077.5 541.5h0M1077.5 522.5h0M1077.5 526.5h0M1077.5 546.5h0M1077.5 499.5h0M1077.5 557.5h0M1078.5 497.5h0M1078.5 514.5h0M1078.5 505.5h0M1078.5 497.5h0M1078.5 559.5h0M1078.5 538.5h0M1078.5 527.5h0M1079.5 507.5h0M1079.5 501.5h0M1079.5 480.5h0M1079.5 548.5h0M1079.5 506.5h0M1079.5 518.5h0M1079.5 511.5h0M1080.5 514.5h0M1080.5 526.5h0M1080.5 572.5h0M1080.5 535.5h0M1080.5 559.5h0M1080.5 539.5h0M1080.5 484.5h0M1081.5 472.5h0M1081.5 516.5h0M1081.5 512.5h0M1081.5 523.5h0M1081.5 525.5h0M1081.5 553.5h0M1081.5 516.5h0M1082.5 548.5h0M1082.5 501.5h0M1082.5 519.5h0M1082.5 565.5h0M1082.5 523.5h0M1082.5 560.5h0M1082.5 483.5h0M1083.5 513.5h0M1083.5 527.5h0M1083.5 486.5h0M1083.5 545.5h0M1083.5 561.5h0M1083.5 547.5h0M1083.5 558.5h0M1084.5 514.5h0M1084.5 496.5h0M1084.5 543.5h0M1084.5 516.5h0M1084.5 534.5h0M1084.5 535.5h0M1085.5 497.5h0M1085.5 471.5h0M1085.5 493.5h0M1085.5 522.5h0M1085.5 550.5h0M1085.5 497.5h0M1085.5 520.5h0M1086.5 553.5h0M1086.5 520.5h0M1086.5 504.5h0M1086.5 512.5h0M1086.5 540.5h0M1086.5 550.5h0M1086.5 519.5h0M1087.5 572.5h0M1087.5 517.5h0M1087.5 501.5h0M1087.5 501.5h0M1087.5 499.5h0M1087.5 539.5h0M1087.5 522.5h0M1088.5 554.5h0M1088.5 536.5h0M1088.5 565.5h0M1088.5 554.5h0M1088.5 539.5h0M1088.5 524.5h0M1088.5 508.5h0M1089.5 523.5h0M1089.5 520.5h0M1089.5 561.5h0M1089.5 520.5h0M1089.5 495.5h0M1089.5 513.5h0M1089.5 542.5h0M1090.5 515.5h0M1090.5 485.5h0M1090.5 522.5h0M1090.5 548.5h0M1090.5 484.5h0M1090.5 555.5h0M1090.5 525.5h0M1091.5 542.5h0M1091.5 490.5h0M1091.5 547.5h0M1091.5 511.5h0M1091.5 535.5h0M1091.5 556.5h0M1091.5 522.5h0M1092.5 503.5h0M1092.5 559.5h0M1092.5 543.5h0M1092.5 540.5h0M1092.5 537.5h0M1092.5 519.5h0M1092.5 537.5h0M1093.5 535.5h0M1093.5 495.5h0M1093.5 537.5h0M1093.5 500.5h0M1093.5 529.5h0M1093.5 538.5h0M1093.5 507.5h0M1094.5 525.5h0M1094.5 523.5h0M1094.5 536.5h0M1094.5 529.5h0M1094.5 530.5h0M1094.5 513.5h0M1094.5 471.5h0M1095.5 519.5h0M1095.5 527.5h0M1095.5 503.5h0M1095.5 513.5h0M1095.5 571.5h0M1095.5 565.5h0M1095.5 529.5h0M1096.5 506.5h0M1096.5 530.5h0M1096.5 535.5h0M1096.5 540.5h0M1096.5 496.5h0M1096.5 556.5h0M1096.5 551.5h0M1097.5 509.5h0M1097.5 549.5h0M1097.5 554.5h0M1097.5 527.5h0M1097.5 534.5h0M1097.5 504.5h0M1097.5 534.5h0M1098.5 493.5h0M1098.5 555.5h0M1098.5 523.5h0M1098.5 499.5h0M1098.5 526.5h0M1098.5 528.5h0M1098.5 514.5h0M1099.5 534.5h0M1099.5 547.5h0M1099.5 540.5h0M1099.5 508.5h0M1099.5 502.5h0M1099.5 517.5h0M1099.5 514.5h0M1100.5 499.5h0M1100.5 509.5h0M1100.5 533.5h0M1100.5 511.5h0M1100.5 519.5h0M1100.5 489.5h0M1101.5 522.5h0M1101.5 552.5h0M1101.5 496.5h0M1101.5 469.5h0M1101.5 493.5h0M1101.5 521.5h0M1101.5 552.5h0M1102.5 577.5h0M1102.5 524.5h0M1102.5 510.5h0M1102.5 519.5h0M1102.5 540.5h0M1102.5 489.5h0M1102.5 516.5h0M1103.5 493.5h0M1103.5 537.5h0M1103.5 528.5h0M1103.5 522.5h0M1103.5 514.5h0M1103.5 505.5h0M1103.5 514.5h0M1104.5 511.5h0M1104.5 503.5h0M1104.5 536.5h0M1104.5 571.5h0M1104.5 545.5h0M1104.5 524.5h0M1104.5 541.5h0M1105.5 495.5h0M1105.5 512.5h0M1105.5 486.5h0M1105.5 533.5h0M1105.5 524.5h0M1105.5 525.5h0M1105.5 499.5h0M1106.5 530.5h0M1106.5 525.5h0M1106.5 515.5h0M1106.5 550.5h0M1106.5 516.5h0M1106.5 565.5h0M1106.5 478.5h0M1107.5 482.5h0M1107.5 502.5h0M1107.5 512.5h0M1107.5 546.5h0M1107.5 527.5h0M1107.5 523.5h0M1107.5 521.5h0M1108.5 550.5h0M1108.5 546.5h0M1108.5 488.5h0M1108.5 506.5h0M1108.5 482.5h0M1108.5 537.5h0M1108.5 542.5h0M1109.5 527.5h0M1109.5 515.5h0M1109.5 557.5h0M1109.5 527.5h0M1109.5 489.5h0M1109.5 545.5h0M1109.5 520.5h0M1110.5 537.5h0M1110.5 529.5h0M1110.5 565.5h0M1110.5 533.5h0M1110.5 517.5h0M1110.5 541.5h0M1110.5 507.5h0M1111.5 539.5h0M1111.5 514.5h0M1111.5 556.5h0M1111.5 550.5h0M1111.5 551.5h0M1111.5 488.5h0M1111.5 479.5h0M1112.5 505.5h0M1112.5 515.5h0M1112.5 530.5h0M1112.5 550.5h0M1112.5 506.5h0M1112.5 509.5h0M1112.5 537.5h0M1113.5 536.5h0M1113.5 526.5h0M1113.5 555.5h0M1113.5 518.5h0M1113.5 491.5h0M1113.5 560.5h0M1113.5 570.5h0M1114.5 545.5h0M1114.5 528.5h0M1114.5 508.5h0M1114.5 528.5h0M1114.5 487.5h0M1114.5 537.5h0M1114.5 528.5h0M1115.5 506.5h0M1115.5 547.5h0M1115.5 562.5h0M1115.5 536.5h0M1115.5 526.5h0M1115.5 530.5h0M1115.5 477.5h0M1116.5 523.5h0M1116.5 534.5h0M1116.5 544.5h0M1116.5 485.5h0M1116.5 548.5h0M1116.5 507.5h0M1117.5 499.5h0M1117.5 563.5h0M1117.5 549.5h0M1117.5 539.5h0M1117.5 531.5h0M1117.5 551.5h0M1117.5 500.5h0M1118.5 512.5h0M1118.5 523.5h0M1118.5 501.5h0M1118.5 525.5h0M1118.5 513.5h0M1118.5 519.5h0M1118.5 550.5h0M1119.5 518.5h0M1119.5 525.5h0M1119.5 468.5h0M1119.5 563.5h0M1119.5 504.5h0M1119.5 552.5h0M1119.5 495.5h0M1120.5 541.5h0M1120.5 509.5h0M1120.5 510.5h0M1120.5 521.5h0M1120.5 547.5h0M1120.5 536.5h0M1120.5 559.5h0M1121.5 542.5h0M1121.5 522.5h0M1121.5 543.5h0M1121.5 544.5h0M1121.5 543.5h0M1121.5 518.5h0M1121.5 562.5h0M1122.5 567.5h0M1122.5 527.5h0M1122.5 572.5h0M1122.5 511.5h0M1122.5 539.5h0M1122.5 508.5h0M1122.5 491.5h0M1123.5 538.5h0M1123.5 561.5h0M1123.5 529.5h0M1123.5 561.5h0M1123.5 515.5h0M1123.5 553.5h0M1123.5 512.5h0M1124.5 520.5h0M1124.5 494.5h0M1124.5 512.5h0M1124.5 515.5h0M1124.5 536.5h0M1124.5 503.5h0M1124.5 540.5h0M1125.5 482.5h0M1125.5 522.5h0M1125.5 522.5h0M1125.5 504.5h0M1125.5 507.5h0M1125.5 499.5h0M1125.5 544.5h0M1126.5 515.5h0M1126.5 518.5h0M1126.5 503.5h0M1126.5 546.5h0M1126.5 536.5h0M1126.5 511.5h0M1126.5 555.5h0M1127.5 505.5h0M1127.5 570.5h0M1127.5 528.5h0M1127.5 531.5h0M1127.5 512.5h0M1127.5 505.5h0M1127.5 517.5h0M1128.5 498.5h0M1128.5 528.5h0M1128.5 546.5h0M1128.5 529.5h0M1128.5 521.5h0M1128.5 510.5h0M1128.5 564.5h0M1129.5 526.5h0M1129.5 524.5h0M1129.5 551.5h0M1129.5 509.5h0M1129.5 521.5h0M1129.5 522.5h0M1129.5 544.5h0M1130.5 521.5h0M1130.5 502.5h0M1130.5 579.5h0M1130.5 531.5h0M1130.5 552.5h0M1130.5 493.5h0M1130.5 539.5h0M1131.5 522.5h0M1131.5 524.5h0M1131.5 524.5h0M1131.5 577.5h0M1131.5 506.5h0M1131.5 530.5h0M1131.5 529.5h0M1132.5 517.5h0M1132.5 512.5h0M1132.5 505.5h0M1132.5 528.5h0M1132.5 539.5h0M1132.5 511.5h0M1133.5 498.5h0M1133.5 550.5h0M1133.5 509.5h0M1133.5 506.5h0M1133.5 504.5h0M1133.5 502.5h0M1133.5 537.5h0M1134.5 514.5h0M1134.5 492.5h0M1134.5 501.5h0M1134.5 554.5h0M1134.5 490.5h0M1134.5 548.5h0M1134.5 549.5h0M1135.5 480.5h0M1135.5 524.5h0M1135.5 570.5h0M1135.5 492.5h0M1135.5 517.5h0M1135.5 502.5h0M1135.5 521.5h0M1136.5 516.5h0M1136.5 515.5h0M1136.5 562.5h0M1136.5 536.5h0M1136.5 516.5h0M1136.5 514.5h0M1136.5 530.5h0M1137.5 502.5h0M1137.5 472.5h0M1137.5 525.5h0M1137.5 502.5h0M1137.5 541.5h0M1137.5 536.5h0M1137.5 515.5h0M1138.5 498.5h0M1138.5 521.5h0M1138.5 534.5h0M1138.5 537.5h0M1138.5 536.5h0M1138.5 517.5h0M1138.5 508.5h0M1139.5 511.5h0M1139.5 534.5h0M1139.5 523.5h0M1139.5 498.5h0M1139.5 551.5h0M1139.5 558.5h0M1139.5 532.5h0M1140.5 550.5h0M1140.5 527.5h0M1140.5 553.5h0M1140.5 546.5h0M1140.5 512.5h0M1140.5 518.5h0M1140.5 534.5h0M1141.5 566.5h0M1141.5 522.5h0M1141.5 525.5h0M1141.5 535.5h0M1141.5 520.5h0M1141.5 531.5h0M1141.5 543.5h0M1142.5 535.5h0M1142.5 560.5h0M1142.5 537.5h0M1142.5 507.5h0M1142.5 518.5h0M1142.5 544.5h0M1142.5 517.5h0M1143.5 521.5h0M1143.5 544.5h0M1143.5 540.5h0M1143.5 509.5h0M1143.5 489.5h0M1143.5 523.5h0M1143.5 540.5h0M1144.5 532.5h0M1144.5 473.5h0M1144.5 540.5h0M1144.5 520.5h0M1144.5 503.5h0M1144.5 505.5h0M1144.5 533.5h0M1145.5 531.5h0M1145.5 504.5h0M1145.5 464.5h0M1145.5 544.5h0M1145.5 525.5h0M1145.5 535.5h0M1145.5 513.5h0M1146.5 511.5h0M1146.5 534.5h0M1146.5 526.5h0M1146.5 533.5h0M1146.5 533.5h0M1146.5 546.5h0M1146.5 484.5h0M1147.5 506.5h0M1147.5 502.5h0M1147.5 510.5h0M1147.5 531.5h0M1147.5 522.5h0M1147.5 544.5h0M1147.5 512.5h0M1148.5 481.5h0M1148.5 476.5h0M1148.5 562.5h0M1148.5 515.5h0M1148.5 538.5h0M1148.5 541.5h0M1148.5 528.5h0M1149.5 498.5h0M1149.5 500.5h0M1149.5 512.5h0M1149.5 523.5h0M1149.5 501.5h0M1149.5 515.5h0M1150.5 528.5h0M1150.5 555.5h0M1150.5 525.5h0M1150.5 541.5h0M1150.5 565.5h0M1150.5 512.5h0M1150.5 545.5h0M1151.5 532.5h0M1151.5 551.5h0M1151.5 522.5h0M1151.5 533.5h0M1151.5 539.5h0M1151.5 507.5h0M1151.5 485.5h0M1152.5 505.5h0M1152.5 542.5h0M1152.5 519.5h0M1152.5 521.5h0M1152.5 521.5h0M1152.5 525.5h0M1152.5 510.5h0M1153.5 497.5h0M1153.5 522.5h0M1153.5 511.5h0M1153.5 511.5h0M1153.5 517.5h0M1153.5 536.5h0M1153.5 493.5h0M1154.5 538.5h0M1154.5 563.5h0M1154.5 559.5h0M1154.5 506.5h0M1154.5 537.5h0M1154.5 513.5h0M1154.5 500.5h0M1155.5 520.5h0M1155.5 530.5h0M1155.5 529.5h0M1155.5 508.5h0M1155.5 563.5h0M1155.5 507.5h0M1155.5 510.5h0M1156.5 500.5h0M1156.5 547.5h0M1156.5 519.5h0M1156.5 545.5h0M1156.5 512.5h0M1156.5 519.5h0M1156.5 500.5h0M1157.5 509.5h0M1157.5 534.5h0M1157.5 497.5h0M1157.5 564.5h0M1157.5 560.5h0M1157.5 517.5h0M1157.5 530.5h0M1158.5 532.5h0M1158.5 528.5h0M1158.5 518.5h0M1158.5 557.5h0M1158.5 507.5h0M1158.5 513.5h0M1158.5 497.5h0M1159.5 517.5h0M1159.5 565.5h0M1159.5 521.5h0M1159.5 480.5h0M1159.5 526.5h0M1159.5 491.5h0M1159.5 532.5h0M1160.5 496.5h0M1160.5 534.5h0M1160.5 508.5h0M1160.5 522.5h0M1160.5 534.5h0M1160.5 515.5h0M1160.5 511.5h0M1161.5 517.5h0M1161.5 541.5h0M1161.5 513.5h0M1161.5 507.5h0M1161.5 492.5h0M1161.5 532.5h0M1161.5 515.5h0M1162.5 545.5h0M1162.5 530.5h0M1162.5 522.5h0M1162.5 524.5h0M1162.5 535.5h0M1162.5 510.5h0M1162.5 509.5h0M1163.5 552.5h0M1163.5 524.5h0M1163.5 543.5h0M1163.5 509.5h0M1163.5 500.5h0M1163.5 505.5h0M1163.5 536.5h0M1164.5 551.5h0M1164.5 516.5h0M1164.5 561.5h0M1164.5 530.5h0M1164.5 556.5h0M1164.5 505.5h0M1164.5 532.5h0M1165.5 503.5h0M1165.5 520.5h0M1165.5 530.5h0M1165.5 528.5h0M1165.5 512.5h0M1165.5 525.5h0M1166.5 482.5h0M1166.5 482.5h0M1166.5 537.5h0M1166.5 508.5h0M1166.5 506.5h0M1166.5 476.5h0M1166.5 527.5h0M1167.5 492.5h0M1167.5 519.5h0M1167.5 542.5h0M1167.5 564.5h0M1167.5 504.5h0M1167.5 565.5h0M1167.5 522.5h0M1168.5 479.5h0M1168.5 525.5h0M1168.5 532.5h0M1168.5 512.5h0M1168.5 520.5h0M1168.5 508.5h0M1168.5 528.5h0M1169.5 527.5h0M1169.5 508.5h0M1169.5 482.5h0M1169.5 511.5h0M1169.5 504.5h0M1169.5 560.5h0M1169.5 554.5h0M1170.5 518.5h0M1170.5 507.5h0M1170.5 510.5h0M1170.5 525.5h0M1170.5 502.5h0M1170.5 552.5h0M1170.5 540.5h0M1171.5 551.5h0M1171.5 497.5h0M1171.5 502.5h0M1171.5 545.5h0M1171.5 514.5h0M1171.5 540.5h0M1171.5 531.5h0M1172.5 518.5h0M1172.5 527.5h0M1172.5 490.5h0M1172.5 480.5h0M1172.5 522.5h0M1172.5 533.5h0M1172.5 492.5h0M1173.5 509.5h0M1173.5 506.5h0M1173.5 524.5h0M1173.5 522.5h0M1173.5 521.5h0M1173.5 532.5h0M1173.5 502.5h0M1174.5 515.5h0M1174.5 508.5h0M1174.5 537.5h0M1174.5 540.5h0M1174.5 514.5h0M1174.5 519.5h0M1174.5 549.5h0M1175.5 536.5h0M1175.5 509.5h0M1175.5 524.5h0M1175.5 470.5h0M1175.5 519.5h0M1175.5 539.5h0M1175.5 552.5h0M1176.5 542.5h0M1176.5 557.5h0M1176.5 482.5h0M1176.5 511.5h0M1176.5 547.5h0M1176.5 540.5h0M1176.5 528.5h0M1177.5 515.5h0M1177.5 531.5h0M1177.5 504.5h0M1177.5 540.5h0M1177.5 508.5h0M1177.5 517.5h0M1177.5 528.5h0M1178.5 568.5h0M1178.5 501.5h0M1178.5 498.5h0M1178.5 557.5h0M1178.5 499.5h0M1178.5 553.5h0M1178.5 520.5h0M1179.5 506.5h0M1179.5 526.5h0M1179.5 527.5h0M1179.5 545.5h0M1179.5 530.5h0M1179.5 521.5h0M1179.5 521.5h0M1180.5 526.5h0M1180.5 499.5h0M1180.5 487.5h0M1180.5 511.5h0M1180.5 492.5h0M1180.5 527.5h0M1180.5 523.5h0M1181.5 550.5h0M1181.5 545.5h0M1181.5 476.5h0M1181.5 551.5h0M1181.5 520.5h0M1181.5 557.5h0M1182.5 490.5h0M1182.5 504.5h0M1182.5 521.5h0M1182.5 542.5h0M1182.5 527.5h0M1182.5 500.5h0M1182.5 516.5h0M1183.5 562.5h0M1183.5 535.5h0M1183.5 501.5h0M1183.5 468.5h0M1183.5 540.5h0M1183.5 547.5h0M1183.5 489.5h0M1184.5 519.5h0M1184.5 554.5h0M1184.5 498.5h0M1184.5 512.5h0M1184.5 513.5h0M1184.5 535.5h0M1184.5 468.5h0M1185.5 520.5h0M1185.5 502.5h0M1185.5 552.5h0M1185.5 559.5h0M1185.5 550.5h0M1185.5 550.5h0M1185.5 520.5h0M1186.5 527.5h0M1186.5 518.5h0M1186.5 538.5h0M1186.5 542.5h0M1186.5 530.5h0M1186.5 512.5h0M1186.5 546.5h0M1187.5 531.5h0M1187.5 554.5h0M1187.5 564.5h0M1187.5 567.5h0M1187.5 514.5h0M1187.5 515.5h0M1187.5 481.5h0M1188.5 551.5h0M1188.5 489.5h0M1188.5 517.5h0M1188.5 510.5h0M1188.5 530.5h0M1188.5 497.5h0M1188.5 532.5h0M1189.5 504.5h0M1189.5 490.5h0M1189.5 505.5h0M1189.5 489.5h0M1189.5 534.5h0M1189.5 504.5h0M1189.5 504.5h0M1190.5 529.5h0M1190.5 557.5h0M1190.5 510.5h0M1190.5 534.5h0M1190.5 542.5h0M1190.5 512.5h0M1190.5 536.5h0M1191.5 489.5h0M1191.5 501.5h0M1191.5 516.5h0M1191.5 499.5h0M1191.5 551.5h0M1191.5 555.5h0M1191.5 505.5h0M1192.5 527.5h0M1192.5 516.5h0M1192.5 524.5h0M1192.5 508.5h0M1192.5 529.5h0M1192.5 522.5h0M1192.5 542.5h0M1193.5 538.5h0M1193.5 523.5h0M1193.5 477.5h0M1193.5 526.5h0M1193.5 543.5h0M1193.5 528.5h0M1193.5 523.5h0M1194.5 524.5h0M1194.5 545.5h0M1194.5 558.5h0M1194.5 505.5h0M1194.5 553.5h0M1194.5 530.5h0M1194.5 506.5h0M1195.5 542.5h0M1195.5 519.5h0M1195.5 544.5h0M1195.5 551.5h0M1195.5 474.5h0M1195.5 525.5h0M1195.5 487.5h0M1196.5 512.5h0M1196.5 531.5h0M1196.5 500.5h0M1196.5 562.5h0M1196.5 469.5h0M1196.5 545.5h0M1196.5 541.5h0M1197.5 491.5h0M1197.5 560.5h0M1197.5 508.5h0M1197.5 535.5h0M1197.5 533.5h0M1197.5 532.5h0M1198.5 511.5h0M1198.5 501.5h0M1198.5 538.5h0M1198.5 561.5h0M1198.5 525.5h0M1198.5 560.5h0M1198.5 563.5h0M1199.5 550.5h0M1199.5 509.5h0M1199.5 533.5h0M1199.5 553.5h0M1199.5 503.5h0M1199.5 552.5h0M1199.5 524.5h0M1200.5 539.5h0M1200.5 541.5h0M1200.5 495.5h0M1200.5 559.5h0M1200.5 515.5h0M1200.5 536.5h0M1200.5 509.5h0M1201.5 543.5h0M1201.5 506.5h0M1201.5 525.5h0M1201.5 497.5h0M1201.5 527.5h0M1201.5 492.5h0M1201.5 556.5h0M1202.5 497.5h0M1202.5 512.5h0M1202.5 532.5h0M1202.5 490.5h0M1202.5 519.5h0M1202.5 536.5h0M1202.5 532.5h0M1203.5 510.5h0M1203.5 523.5h0M1203.5 515.5h0M1203.5 506.5h0M1203.5 507.5h0M1203.5 478.5h0M1203.5 505.5h0M1204.5 525.5h0M1204.5 514.5h0M1204.5 533.5h0M1204.5 518.5h0M1204.5 530.5h0M1204.5 514.5h0M1204.5 502.5h0M1205.5 517.5h0M1205.5 521.5h0M1205.5 512.5h0M1205.5 518.5h0M1205.5 541.5h0M1205.5 561.5h0M1205.5 512.5h0M1206.5 515.5h0M1206.5 567.5h0M1206.5 531.5h0M1206.5 503.5h0M1206.5 487.5h0M1206.5 507.5h0M1206.5 566.5h0M1207.5 546.5h0M1207.5 524.5h0M1207.5 513.5h0M1207.5 535.5h0M1207.5 554.5h0M1207.5 559.5h0M1207.5 522.5h0M1208.5 528.5h0M1208.5 525.5h0M1208.5 570.5h0M1208.5 495.5h0M1208.5 500.5h0M1208.5 524.5h0M1208.5 532.5h0M1209.5 540.5h0M1209.5 536.5h0M1209.5 540.5h0M1209.5 539.5h0M1209.5 535.5h0M1209.5 550.5h0M1209.5 538.5h0M1210.5 518.5h0M1210.5 525.5h0M1210.5 522.5h0M1210.5 540.5h0M1210.5 531.5h0M1210.5 571.5h0M1210.5 524.5h0M1211.5 520.5h0M1211.5 552.5h0M1211.5 515.5h0M1211.5 562.5h0M1211.5 507.5h0M1211.5 540.5h0M1211.5 527.5h0M1212.5 504.5h0M1212.5 541.5h0M1212.5 492.5h0M1212.5 527.5h0M1212.5 519.5h0M1212.5 533.5h0M1212.5 475.5h0M1213.5 508.5h0M1213.5 550.5h0M1213.5 525.5h0M1213.5 544.5h0M1213.5 579.5h0M1213.5 498.5h0M1214.5 514.5h0M1214.5 523.5h0M1214.5 552.5h0M1214.5 559.5h0M1214.5 499.5h0M1214.5 521.5h0M1214.5 499.5h0M1215.5 516.5h0M1215.5 533.5h0M1215.5 497.5h0M1215.5 561.5h0M1215.5 540.5h0M1215.5 528.5h0M1215.5 515.5h0M1216.5 539.5h0M1216.5 516.5h0M1216.5 526.5h0M1216.5 506.5h0M1216.5 497.5h0M1216.5 518.5h0M1216.5 528.5h0M1217.5 519.5h0M1217.5 501.5h0M1217.5 549.5h0M1217.5 532.5h0M1217.5 550.5h0M1217.5 534.5h0M1217.5 558.5h0M1218.5 502.5h0M1218.5 526.5h0M1218.5 545.5h0M1218.5 485.5h0M1218.5 510.5h0M1218.5 516.5h0M1218.5 521.5h0M1219.5 571.5h0M1219.5 528.5h0M1219.5 510.5h0M1219.5 532.5h0M1219.5 486.5h0M1219.5 524.5h0M1219.5 513.5h0M1220.5 547.5h0M1220.5 558.5h0M1220.5 475.5h0M1220.5 484.5h0M1220.5 551.5h0M1220.5 520.5h0M1220.5 509.5h0M1221.5 534.5h0M1221.5 533.5h0M1221.5 479.5h0M1221.5 556.5h0M1221.5 560.5h0M1221.5 520.5h0M1221.5 487.5h0M1222.5 497.5h0M1222.5 504.5h0M1222.5 545.5h0M1222.5 534.5h0M1222.5 487.5h0M1222.5 538.5h0M1222.5 541.5h0M1223.5 524.5h0M1223.5 501.5h0M1223.5 508.5h0M1223.5 544.5h0M1223.5 488.5h0M1223.5 527.5h0M1223.5 515.5h0M1224.5 535.5h0M1224.5 525.5h0M1224.5 565.5h0M1224.5 545.5h0M1224.5 534.5h0M1224.5 533.5h0M1224.5 525.5h0M1225.5 535.5h0M1225.5 552.5h0M1225.5 539.5h0M1225.5 504.5h0M1225.5 570.5h0M1225.5 566.5h0M1225.5 568.5h0M1226.5 511.5h0M1226.5 548.5h0M1226.5 498.5h0M1226.5 549.5h0M1226.5 527.5h0M1226.5 522.5h0M1226.5 539.5h0M1227.5 536.5h0M1227.5 506.5h0M1227.5 525.5h0M1227.5 532.5h0M1227.5 506.5h0M1227.5 561.5h0M1227.5 545.5h0M1228.5 535.5h0M1228.5 519.5h0M1228.5 487.5h0M1228.5 536.5h0M1228.5 521.5h0M1228.5 518.5h0M1228.5 532.5h0M1229.5 558.5h0M1229.5 525.5h0M1229.5 563.5h0M1229.5 550.5h0M1229.5 540.5h0M1229.5 547.5h0M1229.5 522.5h0M1230.5 544.5h0M1230.5 571.5h0M1230.5 532.5h0M1230.5 542.5h0M1230.5 520.5h0M1230.5 540.5h0M1231.5 521.5h0M1231.5 557.5h0M1231.5 509.5h0M1231.5 485.5h0M1231.5 551.5h0M1231.5 545.5h0M1231.5 516.5h0M1232.5 550.5h0M1232.5 560.5h0M1232.5 555.5h0M1232.5 536.5h0M1232.5 519.5h0M1232.5 502.5h0M1232.5 519.5h0M1233.5 537.5h0M1233.5 522.5h0M1233.5 530.5h0M1233.5 546.5h0M1233.5 526.5h0M1233.5 525.5h0M1233.5 564.5h0M1234.5 568.5h0M1234.5 518.5h0M1234.5 562.5h0M1234.5 529.5h0M1234.5 511.5h0M1234.5 558.5h0M1234.5 568.5h0M1235.5 525.5h0M1235.5 563.5h0M1235.5 550.5h0M1235.5 501.5h0M1235.5 522.5h0M1235.5 521.5h0M1235.5 549.5h0M1236.5 575.5h0M1236.5 522.5h0M1236.5 549.5h0M1236.5 538.5h0M1236.5 534.5h0M1236.5 560.5h0M1236.5 495.5h0M1237.5 554.5h0M1237.5 518.5h0M1237.5 510.5h0M1237.5 520.5h0M1237.5 534.5h0M1237.5 523.5h0M1237.5 549.5h0M1238.5 578.5h0M1238.5 536.5h0M1238.5 563.5h0M1238.5 531.5h0M1238.5 518.5h0M1238.5 479.5h0M1238.5 555.5h0M1239.5 537.5h0M1239.5 496.5h0M1239.5 542.5h0M1239.5 508.5h0M1239.5 542.5h0M1239.5 509.5h0M1239.5 508.5h0M1240.5 531.5h0M1240.5 558.5h0M1240.5 521.5h0M1240.5 528.5h0M1240.5 561.5h0M1240.5 490.5h0M1240.5 528.5h0M1241.5 535.5h0M1241.5 521.5h0M1241.5 497.5h0M1241.5 504.5h0M1241.5 537.5h0M1241.5 569.5h0M1241.5 560.5h0M1242.5 540.5h0M1242.5 521.5h0M1242.5 533.5h0M1242.5 545.5h0M1242.5 522.5h0M1242.5 543.5h0M1242.5 509.5h0M1243.5 545.5h0M1243.5 538.5h0M1243.5 532.5h0M1243.5 515.5h0M1243.5 496.5h0M1243.5 530.5h0M1243.5 524.5h0M1244.5 529.5h0M1244.5 535.5h0M1244.5 507.5h0M1244.5 544.5h0M1244.5 524.5h0M1244.5 524.5h0M1244.5 543.5h0M1245.5 530.5h0M1245.5 517.5h0M1245.5 527.5h0M1245.5 563.5h0M1245.5 525.5h0M1245.5 518.5h0M1245.5 519.5h0M1246.5 506.5h0M1246.5 558.5h0M1246.5 494.5h0M1246.5 528.5h0M1246.5 519.5h0M1246.5 518.5h0M1247.5 518.5h0M1247.5 555.5h0M1247.5 501.5h0M1247.5 511.5h0M1247.5 574.5h0M1247.5 540.5h0M1247.5 550.5h0M1248.5 491.5h0M1248.5 534.5h0M1248.5 524.5h0M1248.5 534.5h0M1248.5 509.5h0M1248.5 522.5h0M1248.5 528.5h0M1249.5 535.5h0M1249.5 479.5h0M1249.5 534.5h0M1249.5 548.5h0M1249.5 541.5h0M1249.5 570.5h0M1249.5 526.5h0M1250.5 502.5h0M1250.5 555.5h0M1250.5 512.5h0M1250.5 542.5h0M1250.5 517.5h0M1250.5 538.5h0M1250.5 522.5h0M1251.5 493.5h0M1251.5 513.5h0M1251.5 528.5h0M1251.5 494.5h0M1251.5 535.5h0M1251.5 528.5h0M1251.5 510.5h0M1252.5 508.5h0M1252.5 556.5h0M1252.5 552.5h0M1252.5 522.5h0M1252.5 559.5h0M1252.5 532.5h0M1252.5 497.5h0M1253.5 494.5h0M1253.5 517.5h0M1253.5 528.5h0M1253.5 532.5h0M1253.5 532.5h0M1253.5 550.5h0M1253.5 531.5h0M1254.5 511.5h0M1254.5 534.5h0M1254.5 516.5h0M1254.5 487.5h0M1254.5 558.5h0M1254.5 524.5h0M1254.5 538.5h0M1255.5 515.5h0M1255.5 506.5h0M1255.5 522.5h0M1255.5 518.5h0M1255.5 554.5h0M1255.5 494.5h0M1255.5 513.5h0M1256.5 521.5h0M1256.5 509.5h0M1256.5 525.5h0M1256.5 543.5h0M1256.5 531.5h0M1256.5 532.5h0M1256.5 495.5h0M1257.5 474.5h0M1257.5 533.5h0M1257.5 530.5h0M1257.5 516.5h0M1257.5 482.5h0M1257.5 506.5h0M1257.5 494.5h0M1258.5 506.5h0M1258.5 527.5h0M1258.5 532.5h0M1258.5 562.5h0M1258.5 514.5h0M1258.5 560.5h0M1258.5 499.5h0M1259.5 507.5h0M1259.5 506.5h0M1259.5 548.5h0M1259.5 506.5h0M1259.5 496.5h0M1259.5 548.5h0M1259.5 529.5h0M1260.5 550.5h0M1260.5 510.5h0M1260.5 525.5h0M1260.5 481.5h0M1260.5 514.5h0M1260.5 537.5h0M1260.5 561.5h0M1261.5 527.5h0M1261.5 527.5h0M1261.5 523.5h0M1261.5 546.5h0M1261.5 501.5h0M1261.5 530.5h0M1261.5 537.5h0M1262.5 564.5h0M1262.5 509.5h0M1262.5 508.5h0M1262.5 527.5h0M1262.5 548.5h0M1262.5 554.5h0M1263.5 495.5h0M1263.5 547.5h0M1263.5 530.5h0M1263.5 510.5h0M1263.5 547.5h0M1263.5 516.5h0M1263.5 514.5h0M1264.5 523.5h0M1264.5 518.5h0M1264.5 536.5h0M1264.5 521.5h0M1264.5 489.5h0M1264.5 534.5h0M1264.5 546.5h0M1265.5 524.5h0M1265.5 511.5h0M1265.5 540.5h0M1265.5 550.5h0M1265.5 533.5h0M1265.5 501.5h0M1265.5 535.5h0M1266.5 501.5h0M1266.5 503.5h0M1266.5 527.5h0M1266.5 501.5h0M1266.5 556.5h0M1266.5 525.5h0M1266.5 563.5h0M1267.5 551.5h0M1267.5 524.5h0M1267.5 498.5h0M1267.5 484.5h0M1267.5 511.5h0M1267.5 568.5h0M1267.5 535.5h0M1268.5 520.5h0M1268.5 487.5h0M1268.5 519.5h0M1268.5 541.5h0M1268.5 561.5h0M1268.5 506.5h0M1268.5 572.5h0M1269.5 516.5h0M1269.5 486.5h0M1269.5 535.5h0M1269.5 481.5h0M1269.5 523.5h0M1269.5 503.5h0M1269.5 511.5h0M1270.5 492.5h0M1270.5 512.5h0M1270.5 535.5h0M1270.5 497.5h0M1270.5 481.5h0M1270.5 530.5h0M1270.5 559.5h0M1271.5 509.5h0M1271.5 540.5h0M1271.5 543.5h0M1271.5 501.5h0M1271.5 521.5h0M1271.5 525.5h0M1271.5 532.5h0M1272.5 529.5h0M1272.5 495.5h0M1272.5 504.5h0M1272.5 539.5h0M1272.5 537.5h0M1272.5 486.5h0M1272.5 531.5h0M1273.5 509.5h0M1273.5 532.5h0M1273.5 516.5h0M1273.5 480.5h0M1273.5 533.5h0M1273.5 558.5h0M1273.5 492.5h0M1274.5 489.5h0M1274.5 521.5h0M1274.5 527.5h0M1274.5 542.5h0M1274.5 491.5h0M1274.5 520.5h0M1274.5 522.5h0M1275.5 547.5h0M1275.5 535.5h0M1275.5 526.5h0M1275.5 514.5h0M1275.5 544.5h0M1275.5 545.5h0M1275.5 475.5h0M1276.5 505.5h0M1276.5 500.5h0M1276.5 507.5h0M1276.5 494.5h0M1276.5 488.5h0M1276.5 509.5h0M1276.5 522.5h0M1277.5 508.5h0M1277.5 534.5h0M1277.5 517.5h0M1277.5 514.5h0M1277.5 548.5h0M1277.5 512.5h0M1277.5 501.5h0M1278.5 541.5h0M1278.5 533.5h0M1278.5 517.5h0M1278.5 538.5h0M1278.5 536.5h0M1278.5 540.5h0M1279.5 523.5h0M1279.5 506.5h0M1279.5 485.5h0M1279.5 530.5h0M1279.5 534.5h0M1279.5 510.5h0M1279.5 544.5h0M1280.5 544.5h0M1280.5 485.5h0M1280.5 507.5h0M1280.5 503.5h0M1280.5 506.5h0M1280.5 522.5h0M1280.5 491.5h0M1281.5 530.5h0M1281.5 512.5h0M1281.5 536.5h0M1281.5 525.5h0M1281.5 522.5h0M1281.5 509.5h0M1281.5 546.5h0M1282.5 543.5h0M1282.5 551.5h0M1282.5 498.5h0M1282.5 555.5h0M1282.5 526.5h0M1282.5 527.5h0M1282.5 510.5h0M1283.5 538.5h0M1283.5 485.5h0M1283.5 514.5h0M1283.5 538.5h0M1283.5 512.5h0M1283.5 495.5h0M1283.5 521.5h0M1284.5 549.5h0M1284.5 515.5h0M1284.5 496.5h0M1284.5 530.5h0M1284.5 510.5h0M1284.5 505.5h0M1284.5 530.5h0M1285.5 527.5h0M1285.5 520.5h0M1285.5 512.5h0M1285.5 535.5h0M1285.5 493.5h0M1285.5 501.5h0M1285.5 509.5h0M1286.5 533.5h0M1286.5 516.5h0M1286.5 530.5h0M1286.5 526.5h0M1286.5 546.5h0M1286.5 554.5h0M1286.5 508.5h0M1287.5 490.5h0M1287.5 533.5h0M1287.5 495.5h0M1287.5 551.5h0M1287.5 507.5h0M1287.5 538.5h0M1287.5 515.5h0M1288.5 512.5h0M1288.5 504.5h0M1288.5 523.5h0M1288.5 537.5h0M1288.5 513.5h0M1288.5 491.5h0M1288.5 546.5h0M1289.5 564.5h0M1289.5 549.5h0M1289.5 501.5h0M1289.5 498.5h0M1289.5 538.5h0M1289.5 532.5h0M1289.5 545.5h0M1290.5 532.5h0M1290.5 549.5h0M1290.5 514.5h0M1290.5 507.5h0M1290.5 469.5h0M1290.5 504.5h0M1290.5 517.5h0M1291.5 491.5h0M1291.5 521.5h0M1291.5 509.5h0M1291.5 524.5h0M1291.5 500.5h0M1291.5 521.5h0M1291.5 522.5h0M1292.5 537.5h0M1292.5 563.5h0M1292.5 496.5h0M1292.5 516.5h0M1292.5 528.5h0M1292.5 530.5h0M1292.5 517.5h0M1293.5 511.5h0M1293.5 501.5h0M1293.5 491.5h0M1293.5 533.5h0M1293.5 465.5h0M1293.5 547.5h0M1293.5 494.5h0M1294.5 517.5h0M1294.5 540.5h0M1294.5 472.5h0M1294.5 510.5h0M1294.5 542.5h0M1294.5 484.5h0M1294.5 533.5h0M1295.5 538.5h0M1295.5 509.5h0M1295.5 490.5h0M1295.5 490.5h0M1295.5 526.5h0M1295.5 515.5h0M1296.5 531.5h0M1296.5 558.5h0M1296.5 549.5h0M1296.5 503.5h0M1296.5 528.5h0M1296.5 511.5h0M1296.5 493.5h0M1297.5 553.5h0M1297.5 532.5h0M1297.5 534.5h0M1297.5 521.5h0M1297.5 517.5h0M1297.5 507.5h0M1297.5 511.5h0M1298.5 511.5h0M1298.5 539.5h0M1298.5 521.5h0M1298.5 500.5h0M1298.5 518.5h0M1298.5 501.5h0M1298.5 524.5h0M1299.5 548.5h0M1299.5 535.5h0M1299.5 528.5h0M1299.5 539.5h0M1299.5 518.5h0M1299.5 530.5h0M1299.5 501.5h0M1300.5 558.5h0M1300.5 547.5h0M1300.5 558.5h0M1300.5 519.5h0M1300.5 527.5h0M1300.5 537.5h0M1300.5 554.5h0M1301.5 500.5h0M1301.5 508.5h0M1301.5 472.5h0M1301.5 548.5h0M1301.5 503.5h0M1301.5 559.5h0M1301.5 488.5h0M1302.5 508.5h0M1302.5 557.5h0M1302.5 541.5h0M1302.5 529.5h0M1302.5 464.5h0M1302.5 538.5h0M1302.5 542.5h0" stroke="#000" fill="none" stroke-linecap="round" stroke-width="3.6"/>
<rect x="162" y="493.7" width="108" height="40.5" fill="#ffa500" fill-opacity="0.1" stroke="#ffa500" stroke-opacity="0.1" stroke-width="1.39"/>
<rect x="270" y="487.8" width="137" height="44.4" fill="#ffa500" fill-opacity="0.1" stroke="#ffa500" stroke-opacity="0.1" stroke-width="1.39"/>
<rect x="407" y="503.4" width="717" height="47.7" fill="#ffa500" fill-opacity="0.1" stroke="#ffa500" stroke-opacity="0.1" stroke-width="1.39"/>
<rect x="1124" y="501.5" width="179" height="45.6" fill="#ffa500" fill-opacity="0.1" stroke="#ffa500" stroke-opacity="0.1" stroke-width="1.39"/>
<rect x="105.5" y="499.9" width="1254.8" height="47.3" fill="#f00" fill-opacity="0.1" stroke="#f00" stroke-opacity="0.1" stroke-width="1.39"/>
<path d="M162 666.28V380.5M270 666.28V380.5M407 666.28V380.5M1124 666.28V380.5M1303 666.28V380.5" fill="none" stroke="#800080" stroke-width="2" stroke-dasharray="2.08 3.446"/>
<path d="M162.6 513.5H270.6" stroke="#ffa500" stroke-width="2.78" stroke-linecap="square" fill="none"/>
<path d="M270.6 510.5H407.6" stroke="#ffa500" stroke-width="2.78" stroke-linecap="square" fill="none"/>
<path d="M407.6 527.3H1124.6" stroke="#ffa500" stroke-width="2.78" stroke-linecap="square" fill="none"/>
<path d="M1124.6 525.2H1303.6" stroke="#ffa500" stroke-width="2.78" stroke-linecap="square" fill="none"/>
<path d="M105.5 523H1360.3" stroke="#f00" stroke-width="2" stroke-linecap="square" fill="none"/>
</g>
<rect x="105.5" y="380.5" width="1380.0" height="286.0" fill="none" stroke="#000" stroke-width="1.11"/>
<path d="M162.5 666.5v4.9M443.5 666.5v4.9M725.5 666.5v4.9M1006.5 666.5v4.9M1287.5 666.5v4.9" stroke="#000" stroke-width="1.11" fill="none"/><text x="163" y="686.6" text-anchor="middle">0</text><text x="444.2" y="686.6" text-anchor="middle">2000</text><text x="725.4" y="686.6" text-anchor="middle">4000</text><text x="1006.7" y="686.6" text-anchor="middle">6000</text><text x="1287.9" y="686.6" text-anchor="middle">8000</text>
<path d="M105.5 640.5h-4.9M105.5 606.5h-4.9M105.5 572.5h-4.9M105.5 538.5h-4.9M105.5 504.5h-4.9M105.5 470.5h-4.9M105.5 436.5h-4.9M105.5 402.5h-4.9" stroke="#000" stroke-width="1.11" fill="none"/><text x="95.8" y="646" text-anchor="end">6.325</text><text x="95.8" y="612" text-anchor="end">6.330</text><text x="95.8" y="578" text-anchor="end">6.335</text><text x="95.8" y="544" text-anchor="end">6.340</text><text x="95.8" y="510" text-anchor="end">6.345</text><text x="95.8" y="476" text-anchor="end">6.350</text><text x="95.8" y="442" text-anchor="end">6.355</text><text x="95.8" y="408" text-anchor="end">6.360</text>
<text x="216.4" y="657.1" text-anchor="middle">46752</text><text x="338.7" y="637.1" text-anchor="middle">46747</text><text x="765.8" y="617.1" text-anchor="middle">46745</text><text x="1213.7" y="657.1" text-anchor="middle">46744</text>
<text x="794.6" y="371.6" text-anchor="middle" style="font-size:16.67px">Magnitude Estimates</text>
<rect x="1365.5" y="387.5" width="113" height="48" rx="2.8" fill="#fff" fill-opacity="0.8" stroke="#ccc" stroke-width="1.11"/>
<path d="M1370.3 399.5H1398.7" stroke="#ffa500" stroke-width="2.78" stroke-linecap="square"/><path d="M1370 422H1398.2" stroke="#f00" stroke-width="2" stroke-linecap="square"/>
<text x="1410" y="403.6">mag<tspan style="font-size:9.72px" font-style="italic" dy="2.7" dx="-0.3">OBSID</tspan></text><text x="1409.3" y="427.1">mag</text>
<rect x="1348.5" y="613.6" width="130" height="45.6" rx="2.8" fill="#fff" fill-opacity="0.8" stroke="#ccc" stroke-width="1.11"/><circle cx="1367.5" cy="626.4" r="2" fill="#ffa500"/><circle cx="1367.5" cy="647.4" r="2" fill="#000"/><text x="1393" y="629.8">Highlighted</text><text x="1393" y="651">OK</text>
<g clip-path="url(#c2)">
<path d="M773.5 758.5h0M773.5 758.5h0M773.5 758.5h0M773.5 758.5h0M774.5 758.5h0M774.5 758.5h0M774.5 758.5h0M774.5 758.5h0M774.5 758.5h0M774.5 758.5h0M774.5 758.5h0M775.5 758.5h0M775.5 758.5h0M775.5 758.5h0M775.5 758.5h0M775.5 758.5h0M775.5 758.5h0M776.5 758.5h0M776.5 758.5h0M776.5 758.5h0M776.5 758.5h0M776.5 758.5h0M776.5 758.5h0M776.5 758.5h0M777.5 758.5h0M777.5 758.5h0M777.5 758.5h0M777.5 758.5h0M777.5 758.5h0M777.5 758.5h0M777.5 758.5h0M778.5 758.5h0M778.5 758.5h0M778.5 758.5h0M778.5 758.5h0M778.5 758.5h0M778.5 758.5h0M778.5 758.5h0M779.5 758.5h0M779.5 758.5h0M779.5 758.5h0M779.5 758.5h0M779.5 758.5h0M779.5 758.5h0M779.5 758.5h0M780.5 758.5h0M780.5 758.5h0M780.5 758.5h0M780.5 758.5h0M780.5 758.5h0M780.5 758.5h0M780.5 758.5h0M781.5 758.5h0M781.5 758.5h0M781.5 758.5h0M781.5 758.5h0M781.5 758.5h0M781.5 758.5h0M781.5 758.5h0M782.5 758.5h0M782.5 758.5h0M782.5 758.5h0M782.5 758.5h0M782.5 758.5h0M782.5 758.5h0M782.5 758.5h0M783.5 758.5h0M783.5 758.5h0M783.5 758.5h0M783.5 758.5h0M783.5 758.5h0M783.5 758.5h0M783.5 758.5h0M784.5 758.5h0M784.5 758.5h0M784.5 758.5h0M784.5 758.5h0M784.5 758.5h0M784.5 758.5h0M784.5 758.5h0M785.5 758.5h0M785.5 758.5h0M785.5 758.5h0M785.5 758.5h0M785.5 758.5h0M785.5 758.5h0M785.5 758.5h0M786.5 758.5h0M786.5 758.5h0M786.5 758.5h0M786.5 758.5h0M786.5 758.5h0M786.5 758.5h0M786.5 758.5h0M787.5 758.5h0M787.5 758.5h0M787.5 758.5h0M787.5 758.5h0M787.5 758.5h0M787.5 758.5h0M787.5 758.5h0M788.5 758.5h0M788.5 758.5h0M788.5 758.5h0M788.5 758.5h0M788.5 758.5h0M788.5 758.5h0M788.5 758.5h0M789.5 758.5h0M789.5 758.5h0M789.5 758.5h0M789.5 758.5h0M789.5 758.5h0M789.5 758.5h0M789.5 758.5h0M790.5 758.5h0M790.5 758.5h0M790.5 758.5h0M790.5 758.5h0M790.5 758.5h0M790.5 758.5h0M790.5 758.5h0M791.5 758.5h0M791.5 758.5h0M791.5 758.5h0M791.5 758.5h0M791.5 758.5h0M791.5 758.5h0M792.5 758.5h0M792.5 758.5h0M792.5 758.5h0M792.5 758.5h0M792.5 758.5h0M792.5 758.5h0M792.5 758.5h0M793.5 758.5h0M793.5 758.5h0M793.5 758.5h0M793.5 758.5h0M793.5 758.5h0M793.5 758.5h0M793.5 758.5h0M794.5 758.5h0M794.5 758.5h0M794.5 758.5h0M794.5 758.5h0M794.5 758.5h0M794.5 758.5h0M794.5 758.5h0M795.5 758.5h0M795.5 758.5h0M795.5 758.5h0M795.5 758.5h0M795.5 758.5h0M795.5 758.5h0M795.5 758.5h0M796.5 758.5h0M796.5 758.5h0M796.5 758.5h0M796.5 758.5h0M796.5 758.5h0M796.5 758.5h0M796.5 758.5h0M797.5 758.5h0M797.5 758.5h0M797.5 758.5h0M797.5 758.5h0M797.5 758.5h0M797.5 758.5h0M797.5 758.5h0M798.5 758.5h0M798.5 758.5h0M798.5 758.5h0M798.5 758.5h0M798.5 758.5h0M798.5 758.5h0M798.5 758.5h0M799.5 758.5h0M799.5 758.5h0M799.5 758.5h0M799.5 758.5h0M799.5 758.5h0M799.5 758.5h0M799.5 758.5h0M800.5 758.5h0M800.5 758.5h0M800.5 758.5h0M800.5 758.5h0M800.5 758.5h0M800.5 758.5h0M800.5 758.5h0M801.5 758.5h0M801.5 758.5h0M801.5 758.5h0M801.5 758.5h0M801.5 758.5h0M801.5 758.5h0M801.5 758.5h0M802.5 758.5h0M802.5 758.5h0M802.5 758.5h0M802.5 758.5h0M802.5 758.5h0M802.5 758.5h0M802.5 758.5h0M803.5 758.5h0M803.5 758.5h0M803.5 758.5h0M803.5 758.5h0M803.5 758.5h0M803.5 758.5h0M803.5 758.5h0M804.5 758.5h0M804.5 758.5h0M804.5 758.5h0M804.5 758.5h0M804.5 758.5h0M804.5 758.5h0M804.5 758.5h0M805.5 758.5h0M805.5 758.5h0M805.5 758.5h0M805.5 758.5h0M805.5 758.5h0M805.5 758.5h0M805.5 758.5h0M806.5 758.5h0M806.5 758.5h0M806.5 758.5h0M806.5 758.5h0M806.5 758.5h0M806.5 758.5h0M806.5 758.5h0M807.5 758.5h0M807.5 758.5h0M807.5 758.5h0M807.5 758.5h0M807.5 758.5h0M807.5 758.5h0M807.5 758.5h0M808.5 758.5h0M808.5 758.5h0M808.5 758.5h0M808.5 758.5h0M808.5 758.5h0M808.5 758.5h0M809.5 758.5h0M809.5 758.5h0M809.5 758.5h0M809.5 758.5h0M809.5 758.5h0M809.5 758.5h0M809.5 758.5h0M810.5 758.5h0M810.5 758.5h0M810.5 758.5h0M810.5 758.5h0M810.5 758.5h0M810.5 758.5h0M810.5 758.5h0M811.5 758.5h0M811.5 758.5h0M811.5 758.5h0M811.5 758.5h0M811.5 758.5h0M811.5 758.5h0M811.5 758.5h0M812.5 758.5h0M812.5 758.5h0M812.5 758.5h0M812.5 758.5h0M812.5 758.5h0M812.5 758.5h0M812.5 758.5h0M813.5 758.5h0M813.5 758.5h0M813.5 758.5h0M813.5 758.5h0M813.5 758.5h0M813.5 758.5h0M813.5 758.5h0M814.5 758.5h0M814.5 758.5h0M814.5 758.5h0M814.5 758.5h0M814.5 758.5h0M814.5 758.5h0M814.5 758.5h0M815.5 758.5h0M815.5 758.5h0M815.5 758.5h0M815.5 758.5h0M815.5 758.5h0M815.5 758.5h0M815.5 758.5h0M816.5 758.5h0M816.5 758.5h0M816.5 758.5h0M816.5 758.5h0M816.5 758.5h0M816.5 758.5h0M816.5 758.5h0M817.5 758.5h0M817.5 758.5h0M817.5 758.5h0M817.5 758.5h0M817.5 758.5h0M817.5 758.5h0M817.5 758.5h0M818.5 758.5h0M818.5 758.5h0M818.5 758.5h0M818.5 758.5h0M818.5 758.5h0M818.5 758.5h0M818.5 758.5h0M819.5 758.5h0M819.5 758.5h0M819.5 758.5h0M819.5 758.5h0M819.5 758.5h0M819.5 758.5h0M819.5 758.5h0M820.5 758.5h0M820.5 758.5h0M820.5 758.5h0M820.5 758.5h0M820.5 758.5h0M820.5 758.5h0M820.5 758.5h0M821.5 758.5h0M821.5 758.5h0M821.5 758.5h0M821.5 758.5h0M821.5 758.5h0M821.5 758.5h0M821.5 758.5h0M822.5 758.5h0M822.5 758.5h0M822.5 758.5h0M822.5 758.5h0M822.5 758.5h0M822.5 758.5h0M822.5 758.5h0M823.5 758.5h0M823.5 758.5h0M823.5 758.5h0M823.5 758.5h0M823.5 758.5h0M823.5 758.5h0M823.5 758.5h0M824.5 758.5h0M824.5 758.5h0M824.5 758.5h0M824.5 758.5h0M824.5 758.5h0M824.5 758.5h0M825.5 758.5h0M825.5 758.5h0M825.5 758.5h0M825.5 758.5h0M825.5 758.5h0M825.5 758.5h0M825.5 758.5h0M826.5 758.5h0M826.5 758.5h0M826.5 758.5h0M826.5 758.5h0M826.5 758.5h0M826.5 758.5h0M826.5 758.5h0M827.5 758.5h0M827.5 758.5h0M827.5 758.5h0M827.5 758.5h0M827.5 758.5h0M827.5 758.5h0M827.5 758.5h0M828.5 758.5h0M828.5 758.5h0M828.5 758.5h0M828.5 758.5h0M828.5 758.5h0M828.5 758.5h0M828.5 758.5h0M829.5 758.5h0M829.5 758.5h0M829.5 758.5h0M829.5 758.5h0M829.5 758.5h0M829.5 758.5h0M829.5 758.5h0M830.5 758.5h0M830.5 758.5h0M830.5 758.5h0M830.5 758.5h0M830.5 758.5h0M830.5 758.5h0M830.5 758.5h0M831.5 758.5h0M831.5 758.5h0M831.5 758.5h0M831.5 758.5h0M831.5 758.5h0M831.5 758.5h0M831.5 758.5h0M832.5 758.5h0M832.5 758.5h0M832.5 758.5h0M832.5 758.5h0M832.5 758.5h0M832.5 758.5h0M832.5 758.5h0M833.5 758.5h0M833.5 758.5h0M833.5 758.5h0M833.5 758.5h0" stroke="#000" fill="none" stroke-linecap="round" stroke-width="3"/>
<path d="M162.5 1008.5h0M163.5 1009.5h0M163.5 1007.5h0M163.5 1008.5h0M163.5 1008.5h0M164.5 1008.5h0M164.5 1008.5h0M164.5 1007.5h0M165.5 1007.5h0M165.5 1008.5h0M165.5 1007.5h0M165.5 1008.5h0M166.5 1007.5h0M166.5 1008.5h0M166.5 1009.5h0M167.5 1008.5h0M167.5 1008.5h0M167.5 1008.5h0M167.5 1008.5h0M168.5 1008.5h0M168.5 1007.5h0M168.5 1008.5h0M169.5 1008.5h0M169.5 1008.5h0M169.5 1008.5h0M169.5 1008.5h0M170.5 1009.5h0M170.5 1007.5h0M170.5 1007.5h0M171.5 1007.5h0M171.5 1008.5h0M171.5 1008.5h0M171.5 1007.5h0M172.5 1008.5h0M172.5 1007.5h0M172.5 1008.5h0M173.5 1008.5h0M173.5 1008.5h0M173.5 1008.5h0M173.5 1008.5h0M174.5 1008.5h0M174.5 1008.5h0M174.5 1007.5h0M175.5 1008.5h0M175.5 1007.5h0M175.5 1009.5h0M176.5 1008.5h0M176.5 1008.5h0M176.5 1008.5h0M176.5 1008.5h0M177.5 1008.5h0M177.5 1008.5h0M177.5 1009.5h0M178.5 1008.5h0M178.5 1008.5h0M178.5 1008.5h0M178.5 1008.5h0M179.5 1008.5h0M179.5 1007.5h0M179.5 1008.5h0M180.5 1008.5h0M180.5 1008.5h0M180.5 1008.5h0M180.5 1008.5h0M181.5 1008.5h0M181.5 1008.5h0M181.5 1008.5h0M182.5 1008.5h0M182.5 1007.5h0M182.5 1007.5h0M182.5 1008.5h0M183.5 1009.5h0M183.5 1008.5h0M183.5 1008.5h0M184.5 1008.5h0M184.5 1008.5h0M184.5 1008.5h0M184.5 1008.5h0M185.5 1008.5h0M185.5 1008.5h0M185.5 1008.5h0M186.5 1007.5h0M186.5 1008.5h0M186.5 1009.5h0M186.5 1008.5h0M187.5 1008.5h0M187.5 1008.5h0M187.5 1007.5h0M188.5 1008.5h0M188.5 1008.5h0M188.5 1008.5h0M188.5 1009.5h0M189.5 1008.5h0M189.5 1008.5h0M189.5 1008.5h0M190.5 1008.5h0M190.5 1008.5h0M190.5 1008.5h0M190.5 1007.5h0M191.5 1007.5h0M191.5 1008.5h0M191.5 1008.5h0M192.5 1008.5h0M192.5 1007.5h0M192.5 1008.5h0M193.5 1008.5h0M193.5 1007.5h0M193.5 1008.5h0M193.5 1008.5h0M194.5 1007.5h0M194.5 1008.5h0M194.5 1008.5h0M195.5 1007.5h0M195.5 1008.5h0M195.5 1008.5h0M195.5 1008.5h0M196.5 1008.5h0M196.5 1008.5h0M196.5 1008.5h0M197.5 1008.5h0M197.5 1008.5h0M197.5 1008.5h0M197.5 1008.5h0M198.5 1008.5h0M198.5 1007.5h0M198.5 1008.5h0M199.5 1007.5h0M199.5 1008.5h0M199.5 1008.5h0M199.5 1007.5h0M200.5 1008.5h0M200.5 1007.5h0M200.5 1008.5h0M201.5 1008.5h0M201.5 1008.5h0M201.5 1009.5h0M201.5 1008.5h0M202.5 1008.5h0M202.5 1008.5h0M202.5 1008.5h0M203.5 1008.5h0M203.5 1008.5h0M203.5 1008.5h0M203.5 1008.5h0M204.5 1009.5h0M204.5 1008.5h0M204.5 1008.5h0M205.5 1008.5h0M205.5 1008.5h0M205.5 1008.5h0M205.5 1008.5h0M206.5 1007.5h0M206.5 1008.5h0M206.5 1008.5h0M207.5 1008.5h0M207.5 1008.5h0M207.5 1008.5h0M208.5 1007.5h0M208.5 1008.5h0M208.5 1008.5h0M208.5 1008.5h0M209.5 1007.5h0M209.5 1007.5h0M209.5 1007.5h0M210.5 1007.5h0M210.5 1006.5h0M210.5 1008.5h0M210.5 1008.5h0M211.5 1008.5h0M211.5 1008.5h0M211.5 1008.5h0M212.5 1008.5h0M212.5 1008.5h0M212.5 1008.5h0M212.5 1007.5h0M213.5 1008.5h0M213.5 1008.5h0M213.5 1009.5h0M214.5 1008.5h0M214.5 1008.5h0M214.5 1008.5h0M214.5 1008.5h0M215.5 1008.5h0M215.5 1008.5h0M215.5 1008.5h0M216.5 1008.5h0M216.5 1009.5h0M216.5 1007.5h0M216.5 1008.5h0M217.5 1008.5h0M217.5 1007.5h0M217.5 1008.5h0M218.5 1008.5h0M218.5 1008.5h0M218.5 1008.5h0M218.5 1008.5h0M219.5 1008.5h0M219.5 1008.5h0M219.5 1007.5h0M220.5 1009.5h0M220.5 1009.5h0M220.5 1008.5h0M220.5 1008.5h0M221.5 1008.5h0M221.5 1008.5h0M221.5 1007.5h0M222.5 1008.5h0M222.5 1008.5h0M222.5 1007.5h0M222.5 1008.5h0M223.5 1008.5h0M223.5 1008.5h0M223.5 1008.5h0M224.5 1007.5h0M224.5 1008.5h0M224.5 1008.5h0M225.5 1008.5h0M225.5 1008.5h0M225.5 1008.5h0M225.5 1008.5h0M226.5 1008.5h0M226.5 1008.5h0M226.5 1008.5h0M227.5 1008.5h0M227.5 1008.5h0M227.5 1008.5h0M227.5 1007.5h0M228.5 1008.5h0M228.5 1008.5h0M228.5 1009.5h0M229.5 1008.5h0M229.5 1008.5h0M229.5 1008.5h0M229.5 1007.5h0M230.5 1007.5h0M230.5 1008.5h0M230.5 1008.5h0M231.5 1008.5h0M231.5 1008.5h0M231.5 1008.5h0M231.5 1008.5h0M232.5 1008.5h0M232.5 1008.5h0M232.5 1008.5h0M233.5 1008.5h0M233.5 1008.5h0M233.5 1007.5h0M233.5 1008.5h0M234.5 1008.5h0M234.5 1009.5h0M234.5 1008.5h0M235.5 1008.5h0M235.5 1008.5h0M235.5 1008.5h0M235.5 1007.5h0M236.5 1008.5h0M236.5 1008.5h0M236.5 1008.5h0M237.5 1008.5h0M237.5 1008.5h0M237.5 1008.5h0M237.5 1007.5h0M238.5 1008.5h0M238.5 1008.5h0M238.5 1008.5h0M239.5 1007.5h0M239.5 1008.5h0M239.5 1008.5h0M240.5 1008.5h0M240.5 1007.5h0M240.5 1008.5h0M240.5 1007.5h0M241.5 1008.5h0M241.5 1008.5h0M241.5 1007.5h0M242.5 1008.5h0M242.5 1007.5h0M242.5 1008.5h0M242.5 1008.5h0M243.5 1008.5h0M243.5 1008.5h0M243.5 1008.5h0M244.5 1008.5h0M244.5 1008.5h0M244.5 1008.5h0M244.5 1008.5h0M245.5 1008.5h0M245.5 1008.5h0M245.5 1008.5h0M246.5 1007.5h0M246.5 1008.5h0M246.5 1007.5h0M246.5 1008.5h0M247.5 1008.5h0M247.5 1008.5h0M247.5 1008.5h0M248.5 1009.5h0M248.5 1008.5h0M248.5 1008.5h0M248.5 1008.5h0M249.5 1008.5h0M249.5 1008.5h0M249.5 1008.5h0M250.5 1008.5h0M250.5 1008.5h0M250.5 1008.5h0M250.5 1008.5h0M251.5 1008.5h0M251.5 1008.5h0M251.5 1007.5h0M252.5 1007.5h0M252.5 1008.5h0M252.5 1008.5h0M252.5 1008.5h0M253.5 1008.5h0M253.5 1009.5h0M253.5 1008.5h0M254.5 1008.5h0M254.5 1008.5h0M254.5 1008.5h0M254.5 1008.5h0M255.5 1008.5h0M255.5 1008.5h0M255.5 1008.5h0M256.5 1008.5h0M256.5 1008.5h0M256.5 1008.5h0M257.5 1008.5h0M257.5 1008.5h0M257.5 1008.5h0M257.5 1008.5h0M258.5 1007.5h0M258.5 1007.5h0M258.5 1008.5h0M259.5 1008.5h0M259.5 1008.5h0M259.5 1008.5h0M259.5 1008.5h0M260.5 1008.5h0M260.5 1007.5h0M260.5 1008.5h0M261.5 1008.5h0M261.5 1008.5h0M261.5 1009.5h0M261.5 1009.5h0M262.5 1008.5h0M262.5 1007.5h0M262.5 1008.5h0M263.5 1008.5h0M263.5 1007.5h0M263.5 1008.5h0M263.5 1008.5h0M264.5 1008.5h0M264.5 1008.5h0M264.5 1008.5h0M265.5 1008.5h0M265.5 1007.5h0M265.5 1009.5h0M265.5 1007.5h0M266.5 1007.5h0M266.5 1008.5h0M266.5 1008.5h0M267.5 1008.5h0M267.5 1008.5h0M267.5 1007.5h0M267.5 1008.5h0M268.5 1008.5h0M268.5 1008.5h0M268.5 1008.5h0M269.5 1008.5h0M269.5 1008.5h0M269.5 1007.5h0M269.5 1008.5h0M270.5 1008.5h0M270.5 1007.5h0M270.5 1008.5h0M271.5 1008.5h0M271.5 1008.5h0M271.5 1007.5h0M271.5 1007.5h0M272.5 1008.5h0M272.5 1008.5h0M272.5 1008.5h0M273.5 1008.5h0M273.5 1008.5h0M273.5 1008.5h0M274.5 1008.5h0M274.5 1008.5h0M274.5 1008.5h0M274.5 1008.5h0M275.5 1008.5h0M275.5 1009.5h0M275.5 1008.5h0M276.5 1007.5h0M276.5 1008.5h0M276.5 1008.5h0M276.5 1008.5h0M277.5 1008.5h0M277.5 1008.5h0M277.5 1008.5h0M278.5 1008.5h0M278.5 1008.5h0M278.5 1008.5h0M278.5 1008.5h0M279.5 1008.5h0M279.5 1008.5h0M279.5 1008.5h0M280.5 1008.5h0M280.5 1008.5h0M280.5 1007.5h0M280.5 1007.5h0M281.5 1008.5h0M281.5 1008.5h0M281.5 1007.5h0M282.5 1007.5h0M282.5 1008.5h0M282.5 1008.5h0M282.5 1008.5h0M283.5 1009.5h0M283.5 1008.5h0M283.5 1007.5h0M284.5 1008.5h0M284.5 1008.5h0M284.5 1008.5h0M284.5 1008.5h0M285.5 1005.5h0M285.5 1008.5h0M285.5 1008.5h0M286.5 1008.5h0M286.5 1008.5h0M286.5 1007.5h0M286.5 1007.5h0M287.5 1008.5h0M287.5 1007.5h0M287.5 1008.5h0M288.5 1007.5h0M288.5 1008.5h0M288.5 1008.5h0M289.5 1008.5h0M289.5 1008.5h0M289.5 1008.5h0M289.5 1008.5h0M290.5 1009.5h0M290.5 1008.5h0M290.5 1008.5h0M291.5 1008.5h0M291.5 1008.5h0M291.5 1007.5h0M291.5 1008.5h0M292.5 1008.5h0M292.5 1008.5h0M292.5 1007.5h0M293.5 1008.5h0M293.5 1008.5h0M293.5 1008.5h0M293.5 1007.5h0M294.5 1008.5h0M294.5 1008.5h0M294.5 1008.5h0M295.5 1008.5h0M295.5 1008.5h0M295.5 1008.5h0M295.5 1008.5h0M296.5 1008.5h0M296.5 1007.5h0M296.5 1008.5h0M297.5 1008.5h0M297.5 1008.5h0M297.5 1007.5h0M297.5 1008.5h0M298.5 1007.5h0M298.5 1008.5h0M298.5 1008.5h0M299.5 1008.5h0M299.5 1008.5h0M299.5 1008.5h0M299.5 1008.5h0M300.5 1008.5h0M300.5 1007.5h0M300.5 1008.5h0M301.5 1008.5h0M301.5 1008.5h0M301.5 1008.5h0M301.5 1008.5h0M302.5 1008.5h0M302.5 1007.5h0M302.5 1008.5h0M303.5 1008.5h0M303.5 1008.5h0M303.5 1008.5h0M303.5 1008.5h0M304.5 1008.5h0M304.5 1008.5h0M304.5 1008.5h0M305.5 1008.5h0M305.5 1008.5h0M305.5 1008.5h0M306.5 1008.5h0M306.5 1008.5h0M306.5 1008.5h0M306.5 1008.5h0M307.5 1008.5h0M307.5 1008.5h0M307.5 1008.5h0M308.5 1008.5h0M308.5 1008.5h0M308.5 1007.5h0M308.5 1008.5h0M309.5 1008.5h0M309.5 1008.5h0M309.5 1008.5h0M310.5 1008.5h0M310.5 1007.5h0M310.5 1008.5h0M310.5 1008.5h0M311.5 1008.5h0M311.5 1008.5h0M311.5 1008.5h0M312.5 1007.5h0M312.5 1008.5h0M312.5 1009.5h0M312.5 1008.5h0M313.5 1008.5h0M313.5 1008.5h0M313.5 1008.5h0M314.5 1007.5h0M314.5 1008.5h0M314.5 1007.5h0M314.5 1008.5h0M315.5 1008.5h0M315.5 1008.5h0M315.5 1008.5h0M316.5 1008.5h0M316.5 1008.5h0M316.5 1008.5h0M316.5 1007.5h0M317.5 1008.5h0M317.5 1008.5h0M317.5 1008.5h0M318.5 1008.5h0M318.5 1009.5h0M318.5 1008.5h0M318.5 1008.5h0M319.5 1008.5h0M319.5 1007.5h0M319.5 1008.5h0M320.5 1008.5h0M320.5 1008.5h0M320.5 1008.5h0M321.5 1008.5h0M321.5 1008.5h0M321.5 1007.5h0M321.5 1008.5h0M322.5 1008.5h0M322.5 1008.5h0M322.5 1008.5h0M323.5 1008.5h0M323.5 1008.5h0M323.5 1008.5h0M323.5 1008.5h0M324.5 1009.5h0M324.5 1008.5h0M324.5 1008.5h0M325.5 1008.5h0M325.5 1008.5h0M325.5 1008.5h0M325.5 1007.5h0M326.5 1008.5h0M326.5 1008.5h0M326.5 1008.5h0M327.5 1007.5h0M327.5 1008.5h0M327.5 1008.5h0M327.5 1008.5h0M328.5 1008.5h0M328.5 1008.5h0M328.5 1008.5h0M329.5 1008.5h0M329.5 1007.5h0M329.5 1008.5h0M329.5 1007.5h0M330.5 1007.5h0M330.5 1008.5h0M330.5 1008.5h0M331.5 1008.5h0M331.5 1008.5h0M331.5 1008.5h0M331.5 1008.5h0M332.5 1007.5h0M332.5 1008.5h0M332.5 1008.5h0M333.5 1007.5h0M333.5 1008.5h0M333.5 1008.5h0M333.5 1008.5h0M334.5 1008.5h0M334.5 1008.5h0M334.5 1008.5h0M335.5 1007.5h0M335.5 1008.5h0M335.5 1008.5h0M335.5 1008.5h0M336.5 1008.5h0M336.5 1007.5h0M336.5 1008.5h0M337.5 1007.5h0M337.5 1008.5h0M337.5 1008.5h0M338.5 1008.5h0M338.5 1008.5h0M338.5 1008.5h0M338.5 1008.5h0M339.5 1008.5h0M339.5 1008.5h0M339.5 1008.5h0M340.5 1008.5h0M340.5 1008.5h0M340.5 1008.5h0M340.5 1008.5h0M341.5 1008.5h0M341.5 1008.5h0M341.5 1008.5h0M342.5 1008.5h0M342.5 1007.5h0M342.5 1008.5h0M342.5 1008.5h0M343.5 1008.5h0M343.5 1008.5h0M343.5 1008.5h0M344.5 1007.5h0M344.5 1008.5h0M344.5 1008.5h0M344.5 1008.5h0M345.5 1008.5h0M345.5 1008.5h0M345.5 1007.5h0M346.5 1008.5h0M346.5 1008.5h0M346.5 1008.5h0M346.5 1007.5h0M347.5 1008.5h0M347.5 1008.5h0M347.5 1008.5h0M348.5 1008.5h0M348.5 1008.5h0M348.5 1008.5h0M348.5 1008.5h0M349.5 1008.5h0M349.5 1007.5h0M349.5 1008.5h0M350.5 1008.5h0M350.5 1008.5h0M350.5 1008.5h0M350.5 1008.5h0M351.5 1008.5h0M351.5 1008.5h0M351.5 1008.5h0M352.5 1009.5h0M352.5 1008.5h0M352.5 1009.5h0M352.5 1008.5h0M353.5 1008.5h0M353.5 1008.5h0M353.5 1008.5h0M354.5 1008.5h0M354.5 1008.5h0M354.5 1008.5h0M355.5 1007.5h0M355.5 1008.5h0M355.5 1008.5h0M355.5 1008.5h0M356.5 1008.5h0M356.5 1008.5h0M356.5 1007.5h0M357.5 1008.5h0M357.5 1008.5h0M357.5 1008.5h0M357.5 1008.5h0M358.5 1008.5h0M358.5 1008.5h0M358.5 1008.5h0M359.5 1007.5h0M359.5 1008.5h0M359.5 1008.5h0M359.5 1008.5h0M360.5 1007.5h0M360.5 1008.5h0M360.5 1007.5h0M361.5 1008.5h0M361.5 1007.5h0M361.5 1007.5h0M361.5 1008.5h0M362.5 1007.5h0M362.5 1007.5h0M362.5 1008.5h0M363.5 1008.5h0M363.5 1008.5h0M363.5 1008.5h0M363.5 1008.5h0M364.5 1008.5h0M364.5 1008.5h0M364.5 1008.5h0M365.5 1007.5h0M365.5 1007.5h0M365.5 1008.5h0M365.5 1008.5h0M366.5 1008.5h0M366.5 1008.5h0M366.5 1008.5h0M367.5 1008.5h0M367.5 1008.5h0M367.5 1008.5h0M367.5 1008.5h0M368.5 1008.5h0M368.5 1008.5h0M368.5 1007.5h0M369.5 1008.5h0M369.5 1008.5h0M369.5 1008.5h0M370.5 1008.5h0M370.5 1008.5h0M370.5 1008.5h0M370.5 1008.5h0M371.5 1008.5h0M371.5 1007.5h0M371.5 1007.5h0M372.5 1008.5h0M372.5 1008.5h0M372.5 1008.5h0M372.5 1008.5h0M373.5 1008.5h0M373.5 1008.5h0M373.5 1008.5h0M374.5 1008.5h0M374.5 1008.5h0M374.5 1008.5h0M374.5 1008.5h0M375.5 1007.5h0M375.5 1008.5h0M375.5 1008.5h0M376.5 1007.5h0M376.5 1008.5h0M376.5 1007.5h0M376.5 1008.5h0M377.5 1008.5h0M377.5 1008.5h0M377.5 1008.5h0M378.5 1008.5h0M378.5 1008.5h0M378.5 1009.5h0M378.5 1008.5h0M379.5 1008.5h0M379.5 1008.5h0M379.5 1008.5h0M380.5 1008.5h0M380.5 1008.5h0M380.5 1008.5h0M380.5 1008.5h0M381.5 1008.5h0M381.5 1008.5h0M381.5 1008.5h0M382.5 1008.5h0M382.5 1008.5h0M382.5 1008.5h0M382.5 1008.5h0M383.5 1008.5h0M383.5 1008.5h0M383.5 1008.5h0M384.5 1008.5h0M384.5 1008.5h0M384.5 1007.5h0M384.5 1008.5h0M385.5 1007.5h0M385.5 1009.5h0M385.5 1008.5h0M386.5 1008.5h0M386.5 1008.5h0M386.5 1008.5h0M387.5 1007.5h0M387.5 1008.5h0M387.5 1007.5h0M387.5 1008.5h0M388.5 1008.5h0M388.5 1008.5h0M388.5 1008.5h0M389.5 1008.5h0M389.5 1007.5h0M389.5 1007.5h0M389.5 1008.5h0M390.5 1008.5h0M390.5 1008.5h0M390.5 1008.5h0M391.5 1008.5h0M391.5 1008.5h0M391.5 1008.5h0M391.5 1008.5h0M392.5 1008.5h0M392.5 1008.5h0M392.5 1008.5h0M393.5 1008.5h0M393.5 1008.5h0M393.5 1008.5h0M393.5 1008.5h0M394.5 1007.5h0M394.5 1008.5h0M394.5 1008.5h0M395.5 1009.5h0M395.5 1008.5h0M395.5 1008.5h0M395.5 1008.5h0M396.5 1007.5h0M396.5 1008.5h0M396.5 1008.5h0M397.5 1007.5h0M397.5 1007.5h0M397.5 1008.5h0M397.5 1008.5h0M398.5 1008.5h0M398.5 1008.5h0M398.5 1008.5h0M399.5 1009.5h0M399.5 1007.5h0M399.5 1008.5h0M399.5 1008.5h0M400.5 1008.5h0M400.5 1006.5h0M400.5 1008.5h0M401.5 1008.5h0M401.5 1008.5h0M401.5 1007.5h0M401.5 1008.5h0M402.5 1007.5h0M402.5 1007.5h0M402.5 1008.5h0M403.5 1008.5h0M403.5 1007.5h0M403.5 1009.5h0M404.5 1008.5h0M404.5 1008.5h0M404.5 1009.5h0M404.5 1007.5h0M405.5 1008.5h0M405.5 1008.5h0M405.5 1008.5h0M406.5 1007.5h0M406.5 1007.5h0M406.5 1007.5h0M406.5 1008.5h0M407.5 1009.5h0M407.5 1008.5h0M407.5 1008.5h0M408.5 1008.5h0M408.5 1008.5h0M408.5 1008.5h0M408.5 1009.5h0M409.5 1007.5h0M409.5 1008.5h0M409.5 1008.5h0M410.5 1008.5h0M410.5 1009.5h0M410.5 1009.5h0M410.5 1008.5h0M411.5 1008.5h0M411.5 1008.5h0M411.5 1008.5h0M412.5 1008.5h0M412.5 1008.5h0M412.5 1008.5h0M412.5 1008.5h0M413.5 1008.5h0M413.5 1008.5h0M413.5 1008.5h0M414.5 1008.5h0M414.5 1008.5h0M414.5 1008.5h0M414.5 1008.5h0M415.5 1008.5h0M415.5 1007.5h0M415.5 1008.5h0M416.5 1008.5h0M416.5 1008.5h0M416.5 1008.5h0M416.5 1007.5h0M417.5 1008.5h0M417.5 1007.5h0M417.5 1008.5h0M418.5 1008.5h0M418.5 1008.5h0M418.5 1008.5h0M419.5 1008.5h0M419.5 1008.5h0M419.5 1008.5h0M419.5 1007.5h0M420.5 1008.5h0M420.5 1008.5h0M420.5 1008.5h0M421.5 1007.5h0M421.5 1008.5h0M421.5 1009.5h0M421.5 1008.5h0M422.5 1008.5h0M422.5 1008.5h0M422.5 1008.5h0M423.5 1007.5h0M423.5 1009.5h0M423.5 1008.5h0M423.5 1008.5h0M424.5 1008.5h0M424.5 1007.5h0M424.5 1008.5h0M425.5 1008.5h0M425.5 1008.5h0M425.5 1008.5h0M425.5 1008.5h0M426.5 1008.5h0M426.5 1008.5h0M426.5 1008.5h0M427.5 1008.5h0M427.5 1008.5h0M427.5 1009.5h0M427.5 1008.5h0M428.5 1008.5h0M428.5 1008.5h0M428.5 1008.5h0M429.5 1008.5h0M429.5 1008.5h0M429.5 1008.5h0M429.5 1008.5h0M430.5 1007.5h0M430.5 1008.5h0M430.5 1008.5h0M431.5 1008.5h0M431.5 1007.5h0M431.5 1008.5h0M431.5 1008.5h0M432.5 1008.5h0M432.5 1008.5h0M432.5 1008.5h0M433.5 1008.5h0M433.5 1008.5h0M433.5 1008.5h0M433.5 1007.5h0M434.5 1008.5h0M434.5 1008.5h0M434.5 1008.5h0M435.5 1008.5h0M435.5 1008.5h0M435.5 1008.5h0M436.5 1008.5h0M436.5 1008.5h0M436.5 1008.5h0M436.5 1008.5h0M437.5 1007.5h0M437.5 1007.5h0M437.5 1008.5h0M438.5 1008.5h0M438.5 1008.5h0M438.5 1007.5h0M438.5 1008.5h0M439.5 1008.5h0M439.5 1008.5h0M439.5 1008.5h0M440.5 1008.5h0M440.5 1007.5h0M440.5 1008.5h0M440.5 1007.5h0M441.5 1008.5h0M441.5 1007.5h0M441.5 1008.5h0M442.5 1008.5h0M442.5 1008.5h0M442.5 1008.5h0M442.5 1007.5h0M443.5 1009.5h0M443.5 1009.5h0M443.5 1008.5h0M444.5 1008.5h0M444.5 1008.5h0M444.5 1008.5h0M444.5 1008.5h0M445.5 1008.5h0M445.5 1008.5h0M445.5 1008.5h0M446.5 1008.5h0M446.5 1008.5h0M446.5 1007.5h0M446.5 1008.5h0M447.5 1008.5h0M447.5 1008.5h0M447.5 1008.5h0M448.5 1008.5h0M448.5 1008.5h0M448.5 1008.5h0M448.5 1009.5h0M449.5 1008.5h0M449.5 1008.5h0M449.5 1008.5h0M450.5 1007.5h0M450.5 1008.5h0M450.5 1008.5h0M451.5 1008.5h0M451.5 1008.5h0M451.5 1008.5h0M451.5 1008.5h0M452.5 1007.5h0M452.5 1008.5h0M452.5 1008.5h0M453.5 1008.5h0M453.5 1007.5h0M453.5 1008.5h0M453.5 1008.5h0M454.5 1008.5h0M454.5 1008.5h0M454.5 1008.5h0M455.5 1006.5h0M455.5 1008.5h0M455.5 1007.5h0M455.5 1008.5h0M456.5 1007.5h0M456.5 1008.5h0M456.5 1008.5h0M457.5 1007.5h0M457.5 1008.5h0M457.5 1008.5h0M457.5 1008.5h0M458.5 1008.5h0M458.5 1008.5h0M458.5 1008.5h0M459.5 1008.5h0M459.5 1009.5h0M459.5 1008.5h0M459.5 1007.5h0M460.5 1008.5h0M460.5 1008.5h0M460.5 1008.5h0M461.5 1008.5h0M461.5 1008.5h0M461.5 1008.5h0M461.5 1008.5h0M462.5 1007.5h0M462.5 1008.5h0M462.5 1008.5h0M463.5 1008.5h0M463.5 1007.5h0M463.5 1007.5h0M463.5 1008.5h0M464.5 1008.5h0M464.5 1008.5h0M464.5 1008.5h0M465.5 1008.5h0M465.5 1008.5h0M465.5 1008.5h0M465.5 1008.5h0M466.5 1009.5h0M466.5 1007.5h0M466.5 1008.5h0M467.5 1007.5h0M467.5 1008.5h0M467.5 1008.5h0M468.5 1009.5h0M468.5 1008.5h0M468.5 1008.5h0M468.5 1008.5h0M469.5 1007.5h0M469.5 1008.5h0M469.5 1008.5h0M470.5 1007.5h0M470.5 1008.5h0M470.5 1008.5h0M470.5 1007.5h0M471.5 1008.5h0M471.5 1008.5h0M471.5 1008.5h0M472.5 1008.5h0M472.5 1008.5h0M472.5 1008.5h0M472.5 1008.5h0M473.5 1009.5h0M473.5 1008.5h0M473.5 1008.5h0M474.5 1008.5h0M474.5 1008.5h0M474.5 1008.5h0M474.5 1008.5h0M475.5 1008.5h0M475.5 1008.5h0M475.5 1008.5h0M476.5 1008.5h0M476.5 1008.5h0M476.5 1008.5h0M476.5 1008.5h0M477.5 1008.5h0M477.5 1008.5h0M477.5 1008.5h0M478.5 1008.5h0M478.5 1008.5h0M478.5 1008.5h0M478.5 1008.5h0M479.5 1007.5h0M479.5 1008.5h0M479.5 1008.5h0M480.5 1008.5h0M480.5 1008.5h0M480.5 1008.5h0M480.5 1008.5h0M481.5 1008.5h0M481.5 1008.5h0M481.5 1008.5h0M482.5 1007.5h0M482.5 1008.5h0M482.5 1008.5h0M482.5 1007.5h0M483.5 1008.5h0M483.5 1008.5h0M483.5 1007.5h0M484.5 1007.5h0M484.5 1007.5h0M484.5 1008.5h0M485.5 1008.5h0M485.5 1008.5h0M485.5 1008.5h0M485.5 1008.5h0M486.5 1009.5h0M486.5 1008.5h0M486.5 1008.5h0M487.5 1008.5h0M487.5 1008.5h0M487.5 1008.5h0M487.5 1008.5h0M488.5 1009.5h0M488.5 1008.5h0M488.5 1008.5h0M489.5 1008.5h0M489.5 1008.5h0M489.5 1007.5h0M489.5 1008.5h0M490.5 1007.5h0M490.5 1007.5h0M490.5 1007.5h0M491.5 1008.5h0M491.5 1009.5h0M491.5 1007.5h0M491.5 1008.5h0M492.5 1008.5h0M492.5 1008.5h0M492.5 1007.5h0M493.5 1008.5h0M493.5 1007.5h0M493.5 1008.5h0M493.5 1008.5h0M494.5 1008.5h0M494.5 1008.5h0M494.5 1007.5h0M495.5 1008.5h0M495.5 1007.5h0M495.5 1008.5h0M495.5 1007.5h0M496.5 1008.5h0M496.5 1008.5h0M496.5 1008.5h0M497.5 1008.5h0M497.5 1008.5h0M497.5 1008.5h0M497.5 1008.5h0M498.5 1008.5h0M498.5 1008.5h0M498.5 1008.5h0M499.5 1008.5h0M499.5 1008.5h0M499.5 1008.5h0M500.5 1008.5h0M500.5 1008.5h0M500.5 1008.5h0M500.5 1008.5h0M501.5 1008.5h0M501.5 1008.5h0M501.5 1008.5h0M502.5 1008.5h0M502.5 1007.5h0M502.5 1009.5h0M502.5 1007.5h0M503.5 1008.5h0M503.5 1008.5h0M503.5 1008.5h0M504.5 1008.5h0M504.5 1008.5h0M504.5 1008.5h0M504.5 1008.5h0M505.5 1008.5h0M505.5 1008.5h0M505.5 1007.5h0M506.5 1008.5h0M506.5 1008.5h0M506.5 1007.5h0M506.5 1008.5h0M507.5 1008.5h0M507.5 1008.5h0M507.5 1008.5h0M508.5 1008.5h0M508.5 1008.5h0M508.5 1008.5h0M508.5 1007.5h0M509.5 1008.5h0M509.5 1009.5h0M509.5 1008.5h0M510.5 1008.5h0M510.5 1009.5h0M510.5 1007.5h0M510.5 1008.5h0M511.5 1008.5h0M511.5 1008.5h0M511.5 1008.5h0M512.5 1008.5h0M512.5 1008.5h0M512.5 1007.5h0M512.5 1008.5h0M513.5 1008.5h0M513.5 1008.5h0M513.5 1008.5h0M514.5 1008.5h0M514.5 1008.5h0M514.5 1008.5h0M514.5 1008.5h0M515.5 1007.5h0M515.5 1008.5h0M515.5 1008.5h0M516.5 1007.5h0M516.5 1008.5h0M516.5 1008.5h0M517.5 1008.5h0M517.5 1007.5h0M517.5 1008.5h0M517.5 1008.5h0M518.5 1008.5h0M518.5 1007.5h0M518.5 1008.5h0M519.5 1008.5h0M519.5 1008.5h0M519.5 1008.5h0M519.5 1008.5h0M520.5 1008.5h0M520.5 1008.5h0M520.5 1008.5h0M521.5 1008.5h0M521.5 1008.5h0M521.5 1007.5h0M521.5 1008.5h0M522.5 1007.5h0M522.5 1007.5h0M522.5 1007.5h0M523.5 1008.5h0M523.5 1008.5h0M523.5 1008.5h0M523.5 1008.5h0M524.5 1009.5h0M524.5 1009.5h0M524.5 1008.5h0M525.5 1008.5h0M525.5 1007.5h0M525.5 1008.5h0M525.5 1008.5h0M526.5 1007.5h0M526.5 1007.5h0M526.5 1008.5h0M527.5 1008.5h0M527.5 1007.5h0M527.5 1008.5h0M527.5 1008.5h0M528.5 1008.5h0M528.5 1008.5h0M528.5 1008.5h0M529.5 1007.5h0M529.5 1007.5h0M529.5 1008.5h0M529.5 1008.5h0M530.5 1008.5h0M530.5 1008.5h0M530.5 1008.5h0M531.5 1008.5h0M531.5 1007.5h0M531.5 1008.5h0M531.5 1008.5h0M532.5 1008.5h0M532.5 1008.5h0M532.5 1008.5h0M533.5 1008.5h0M533.5 1008.5h0M533.5 1007.5h0M534.5 1008.5h0M534.5 1008.5h0M534.5 1008.5h0M534.5 1008.5h0M535.5 1007.5h0M535.5 1008.5h0M535.5 1008.5h0M536.5 1007.5h0M536.5 1008.5h0M536.5 1008.5h0M536.5 1008.5h0M537.5 1008.5h0M537.5 1008.5h0M537.5 1008.5h0M538.5 1008.5h0M538.5 1008.5h0M538.5 1008.5h0M538.5 1008.5h0M539.5 1008.5h0M539.5 1008.5h0M539.5 1008.5h0M540.5 1008.5h0M540.5 1008.5h0M540.5 1007.5h0M540.5 1008.5h0M541.5 1007.5h0M541.5 1007.5h0M541.5 1008.5h0M542.5 1007.5h0M542.5 1008.5h0M542.5 1008.5h0M542.5 1008.5h0M543.5 1007.5h0M543.5 1008.5h0M543.5 1008.5h0M544.5 1008.5h0M544.5 1008.5h0M544.5 1008.5h0M544.5 1008.5h0M545.5 1008.5h0M545.5 1008.5h0M545.5 1008.5h0M546.5 1008.5h0M546.5 1007.5h0M546.5 1008.5h0M546.5 1008.5h0M547.5 1007.5h0M547.5 1008.5h0M547.5 1008.5h0M548.5 1008.5h0M548.5 1008.5h0M548.5 1008.5h0M549.5 1008.5h0M549.5 1008.5h0M549.5 1009.5h0M549.5 1008.5h0M550.5 1008.5h0M550.5 1008.5h0M550.5 1008.5h0M551.5 1008.5h0M551.5 1008.5h0M551.5 1008.5h0M551.5 1008.5h0M552.5 1008.5h0M552.5 1008.5h0M552.5 1007.5h0M553.5 1008.5h0M553.5 1009.5h0M553.5 1008.5h0M553.5 1008.5h0M554.5 1008.5h0M554.5 1007.5h0M554.5 1008.5h0M555.5 1008.5h0M555.5 1008.5h0M555.5 1008.5h0M555.5 1008.5h0M556.5 1008.5h0M556.5 1008.5h0M556.5 1007.5h0M557.5 1008.5h0M557.5 1008.5h0M557.5 1008.5h0M557.5 1007.5h0M558.5 1008.5h0M558.5 1008.5h0M558.5 1007.5h0M559.5 1007.5h0M559.5 1008.5h0M559.5 1008.5h0M559.5 1008.5h0M560.5 1008.5h0M560.5 1008.5h0M560.5 1008.5h0M561.5 1009.5h0M561.5 1008.5h0M561.5 1008.5h0M561.5 1008.5h0M562.5 1008.5h0M562.5 1008.5h0M562.5 1008.5h0M563.5 1008.5h0M563.5 1008.5h0M563.5 1008.5h0M563.5 1008.5h0M564.5 1008.5h0M564.5 1008.5h0M564.5 1008.5h0M565.5 1008.5h0M565.5 1008.5h0M565.5 1008.5h0M566.5 1008.5h0M566.5 1007.5h0M566.5 1008.5h0M566.5 1008.5h0M567.5 1008.5h0M567.5 1008.5h0M567.5 1008.5h0M568.5 1008.5h0M568.5 1007.5h0M568.5 1008.5h0M568.5 1007.5h0M569.5 1007.5h0M569.5 1008.5h0M569.5 1009.5h0M570.5 1008.5h0M570.5 1008.5h0M570.5 1008.5h0M570.5 1007.5h0M571.5 1008.5h0M571.5 1008.5h0M571.5 1008.5h0M572.5 1007.5h0M572.5 1007.5h0M572.5 1008.5h0M572.5 1008.5h0M573.5 1008.5h0M573.5 1008.5h0M573.5 1008.5h0M574.5 1008.5h0M574.5 1008.5h0M574.5 1008.5h0M574.5 1008.5h0M575.5 1008.5h0M575.5 1008.5h0M575.5 1007.5h0M576.5 1008.5h0M576.5 1008.5h0M576.5 1007.5h0M576.5 1008.5h0M577.5 1008.5h0M577.5 1008.5h0M577.5 1009.5h0M578.5 1008.5h0M578.5 1008.5h0M578.5 1008.5h0M578.5 1008.5h0M579.5 1008.5h0M579.5 1008.5h0M579.5 1009.5h0M580.5 1008.5h0M580.5 1008.5h0M580.5 1008.5h0M581.5 1008.5h0M581.5 1008.5h0M581.5 1009.5h0M581.5 1008.5h0M582.5 1007.5h0M582.5 1008.5h0M582.5 1008.5h0M583.5 1008.5h0M583.5 1008.5h0M583.5 1008.5h0M583.5 1008.5h0M584.5 1008.5h0M584.5 1008.5h0M584.5 1007.5h0M585.5 1007.5h0M585.5 1007.5h0M585.5 1008.5h0M585.5 1009.5h0M586.5 1008.5h0M586.5 1008.5h0M586.5 1008.5h0M587.5 1007.5h0M587.5 1008.5h0M587.5 1008.5h0M587.5 1007.5h0M588.5 1008.5h0M588.5 1007.5h0M588.5 1008.5h0M589.5 1008.5h0M589.5 1008.5h0M589.5 1007.5h0M589.5 1008.5h0M590.5 1008.5h0M590.5 1008.5h0M590.5 1008.5h0M591.5 1008.5h0M591.5 1008.5h0M591.5 1008.5h0M591.5 1007.5h0M592.5 1007.5h0M592.5 1008.5h0M592.5 1008.5h0M593.5 1008.5h0M593.5 1007.5h0M593.5 1008.5h0M593.5 1008.5h0M594.5 1008.5h0M594.5 1008.5h0M594.5 1008.5h0M595.5 1007.5h0M595.5 1008.5h0M595.5 1007.5h0M595.5 1008.5h0M596.5 1007.5h0M596.5 1008.5h0M596.5 1008.5h0M597.5 1007.5h0M597.5 1009.5h0M597.5 1008.5h0M598.5 1008.5h0M598.5 1008.5h0M598.5 1008.5h0M598.5 1008.5h0M599.5 1008.5h0M599.5 1007.5h0M599.5 1008.5h0M600.5 1007.5h0M600.5 1008.5h0M600.5 1008.5h0M600.5 1008.5h0M601.5 1008.5h0M601.5 1008.5h0M601.5 1008.5h0M602.5 1009.5h0M602.5 1009.5h0M602.5 1008.5h0M602.5 1007.5h0M603.5 1008.5h0M603.5 1008.5h0M603.5 1008.5h0M604.5 1008.5h0M604.5 1008.5h0M604.5 1008.5h0M604.5 1008.5h0M605.5 1007.5h0M605.5 1008.5h0M605.5 1008.5h0M606.5 1008.5h0M606.5 1008.5h0M606.5 1008.5h0M606.5 1008.5h0M607.5 1008.5h0M607.5 1008.5h0M607.5 1008.5h0M608.5 1008.5h0M608.5 1008.5h0M608.5 1008.5h0M608.5 1007.5h0M609.5 1008.5h0M609.5 1008.5h0M609.5 1008.5h0M610.5 1008.5h0M610.5 1009.5h0M610.5 1009.5h0M610.5 1008.5h0M611.5 1008.5h0M611.5 1009.5h0M611.5 1008.5h0M612.5 1008.5h0M612.5 1008.5h0M612.5 1008.5h0M612.5 1008.5h0M613.5 1008.5h0M613.5 1008.5h0M613.5 1008.5h0M614.5 1008.5h0M614.5 1007.5h0M614.5 1007.5h0M615.5 1008.5h0M615.5 1008.5h0M615.5 1008.5h0M615.5 1008.5h0M616.5 1009.5h0M616.5 1008.5h0M616.5 1007.5h0M617.5 1008.5h0M617.5 1008.5h0M617.5 1007.5h0M617.5 1007.5h0M618.5 1009.5h0M618.5 1008.5h0M618.5 1008.5h0M619.5 1007.5h0M619.5 1008.5h0M619.5 1008.5h0M619.5 1007.5h0M620.5 1007.5h0M620.5 1007.5h0M620.5 1008.5h0M621.5 1008.5h0M621.5 1008.5h0M621.5 1008.5h0M621.5 1007.5h0M622.5 1007.5h0M622.5 1008.5h0M622.5 1008.5h0M623.5 1008.5h0M623.5 1008.5h0M623.5 1008.5h0M623.5 1009.5h0M624.5 1007.5h0M624.5 1008.5h0M624.5 1008.5h0M625.5 1008.5h0M625.5 1008.5h0M625.5 1008.5h0M625.5 1007.5h0M626.5 1008.5h0M626.5 1008.5h0M626.5 1007.5h0M627.5 1007.5h0M627.5 1008.5h0M627.5 1008.5h0M627.5 1008.5h0M628.5 1009.5h0M628.5 1007.5h0M628.5 1008.5h0M629.5 1008.5h0M629.5 1008.5h0M629.5 1008.5h0M630.5 1007.5h0M630.5 1008.5h0M630.5 1008.5h0M630.5 1008.5h0M631.5 1008.5h0M631.5 1008.5h0M631.5 1009.5h0M632.5 1008.5h0M632.5 1007.5h0M632.5 1008.5h0M632.5 1007.5h0M633.5 1008.5h0M633.5 1008.5h0M633.5 1008.5h0M634.5 1008.5h0M634.5 1007.5h0M634.5 1008.5h0M634.5 1008.5h0M635.5 1008.5h0M635.5 1008.5h0M635.5 1008.5h0M636.5 1008.5h0M636.5 1008.5h0M636.5 1007.5h0M636.5 1008.5h0M637.5 1008.5h0M637.5 1008.5h0M637.5 1008.5h0M638.5 1008.5h0M638.5 1008.5h0M638.5 1008.5h0M638.5 1008.5h0M639.5 1008.5h0M639.5 1008.5h0M639.5 1008.5h0M640.5 1008.5h0M640.5 1008.5h0M640.5 1008.5h0M640.5 1008.5h0M641.5 1007.5h0M641.5 1008.5h0M641.5 1008.5h0M642.5 1008.5h0M642.5 1008.5h0M642.5 1007.5h0M642.5 1008.5h0M643.5 1008.5h0M643.5 1007.5h0M643.5 1007.5h0M644.5 1008.5h0M644.5 1008.5h0M644.5 1008.5h0M644.5 1007.5h0M645.5 1008.5h0M645.5 1008.5h0M645.5 1007.5h0M646.5 1008.5h0M646.5 1008.5h0M646.5 1008.5h0M647.5 1008.5h0M647.5 1007.5h0M647.5 1008.5h0M647.5 1008.5h0M648.5 1008.5h0M648.5 1008.5h0M648.5 1008.5h0M649.5 1008.5h0M649.5 1007.5h0M649.5 1008.5h0M649.5 1007.5h0M650.5 1008.5h0M650.5 1008.5h0M650.5 1008.5h0M651.5 1008.5h0M651.5 1008.5h0M651.5 1008.5h0M651.5 1007.5h0M652.5 1008.5h0M652.5 1008.5h0M652.5 1008.5h0M653.5 1007.5h0M653.5 1007.5h0M653.5 1008.5h0M653.5 1008.5h0M654.5 1008.5h0M654.5 1008.5h0M654.5 1008.5h0M655.5 1008.5h0M655.5 1008.5h0M655.5 1008.5h0M655.5 1008.5h0M656.5 1008.5h0M656.5 1008.5h0M656.5 1008.5h0M657.5 1008.5h0M657.5 1008.5h0M657.5 1008.5h0M657.5 1008.5h0M658.5 1008.5h0M658.5 1008.5h0M658.5 1007.5h0M659.5 1007.5h0M659.5 1008.5h0M659.5 1008.5h0M659.5 1008.5h0M660.5 1009.5h0M660.5 1007.5h0M660.5 1008.5h0M661.5 1008.5h0M661.5 1008.5h0M661.5 1007.5h0M662.5 1008.5h0M662.5 1008.5h0M662.5 1008.5h0M662.5 1008.5h0M663.5 1008.5h0M663.5 1008.5h0M663.5 1008.5h0M664.5 1008.5h0M664.5 1008.5h0M664.5 1008.5h0M664.5 1008.5h0M665.5 1009.5h0M665.5 1007.5h0M665.5 1007.5h0M666.5 1008.5h0M666.5 1008.5h0M666.5 1007.5h0M666.5 1008.5h0M667.5 1008.5h0M667.5 1008.5h0M667.5 1007.5h0M668.5 1008.5h0M668.5 1007.5h0M668.5 1007.5h0M668.5 1007.5h0M669.5 1008.5h0M669.5 1008.5h0M669.5 1008.5h0M670.5 1008.5h0M670.5 1007.5h0M670.5 1008.5h0M670.5 1008.5h0M671.5 1007.5h0M671.5 1008.5h0M671.5 1009.5h0M672.5 1008.5h0M672.5 1007.5h0M672.5 1008.5h0M672.5 1008.5h0M673.5 1008.5h0M673.5 1008.5h0M673.5 1008.5h0M674.5 1008.5h0M674.5 1008.5h0M674.5 1008.5h0M674.5 1007.5h0M675.5 1008.5h0M675.5 1008.5h0M675.5 1008.5h0M676.5 1007.5h0M676.5 1007.5h0M676.5 1008.5h0M676.5 1008.5h0M677.5 1008.5h0M677.5 1008.5h0M677.5 1008.5h0M678.5 1008.5h0M678.5 1008.5h0M678.5 1008.5h0M679.5 1008.5h0M679.5 1007.5h0M679.5 1008.5h0M679.5 1008.5h0M680.5 1008.5h0M680.5 1008.5h0M680.5 1008.5h0M681.5 1007.5h0M681.5 1007.5h0M681.5 1007.5h0M681.5 1008.5h0M682.5 1008.5h0M682.5 1008.5h0M682.5 1008.5h0M683.5 1008.5h0M683.5 1008.5h0M683.5 1008.5h0M683.5 1008.5h0M684.5 1008.5h0M684.5 1008.5h0M684.5 1008.5h0M685.5 1008.5h0M685.5 1008.5h0M685.5 1008.5h0M685.5 1007.5h0M686.5 1008.5h0M686.5 1008.5h0M686.5 1008.5h0M687.5 1008.5h0M687.5 1008.5h0M687.5 1008.5h0M687.5 1007.5h0M688.5 1008.5h0M688.5 1008.5h0M688.5 1008.5h0M689.5 1008.5h0M689.5 1008.5h0M689.5 1008.5h0M689.5 1008.5h0M690.5 1008.5h0M690.5 1008.5h0M690.5 1008.5h0M691.5 1007.5h0M691.5 1008.5h0M691.5 1008.5h0M691.5 1008.5h0M692.5 1008.5h0M692.5 1007.5h0M692.5 1008.5h0M693.5 1009.5h0M693.5 1008.5h0M693.5 1008.5h0M693.5 1008.5h0M694.5 1007.5h0M694.5 1008.5h0M694.5 1008.5h0M695.5 1008.5h0M695.5 1008.5h0M695.5 1008.5h0M696.5 1008.5h0M696.5 1008.5h0M696.5 1008.5h0M696.5 1008.5h0M697.5 1008.5h0M697.5 1007.5h0M697.5 1008.5h0M698.5 1008.5h0M698.5 1007.5h0M698.5 1008.5h0M698.5 1008.5h0M699.5 1008.5h0M699.5 1008.5h0M699.5 1008.5h0M700.5 1007.5h0M700.5 1008.5h0M700.5 1008.5h0M700.5 1007.5h0M701.5 1008.5h0M701.5 1008.5h0M701.5 1008.5h0M702.5 1008.5h0M702.5 1008.5h0M702.5 1008.5h0M702.5 1008.5h0M703.5 1008.5h0M703.5 1007.5h0M703.5 1008.5h0M704.5 1007.5h0M704.5 1008.5h0M704.5 1008.5h0M704.5 1008.5h0M705.5 1008.5h0M705.5 1008.5h0M705.5 1008.5h0M706.5 1008.5h0M706.5 1008.5h0M706.5 1008.5h0M706.5 1008.5h0M707.5 1008.5h0M707.5 1008.5h0M707.5 1008.5h0M708.5 1007.5h0M708.5 1007.5h0M708.5 1008.5h0M708.5 1007.5h0M709.5 1008.5h0M709.5 1008.5h0M709.5 1008.5h0M710.5 1008.5h0M710.5 1008.5h0M710.5 1007.5h0M711.5 1008.5h0M711.5 1008.5h0M711.5 1008.5h0M711.5 1008.5h0M712.5 1008.5h0M712.5 1008.5h0M712.5 1008.5h0M713.5 1008.5h0M713.5 1008.5h0M713.5 1008.5h0M713.5 1009.5h0M714.5 1008.5h0M714.5 1008.5h0M714.5 1008.5h0M715.5 1008.5h0M715.5 1008.5h0M715.5 1009.5h0M715.5 1008.5h0M716.5 1008.5h0M716.5 1008.5h0M716.5 1008.5h0M717.5 1009.5h0M717.5 1008.5h0M717.5 1008.5h0M717.5 1007.5h0M718.5 1007.5h0M718.5 1008.5h0M718.5 1008.5h0M719.5 1008.5h0M719.5 1005.5h0M719.5 1007.5h0M719.5 1007.5h0M720.5 1008.5h0M720.5 1008.5h0M720.5 1009.5h0M721.5 1009.5h0M721.5 1007.5h0M721.5 1008.5h0M721.5 1008.5h0M722.5 1008.5h0M722.5 1008.5h0M722.5 1008.5h0M723.5 1007.5h0M723.5 1008.5h0M723.5 1008.5h0M723.5 1008.5h0M724.5 1008.5h0M724.5 1008.5h0M724.5 1008.5h0M725.5 1008.5h0M725.5 1008.5h0M725.5 1008.5h0M725.5 1009.5h0M726.5 1008.5h0M726.5 1008.5h0M726.5 1008.5h0M727.5 1007.5h0M727.5 1008.5h0M727.5 1008.5h0M728.5 1008.5h0M728.5 1008.5h0M728.5 1008.5h0M728.5 1008.5h0M729.5 1008.5h0M729.5 1007.5h0M729.5 1007.5h0M730.5 1008.5h0M730.5 1008.5h0M730.5 1009.5h0M730.5 1008.5h0M731.5 1007.5h0M731.5 1008.5h0M731.5 1008.5h0M732.5 1008.5h0M732.5 1007.5h0M732.5 1008.5h0M732.5 1008.5h0M733.5 1008.5h0M733.5 1008.5h0M733.5 1008.5h0M734.5 1008.5h0M734.5 1008.5h0M734.5 1008.5h0M734.5 1008.5h0M735.5 1008.5h0M735.5 1008.5h0M735.5 1008.5h0M736.5 1007.5h0M736.5 1007.5h0M736.5 1008.5h0M736.5 1008.5h0M737.5 1008.5h0M737.5 1008.5h0M737.5 1008.5h0M738.5 1008.5h0M738.5 1008.5h0M738.5 1008.5h0M738.5 1008.5h0M739.5 1008.5h0M739.5 1008.5h0M739.5 1008.5h0M740.5 1007.5h0M740.5 1008.5h0M740.5 1008.5h0M740.5 1008.5h0M741.5 1008.5h0M741.5 1008.5h0M741.5 1008.5h0M742.5 1008.5h0M742.5 1007.5h0M742.5 1008.5h0M742.5 1008.5h0M743.5 1008.5h0M743.5 1008.5h0M743.5 1008.5h0M744.5 1008.5h0M744.5 1008.5h0M744.5 1008.5h0M745.5 1007.5h0M745.5 1008.5h0M745.5 1008.5h0M745.5 1008.5h0M746.5 1008.5h0M746.5 1008.5h0M746.5 1008.5h0M747.5 1008.5h0M747.5 1008.5h0M747.5 1008.5h0M747.5 1008.5h0M748.5 1008.5h0M748.5 1008.5h0M748.5 1008.5h0M749.5 1008.5h0M749.5 1008.5h0M749.5 1008.5h0M749.5 1008.5h0M750.5 1008.5h0M750.5 1008.5h0M750.5 1008.5h0M751.5 1008.5h0M751.5 1008.5h0M751.5 1008.5h0M751.5 1008.5h0M752.5 1008.5h0M752.5 1008.5h0M752.5 1008.5h0M753.5 1008.5h0M753.5 1008.5h0M753.5 1008.5h0M753.5 1008.5h0M754.5 1008.5h0M754.5 1008.5h0M754.5 1008.5h0M755.5 1008.5h0M755.5 1007.5h0M755.5 1008.5h0M755.5 1008.5h0M756.5 1008.5h0M756.5 1008.5h0M756.5 1008.5h0M757.5 1007.5h0M757.5 1008.5h0M757.5 1008.5h0M757.5 1008.5h0M758.5 1007.5h0M758.5 1008.5h0M758.5 1008.5h0M759.5 1008.5h0M759.5 1008.5h0M759.5 1008.5h0M760.5 1008.5h0M760.5 1008.5h0M760.5 1008.5h0M760.5 1008.5h0M761.5 1008.5h0M761.5 1008.5h0M761.5 1008.5h0M762.5 1008.5h0M762.5 1008.5h0M762.5 1008.5h0M762.5 1008.5h0M763.5 1008.5h0M763.5 1008.5h0M763.5 1008.5h0M764.5 1008.5h0M764.5 1008.5h0M764.5 1009.5h0M764.5 1008.5h0M765.5 1008.5h0M765.5 1008.5h0M765.5 1008.5h0M766.5 1008.5h0M766.5 1008.5h0M766.5 1008.5h0M766.5 1008.5h0M767.5 1008.5h0M767.5 1007.5h0M767.5 1008.5h0M768.5 1008.5h0M768.5 1008.5h0M768.5 1008.5h0M768.5 1005.5h0M769.5 1008.5h0M769.5 1008.5h0M769.5 1008.5h0M770.5 1008.5h0M770.5 1008.5h0M770.5 1008.5h0M770.5 1008.5h0M771.5 1008.5h0M771.5 1008.5h0M771.5 1008.5h0M772.5 1008.5h0M772.5 1009.5h0M772.5 1008.5h0M772.5 1008.5h0M773.5 1006.5h0M833.5 1008.5h0M833.5 1008.5h0M834.5 1008.5h0M834.5 1007.5h0M834.5 1008.5h0M835.5 1008.5h0M835.5 1007.5h0M835.5 1008.5h0M835.5 1008.5h0M836.5 1008.5h0M836.5 1008.5h0M836.5 1007.5h0M837.5 1008.5h0M837.5 1008.5h0M837.5 1007.5h0M837.5 1008.5h0M838.5 1007.5h0M838.5 1008.5h0M838.5 1008.5h0M839.5 1008.5h0M839.5 1008.5h0M839.5 1008.5h0M839.5 1007.5h0M840.5 1008.5h0M840.5 1007.5h0M840.5 1008.5h0M841.5 1007.5h0M841.5 1008.5h0M841.5 1008.5h0M842.5 1007.5h0M842.5 1008.5h0M842.5 1008.5h0M842.5 1008.5h0M843.5 1008.5h0M843.5 1008.5h0M843.5 1008.5h0M844.5 1008.5h0M844.5 1008.5h0M844.5 1008.5h0M844.5 1008.5h0M845.5 1008.5h0M845.5 1007.5h0M845.5 1008.5h0M846.5 1008.5h0M846.5 1008.5h0M846.5 1008.5h0M846.5 1008.5h0M847.5 1008.5h0M847.5 1008.5h0M847.5 1008.5h0M848.5 1008.5h0M848.5 1008.5h0M848.5 1008.5h0M848.5 1008.5h0M849.5 1008.5h0M849.5 1008.5h0M849.5 1008.5h0M850.5 1008.5h0M850.5 1007.5h0M850.5 1008.5h0M850.5 1008.5h0M851.5 1008.5h0M851.5 1008.5h0M851.5 1008.5h0M852.5 1007.5h0M852.5 1008.5h0M852.5 1008.5h0M852.5 1008.5h0M853.5 1008.5h0M853.5 1007.5h0M853.5 1008.5h0M854.5 1008.5h0M854.5 1008.5h0M854.5 1008.5h0M854.5 1008.5h0M855.5 1007.5h0M855.5 1007.5h0M855.5 1008.5h0M856.5 1008.5h0M856.5 1009.5h0M856.5 1008.5h0M857.5 1009.5h0M857.5 1007.5h0M857.5 1008.5h0M857.5 1008.5h0M858.5 1007.5h0M858.5 1008.5h0M858.5 1007.5h0M859.5 1008.5h0M859.5 1008.5h0M859.5 1008.5h0M859.5 1008.5h0M860.5 1008.5h0M860.5 1008.5h0M860.5 1008.5h0M861.5 1008.5h0M861.5 1008.5h0M861.5 1008.5h0M861.5 1008.5h0M862.5 1008.5h0M862.5 1008.5h0M862.5 1008.5h0M863.5 1008.5h0M863.5 1007.5h0M863.5 1008.5h0M863.5 1008.5h0M864.5 1008.5h0M864.5 1008.5h0M864.5 1008.5h0M865.5 1007.5h0M865.5 1009.5h0M865.5 1008.5h0M865.5 1008.5h0M866.5 1009.5h0M866.5 1008.5h0M866.5 1008.5h0M867.5 1007.5h0M867.5 1008.5h0M867.5 1008.5h0M867.5 1008.5h0M868.5 1008.5h0M868.5 1008.5h0M868.5 1007.5h0M869.5 1008.5h0M869.5 1008.5h0M869.5 1009.5h0M869.5 1009.5h0M870.5 1008.5h0M870.5 1008.5h0M870.5 1008.5h0M871.5 1008.5h0M871.5 1008.5h0M871.5 1008.5h0M871.5 1008.5h0M872.5 1007.5h0M872.5 1008.5h0M872.5 1008.5h0M873.5 1007.5h0M873.5 1008.5h0M873.5 1008.5h0M874.5 1008.5h0M874.5 1008.5h0M874.5 1008.5h0M874.5 1007.5h0M875.5 1008.5h0M875.5 1008.5h0M875.5 1008.5h0M876.5 1008.5h0M876.5 1008.5h0M876.5 1008.5h0M876.5 1008.5h0M877.5 1008.5h0M877.5 1008.5h0M877.5 1008.5h0M878.5 1008.5h0M878.5 1008.5h0M878.5 1008.5h0M878.5 1008.5h0M879.5 1008.5h0M879.5 1008.5h0M879.5 1007.5h0M880.5 1007.5h0M880.5 1008.5h0M880.5 1008.5h0M880.5 1007.5h0M881.5 1008.5h0M881.5 1008.5h0M881.5 1008.5h0M882.5 1007.5h0M882.5 1008.5h0M882.5 1008.5h0M882.5 1008.5h0M883.5 1008.5h0M883.5 1007.5h0M883.5 1008.5h0M884.5 1007.5h0M884.5 1008.5h0M884.5 1008.5h0M884.5 1009.5h0M885.5 1008.5h0M885.5 1008.5h0M885.5 1008.5h0M886.5 1008.5h0M886.5 1008.5h0M886.5 1008.5h0M886.5 1008.5h0M887.5 1008.5h0M887.5 1008.5h0M887.5 1008.5h0M888.5 1008.5h0M888.5 1007.5h0M888.5 1008.5h0M888.5 1008.5h0M889.5 1008.5h0M889.5 1008.5h0M889.5 1007.5h0M890.5 1008.5h0M890.5 1008.5h0M890.5 1008.5h0M891.5 1008.5h0M891.5 1008.5h0M891.5 1008.5h0M891.5 1008.5h0M892.5 1008.5h0M892.5 1008.5h0M892.5 1007.5h0M893.5 1008.5h0M893.5 1007.5h0M893.5 1008.5h0M893.5 1008.5h0M894.5 1008.5h0M894.5 1008.5h0M894.5 1008.5h0M895.5 1007.5h0M895.5 1008.5h0M895.5 1008.5h0M895.5 1008.5h0M896.5 1008.5h0M896.5 1008.5h0M896.5 1008.5h0M897.5 1008.5h0M897.5 1008.5h0M897.5 1008.5h0M897.5 1008.5h0M898.5 1008.5h0M898.5 1008.5h0M898.5 1008.5h0M899.5 1008.5h0M899.5 1008.5h0M899.5 1008.5h0M899.5 1007.5h0M900.5 1008.5h0M900.5 1008.5h0M900.5 1008.5h0M901.5 1008.5h0M901.5 1008.5h0M901.5 1008.5h0M901.5 1008.5h0M902.5 1008.5h0M902.5 1008.5h0M902.5 1008.5h0M903.5 1008.5h0M903.5 1008.5h0M903.5 1007.5h0M903.5 1008.5h0M904.5 1008.5h0M904.5 1008.5h0M904.5 1007.5h0M905.5 1008.5h0M905.5 1008.5h0M905.5 1009.5h0M906.5 1008.5h0M906.5 1009.5h0M906.5 1008.5h0M906.5 1008.5h0M907.5 1008.5h0M907.5 1009.5h0M907.5 1008.5h0M908.5 1008.5h0M908.5 1008.5h0M908.5 1008.5h0M908.5 1008.5h0M909.5 1008.5h0M909.5 1008.5h0M909.5 1007.5h0M910.5 1007.5h0M910.5 1008.5h0M910.5 1008.5h0M910.5 1007.5h0M911.5 1008.5h0M911.5 1008.5h0M911.5 1007.5h0M912.5 1008.5h0M912.5 1009.5h0M912.5 1008.5h0M912.5 1007.5h0M913.5 1008.5h0M913.5 1008.5h0M913.5 1008.5h0M914.5 1008.5h0M914.5 1008.5h0M914.5 1007.5h0M914.5 1008.5h0M915.5 1007.5h0M915.5 1008.5h0M915.5 1008.5h0M916.5 1008.5h0M916.5 1008.5h0M916.5 1008.5h0M916.5 1008.5h0M917.5 1008.5h0M917.5 1007.5h0M917.5 1008.5h0M918.5 1008.5h0M918.5 1008.5h0M918.5 1009.5h0M918.5 1008.5h0M919.5 1007.5h0M919.5 1008.5h0M919.5 1008.5h0M920.5 1008.5h0M920.5 1008.5h0M920.5 1008.5h0M920.5 1008.5h0M921.5 1008.5h0M921.5 1008.5h0M921.5 1008.5h0M922.5 1007.5h0M922.5 1008.5h0M922.5 1008.5h0M923.5 1008.5h0M923.5 1008.5h0M923.5 1008.5h0M923.5 1009.5h0M924.5 1007.5h0M924.5 1008.5h0M924.5 1008.5h0M925.5 1008.5h0M925.5 1008.5h0M925.5 1008.5h0M925.5 1008.5h0M926.5 1008.5h0M926.5 1008.5h0M926.5 1008.5h0M927.5 1008.5h0M927.5 1008.5h0M927.5 1008.5h0M927.5 1008.5h0M928.5 1008.5h0M928.5 1008.5h0M928.5 1008.5h0M929.5 1008.5h0M929.5 1007.5h0M929.5 1007.5h0M929.5 1008.5h0M930.5 1008.5h0M930.5 1007.5h0M930.5 1008.5h0M931.5 1007.5h0M931.5 1007.5h0M931.5 1009.5h0M931.5 1009.5h0M932.5 1008.5h0M932.5 1008.5h0M932.5 1008.5h0M933.5 1008.5h0M933.5 1008.5h0M933.5 1008.5h0M933.5 1008.5h0M934.5 1008.5h0M934.5 1008.5h0M934.5 1008.5h0M935.5 1008.5h0M935.5 1008.5h0M935.5 1008.5h0M935.5 1008.5h0M936.5 1008.5h0M936.5 1008.5h0M936.5 1008.5h0M937.5 1007.5h0M937.5 1008.5h0M937.5 1007.5h0M938.5 1008.5h0M938.5 1007.5h0M938.5 1008.5h0M938.5 1008.5h0M939.5 1008.5h0M939.5 1008.5h0M939.5 1008.5h0M940.5 1008.5h0M940.5 1008.5h0M940.5 1008.5h0M940.5 1008.5h0M941.5 1008.5h0M941.5 1008.5h0M941.5 1008.5h0M942.5 1008.5h0M942.5 1008.5h0M942.5 1008.5h0M942.5 1007.5h0M943.5 1008.5h0M943.5 1008.5h0M943.5 1008.5h0M944.5 1008.5h0M944.5 1008.5h0M944.5 1009.5h0M944.5 1008.5h0M945.5 1008.5h0M945.5 1008.5h0M945.5 1008.5h0M946.5 1008.5h0M946.5 1008.5h0M946.5 1008.5h0M946.5 1008.5h0M947.5 1008.5h0M947.5 1008.5h0M947.5 1008.5h0M948.5 1008.5h0M948.5 1008.5h0M948.5 1008.5h0M948.5 1008.5h0M949.5 1008.5h0M949.5 1008.5h0M949.5 1008.5h0M950.5 1008.5h0M950.5 1008.5h0M950.5 1008.5h0M950.5 1008.5h0M951.5 1008.5h0M951.5 1008.5h0M951.5 1007.5h0M952.5 1007.5h0M952.5 1007.5h0M952.5 1007.5h0M952.5 1008.5h0M953.5 1008.5h0M953.5 1008.5h0M953.5 1008.5h0M954.5 1008.5h0M954.5 1008.5h0M954.5 1008.5h0M955.5 1008.5h0M955.5 1008.5h0M955.5 1009.5h0M955.5 1008.5h0M956.5 1008.5h0M956.5 1008.5h0M956.5 1008.5h0M957.5 1008.5h0M957.5 1008.5h0M957.5 1008.5h0M957.5 1007.5h0M958.5 1008.5h0M958.5 1008.5h0M958.5 1008.5h0M959.5 1009.5h0M959.5 1008.5h0M959.5 1008.5h0M959.5 1008.5h0M960.5 1009.5h0M960.5 1007.5h0M960.5 1008.5h0M961.5 1008.5h0M961.5 1008.5h0M961.5 1008.5h0M961.5 1008.5h0M962.5 1008.5h0M962.5 1008.5h0M962.5 1007.5h0M963.5 1008.5h0M963.5 1008.5h0M963.5 1008.5h0M963.5 1008.5h0M964.5 1007.5h0M964.5 1008.5h0M964.5 1008.5h0M965.5 1008.5h0M965.5 1007.5h0M965.5 1007.5h0M965.5 1007.5h0M966.5 1007.5h0M966.5 1008.5h0M966.5 1008.5h0M967.5 1009.5h0M967.5 1008.5h0M967.5 1007.5h0M967.5 1008.5h0M968.5 1008.5h0M968.5 1008.5h0M968.5 1008.5h0M969.5 1007.5h0M969.5 1007.5h0M969.5 1009.5h0M969.5 1007.5h0M970.5 1008.5h0M970.5 1008.5h0M970.5 1008.5h0M971.5 1008.5h0M971.5 1008.5h0M971.5 1008.5h0M972.5 1008.5h0M972.5 1008.5h0M972.5 1008.5h0M972.5 1008.5h0M973.5 1008.5h0M973.5 1007.5h0M973.5 1008.5h0M974.5 1008.5h0M974.5 1008.5h0M974.5 1008.5h0M974.5 1009.5h0M975.5 1007.5h0M975.5 1008.5h0M975.5 1008.5h0M976.5 1008.5h0M976.5 1008.5h0M976.5 1008.5h0M976.5 1007.5h0M977.5 1008.5h0M977.5 1008.5h0M977.5 1008.5h0M978.5 1008.5h0M978.5 1008.5h0M978.5 1007.5h0M978.5 1007.5h0M979.5 1008.5h0M979.5 1008.5h0M979.5 1008.5h0M980.5 1008.5h0M980.5 1008.5h0M980.5 1008.5h0M980.5 1008.5h0M981.5 1008.5h0M981.5 1008.5h0M981.5 1008.5h0M982.5 1008.5h0M982.5 1008.5h0M982.5 1008.5h0M982.5 1008.5h0M983.5 1008.5h0M983.5 1008.5h0M983.5 1008.5h0M984.5 1008.5h0M984.5 1008.5h0M984.5 1008.5h0M984.5 1008.5h0M985.5 1008.5h0M985.5 1008.5h0M985.5 1007.5h0M986.5 1008.5h0M986.5 1008.5h0M986.5 1008.5h0M987.5 1008.5h0M987.5 1008.5h0M987.5 1008.5h0M987.5 1007.5h0M988.5 1008.5h0M988.5 1008.5h0M988.5 1008.5h0M989.5 1008.5h0M989.5 1008.5h0M989.5 1008.5h0M989.5 1007.5h0M990.5 1007.5h0M990.5 1008.5h0M990.5 1008.5h0M991.5 1008.5h0M991.5 1007.5h0M991.5 1008.5h0M991.5 1008.5h0M992.5 1009.5h0M992.5 1008.5h0M992.5 1008.5h0M993.5 1008.5h0M993.5 1008.5h0M993.5 1008.5h0M993.5 1008.5h0M994.5 1008.5h0M994.5 1008.5h0M994.5 1008.5h0M995.5 1008.5h0M995.5 1007.5h0M995.5 1008.5h0M995.5 1008.5h0M996.5 1009.5h0M996.5 1008.5h0M996.5 1008.5h0M997.5 1008.5h0M997.5 1008.5h0M997.5 1007.5h0M997.5 1008.5h0M998.5 1008.5h0M998.5 1008.5h0M998.5 1009.5h0M999.5 1008.5h0M999.5 1008.5h0M999.5 1008.5h0M999.5 1008.5h0M1000.5 1007.5h0M1000.5 1008.5h0M1000.5 1008.5h0M1001.5 1008.5h0M1001.5 1008.5h0M1001.5 1008.5h0M1001.5 1008.5h0M1002.5 1008.5h0M1002.5 1007.5h0M1002.5 1008.5h0M1003.5 1008.5h0M1003.5 1007.5h0M1003.5 1008.5h0M1004.5 1007.5h0M1004.5 1008.5h0M1004.5 1008.5h0M1004.5 1008.5h0M1005.5 1008.5h0M1005.5 1008.5h0M1005.5 1008.5h0M1006.5 1008.5h0M1006.5 1008.5h0M1006.5 1008.5h0M1006.5 1008.5h0M1007.5 1008.5h0M1007.5 1008.5h0M1007.5 1007.5h0M1008.5 1007.5h0M1008.5 1007.5h0M1008.5 1008.5h0M1008.5 1008.5h0M1009.5 1007.5h0M1009.5 1007.5h0M1009.5 1008.5h0M1010.5 1008.5h0M1010.5 1008.5h0M1010.5 1007.5h0M1010.5 1008.5h0M1011.5 1008.5h0M1011.5 1008.5h0M1011.5 1008.5h0M1012.5 1008.5h0M1012.5 1008.5h0M1012.5 1008.5h0M1012.5 1008.5h0M1013.5 1008.5h0M1013.5 1008.5h0M1013.5 1008.5h0M1014.5 1008.5h0M1014.5 1008.5h0M1014.5 1008.5h0M1014.5 1008.5h0M1015.5 1008.5h0M1015.5 1008.5h0M1015.5 1008.5h0M1016.5 1008.5h0M1016.5 1008.5h0M1016.5 1008.5h0M1016.5 1008.5h0M1017.5 1008.5h0M1017.5 1008.5h0M1017.5 1008.5h0M1018.5 1008.5h0M1018.5 1008.5h0M1018.5 1008.5h0M1018.5 1008.5h0M1019.5 1008.5h0M1019.5 1008.5h0M1019.5 1008.5h0M1020.5 1007.5h0M1020.5 1007.5h0M1020.5 1008.5h0M1021.5 1009.5h0M1021.5 1007.5h0M1021.5 1007.5h0M1021.5 1008.5h0M1022.5 1008.5h0M1022.5 1008.5h0M1022.5 1008.5h0M1023.5 1008.5h0M1023.5 1007.5h0M1023.5 1008.5h0M1023.5 1008.5h0M1024.5 1007.5h0M1024.5 1008.5h0M1024.5 1008.5h0M1025.5 1008.5h0M1025.5 1008.5h0M1025.5 1009.5h0M1025.5 1008.5h0M1026.5 1008.5h0M1026.5 1008.5h0M1026.5 1007.5h0M1027.5 1008.5h0M1027.5 1008.5h0M1027.5 1007.5h0M1027.5 1007.5h0M1028.5 1007.5h0M1028.5 1008.5h0M1028.5 1008.5h0M1029.5 1008.5h0M1029.5 1008.5h0M1029.5 1008.5h0M1029.5 1008.5h0M1030.5 1008.5h0M1030.5 1008.5h0M1030.5 1008.5h0M1031.5 1008.5h0M1031.5 1008.5h0M1031.5 1007.5h0M1031.5 1007.5h0M1032.5 1008.5h0M1032.5 1009.5h0M1032.5 1009.5h0M1033.5 1008.5h0M1033.5 1008.5h0M1033.5 1008.5h0M1033.5 1007.5h0M1034.5 1009.5h0M1034.5 1008.5h0M1034.5 1008.5h0M1035.5 1008.5h0M1035.5 1008.5h0M1035.5 1008.5h0M1036.5 1008.5h0M1036.5 1008.5h0M1036.5 1008.5h0M1036.5 1008.5h0M1037.5 1009.5h0M1037.5 1008.5h0M1037.5 1008.5h0M1038.5 1008.5h0M1038.5 1008.5h0M1038.5 1008.5h0M1038.5 1007.5h0M1039.5 1008.5h0M1039.5 1008.5h0M1039.5 1008.5h0M1040.5 1008.5h0M1040.5 1008.5h0M1040.5 1009.5h0M1040.5 1009.5h0M1041.5 1008.5h0M1041.5 1007.5h0M1041.5 1008.5h0M1042.5 1008.5h0M1042.5 1007.5h0M1042.5 1008.5h0M1042.5 1008.5h0M1043.5 1008.5h0M1043.5 1008.5h0M1043.5 1008.5h0M1044.5 1008.5h0M1044.5 1008.5h0M1044.5 1008.5h0M1044.5 1008.5h0M1045.5 1008.5h0M1045.5 1008.5h0M1045.5 1008.5h0M1046.5 1007.5h0M1046.5 1008.5h0M1046.5 1007.5h0M1046.5 1008.5h0M1047.5 1008.5h0M1047.5 1007.5h0M1047.5 1007.5h0M1048.5 1008.5h0M1048.5 1008.5h0M1048.5 1008.5h0M1048.5 1008.5h0M1049.5 1007.5h0M1049.5 1008.5h0M1049.5 1008.5h0M1050.5 1007.5h0M1050.5 1008.5h0M1050.5 1008.5h0M1050.5 1008.5h0M1051.5 1008.5h0M1051.5 1008.5h0M1051.5 1007.5h0M1052.5 1008.5h0M1052.5 1008.5h0M1052.5 1008.5h0M1053.5 1008.5h0M1053.5 1008.5h0M1053.5 1007.5h0M1053.5 1008.5h0M1054.5 1008.5h0M1054.5 1008.5h0M1054.5 1007.5h0M1055.5 1008.5h0M1055.5 1007.5h0M1055.5 1008.5h0M1055.5 1008.5h0M1056.5 1008.5h0M1056.5 1008.5h0M1056.5 1007.5h0M1057.5 1008.5h0M1057.5 1009.5h0M1057.5 1008.5h0M1057.5 1008.5h0M1058.5 1008.5h0M1058.5 1008.5h0M1058.5 1007.5h0M1059.5 1007.5h0M1059.5 1007.5h0M1059.5 1008.5h0M1059.5 1008.5h0M1060.5 1009.5h0M1060.5 1008.5h0M1060.5 1008.5h0M1061.5 1007.5h0M1061.5 1008.5h0M1061.5 1008.5h0M1061.5 1008.5h0M1062.5 1008.5h0M1062.5 1008.5h0M1062.5 1008.5h0M1063.5 1008.5h0M1063.5 1008.5h0M1063.5 1008.5h0M1063.5 1008.5h0M1064.5 1008.5h0M1064.5 1008.5h0M1064.5 1008.5h0M1065.5 1008.5h0M1065.5 1008.5h0M1065.5 1008.5h0M1065.5 1008.5h0M1066.5 1008.5h0M1066.5 1008.5h0M1066.5 1008.5h0M1067.5 1008.5h0M1067.5 1008.5h0M1067.5 1008.5h0M1068.5 1008.5h0M1068.5 1008.5h0M1068.5 1008.5h0M1068.5 1007.5h0M1069.5 1008.5h0M1069.5 1008.5h0M1069.5 1008.5h0M1070.5 1008.5h0M1070.5 1008.5h0M1070.5 1008.5h0M1070.5 1007.5h0M1071.5 1008.5h0M1071.5 1008.5h0M1071.5 1008.5h0M1072.5 1008.5h0M1072.5 1008.5h0M1072.5 1008.5h0M1072.5 1007.5h0M1073.5 1008.5h0M1073.5 1008.5h0M1073.5 1007.5h0M1074.5 1008.5h0M1074.5 1009.5h0M1074.5 1009.5h0M1074.5 1009.5h0M1075.5 1006.5h0M1075.5 1008.5h0M1075.5 1008.5h0M1076.5 1008.5h0M1076.5 1008.5h0M1076.5 1008.5h0M1076.5 1008.5h0M1077.5 1008.5h0M1077.5 1008.5h0M1077.5 1008.5h0M1078.5 1007.5h0M1078.5 1008.5h0M1078.5 1008.5h0M1078.5 1007.5h0M1079.5 1008.5h0M1079.5 1008.5h0M1079.5 1008.5h0M1080.5 1008.5h0M1080.5 1008.5h0M1080.5 1009.5h0M1080.5 1007.5h0M1081.5 1008.5h0M1081.5 1008.5h0M1081.5 1008.5h0M1082.5 1008.5h0M1082.5 1007.5h0M1082.5 1008.5h0M1082.5 1009.5h0M1083.5 1008.5h0M1083.5 1008.5h0M1083.5 1008.5h0M1084.5 1008.5h0M1084.5 1008.5h0M1084.5 1008.5h0M1085.5 1007.5h0M1085.5 1008.5h0M1085.5 1007.5h0M1085.5 1008.5h0M1086.5 1008.5h0M1086.5 1009.5h0M1086.5 1008.5h0M1087.5 1008.5h0M1087.5 1008.5h0M1087.5 1008.5h0M1087.5 1009.5h0M1088.5 1008.5h0M1088.5 1008.5h0M1088.5 1008.5h0M1089.5 1008.5h0M1089.5 1008.5h0M1089.5 1008.5h0M1089.5 1008.5h0M1090.5 1008.5h0M1090.5 1008.5h0M1090.5 1008.5h0M1091.5 1008.5h0M1091.5 1008.5h0M1091.5 1007.5h0M1091.5 1008.5h0M1092.5 1008.5h0M1092.5 1008.5h0M1092.5 1008.5h0M1093.5 1008.5h0M1093.5 1009.5h0M1093.5 1008.5h0M1093.5 1007.5h0M1094.5 1008.5h0M1094.5 1008.5h0M1094.5 1008.5h0M1095.5 1008.5h0M1095.5 1008.5h0M1095.5 1008.5h0M1095.5 1008.5h0M1096.5 1008.5h0M1096.5 1008.5h0M1096.5 1008.5h0M1097.5 1007.5h0M1097.5 1008.5h0M1097.5 1008.5h0M1097.5 1008.5h0M1098.5 1008.5h0M1098.5 1008.5h0M1098.5 1008.5h0M1099.5 1008.5h0M1099.5 1008.5h0M1099.5 1007.5h0M1099.5 1008.5h0M1100.5 1008.5h0M1100.5 1008.5h0M1100.5 1008.5h0M1101.5 1008.5h0M1101.5 1008.5h0M1101.5 1008.5h0M1102.5 1008.5h0M1102.5 1008.5h0M1102.5 1008.5h0M1102.5 1007.5h0M1103.5 1008.5h0M1103.5 1008.5h0M1103.5 1008.5h0M1104.5 1008.5h0M1104.5 1008.5h0M1104.5 1008.5h0M1104.5 1008.5h0M1105.5 1007.5h0M1105.5 1008.5h0M1105.5 1008.5h0M1106.5 1008.5h0M1106.5 1008.5h0M1106.5 1008.5h0M1106.5 1008.5h0M1107.5 1008.5h0M1107.5 1008.5h0M1107.5 1008.5h0M1108.5 1007.5h0M1108.5 1008.5h0M1108.5 1008.5h0M1108.5 1008.5h0M1109.5 1007.5h0M1109.5 1007.5h0M1109.5 1008.5h0M1110.5 1008.5h0M1110.5 1008.5h0M1110.5 1008.5h0M1110.5 1008.5h0M1111.5 1008.5h0M1111.5 1008.5h0M1111.5 1008.5h0M1112.5 1008.5h0M1112.5 1008.5h0M1112.5 1009.5h0M1112.5 1008.5h0M1113.5 1007.5h0M1113.5 1007.5h0M1113.5 1008.5h0M1114.5 1007.5h0M1114.5 1008.5h0M1114.5 1008.5h0M1114.5 1008.5h0M1115.5 1008.5h0M1115.5 1008.5h0M1115.5 1008.5h0M1116.5 1008.5h0M1116.5 1008.5h0M1116.5 1008.5h0M1117.5 1008.5h0M1117.5 1008.5h0M1117.5 1008.5h0M1117.5 1007.5h0M1118.5 1008.5h0M1118.5 1008.5h0M1118.5 1008.5h0M1119.5 1008.5h0M1119.5 1007.5h0M1119.5 1008.5h0M1119.5 1008.5h0M1120.5 1008.5h0M1120.5 1008.5h0M1120.5 1008.5h0M1121.5 1008.5h0M1121.5 1008.5h0M1121.5 1007.5h0M1121.5 1008.5h0M1122.5 1007.5h0M1122.5 1008.5h0M1122.5 1007.5h0M1123.5 1008.5h0M1123.5 1008.5h0M1123.5 1008.5h0M1123.5 1008.5h0M1124.5 1008.5h0M1124.5 1007.5h0M1124.5 1007.5h0M1125.5 1008.5h0M1125.5 1008.5h0M1125.5 1009.5h0M1125.5 1008.5h0M1126.5 1008.5h0M1126.5 1008.5h0M1126.5 1008.5h0M1127.5 1008.5h0M1127.5 1007.5h0M1127.5 1008.5h0M1127.5 1008.5h0M1128.5 1008.5h0M1128.5 1008.5h0M1128.5 1007.5h0M1129.5 1007.5h0M1129.5 1008.5h0M1129.5 1007.5h0M1129.5 1008.5h0M1130.5 1008.5h0M1130.5 1008.5h0M1130.5 1008.5h0M1131.5 1009.5h0M1131.5 1008.5h0M1131.5 1008.5h0M1131.5 1009.5h0M1132.5 1007.5h0M1132.5 1008.5h0M1132.5 1008.5h0M1133.5 1008.5h0M1133.5 1008.5h0M1133.5 1007.5h0M1134.5 1008.5h0M1134.5 1009.5h0M1134.5 1008.5h0M1134.5 1007.5h0M1135.5 1008.5h0M1135.5 1008.5h0M1135.5 1008.5h0M1136.5 1008.5h0M1136.5 1008.5h0M1136.5 1008.5h0M1136.5 1007.5h0M1137.5 1008.5h0M1137.5 1008.5h0M1137.5 1008.5h0M1138.5 1008.5h0M1138.5 1007.5h0M1138.5 1008.5h0M1138.5 1008.5h0M1139.5 1008.5h0M1139.5 1008.5h0M1139.5 1008.5h0M1140.5 1008.5h0M1140.5 1006.5h0M1140.5 1008.5h0M1140.5 1008.5h0M1141.5 1007.5h0M1141.5 1008.5h0M1141.5 1007.5h0M1142.5 1009.5h0M1142.5 1008.5h0M1142.5 1007.5h0M1142.5 1008.5h0M1143.5 1008.5h0M1143.5 1008.5h0M1143.5 1007.5h0M1144.5 1008.5h0M1144.5 1008.5h0M1144.5 1008.5h0M1144.5 1008.5h0M1145.5 1008.5h0M1145.5 1008.5h0M1145.5 1008.5h0M1146.5 1008.5h0M1146.5 1008.5h0M1146.5 1008.5h0M1146.5 1008.5h0M1147.5 1007.5h0M1147.5 1008.5h0M1147.5 1008.5h0M1148.5 1008.5h0M1148.5 1007.5h0M1148.5 1007.5h0M1148.5 1008.5h0M1149.5 1008.5h0M1149.5 1008.5h0M1149.5 1008.5h0M1150.5 1007.5h0M1150.5 1008.5h0M1150.5 1008.5h0M1151.5 1006.5h0M1151.5 1007.5h0M1151.5 1008.5h0M1151.5 1008.5h0M1152.5 1007.5h0M1152.5 1008.5h0M1152.5 1008.5h0M1153.5 1008.5h0M1153.5 1008.5h0M1153.5 1008.5h0M1153.5 1008.5h0M1154.5 1008.5h0M1154.5 1009.5h0M1154.5 1007.5h0M1155.5 1009.5h0M1155.5 1008.5h0M1155.5 1007.5h0M1155.5 1008.5h0M1156.5 1008.5h0M1156.5 1008.5h0M1156.5 1008.5h0M1157.5 1008.5h0M1157.5 1008.5h0M1157.5 1007.5h0M1157.5 1007.5h0M1158.5 1008.5h0M1158.5 1008.5h0M1158.5 1008.5h0M1159.5 1008.5h0M1159.5 1008.5h0M1159.5 1008.5h0M1159.5 1008.5h0M1160.5 1007.5h0M1160.5 1008.5h0M1160.5 1008.5h0M1161.5 1008.5h0M1161.5 1008.5h0M1161.5 1007.5h0M1161.5 1009.5h0M1162.5 1008.5h0M1162.5 1007.5h0M1162.5 1007.5h0M1163.5 1008.5h0M1163.5 1008.5h0M1163.5 1008.5h0M1163.5 1008.5h0M1164.5 1007.5h0M1164.5 1008.5h0M1164.5 1008.5h0M1165.5 1007.5h0M1165.5 1008.5h0M1165.5 1008.5h0M1166.5 1008.5h0M1166.5 1008.5h0M1166.5 1009.5h0M1166.5 1008.5h0M1167.5 1008.5h0M1167.5 1008.5h0M1167.5 1008.5h0M1168.5 1008.5h0M1168.5 1008.5h0M1168.5 1008.5h0M1168.5 1008.5h0M1169.5 1007.5h0M1169.5 1008.5h0M1169.5 1008.5h0M1170.5 1008.5h0M1170.5 1007.5h0M1170.5 1008.5h0M1170.5 1008.5h0M1171.5 1007.5h0M1171.5 1008.5h0M1171.5 1008.5h0M1172.5 1008.5h0M1172.5 1008.5h0M1172.5 1008.5h0M1172.5 1007.5h0M1173.5 1008.5h0M1173.5 1007.5h0M1173.5 1008.5h0M1174.5 1008.5h0M1174.5 1008.5h0M1174.5 1007.5h0M1174.5 1008.5h0M1175.5 1008.5h0M1175.5 1007.5h0M1175.5 1008.5h0M1176.5 1007.5h0M1176.5 1008.5h0M1176.5 1008.5h0M1176.5 1008.5h0M1177.5 1007.5h0M1177.5 1008.5h0M1177.5 1008.5h0M1178.5 1007.5h0M1178.5 1008.5h0M1178.5 1008.5h0M1178.5 1008.5h0M1179.5 1008.5h0M1179.5 1008.5h0M1179.5 1008.5h0M1180.5 1007.5h0M1180.5 1007.5h0M1180.5 1008.5h0M1180.5 1008.5h0M1181.5 1008.5h0M1181.5 1008.5h0M1181.5 1007.5h0M1182.5 1008.5h0M1182.5 1008.5h0M1182.5 1008.5h0M1183.5 1008.5h0M1183.5 1007.5h0M1183.5 1007.5h0M1183.5 1008.5h0M1184.5 1008.5h0M1184.5 1008.5h0M1184.5 1008.5h0M1185.5 1008.5h0M1185.5 1008.5h0M1185.5 1008.5h0M1185.5 1008.5h0M1186.5 1008.5h0M1186.5 1009.5h0M1186.5 1008.5h0M1187.5 1008.5h0M1187.5 1008.5h0M1187.5 1008.5h0M1187.5 1008.5h0M1188.5 1008.5h0M1188.5 1008.5h0M1188.5 1008.5h0M1189.5 1008.5h0M1189.5 1008.5h0M1189.5 1007.5h0M1189.5 1007.5h0M1190.5 1008.5h0M1190.5 1008.5h0M1190.5 1008.5h0M1191.5 1008.5h0M1191.5 1007.5h0M1191.5 1008.5h0M1191.5 1008.5h0M1192.5 1008.5h0M1192.5 1008.5h0M1192.5 1008.5h0M1193.5 1008.5h0M1193.5 1008.5h0M1193.5 1008.5h0M1193.5 1008.5h0M1194.5 1008.5h0M1194.5 1008.5h0M1194.5 1008.5h0M1195.5 1009.5h0M1195.5 1008.5h0M1195.5 1008.5h0M1195.5 1007.5h0M1196.5 1008.5h0M1196.5 1009.5h0M1196.5 1008.5h0M1197.5 1008.5h0M1197.5 1008.5h0M1197.5 1008.5h0M1198.5 1007.5h0M1198.5 1008.5h0M1198.5 1008.5h0M1198.5 1008.5h0M1199.5 1007.5h0M1199.5 1007.5h0M1199.5 1008.5h0M1200.5 1008.5h0M1200.5 1008.5h0M1200.5 1008.5h0M1200.5 1008.5h0M1201.5 1007.5h0M1201.5 1008.5h0M1201.5 1008.5h0M1202.5 1008.5h0M1202.5 1007.5h0M1202.5 1008.5h0M1202.5 1008.5h0M1203.5 1007.5h0M1203.5 1008.5h0M1203.5 1008.5h0M1204.5 1007.5h0M1204.5 1008.5h0M1204.5 1007.5h0M1204.5 1007.5h0M1205.5 1007.5h0M1205.5 1008.5h0M1205.5 1008.5h0M1206.5 1008.5h0M1206.5 1008.5h0M1206.5 1008.5h0M1206.5 1008.5h0M1207.5 1008.5h0M1207.5 1008.5h0M1207.5 1008.5h0M1208.5 1008.5h0M1208.5 1008.5h0M1208.5 1008.5h0M1208.5 1008.5h0M1209.5 1008.5h0M1209.5 1008.5h0M1209.5 1008.5h0M1210.5 1008.5h0M1210.5 1008.5h0M1210.5 1008.5h0M1210.5 1008.5h0M1211.5 1008.5h0M1211.5 1007.5h0M1211.5 1008.5h0M1212.5 1008.5h0M1212.5 1007.5h0M1212.5 1008.5h0M1212.5 1008.5h0M1213.5 1008.5h0M1213.5 1008.5h0M1213.5 1008.5h0M1214.5 1007.5h0M1214.5 1007.5h0M1214.5 1008.5h0M1215.5 1008.5h0M1215.5 1008.5h0M1215.5 1008.5h0M1215.5 1008.5h0M1216.5 1008.5h0M1216.5 1008.5h0M1216.5 1008.5h0M1217.5 1008.5h0M1217.5 1008.5h0M1217.5 1007.5h0M1217.5 1008.5h0M1218.5 1008.5h0M1218.5 1008.5h0M1218.5 1008.5h0M1219.5 1008.5h0M1219.5 1008.5h0M1219.5 1008.5h0M1219.5 1008.5h0M1220.5 1008.5h0M1220.5 1008.5h0M1220.5 1008.5h0M1221.5 1008.5h0M1221.5 1008.5h0M1221.5 1008.5h0M1221.5 1008.5h0M1222.5 1008.5h0M1222.5 1008.5h0M1222.5 1008.5h0M1223.5 1008.5h0M1223.5 1008.5h0M1223.5 1008.5h0M1223.5 1008.5h0M1224.5 1008.5h0M1224.5 1008.5h0M1224.5 1007.5h0M1225.5 1007.5h0M1225.5 1008.5h0M1225.5 1007.5h0M1225.5 1008.5h0M1226.5 1007.5h0M1226.5 1008.5h0M1226.5 1007.5h0M1227.5 1007.5h0M1227.5 1009.5h0M1227.5 1008.5h0M1227.5 1008.5h0M1228.5 1009.5h0M1228.5 1007.5h0M1228.5 1008.5h0M1229.5 1008.5h0M1229.5 1008.5h0M1229.5 1007.5h0M1229.5 1008.5h0M1230.5 1008.5h0M1230.5 1008.5h0M1230.5 1008.5h0M1231.5 1008.5h0M1231.5 1008.5h0M1231.5 1008.5h0M1232.5 1008.5h0M1232.5 1008.5h0M1232.5 1008.5h0M1232.5 1008.5h0M1233.5 1008.5h0M1233.5 1008.5h0M1233.5 1008.5h0M1234.5 1008.5h0M1234.5 1008.5h0M1234.5 1008.5h0M1234.5 1007.5h0M1235.5 1008.5h0M1235.5 1008.5h0M1235.5 1008.5h0M1236.5 1007.5h0M1236.5 1007.5h0M1236.5 1008.5h0M1236.5 1008.5h0M1237.5 1008.5h0M1237.5 1008.5h0M1237.5 1008.5h0M1238.5 1008.5h0M1238.5 1008.5h0M1238.5 1008.5h0M1238.5 1008.5h0M1239.5 1008.5h0M1239.5 1008.5h0M1239.5 1008.5h0M1240.5 1008.5h0M1240.5 1007.5h0M1240.5 1008.5h0M1240.5 1008.5h0M1241.5 1008.5h0M1241.5 1007.5h0M1241.5 1008.5h0M1242.5 1008.5h0M1242.5 1008.5h0M1242.5 1008.5h0M1242.5 1008.5h0M1243.5 1008.5h0M1243.5 1007.5h0M1243.5 1007.5h0M1244.5 1008.5h0M1244.5 1007.5h0M1244.5 1008.5h0M1244.5 1008.5h0M1245.5 1008.5h0M1245.5 1008.5h0M1245.5 1008.5h0M1246.5 1008.5h0M1246.5 1007.5h0M1246.5 1008.5h0M1247.5 1009.5h0M1247.5 1008.5h0M1247.5 1008.5h0M1247.5 1008.5h0M1248.5 1008.5h0M1248.5 1008.5h0M1248.5 1009.5h0M1249.5 1008.5h0M1249.5 1008.5h0M1249.5 1009.5h0M1249.5 1008.5h0M1250.5 1008.5h0M1250.5 1007.5h0M1250.5 1008.5h0M1251.5 1007.5h0M1251.5 1008.5h0M1251.5 1007.5h0M1251.5 1007.5h0M1252.5 1008.5h0M1252.5 1008.5h0M1252.5 1007.5h0M1253.5 1008.5h0M1253.5 1008.5h0M1253.5 1007.5h0M1253.5 1008.5h0M1254.5 1007.5h0M1254.5 1008.5h0M1254.5 1008.5h0M1255.5 1008.5h0M1255.5 1008.5h0M1255.5 1008.5h0M1255.5 1008.5h0M1256.5 1008.5h0M1256.5 1007.5h0M1256.5 1008.5h0M1257.5 1009.5h0M1257.5 1008.5h0M1257.5 1008.5h0M1257.5 1008.5h0M1258.5 1008.5h0M1258.5 1007.5h0M1258.5 1008.5h0M1259.5 1008.5h0M1259.5 1008.5h0M1259.5 1008.5h0M1259.5 1008.5h0M1260.5 1008.5h0M1260.5 1008.5h0M1260.5 1008.5h0M1261.5 1008.5h0M1261.5 1008.5h0M1261.5 1008.5h0M1261.5 1008.5h0M1262.5 1007.5h0M1262.5 1008.5h0M1262.5 1008.5h0M1263.5 1008.5h0M1263.5 1008.5h0M1263.5 1008.5h0M1264.5 1008.5h0M1264.5 1008.5h0M1264.5 1008.5h0M1264.5 1008.5h0M1265.5 1008.5h0M1265.5 1008.5h0M1265.5 1008.5h0M1266.5 1008.5h0M1266.5 1008.5h0M1266.5 1007.5h0M1266.5 1008.5h0M1267.5 1008.5h0M1267.5 1008.5h0M1267.5 1008.5h0M1268.5 1008.5h0M1268.5 1007.5h0M1268.5 1008.5h0M1268.5 1008.5h0M1269.5 1008.5h0M1269.5 1007.5h0M1269.5 1008.5h0M1270.5 1008.5h0M1270.5 1008.5h0M1270.5 1008.5h0M1270.5 1008.5h0M1271.5 1008.5h0M1271.5 1007.5h0M1271.5 1008.5h0M1272.5 1008.5h0M1272.5 1008.5h0M1272.5 1007.5h0M1272.5 1008.5h0M1273.5 1008.5h0M1273.5 1008.5h0M1273.5 1008.5h0M1274.5 1008.5h0M1274.5 1008.5h0M1274.5 1008.5h0M1274.5 1008.5h0M1275.5 1008.5h0M1275.5 1008.5h0M1275.5 1008.5h0M1276.5 1008.5h0M1276.5 1008.5h0M1276.5 1008.5h0M1276.5 1007.5h0M1277.5 1008.5h0M1277.5 1008.5h0M1277.5 1008.5h0M1278.5 1008.5h0M1278.5 1008.5h0M1278.5 1008.5h0M1279.5 1008.5h0M1279.5 1008.5h0M1279.5 1007.5h0M1279.5 1007.5h0M1280.5 1008.5h0M1280.5 1008.5h0M1280.5 1008.5h0M1281.5 1008.5h0M1281.5 1008.5h0M1281.5 1008.5h0M1281.5 1008.5h0M1282.5 1007.5h0M1282.5 1007.5h0M1282.5 1008.5h0M1283.5 1007.5h0M1283.5 1007.5h0M1283.5 1008.5h0M1283.5 1008.5h0M1284.5 1008.5h0M1284.5 1008.5h0M1284.5 1008.5h0M1285.5 1008.5h0M1285.5 1008.5h0M1285.5 1008.5h0M1285.5 1008.5h0M1286.5 1008.5h0M1286.5 1005.5h0M1286.5 1008.5h0M1287.5 1008.5h0M1287.5 1008.5h0M1287.5 1008.5h0M1287.5 1007.5h0M1288.5 1009.5h0M1288.5 1008.5h0M1288.5 1008.5h0M1289.5 1007.5h0M1289.5 1008.5h0M1289.5 1008.5h0M1289.5 1008.5h0M1290.5 1007.5h0M1290.5 1008.5h0M1290.5 1008.5h0M1291.5 1008.5h0M1291.5 1007.5h0M1291.5 1007.5h0M1291.5 1008.5h0M1292.5 1009.5h0M1292.5 1008.5h0M1292.5 1008.5h0M1293.5 1008.5h0M1293.5 1008.5h0M1293.5 1007.5h0M1293.5 1008.5h0M1294.5 1008.5h0M1294.5 1008.5h0M1294.5 1008.5h0M1295.5 1008.5h0M1295.5 1008.5h0M1295.5 1008.5h0M1296.5 1008.5h0M1296.5 1008.5h0M1296.5 1009.5h0M1296.5 1007.5h0M1297.5 1008.5h0M1297.5 1008.5h0M1297.5 1008.5h0M1298.5 1008.5h0M1298.5 1008.5h0M1298.5 1009.5h0M1298.5 1007.5h0M1299.5 1008.5h0M1299.5 1008.5h0M1299.5 1007.5h0M1300.5 1009.5h0M1300.5 1008.5h0M1300.5 1008.5h0M1300.5 1008.5h0M1301.5 1008.5h0M1301.5 1007.5h0M1301.5 1008.5h0M1302.5 1009.5h0M1302.5 1008.5h0M1302.5 1008.5h0M1302.5 1007.5h0" stroke="#000" fill="none" stroke-linecap="round" stroke-width="3"/>
<path d="M773.8 957.9H832.8" stroke="#f00" fill="none" stroke-linecap="round" stroke-width="5.1"/>
<path d="M105.5 921.5H1485.5M105.5 889.5H1485.5M105.5 856.5H1485.5M105.5 823.5H1485.5M105.5 790.5H1485.5M105.5 758.5H1485.5M105.5 1009.5H1485.5M105.5 983.5H1485.5M105.5 957.5H1485.5" stroke="#b0b0b0" stroke-width="1.11" stroke-dasharray="1.11 1.83" stroke-dashoffset="-0.9" fill="none"/>
<path d="M105.5 954.5H1485.5" stroke="#000" stroke-width="1.11" fill="none"/>
<path d="M162 1011.28V725.5M270 1011.28V725.5M407 1011.28V725.5M1124 1011.28V725.5M1303 1011.28V725.5" fill="none" stroke="#800080" stroke-width="2" stroke-dasharray="2.08 3.477"/>
</g>
<rect x="105.5" y="725.5" width="1380.0" height="286.0" fill="none" stroke="#000" stroke-width="1.11"/>
<path d="M162.5 1011.5v4.9M443.5 1011.5v4.9M725.5 1011.5v4.9M1006.5 1011.5v4.9M1287.5 1011.5v4.9" stroke="#000" stroke-width="1.11" fill="none"/><text x="163" y="1031.6" text-anchor="middle">0</text><text x="444.2" y="1031.6" text-anchor="middle">2000</text><text x="725.4" y="1031.6" text-anchor="middle">4000</text><text x="1006.7" y="1031.6" text-anchor="middle">6000</text><text x="1287.9" y="1031.6" text-anchor="middle">8000</text>
<path d="M105.5 921.5h-4.9M105.5 889.5h-4.9M105.5 856.5h-4.9M105.5 823.5h-4.9M105.5 790.5h-4.9M105.5 758.5h-4.9" stroke="#000" stroke-width="1.11" fill="none"/><text x="95.8" y="927" text-anchor="end">OBS not OK</text><text x="95.8" y="894" text-anchor="end">dr &gt; 5</text><text x="95.8" y="862" text-anchor="end">Ion. rad.</text><text x="95.8" y="829" text-anchor="end">Sat. pixel.</text><text x="95.8" y="796" text-anchor="end">not track</text><text x="95.8" y="764" text-anchor="end">not Kalman</text>
<path d="M105.5 1009.5h-4.9M105.5 983.5h-4.9M105.5 957.5h-4.9" stroke="#000" stroke-width="1.11" fill="none"/><text x="95.8" y="1014" text-anchor="end">0</text><text x="95.8" y="988" text-anchor="end">5</text><text x="95.8" y="962" text-anchor="end">10</text>
<path d="M105.5 970.5h-2.8M105.5 996.5h-2.8" stroke="#000" stroke-width="0.83" fill="none"/>
<text transform="translate(69.3 983.5) rotate(-90)" text-anchor="middle">dr</text>
</svg>
</body></html>
